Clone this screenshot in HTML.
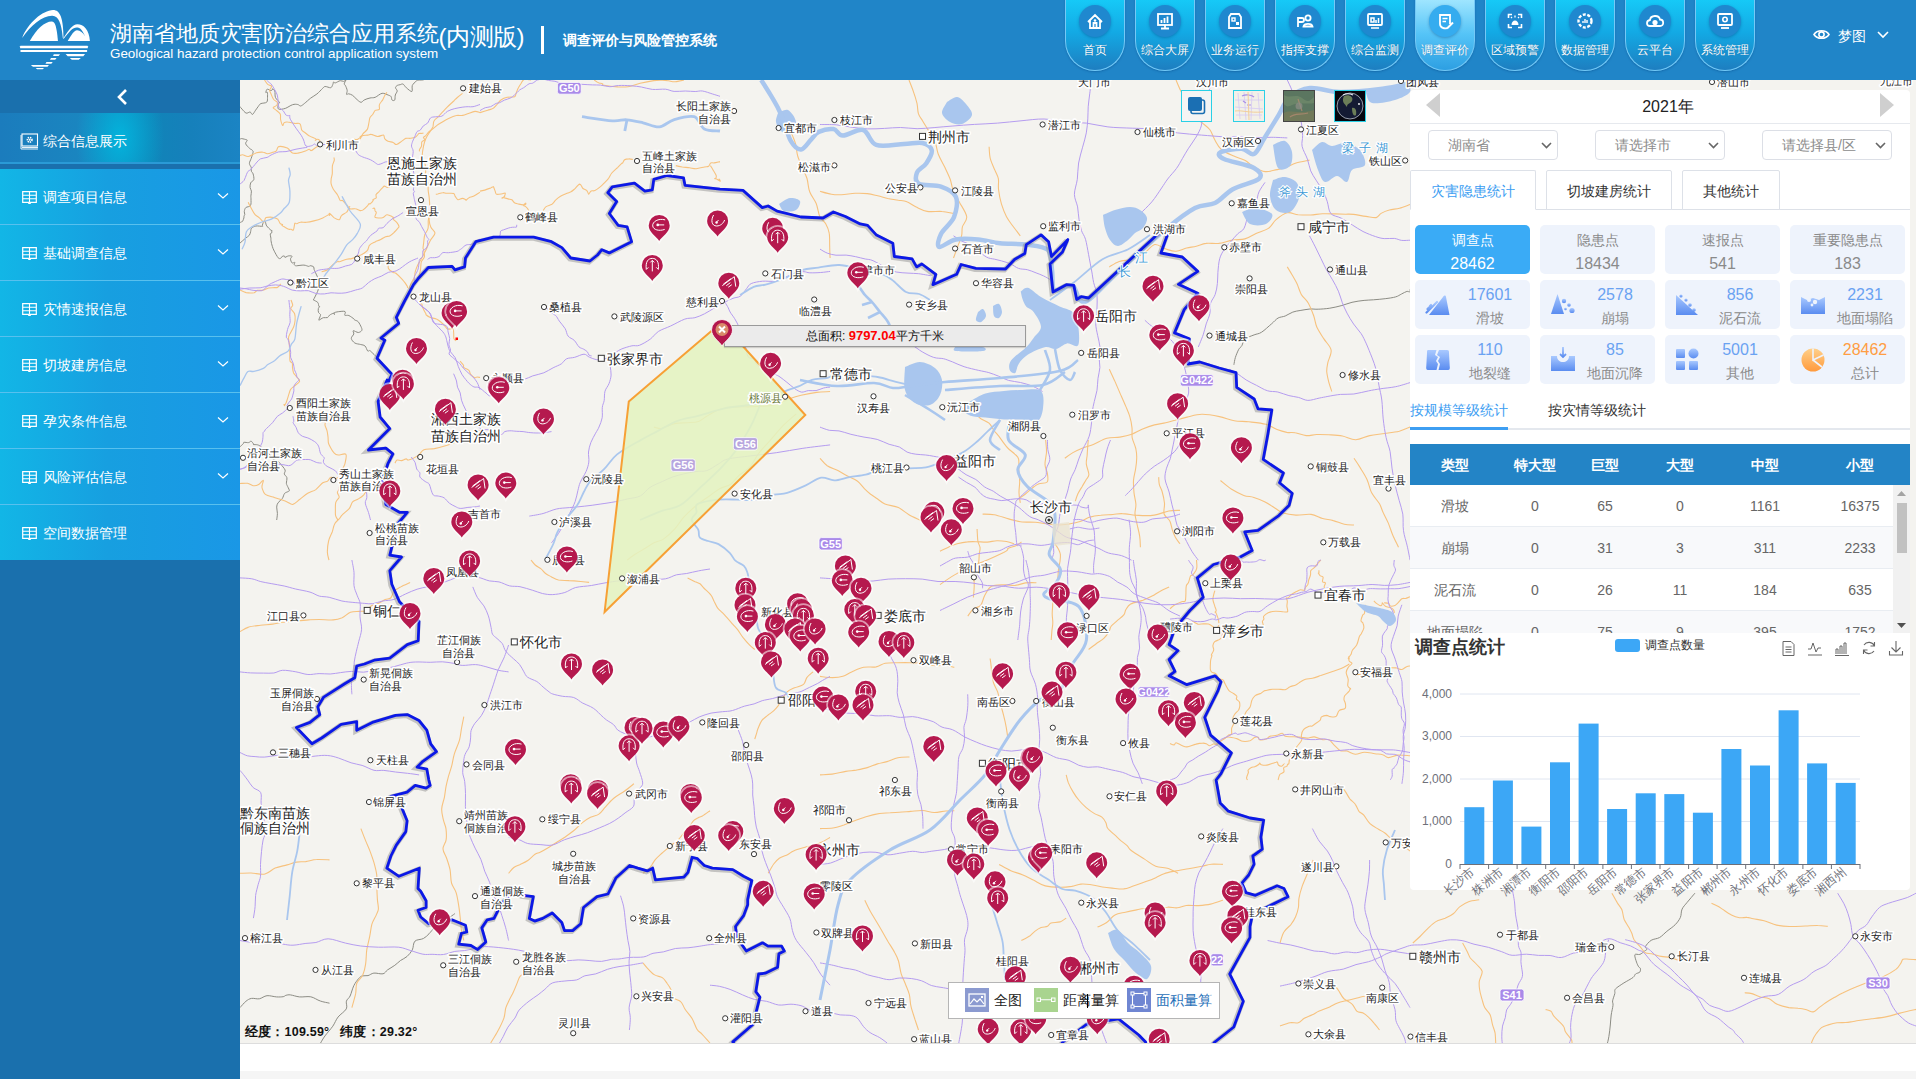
<!DOCTYPE html><html><head><meta charset="utf-8"><style>
*{margin:0;padding:0;box-sizing:border-box}
html,body{width:1916px;height:1079px;overflow:hidden;background:#f5f5f5;font-family:"Liberation Sans",sans-serif}
.a{position:absolute;white-space:nowrap}
#hdr{position:absolute;left:0;top:0;width:1916px;height:80px;background:#2085c8}
.nb{position:absolute;top:-2px;width:60px;height:73px;border-radius:0 0 30px 30px;border:1px solid #74c9f6;border-top:none;box-shadow:0 1px 2px rgba(0,60,120,.35)}
.nb .ic{position:absolute;left:13px;top:7px;width:32px;height:32px;border-radius:50%;background:#1f88cf;box-shadow:0 1px 3px rgba(0,50,110,.35)}
.nb.act .ic{background:#35acef}
.nb .ic svg{position:absolute;left:0;top:0}
.nb .nt{position:absolute;left:-6px;width:70px;top:44px;text-align:center;color:#fff;font-size:12px;line-height:16px;text-shadow:0 0 1px rgba(0,40,90,.4)}
#side{position:absolute;left:0;top:80px;width:240px;height:999px;background:#1a70ad}
.mi{position:absolute;left:0;width:240px;height:55px;background:linear-gradient(90deg,#12b6e6,#179fe0 45%,#1a97e6);color:#fff;font-size:14px}
.mi .t{position:absolute;left:43px;top:20px;line-height:16px}
.mi svg{position:absolute}
#map{position:absolute;left:240px;top:80px;width:1676px;height:963px;background:#f4f3ef;overflow:hidden}
#foot{position:absolute;left:240px;top:1043px;width:1676px;height:28px;background:#fff;border-top:1px solid #ddd}
#panel{position:absolute;left:1410px;top:90px;width:500px;height:800px;background:#fff;border-radius:4px}
</style></head><body>
<div id="map">
<svg width="1676" height="963" viewBox="240 80 1676 963" style="position:absolute;left:0;top:0" font-family="Liberation Sans, sans-serif">
<rect x="240" y="80" width="1676" height="963" fill="#f4f3ef"/>
<path d="M1233.9 364.8 C1234.1 363.6 1234.6 360.0 1235.4 357.4 C1236.2 354.8 1237.7 351.4 1238.7 349.4 C1239.8 347.5 1240.9 347.3 1241.9 345.6 C1242.9 343.9 1242.9 340.9 1244.9 339.1 C1246.9 337.3 1251.3 336.0 1254.1 334.9 C1256.9 333.7 1258.7 334.1 1261.6 332.2 C1264.5 330.4 1268.8 326.1 1271.6 323.8 C1274.4 321.4 1275.9 319.3 1278.1 318.0 C1280.4 316.8 1282.7 317.0 1285.2 316.0 C1287.6 315.0 1290.3 313.0 1292.8 312.1 C1295.3 311.2 1297.2 311.0 1300.1 310.5 C1303.0 310.0 1306.9 309.3 1309.9 309.0 C1312.9 308.8 1314.9 309.4 1318.2 309.2 C1321.5 309.1 1325.8 308.8 1329.8 308.2 C1333.7 307.6 1338.1 306.5 1341.9 305.5 C1345.6 304.5 1348.3 303.2 1352.0 302.3 C1355.7 301.4 1360.5 300.8 1364.1 300.4 C1367.6 300.0 1369.9 300.1 1373.4 299.8 C1376.9 299.5 1381.5 299.2 1385.2 298.7 C1388.9 298.2 1392.9 297.7 1395.6 296.9 C1398.3 296.2 1399.6 294.9 1401.5 294.0 C1403.4 293.1 1405.5 291.8 1406.9 291.4 C1408.2 291.1 1409.2 292.3 1409.7 291.9 C1410.3 291.5 1410.1 289.6 1410.1 289.2" fill="none" stroke="#8c8c84" stroke-width="1"/>
<path d="M454.9 913.6 C453.5 914.6 449.5 917.6 446.8 919.3 C444.1 921.1 440.7 922.9 438.7 924.2 C436.6 925.6 436.1 925.8 434.5 927.4 C432.9 929.0 430.8 932.0 429.0 933.8 C427.1 935.7 425.7 937.3 423.4 938.5 C421.0 939.8 416.7 939.3 414.9 941.2 C413.0 943.1 413.6 947.4 412.3 949.9 C410.9 952.5 408.9 954.7 407.0 956.5 C405.0 958.3 402.5 959.1 400.5 960.5 C398.5 962.0 397.0 963.7 394.8 965.3 C392.6 966.9 389.4 968.6 387.4 970.0 C385.5 971.5 385.2 973.3 383.0 973.8 C380.7 974.3 376.4 972.8 373.9 973.1 C371.4 973.4 370.0 975.1 368.0 975.6 C366.1 976.0 363.9 975.4 362.3 975.9 C360.7 976.4 360.1 977.0 358.6 978.6 C357.2 980.3 355.2 982.8 353.8 985.7 C352.4 988.6 351.3 993.4 350.1 996.0 C348.9 998.6 347.0 999.0 346.4 1001.2 C345.7 1003.3 347.7 1006.2 346.3 1008.9 C344.9 1011.5 340.3 1014.2 338.1 1017.0 C335.8 1019.9 335.0 1023.0 332.8 1026.2 C330.6 1029.3 327.0 1033.1 325.0 1035.9 C322.9 1038.7 321.3 1041.8 320.6 1043.0" fill="none" stroke="#8c8c84" stroke-width="1"/>
<path d="M240.0 1007.6 C241.0 1006.6 244.0 1002.8 245.9 1001.3 C247.8 999.8 249.2 998.8 251.5 998.4 C253.7 998.0 256.7 999.2 259.3 998.8 C261.9 998.3 264.1 996.0 267.0 995.7 C269.8 995.4 273.7 996.7 276.4 996.9 C279.1 997.1 281.6 996.9 283.2 996.7 C284.8 996.4 284.8 995.6 286.0 995.3 C287.2 995.0 288.3 994.6 290.5 994.9 C292.8 995.2 296.1 996.5 299.4 996.9 C302.8 997.2 307.3 996.2 310.8 996.8 C314.2 997.5 317.1 1000.0 320.3 1001.0 C323.4 1002.1 328.0 1002.8 329.5 1003.2" fill="none" stroke="#8c8c84" stroke-width="1"/>
<path d="M1694.9 893.2 C1693.6 894.7 1689.4 899.7 1687.2 902.3 C1685.1 905.0 1683.2 906.6 1682.1 909.1 C1680.9 911.6 1681.5 914.8 1680.4 917.4 C1679.2 920.0 1677.5 922.3 1675.2 924.7 C1673.0 927.0 1669.5 929.1 1666.9 931.3 C1664.3 933.4 1662.2 936.0 1659.6 937.5 C1657.0 939.0 1653.6 938.8 1651.2 940.3 C1648.9 941.7 1646.2 945.0 1645.5 946.5 C1644.8 948.0 1646.9 948.5 1646.8 949.3 C1646.7 950.1 1645.9 950.2 1644.7 951.0 C1643.5 951.9 1641.5 953.8 1639.9 954.4 C1638.2 955.0 1635.4 953.4 1634.9 954.7 C1634.3 956.0 1635.9 960.1 1636.5 962.1 C1637.2 964.1 1638.0 965.8 1638.7 966.8 C1639.3 967.9 1640.2 967.5 1640.4 968.4 C1640.6 969.3 1640.6 971.1 1639.8 972.1 C1639.0 973.0 1636.7 973.1 1635.6 974.0 C1634.4 974.9 1635.0 975.9 1633.1 977.4 C1631.2 978.9 1626.7 981.2 1623.9 982.9 C1621.2 984.7 1618.1 986.6 1616.6 987.9 C1615.1 989.1 1615.1 989.5 1614.8 990.4 C1614.5 991.4 1615.2 991.8 1614.8 993.6 C1614.4 995.3 1612.9 999.0 1612.6 1000.9 C1612.3 1002.9 1613.3 1002.9 1613.0 1005.3 C1612.8 1007.6 1611.6 1011.7 1611.2 1015.0 C1610.7 1018.3 1610.7 1021.5 1610.3 1025.0 C1609.9 1028.6 1609.5 1033.1 1608.9 1036.4 C1608.4 1039.7 1607.3 1043.5 1607.0 1044.9" fill="none" stroke="#8c8c84" stroke-width="1"/>
<path d="M240.0 106.5 C240.3 106.9 240.9 108.1 242.0 109.1 C243.0 110.2 244.8 112.6 246.1 113.1 C247.5 113.6 249.0 111.8 250.1 112.0 C251.2 112.3 251.6 114.8 252.5 114.4 C253.4 114.1 254.6 111.5 255.6 110.2 C256.6 108.8 257.5 107.4 258.4 106.3 C259.2 105.2 259.4 104.3 260.8 103.6 C262.2 103.0 265.6 103.2 266.7 102.2 C267.8 101.1 267.4 98.9 267.5 97.3 C267.6 95.7 267.6 93.1 267.3 92.3 C267.0 91.5 265.8 93.0 265.8 92.5 C265.8 91.9 266.5 89.4 267.3 89.1 C268.2 88.9 270.1 90.8 271.0 90.7 C271.9 90.7 272.4 89.2 272.6 89.0 C272.8 88.7 271.9 88.8 272.3 89.1 C272.7 89.4 274.3 89.5 274.8 90.9 C275.3 92.4 274.7 95.7 275.5 97.6 C276.3 99.5 279.0 101.2 279.5 102.3 C279.9 103.4 278.4 103.2 278.2 104.4 C278.1 105.5 277.4 108.4 278.6 109.1 C279.8 109.7 283.0 109.1 285.3 108.4 C287.6 107.6 290.5 105.3 292.6 104.7 C294.6 104.0 296.4 104.3 297.7 104.5 C299.1 104.7 299.5 106.1 300.6 106.0 C301.7 105.8 302.7 104.9 304.4 103.5 C306.1 102.2 308.6 99.7 310.7 98.1 C312.8 96.5 314.9 95.6 316.9 94.0 C318.9 92.4 321.2 89.7 322.6 88.4 C323.9 87.2 323.8 86.6 325.1 86.5 C326.5 86.3 329.4 88.0 330.7 87.7 C332.0 87.4 332.3 85.5 332.8 84.5 C333.3 83.6 333.2 82.2 333.6 81.9 C334.0 81.6 334.2 83.1 335.3 82.9 C336.4 82.7 338.8 80.9 340.2 80.7 C341.6 80.5 342.6 81.5 343.6 81.4 C344.6 81.3 345.6 80.2 346.0 80.0" fill="none" stroke="#8c8c84" stroke-width="1"/>
<path d="M346.0 80.0 C345.7 80.6 344.3 83.0 344.2 83.9 C344.1 84.8 344.8 84.3 345.3 85.3 C345.8 86.4 347.0 88.9 347.2 90.4 C347.4 91.9 346.2 93.7 346.5 94.3 C346.7 94.9 347.7 93.7 348.7 93.8 C349.7 94.0 351.3 94.5 352.5 95.3 C353.8 96.1 354.6 97.5 356.0 98.6 C357.4 99.8 359.5 102.1 360.9 102.3 C362.3 102.5 362.7 100.7 364.2 100.0 C365.7 99.2 368.1 98.4 370.0 98.0 C371.8 97.5 373.1 98.1 375.2 97.3 C377.2 96.5 379.9 93.7 382.1 93.3 C384.3 93.0 386.8 94.6 388.3 95.1 C389.8 95.7 390.5 95.8 391.1 96.6 C391.7 97.4 391.4 99.4 392.0 100.0 C392.6 100.6 394.2 100.9 394.7 100.1 C395.3 99.2 394.9 96.5 395.3 95.0 C395.7 93.5 397.2 92.2 397.2 91.0 C397.3 89.8 395.5 88.7 395.5 87.7 C395.5 86.8 396.5 85.9 397.3 85.4 C398.1 84.9 399.1 85.0 400.1 84.7 C401.1 84.5 402.0 83.6 403.1 84.1 C404.1 84.6 404.9 86.6 406.4 87.8 C407.9 89.1 411.0 91.9 411.9 91.5 C412.9 91.1 411.6 87.2 412.3 85.5 C413.0 83.8 415.1 82.1 416.1 81.2 C417.1 80.3 417.1 80.4 418.3 80.2 C419.6 80.0 422.7 80.0 423.5 80.0" fill="none" stroke="#8c8c84" stroke-width="1"/>
<path d="M240.0 139.1 C240.3 139.1 240.7 138.5 241.8 138.6 C242.9 138.8 245.8 139.5 246.7 139.8 C247.6 140.2 247.2 140.1 247.0 140.8 C246.9 141.4 245.3 142.5 245.7 143.8 C246.1 145.1 248.6 147.5 249.6 148.4 C250.6 149.4 251.3 149.3 251.8 149.7 C252.2 150.0 252.2 150.1 252.4 150.5 C252.7 150.9 253.4 150.8 253.1 152.2 C252.9 153.5 251.8 156.6 251.2 158.4 C250.6 160.3 249.4 161.8 249.4 163.4 C249.4 164.9 251.0 166.4 251.3 167.7 C251.6 169.0 251.0 170.1 251.3 171.1 C251.6 172.1 252.7 172.4 253.1 173.9 C253.5 175.3 254.2 178.2 253.8 179.7 C253.4 181.1 251.3 181.4 250.7 182.8 C250.1 184.1 250.0 186.2 250.1 187.6 C250.2 189.0 251.3 189.7 251.4 191.1 C251.5 192.4 251.0 194.6 250.9 195.9 C250.8 197.2 251.0 197.3 251.0 198.9 C250.9 200.6 251.4 204.1 250.5 205.5 C249.7 207.0 246.9 206.6 245.8 207.6 C244.8 208.6 244.5 210.3 244.3 211.4 C244.1 212.5 244.8 213.6 244.8 214.4 C244.7 215.2 244.1 215.5 244.0 216.1 C243.8 216.6 244.2 217.1 243.9 217.9 C243.7 218.8 243.0 220.6 242.6 221.3 C242.2 222.0 241.8 221.7 241.4 221.9 C240.9 222.1 240.2 222.6 240.0 222.7" fill="none" stroke="#8c8c84" stroke-width="1"/>
<path d="M240.0 243.1 C240.9 242.3 243.7 239.8 245.3 238.4 C246.8 237.1 248.5 236.4 249.4 235.2 C250.3 234.0 250.3 232.5 250.7 231.3 C251.0 230.2 250.7 229.1 251.6 228.2 C252.4 227.3 254.0 226.4 255.9 226.0 C257.7 225.7 261.4 226.5 262.5 226.3 C263.6 226.1 262.1 225.9 262.4 225.0 C262.7 224.0 263.8 221.1 264.3 220.7 C264.8 220.2 265.1 221.4 265.5 222.3 C265.9 223.2 265.8 224.7 266.7 225.9 C267.6 227.2 269.9 229.3 270.8 230.1 C271.7 230.9 271.9 230.6 272.0 230.6 C272.2 230.7 271.8 230.1 271.7 230.4 C271.7 230.8 272.0 232.3 271.8 232.8 C271.5 233.4 270.4 233.1 270.2 233.9 C270.1 234.8 270.7 236.8 270.9 238.0 C271.0 239.1 270.8 239.3 271.0 240.7 C271.2 242.1 271.7 244.6 272.3 246.3 C272.8 248.1 273.3 249.3 274.3 251.2 C275.3 253.1 277.1 256.6 278.2 257.8 C279.2 259.0 279.9 258.6 280.7 258.3 C281.4 258.0 282.0 256.3 282.7 256.0 C283.4 255.7 284.4 256.2 284.8 256.4 C285.1 256.7 284.8 257.4 285.0 257.5 C285.2 257.6 285.5 257.2 285.9 257.0 C286.3 256.8 286.8 256.5 287.3 256.3 C287.9 256.1 288.5 255.7 289.3 255.8 C290.1 255.8 291.9 255.9 292.1 256.4 C292.3 256.9 290.5 257.8 290.5 258.9 C290.5 259.9 291.3 262.3 292.0 262.9 C292.8 263.5 294.4 262.1 294.8 262.4 C295.2 262.6 294.1 264.0 294.2 264.5 C294.3 265.1 295.0 265.4 295.4 265.6 C295.8 265.8 295.1 265.9 296.5 265.8 C297.9 265.7 301.9 265.0 303.9 265.1 C305.9 265.2 307.6 266.3 308.7 266.4 C309.8 266.5 309.5 265.6 310.3 265.7 C311.1 265.8 313.0 266.2 313.6 266.8 C314.2 267.4 313.8 268.5 314.1 269.4 C314.4 270.3 314.6 270.5 315.4 272.4 C316.2 274.2 318.2 278.2 318.9 280.5 C319.5 282.8 319.3 284.4 319.0 286.2 C318.8 288.0 318.5 289.1 317.6 291.4 C316.6 293.7 314.1 298.6 313.4 300.0" fill="none" stroke="#8c8c84" stroke-width="1"/>
<path d="M313.4 300.0 C314.1 300.4 316.9 301.4 317.8 302.5 C318.7 303.5 318.5 305.7 318.8 306.3 C319.1 307.0 319.8 306.1 319.7 306.4 C319.7 306.8 318.6 307.4 318.4 308.4 C318.1 309.4 318.1 311.4 318.5 312.5 C318.8 313.5 320.4 313.6 320.6 314.6 C320.7 315.7 319.3 318.1 319.1 319.0 C318.9 319.9 318.5 320.3 319.1 320.1 C319.8 319.9 321.9 318.1 323.3 317.7 C324.7 317.3 326.4 318.0 327.5 317.6 C328.5 317.2 328.5 315.8 329.6 315.1 C330.6 314.4 332.8 313.3 333.7 313.2 C334.5 313.1 334.4 314.7 334.5 314.6 C334.5 314.6 333.5 313.3 334.1 312.8 C334.7 312.3 336.5 312.0 338.3 311.7 C340.1 311.5 343.9 310.9 345.0 311.5 C346.1 312.0 344.4 314.5 344.7 315.1 C344.9 315.8 345.7 315.3 346.4 315.4 C347.1 315.5 347.7 315.0 349.0 315.6 C350.3 316.2 353.2 318.3 354.1 319.1 C355.0 319.8 353.9 319.6 354.6 320.0 C355.2 320.4 357.1 320.5 358.2 321.7 C359.3 323.0 360.8 326.1 361.4 327.5 C362.0 329.0 362.2 329.8 361.7 330.6 C361.2 331.4 359.7 332.4 358.3 332.5 C356.9 332.5 354.0 330.5 353.3 330.7 C352.5 331.0 354.1 332.7 353.8 334.0 C353.5 335.2 351.1 336.9 351.3 338.4 C351.4 339.9 353.3 342.0 354.8 343.0 C356.4 344.0 359.0 344.0 360.7 344.5 C362.4 345.0 363.9 344.9 365.0 346.0 C366.2 347.1 366.9 350.1 367.6 350.9 C368.4 351.6 369.1 350.5 369.6 350.5 C370.0 350.5 369.6 350.3 370.3 350.9 C371.0 351.6 372.6 353.1 374.0 354.4 C375.4 355.8 377.9 358.4 378.7 359.1" fill="none" stroke="#8c8c84" stroke-width="1"/>
<path d="M240.0 446.8 C240.6 446.2 242.9 444.2 243.5 443.4 C244.2 442.6 243.1 442.4 243.9 442.3 C244.8 442.1 247.4 442.8 248.6 442.6 C249.8 442.4 250.3 441.0 251.1 441.2 C251.9 441.4 253.0 443.3 253.4 443.8 C253.8 444.4 252.6 444.4 253.3 444.5 C254.0 444.7 256.2 444.5 257.4 444.8 C258.6 445.1 260.1 445.8 260.7 446.3 C261.3 446.9 260.7 447.5 260.9 448.3 C261.2 449.2 261.4 450.7 262.5 451.3 C263.6 452.0 266.2 451.4 267.6 452.1 C268.9 452.9 269.7 454.8 270.6 456.0 C271.6 457.2 272.0 458.7 273.2 459.5 C274.5 460.4 276.8 460.5 278.0 461.3 C279.3 462.0 279.5 462.6 280.6 464.1 C281.8 465.5 284.5 468.4 285.1 470.0 C285.7 471.7 284.0 472.8 284.3 474.0 C284.6 475.3 286.5 476.1 286.9 477.7 C287.2 479.2 286.3 482.0 286.4 483.2 C286.4 484.5 286.6 484.2 287.1 485.4 C287.6 486.5 289.0 489.1 289.3 490.1 C289.5 491.1 289.4 490.8 288.6 491.3 C287.9 491.9 285.7 492.2 284.6 493.4 C283.6 494.6 283.4 497.0 282.3 498.5 C281.2 500.1 279.0 501.4 278.0 502.8 C277.1 504.2 276.8 505.3 276.7 507.1 C276.6 508.8 277.4 511.2 277.4 513.4 C277.4 515.5 276.8 518.9 276.7 520.0" fill="none" stroke="#8c8c84" stroke-width="1"/>
<path d="M462.5 93.4 C461.6 94.0 458.7 96.3 457.3 97.5 C455.8 98.8 455.5 99.3 453.8 101.0 C452.0 102.7 449.3 105.0 446.7 107.6 C444.2 110.1 440.7 114.0 438.6 116.3 C436.5 118.5 434.9 119.2 434.0 121.0 C433.0 122.8 433.5 125.2 432.9 127.0 C432.2 128.7 431.2 129.6 430.1 131.4 C428.9 133.3 427.1 135.7 426.0 138.2 C424.9 140.6 424.1 143.1 423.5 146.1 C422.9 149.1 422.1 153.2 422.3 156.2 C422.6 159.2 424.5 161.4 425.1 164.0 C425.6 166.5 425.6 169.4 425.7 171.4 C425.7 173.4 424.8 173.8 425.2 175.8 C425.6 177.7 427.4 180.5 427.9 183.0 C428.4 185.4 428.0 188.1 428.2 190.5 C428.4 193.0 429.0 194.9 429.2 197.7 C429.5 200.5 429.7 203.7 429.7 207.5 C429.7 211.2 429.0 216.8 429.2 220.2 C429.4 223.5 429.9 225.2 430.9 227.3 C431.9 229.5 435.1 230.9 435.0 233.1 C434.9 235.3 431.8 237.7 430.3 240.4 C428.9 243.0 427.8 246.0 426.3 249.2 C424.8 252.3 422.6 256.3 421.2 259.1 C419.7 261.8 418.4 263.6 417.4 265.7 C416.4 267.8 415.7 269.9 415.2 271.8 C414.7 273.8 415.0 275.6 414.3 277.5 C413.7 279.4 412.1 281.1 411.2 283.0 C410.3 285.0 409.5 288.1 409.1 289.2" fill="none" stroke="#f7c27e" stroke-width="1.1"/>
<path d="M653.9 427.1 C655.1 427.4 659.0 428.7 661.0 428.6 C663.0 428.6 663.4 427.6 665.8 426.8 C668.3 425.9 672.0 424.1 675.7 423.4 C679.3 422.7 683.9 423.0 687.7 422.7 C691.5 422.4 695.4 422.4 698.5 421.4 C701.5 420.4 702.9 418.5 706.0 416.7 C709.1 414.9 713.4 412.0 717.1 410.5 C720.8 409.0 724.3 408.2 728.3 407.5 C732.2 406.9 737.1 406.9 740.8 406.8 C744.4 406.7 746.3 406.9 750.2 406.8 C754.2 406.7 760.1 406.5 764.3 406.2 C768.5 405.8 771.3 405.9 775.5 404.6 C779.7 403.4 785.2 400.3 789.5 398.7 C793.7 397.2 796.6 396.3 801.1 395.3 C805.7 394.2 811.8 393.0 816.7 392.4 C821.5 391.8 827.9 391.7 830.1 391.5" fill="none" stroke="#f7c27e" stroke-width="1.1"/>
<path d="M627.2 560.2 C628.4 559.2 631.7 556.5 634.7 554.5 C637.8 552.5 642.4 550.0 645.7 548.0 C649.0 546.0 651.6 544.1 654.5 542.6 C657.5 541.1 660.1 541.3 663.4 539.1 C666.8 536.8 671.2 532.8 674.6 529.1 C678.0 525.4 680.2 521.1 683.8 517.1 C687.5 513.1 692.3 508.8 696.6 505.3 C700.9 501.7 705.8 498.5 709.7 495.7 C713.6 492.9 716.6 490.5 720.1 488.5 C723.6 486.6 727.6 486.4 730.7 484.2 C733.9 482.0 735.8 478.3 739.0 475.4 C742.1 472.6 746.6 470.8 749.8 467.2 C753.1 463.5 755.2 458.0 758.6 453.5 C762.0 449.1 766.1 445.0 770.3 440.3 C774.4 435.6 779.0 429.8 783.3 425.4 C787.7 421.0 794.1 415.7 796.3 413.8" fill="none" stroke="#f7c27e" stroke-width="1.1"/>
<path d="M787.4 124.5 C788.3 126.4 791.2 132.8 792.7 136.1 C794.1 139.5 795.0 141.4 795.8 144.6 C796.7 147.9 796.5 151.8 797.6 155.6 C798.6 159.4 800.8 163.8 802.4 167.6 C804.0 171.5 805.7 174.5 807.0 178.5 C808.2 182.5 808.1 187.7 809.7 191.8 C811.2 196.0 814.5 199.4 816.2 203.5 C817.9 207.7 818.3 213.5 819.9 216.8 C821.5 220.2 824.2 221.0 825.7 223.7 C827.3 226.5 828.6 229.3 829.2 233.2 C829.9 237.1 829.5 243.0 829.7 247.1 C829.8 251.3 830.0 256.2 830.1 258.0" fill="none" stroke="#f7c27e" stroke-width="1.1"/>
<path d="M329.0 560.2 C328.7 558.9 327.5 555.6 327.4 552.4 C327.3 549.2 327.8 544.4 328.6 541.0 C329.4 537.6 331.1 534.9 332.2 532.0 C333.2 529.1 333.5 526.0 334.8 523.7 C336.0 521.5 338.3 519.9 339.6 518.4 C340.8 516.9 340.6 516.4 342.2 514.8 C343.8 513.1 347.4 510.8 349.2 508.6 C350.9 506.5 351.2 503.4 352.6 501.9 C354.1 500.4 355.8 500.5 357.7 499.3 C359.6 498.2 362.0 497.0 363.8 494.9 C365.6 492.7 366.8 488.9 368.4 486.5 C370.1 484.1 372.7 481.5 373.5 480.5" fill="none" stroke="#f7c27e" stroke-width="1.1"/>
<path d="M909.0 80.0 C909.7 81.9 912.1 87.7 913.4 91.6 C914.8 95.4 916.1 99.6 917.0 103.3 C917.8 107.0 917.5 110.7 918.4 113.6 C919.3 116.5 921.0 118.2 922.5 120.8 C924.0 123.4 925.6 125.9 927.6 129.1 C929.6 132.3 932.8 135.8 934.6 140.0 C936.4 144.1 936.5 149.5 938.2 154.0 C939.9 158.5 942.7 162.8 944.7 167.0 C946.7 171.2 948.8 175.5 950.2 179.2 C951.5 182.9 951.4 185.5 952.9 189.4 C954.4 193.2 957.1 197.6 959.4 202.2 C961.8 206.7 966.2 212.6 966.7 216.7 C967.2 220.8 963.3 223.6 962.4 226.8 C961.6 229.9 962.4 232.5 961.6 235.7 C960.9 239.0 959.1 242.6 957.8 246.3 C956.4 250.1 954.2 256.1 953.5 258.0" fill="none" stroke="#f7c27e" stroke-width="1.1"/>
<path d="M989.1 146.8 C989.3 148.8 989.3 154.8 990.3 158.7 C991.3 162.7 993.6 167.0 995.0 170.4 C996.3 173.7 997.8 175.6 998.4 178.9 C998.9 182.1 998.0 185.8 998.6 190.0 C999.1 194.1 1000.1 199.3 1001.4 203.8 C1002.8 208.2 1004.5 212.9 1006.5 216.8 C1008.5 220.6 1011.1 223.6 1013.4 226.8 C1015.7 229.9 1019.1 234.3 1020.3 235.8" fill="none" stroke="#f7c27e" stroke-width="1.1"/>
<path d="M820.0 191.3 C821.9 191.8 827.8 193.7 831.4 194.2 C834.9 194.8 837.4 194.9 841.4 194.7 C845.3 194.6 850.8 193.5 855.1 193.3 C859.4 193.1 863.5 193.2 867.3 193.6 C871.0 194.0 874.3 195.0 877.7 195.8 C881.2 196.6 884.4 197.7 887.8 198.5 C891.3 199.2 895.2 199.6 898.4 200.2 C901.6 200.7 903.9 200.6 906.9 201.8 C909.9 202.9 912.8 205.5 916.2 207.1 C919.5 208.7 922.8 210.7 927.1 211.4 C931.4 212.2 937.6 211.1 942.0 211.5 C946.4 211.8 951.6 213.2 953.5 213.5" fill="none" stroke="#f7c27e" stroke-width="1.1"/>
<path d="M1109.3 266.9 C1110.9 266.0 1115.4 262.7 1119.2 261.4 C1123.0 260.1 1127.7 260.6 1131.9 259.2 C1136.2 257.8 1140.8 255.4 1144.6 253.0 C1148.4 250.5 1151.2 245.2 1154.8 244.5 C1158.3 243.9 1162.3 247.9 1165.9 249.1 C1169.4 250.2 1172.6 251.5 1176.0 251.3 C1179.5 251.1 1183.3 248.8 1186.6 248.0 C1190.0 247.2 1193.1 247.0 1196.3 246.2 C1199.5 245.5 1202.3 243.8 1206.0 243.4 C1209.8 242.9 1214.2 243.9 1218.7 243.4 C1223.1 242.8 1228.4 240.8 1232.7 240.1 C1237.1 239.3 1241.1 240.0 1244.9 238.9 C1248.8 237.8 1252.1 235.2 1256.0 233.4 C1259.9 231.7 1265.1 230.7 1268.4 228.4 C1271.7 226.2 1272.9 222.4 1276.1 219.7 C1279.2 217.1 1283.5 213.6 1287.2 212.8 C1290.9 212.0 1294.2 214.3 1298.1 214.7 C1302.0 215.0 1306.5 215.1 1310.6 215.0 C1314.6 214.8 1318.3 214.0 1322.4 213.8 C1326.5 213.6 1331.3 213.8 1335.2 213.9 C1339.1 214.0 1342.9 214.1 1345.9 214.2 C1348.9 214.2 1349.9 214.0 1353.3 214.4 C1356.6 214.8 1362.2 215.9 1366.0 216.4 C1369.8 216.9 1373.7 218.0 1376.2 217.6 C1378.7 217.1 1378.9 214.7 1381.1 213.4 C1383.2 212.2 1386.2 210.8 1389.3 210.0 C1392.4 209.1 1396.0 209.2 1399.5 208.3 C1402.9 207.4 1408.3 205.2 1410.1 204.6" fill="none" stroke="#f7c27e" stroke-width="1.1"/>
<path d="M1064.8 458.3 C1066.1 457.3 1070.0 454.3 1072.9 452.6 C1075.8 450.9 1078.8 449.6 1082.2 448.2 C1085.6 446.9 1089.2 446.1 1093.3 444.5 C1097.4 442.8 1102.4 439.5 1106.8 438.3 C1111.3 437.1 1115.8 437.8 1119.9 437.1 C1124.1 436.4 1128.2 435.5 1131.8 434.2 C1135.5 432.9 1138.2 430.9 1142.0 429.3 C1145.7 427.8 1150.5 426.0 1154.5 424.9 C1158.4 423.8 1162.3 423.6 1165.7 422.8 C1169.1 422.0 1171.4 421.1 1175.0 420.2 C1178.5 419.2 1182.6 418.1 1187.1 417.1 C1191.6 416.1 1196.5 414.4 1201.9 414.3 C1207.3 414.2 1214.0 415.5 1219.4 416.6 C1224.8 417.6 1229.3 419.9 1234.2 420.7 C1239.1 421.6 1243.6 421.2 1248.9 421.8 C1254.2 422.4 1261.2 423.0 1265.9 424.3 C1270.6 425.6 1273.6 428.2 1277.1 429.6 C1280.5 430.9 1283.7 431.8 1286.8 432.4 C1289.8 432.9 1292.0 432.2 1295.2 432.8 C1298.4 433.3 1302.6 435.3 1306.1 435.6 C1309.7 435.9 1312.8 434.7 1316.6 434.5 C1320.3 434.4 1324.5 434.5 1328.8 434.7 C1333.1 435.0 1337.9 435.2 1342.4 436.0 C1346.8 436.9 1351.2 439.9 1355.7 439.8 C1360.3 439.7 1364.9 436.6 1369.7 435.6 C1374.6 434.5 1380.1 434.3 1385.0 433.5 C1389.9 432.8 1395.1 432.2 1399.3 431.2 C1403.4 430.1 1408.3 427.8 1410.1 427.1" fill="none" stroke="#f7c27e" stroke-width="1.1"/>
<path d="M1109.3 369.3 C1110.1 371.1 1112.6 376.4 1114.5 380.4 C1116.3 384.5 1118.3 389.2 1120.2 393.6 C1122.1 397.9 1124.2 402.6 1125.8 406.4 C1127.4 410.3 1128.8 413.0 1129.8 416.6 C1130.9 420.1 1131.6 424.3 1132.0 427.9 C1132.4 431.4 1131.6 434.3 1132.2 437.8 C1132.9 441.2 1135.0 445.1 1135.8 448.5 C1136.5 451.9 1136.8 454.6 1136.7 458.0 C1136.7 461.4 1136.2 465.2 1135.6 468.9 C1135.1 472.6 1133.8 476.2 1133.5 480.2 C1133.3 484.1 1133.6 488.7 1134.0 492.7 C1134.4 496.7 1135.7 500.8 1135.9 504.3 C1136.1 507.8 1134.8 510.6 1135.0 513.9 C1135.2 517.2 1136.2 520.3 1137.0 524.0 C1137.8 527.8 1139.2 532.5 1139.7 536.4 C1140.3 540.3 1140.3 545.5 1140.4 547.3" fill="none" stroke="#f7c27e" stroke-width="1.1"/>
<path d="M975.8 413.8 C976.6 414.6 978.7 417.2 980.9 418.8 C983.2 420.3 986.8 421.3 989.0 423.2 C991.2 425.2 992.4 428.3 994.0 430.5 C995.7 432.7 997.1 434.1 998.8 436.2 C1000.4 438.3 1002.1 441.0 1003.8 443.1 C1005.4 445.3 1006.8 447.2 1008.7 449.0 C1010.5 450.8 1013.2 452.4 1014.8 454.1 C1016.5 455.8 1017.9 456.1 1018.6 459.0 C1019.3 462.0 1018.6 468.1 1018.8 471.8 C1019.0 475.6 1019.7 477.9 1019.7 481.4 C1019.7 484.9 1018.9 489.2 1019.0 492.8 C1019.0 496.3 1020.0 501.1 1020.3 502.8" fill="none" stroke="#f7c27e" stroke-width="1.1"/>
<path d="M1287.3 266.9 C1288.0 268.1 1290.1 271.4 1291.7 274.2 C1293.3 277.0 1295.3 280.2 1296.9 283.6 C1298.5 286.9 1299.4 291.1 1301.3 294.4 C1303.2 297.7 1306.3 299.7 1308.4 303.2 C1310.4 306.8 1312.3 311.7 1313.7 315.7 C1315.1 319.8 1315.2 323.4 1316.9 327.3 C1318.6 331.1 1321.5 335.1 1323.9 338.9 C1326.3 342.7 1330.4 346.1 1331.1 350.0 C1331.8 353.9 1328.7 358.8 1327.9 362.3 C1327.2 365.9 1326.6 368.1 1326.7 371.3 C1326.9 374.6 1327.9 378.6 1328.7 381.9 C1329.6 385.3 1331.3 389.9 1331.8 391.5" fill="none" stroke="#f7c27e" stroke-width="1.1"/>
<path d="M1354.0 458.3 C1355.1 459.9 1358.1 464.3 1360.3 467.9 C1362.5 471.4 1365.3 475.6 1367.1 479.7 C1369.0 483.8 1369.5 488.6 1371.5 492.6 C1373.6 496.6 1377.5 500.5 1379.5 503.8 C1381.4 507.2 1381.6 509.3 1383.1 512.4 C1384.5 515.6 1386.6 519.1 1388.2 522.9 C1389.8 526.6 1391.0 530.9 1392.7 535.0 C1394.4 539.1 1397.6 545.2 1398.5 547.3" fill="none" stroke="#f7c27e" stroke-width="1.1"/>
<path d="M1220.5 480.5 C1222.3 481.9 1227.3 486.5 1231.2 489.0 C1235.1 491.4 1240.1 494.0 1243.8 495.4 C1247.6 496.8 1250.4 496.3 1253.9 497.4 C1257.5 498.5 1261.5 500.0 1265.1 501.9 C1268.7 503.7 1272.6 506.6 1275.6 508.5 C1278.6 510.4 1279.7 511.9 1283.1 513.1 C1286.5 514.2 1291.2 514.9 1295.9 515.1 C1300.6 515.4 1306.6 513.8 1311.1 514.4 C1315.5 515.0 1318.9 517.5 1322.6 518.5 C1326.3 519.5 1329.7 519.6 1333.3 520.6 C1336.9 521.5 1340.8 523.5 1344.3 524.2 C1347.7 525.0 1352.4 524.9 1354.0 525.0" fill="none" stroke="#f7c27e" stroke-width="1.1"/>
<path d="M820.0 458.3 C821.2 459.5 824.2 463.6 827.2 465.7 C830.2 467.7 834.5 468.9 837.9 470.6 C841.3 472.3 844.2 474.3 847.5 476.0 C850.7 477.7 854.5 478.8 857.3 481.0 C860.2 483.1 862.3 486.6 864.6 488.9 C866.8 491.1 868.5 492.6 870.6 494.3 C872.8 495.9 875.0 497.2 877.3 498.8 C879.7 500.4 881.4 502.5 884.9 503.9 C888.4 505.4 894.5 505.9 898.4 507.6 C902.3 509.4 904.9 512.3 908.6 514.4 C912.2 516.5 916.6 518.4 920.4 520.2 C924.2 522.0 929.5 524.2 931.3 525.0" fill="none" stroke="#f7c27e" stroke-width="1.1"/>
<path d="M1176.0 80.0 C1176.8 81.8 1179.2 87.7 1180.7 90.7 C1182.2 93.7 1183.6 95.0 1185.3 97.9 C1187.0 100.9 1189.3 105.4 1191.0 108.6 C1192.7 111.9 1193.7 114.9 1195.5 117.2 C1197.4 119.6 1199.7 120.8 1202.1 122.8 C1204.5 124.9 1207.8 126.9 1209.9 129.8 C1212.0 132.6 1213.0 136.7 1214.9 140.0 C1216.8 143.3 1218.2 146.8 1221.4 149.5 C1224.5 152.2 1229.8 154.3 1233.8 156.1 C1237.8 158.0 1242.0 158.8 1245.3 160.6 C1248.6 162.4 1250.3 165.1 1253.6 166.9 C1256.9 168.7 1261.3 171.1 1265.2 171.6 C1269.1 172.0 1273.5 170.3 1276.9 169.6 C1280.3 168.9 1282.6 168.5 1285.8 167.4 C1289.0 166.2 1292.1 164.2 1296.1 163.0 C1300.0 161.8 1307.3 160.6 1309.5 160.1" fill="none" stroke="#f7c27e" stroke-width="1.1"/>
<path d="M240.0 631.6 C241.4 630.9 245.2 628.1 248.6 627.1 C252.0 626.0 256.4 625.8 260.5 625.3 C264.5 624.8 269.0 624.6 272.7 624.1 C276.5 623.6 278.7 622.8 282.8 622.3 C286.9 621.8 292.9 621.3 297.2 620.9 C301.5 620.5 305.0 620.2 308.7 619.9 C312.3 619.7 315.1 619.5 319.2 619.5 C323.3 619.5 329.4 620.2 333.2 619.9 C337.0 619.6 339.3 618.9 342.2 617.7 C345.1 616.4 347.5 613.4 350.5 612.3 C353.4 611.3 357.2 611.7 359.8 611.4 C362.3 611.1 363.6 611.7 365.6 610.7 C367.6 609.7 369.6 606.8 371.8 605.5 C373.9 604.3 376.3 604.2 378.6 603.2 C380.8 602.2 383.1 600.5 385.2 599.6 C387.2 598.7 389.2 599.5 390.7 598.0 C392.2 596.6 392.6 592.7 394.1 590.9 C395.7 589.1 398.6 588.2 400.1 587.3 C401.6 586.4 401.7 586.3 403.3 585.5 C405.0 584.7 409.0 582.9 410.1 582.4" fill="none" stroke="#f7c27e" stroke-width="1.1"/>
<path d="M463.8 716.7 C463.4 718.7 462.1 725.1 461.4 729.0 C460.7 732.9 460.6 736.0 459.5 740.1 C458.3 744.3 455.6 749.8 454.3 754.1 C453.0 758.4 452.7 762.2 451.7 765.9 C450.7 769.7 449.3 773.2 448.4 776.6 C447.5 780.0 446.8 782.8 446.1 786.2 C445.4 789.7 445.1 793.5 444.4 797.3 C443.6 801.1 441.8 805.2 441.7 809.0 C441.5 812.7 442.7 816.6 443.4 819.9 C444.1 823.3 445.5 825.5 446.0 828.9 C446.4 832.2 446.6 836.6 446.1 839.9 C445.6 843.2 442.9 845.8 443.0 848.9 C443.1 852.0 445.6 855.2 446.8 858.7 C448.0 862.2 449.3 865.9 450.1 869.9 C450.9 874.0 450.5 879.2 451.5 883.0 C452.5 886.7 454.9 888.6 456.1 892.6 C457.4 896.6 458.2 902.5 458.9 906.9 C459.6 911.3 459.9 915.0 460.3 918.9 C460.7 922.7 460.9 926.4 461.4 930.0 C462.0 933.7 463.4 938.7 463.8 940.5" fill="none" stroke="#f7c27e" stroke-width="1.1"/>
<path d="M508.6 873.3 C509.5 872.4 511.9 868.9 513.8 867.5 C515.8 866.0 517.9 865.7 520.2 864.6 C522.5 863.4 525.3 862.2 527.8 860.5 C530.2 858.8 532.9 855.7 535.0 854.3 C537.0 853.0 538.0 853.2 540.1 852.2 C542.1 851.2 544.5 849.9 547.3 848.2 C550.2 846.5 554.4 843.8 557.2 842.0 C560.0 840.3 561.3 839.6 564.0 837.7 C566.7 835.8 570.5 833.3 573.6 830.8 C576.7 828.3 579.6 824.8 582.4 822.6 C585.2 820.3 587.8 818.7 590.5 817.3 C593.3 815.9 596.5 815.8 598.9 814.1 C601.4 812.4 602.9 809.8 605.3 807.2 C607.7 804.6 610.2 801.2 613.5 798.5 C616.7 795.8 621.3 793.4 624.7 791.0 C628.1 788.6 632.4 785.0 633.9 783.8" fill="none" stroke="#f7c27e" stroke-width="1.1"/>
<path d="M642.9 873.3 C643.9 872.5 647.8 869.9 649.3 868.4 C650.9 866.9 651.1 865.8 652.2 864.3 C653.2 862.8 653.9 861.2 655.5 859.4 C657.1 857.6 659.1 855.8 661.6 853.5 C664.2 851.2 668.1 847.9 670.8 845.6 C673.5 843.4 675.7 842.3 677.8 840.2 C680.0 838.2 681.9 835.3 683.7 833.1 C685.6 830.9 687.3 829.1 688.9 827.0 C690.6 825.0 692.1 822.2 693.6 820.7 C695.2 819.1 696.8 818.5 698.2 817.7 C699.7 816.9 700.5 817.1 702.4 816.0 C704.4 814.8 708.7 811.6 710.0 810.7" fill="none" stroke="#f7c27e" stroke-width="1.1"/>
<path d="M360.9 828.6 C361.7 830.7 364.4 837.7 365.9 841.4 C367.4 845.1 368.5 847.4 369.9 850.9 C371.2 854.4 372.7 858.4 373.9 862.4 C375.0 866.3 376.2 870.7 376.7 874.6 C377.2 878.5 376.7 881.6 376.8 885.7 C376.9 889.9 377.1 895.5 377.4 899.4 C377.6 903.2 378.6 906.4 378.4 909.0 C378.2 911.6 377.2 912.6 376.2 915.1 C375.1 917.6 373.0 920.5 371.9 924.1 C370.9 927.6 370.6 932.1 369.7 936.4 C368.9 940.7 367.5 945.1 366.8 949.7 C366.1 954.3 366.3 959.8 365.6 964.1 C365.0 968.3 364.1 972.0 362.7 975.2 C361.2 978.4 358.0 980.2 356.8 983.3 C355.6 986.5 356.4 989.8 355.6 993.9 C354.7 997.9 352.5 1005.3 351.9 1007.6" fill="none" stroke="#f7c27e" stroke-width="1.1"/>
<path d="M240.0 873.3 C241.8 873.3 246.9 872.9 251.1 873.0 C255.3 873.1 261.0 874.8 265.0 874.0 C269.1 873.2 271.5 869.6 275.2 868.1 C278.9 866.6 283.6 865.9 287.1 864.9 C290.6 863.9 293.2 862.6 296.3 862.1 C299.4 861.5 302.3 862.0 305.7 861.6 C309.1 861.1 312.7 859.7 316.7 859.5 C320.6 859.2 327.4 859.8 329.5 859.9" fill="none" stroke="#f7c27e" stroke-width="1.1"/>
<path d="M754.8 739.1 C755.1 738.0 756.3 734.3 756.8 732.6 C757.3 730.9 757.1 730.8 757.9 728.8 C758.8 726.7 760.2 722.7 761.9 720.4 C763.5 718.2 765.9 716.9 767.8 715.3 C769.8 713.7 771.9 712.4 773.6 710.9 C775.3 709.4 776.6 707.9 777.9 706.2 C779.2 704.4 779.7 702.7 781.3 700.4 C782.8 698.0 785.0 694.0 787.2 691.9 C789.4 689.8 791.8 689.1 794.6 687.8 C797.3 686.6 801.5 686.2 803.5 684.4 C805.6 682.7 805.4 679.4 807.0 677.3 C808.6 675.3 812.0 672.8 813.0 671.9" fill="none" stroke="#f7c27e" stroke-width="1.1"/>
<path d="M642.9 962.9 C643.6 963.7 645.3 966.1 647.3 968.1 C649.2 970.2 652.1 973.4 654.6 974.9 C657.1 976.5 660.2 976.2 662.3 977.6 C664.4 979.0 665.7 981.4 667.2 983.5 C668.7 985.5 670.0 987.5 671.1 989.9 C672.1 992.2 671.6 995.7 673.3 997.7 C674.9 999.7 679.0 999.8 680.9 1001.8 C682.9 1003.7 683.3 1006.5 685.1 1009.3 C687.0 1012.2 690.2 1015.4 692.2 1018.7 C694.1 1022.0 695.3 1026.6 697.0 1029.2 C698.6 1031.8 700.0 1032.0 702.2 1034.3 C704.4 1036.6 708.7 1041.5 710.0 1043.0" fill="none" stroke="#f7c27e" stroke-width="1.1"/>
<path d="M526.5 971.8 C525.4 972.6 521.8 974.3 520.2 976.2 C518.6 978.2 518.0 981.1 516.9 983.6 C515.8 986.2 514.8 989.0 513.5 991.7 C512.3 994.4 510.7 997.1 509.4 999.8 C508.1 1002.5 506.7 1004.9 505.8 1007.9 C504.9 1011.0 505.2 1014.2 503.9 1018.1 C502.5 1022.0 499.9 1027.2 497.7 1031.3 C495.5 1035.5 491.8 1041.0 490.7 1043.0" fill="none" stroke="#f7c27e" stroke-width="1.1"/>
<path d="M768.2 873.3 C769.1 871.8 771.9 866.5 773.7 864.0 C775.6 861.5 777.0 859.8 779.3 858.2 C781.7 856.6 785.6 855.7 787.9 854.4 C790.3 853.2 790.7 852.1 793.6 850.9 C796.4 849.7 801.7 848.2 805.0 847.2 C808.4 846.3 811.2 846.0 813.8 845.3 C816.5 844.5 818.1 843.9 820.8 842.6 C823.5 841.3 828.4 838.4 830.0 837.5" fill="none" stroke="#f7c27e" stroke-width="1.1"/>
<path d="M531.0 560.0 C531.7 560.8 533.6 563.6 535.2 565.0 C536.9 566.5 539.1 567.2 540.8 568.6 C542.5 570.0 543.8 572.2 545.6 573.5 C547.3 574.9 549.0 575.6 551.2 576.7 C553.3 577.7 555.5 579.3 558.5 580.0 C561.5 580.6 565.3 580.3 569.0 580.6 C572.7 580.8 577.4 581.2 580.7 581.5 C584.1 581.8 587.7 582.2 589.1 582.4" fill="none" stroke="#f7c27e" stroke-width="1.1"/>
<path d="M687.6 577.9 C688.9 578.5 693.1 580.7 695.1 581.7 C697.2 582.6 698.5 582.8 700.0 583.8 C701.4 584.9 701.9 586.2 703.8 588.0 C705.6 589.9 709.1 592.6 710.8 594.9 C712.6 597.1 713.1 599.3 714.2 601.5 C715.4 603.7 716.0 605.9 717.7 608.1 C719.4 610.3 722.0 612.2 724.5 614.9 C727.0 617.6 730.7 621.9 732.9 624.4 C735.1 626.8 735.9 627.4 737.6 629.6 C739.2 631.7 741.0 634.8 742.9 637.4 C744.9 639.9 747.2 642.7 749.2 644.7 C751.2 646.8 753.8 648.7 754.8 649.5" fill="none" stroke="#f7c27e" stroke-width="1.1"/>
<path d="M820.0 676.4 C822.1 676.6 828.8 677.6 832.6 677.6 C836.4 677.6 839.7 677.3 842.9 676.3 C846.1 675.4 848.2 673.4 851.7 671.9 C855.1 670.4 859.6 668.1 863.6 667.3 C867.7 666.5 872.5 667.5 876.1 666.9 C879.7 666.2 881.7 664.0 885.2 663.3 C888.7 662.6 892.8 662.8 897.1 662.7 C901.4 662.6 906.3 662.5 910.8 662.7 C915.2 662.8 919.6 663.2 923.8 663.8 C927.9 664.3 932.2 665.6 935.8 665.8 C939.3 666.0 942.1 664.8 945.1 665.1 C948.2 665.3 952.8 667.0 954.3 667.4" fill="none" stroke="#f7c27e" stroke-width="1.1"/>
<path d="M1088.6 649.5 C1089.9 648.6 1093.7 645.6 1096.2 643.7 C1098.8 641.8 1101.6 640.4 1103.8 638.3 C1105.9 636.3 1107.8 633.6 1109.0 631.6 C1110.3 629.6 1109.8 628.1 1111.1 626.3 C1112.3 624.6 1114.6 623.0 1116.7 621.1 C1118.8 619.2 1122.3 616.8 1123.8 614.9 C1125.3 613.0 1124.7 611.6 1125.8 609.8 C1127.0 608.0 1127.8 605.7 1130.6 604.1 C1133.5 602.5 1139.4 601.5 1143.0 600.2 C1146.6 598.8 1149.3 597.6 1152.1 596.1 C1154.9 594.7 1156.9 592.9 1159.8 591.4 C1162.6 589.8 1167.6 587.6 1169.1 586.9" fill="none" stroke="#f7c27e" stroke-width="1.1"/>
<path d="M990.1 658.5 C990.3 659.7 990.9 663.6 991.1 665.9 C991.4 668.2 991.2 669.3 991.7 672.2 C992.1 675.1 992.6 679.7 993.6 683.0 C994.7 686.4 996.6 688.8 997.8 692.3 C998.9 695.9 999.6 700.2 1000.6 704.1 C1001.5 707.9 1002.7 711.6 1003.6 715.4 C1004.6 719.3 1005.5 723.2 1006.2 727.1 C1006.9 731.1 1007.7 737.1 1008.0 739.1" fill="none" stroke="#f7c27e" stroke-width="1.1"/>
<path d="M1066.2 774.9 C1066.6 776.2 1067.3 780.0 1068.4 782.9 C1069.6 785.8 1071.4 789.2 1073.2 792.1 C1074.9 795.0 1077.0 797.9 1079.2 800.5 C1081.3 803.0 1083.7 805.4 1086.2 807.6 C1088.8 809.8 1091.8 812.0 1094.5 813.6 C1097.1 815.2 1100.0 815.6 1101.9 817.1 C1103.8 818.6 1105.0 820.9 1105.9 822.7 C1106.9 824.6 1106.2 826.1 1107.7 828.2 C1109.3 830.4 1113.0 833.3 1115.3 835.4 C1117.5 837.5 1119.1 839.2 1121.1 840.9 C1123.1 842.5 1125.4 844.0 1127.1 845.6 C1128.8 847.2 1128.3 848.2 1131.2 850.5 C1134.1 852.7 1140.4 856.5 1144.5 859.1 C1148.6 861.7 1151.7 864.6 1155.7 866.2 C1159.7 867.7 1164.7 867.2 1168.4 868.4 C1172.1 869.6 1176.5 872.5 1178.1 873.3" fill="none" stroke="#f7c27e" stroke-width="1.1"/>
<path d="M820.0 828.6 C822.2 828.5 829.0 828.6 833.0 828.0 C836.9 827.4 840.1 826.2 843.9 825.0 C847.6 823.7 851.5 821.9 855.3 820.5 C859.2 819.1 863.1 817.6 866.8 816.5 C870.5 815.4 873.5 814.5 877.4 813.9 C881.3 813.2 886.7 812.9 890.3 812.7 C893.9 812.4 895.8 812.5 899.2 812.3 C902.6 812.1 906.8 811.7 910.7 811.4 C914.6 811.1 918.8 810.3 922.7 810.5 C926.5 810.7 930.2 812.4 934.0 812.5 C937.8 812.6 942.3 811.3 945.7 811.0 C949.0 810.7 952.8 810.7 954.3 810.7" fill="none" stroke="#f7c27e" stroke-width="1.1"/>
<path d="M999.1 864.4 C1001.0 865.4 1006.9 869.0 1010.8 870.7 C1014.7 872.4 1018.7 873.2 1022.3 874.7 C1026.0 876.2 1028.8 877.8 1032.7 879.7 C1036.5 881.5 1040.7 884.7 1045.3 885.9 C1049.9 887.2 1055.9 887.3 1060.3 887.3 C1064.7 887.4 1068.3 886.9 1071.8 886.4 C1075.2 885.8 1077.8 884.4 1080.9 884.1 C1083.9 883.8 1086.3 884.1 1089.9 884.5 C1093.5 885.0 1098.7 886.4 1102.4 887.0 C1106.0 887.6 1108.4 887.8 1112.0 888.1 C1115.5 888.4 1120.2 889.2 1123.7 888.9 C1127.3 888.5 1129.5 887.3 1133.2 886.1 C1136.9 884.9 1142.1 883.0 1145.9 881.6 C1149.7 880.3 1152.8 879.1 1155.8 877.7 C1158.9 876.4 1161.0 874.8 1164.1 873.7 C1167.3 872.5 1170.9 871.9 1175.0 871.1 C1179.0 870.2 1184.0 869.5 1188.5 868.7 C1193.0 867.9 1198.1 867.0 1201.9 866.3 C1205.7 865.5 1207.8 864.5 1211.3 864.2 C1214.8 863.9 1220.9 864.4 1222.9 864.4" fill="none" stroke="#f7c27e" stroke-width="1.1"/>
<path d="M1097.5 927.1 C1099.0 926.3 1103.4 924.8 1106.3 922.8 C1109.2 920.8 1111.7 916.7 1114.9 915.0 C1118.0 913.2 1122.0 913.0 1125.4 912.2 C1128.8 911.4 1132.2 910.7 1135.4 910.1 C1138.5 909.5 1140.8 908.6 1144.2 908.5 C1147.6 908.3 1151.9 909.6 1155.7 909.3 C1159.6 909.1 1163.8 907.4 1167.4 907.2 C1171.0 906.9 1174.1 908.1 1177.2 907.8 C1180.3 907.6 1182.7 905.9 1186.2 905.5 C1189.7 905.1 1194.0 905.8 1198.0 905.6 C1202.1 905.3 1206.4 905.0 1210.5 904.1 C1214.7 903.2 1220.8 900.8 1222.9 900.2" fill="none" stroke="#f7c27e" stroke-width="1.1"/>
<path d="M864.8 900.2 C865.7 902.1 868.4 907.8 870.4 911.4 C872.4 914.9 874.6 918.5 876.5 921.7 C878.3 924.8 879.5 926.7 881.4 930.1 C883.3 933.4 885.9 938.0 888.1 941.8 C890.4 945.5 893.1 949.5 894.8 952.7 C896.6 955.9 897.4 957.5 898.5 961.0 C899.5 964.6 900.1 970.0 901.2 973.8 C902.4 977.6 904.0 980.3 905.3 983.7 C906.6 987.2 908.3 990.6 909.3 994.4 C910.2 998.1 910.0 1002.2 911.0 1006.4 C912.0 1010.7 913.9 1015.9 915.1 1019.9 C916.4 1023.8 917.9 1028.3 918.5 1030.0" fill="none" stroke="#f7c27e" stroke-width="1.1"/>
<path d="M1334.8 985.2 C1335.4 986.2 1337.2 988.5 1338.7 990.7 C1340.2 992.9 1341.5 996.2 1343.7 998.5 C1345.9 1000.7 1349.9 1002.0 1352.1 1004.2 C1354.3 1006.3 1355.2 1009.9 1357.1 1011.4 C1358.9 1012.8 1361.2 1012.0 1363.1 1013.0 C1365.1 1014.0 1366.9 1015.6 1368.7 1017.3 C1370.6 1019.0 1372.4 1021.1 1374.2 1023.3 C1376.1 1025.4 1378.7 1028.9 1379.5 1030.0" fill="none" stroke="#f7c27e" stroke-width="1.1"/>
<path d="M1334.8 783.8 C1335.8 784.3 1339.4 785.2 1341.2 786.5 C1342.9 787.8 1343.9 789.6 1345.4 791.6 C1346.8 793.6 1348.2 796.6 1349.8 798.8 C1351.5 800.9 1353.8 802.2 1355.3 804.3 C1356.9 806.4 1357.6 809.5 1359.0 811.3 C1360.4 813.0 1361.8 812.9 1363.6 814.9 C1365.4 817.0 1367.5 821.3 1370.0 823.7 C1372.5 826.1 1375.9 827.6 1378.5 829.2 C1381.0 830.8 1383.0 831.5 1385.2 833.2 C1387.4 834.9 1389.2 837.4 1391.8 839.2 C1394.4 840.9 1397.7 841.8 1400.7 843.7 C1403.8 845.7 1408.4 849.8 1410.0 851.0" fill="none" stroke="#f7c27e" stroke-width="1.1"/>
<path d="M820.0 774.9 C822.0 774.7 827.8 774.7 832.1 774.1 C836.4 773.5 841.8 772.1 845.8 771.4 C849.8 770.7 852.6 770.7 856.2 770.1 C859.7 769.4 863.8 768.6 867.3 767.6 C870.9 766.6 874.1 764.9 877.4 763.9 C880.7 762.9 883.6 762.6 887.0 761.6 C890.4 760.6 894.1 758.6 897.9 757.8 C901.6 757.0 907.6 757.1 909.5 757.0" fill="none" stroke="#f7c27e" stroke-width="1.1"/>
<path d="M1021.4 940.5 C1021.9 940.2 1023.0 939.7 1024.4 938.9 C1025.9 938.1 1028.3 937.1 1030.1 935.8 C1031.8 934.5 1033.0 932.7 1034.8 931.4 C1036.7 930.0 1039.0 928.4 1041.1 927.6 C1043.3 926.8 1045.9 927.1 1047.5 926.3 C1049.2 925.5 1048.9 923.8 1051.0 923.0 C1053.1 922.3 1057.4 922.7 1060.0 921.9 C1062.5 921.0 1065.2 918.7 1066.2 918.1" fill="none" stroke="#f7c27e" stroke-width="1.1"/>
<path d="M1313.2 860.0 C1312.4 862.0 1310.0 867.5 1308.2 871.8 C1306.4 876.1 1303.9 881.5 1302.3 885.9 C1300.8 890.3 1299.6 894.6 1299.0 898.2 C1298.3 901.8 1299.0 904.5 1298.4 907.5 C1297.9 910.6 1296.8 913.9 1295.6 916.7 C1294.4 919.5 1293.0 921.7 1291.1 924.3 C1289.1 926.8 1285.7 928.9 1283.9 932.0 C1282.0 935.1 1280.6 941.2 1280.0 943.0" fill="none" stroke="#f7c27e" stroke-width="1.1"/>
<path d="M1412.8 943.0 C1414.0 941.9 1417.5 938.9 1420.0 936.5 C1422.5 934.1 1425.0 931.1 1427.7 928.6 C1430.3 926.1 1433.0 923.3 1435.9 921.6 C1438.8 919.9 1442.2 919.5 1445.2 918.2 C1448.1 916.8 1451.2 915.4 1453.6 913.5 C1456.0 911.6 1457.1 908.8 1459.6 906.9 C1462.1 904.9 1465.3 902.9 1468.6 901.7 C1471.9 900.5 1477.4 900.1 1479.2 899.8" fill="none" stroke="#f7c27e" stroke-width="1.1"/>
<path d="M1462.6 943.0 C1463.4 944.4 1466.0 949.2 1467.3 951.7 C1468.6 954.1 1468.7 955.8 1470.3 958.0 C1471.9 960.1 1474.7 962.3 1476.7 964.5 C1478.7 966.7 1481.7 968.5 1482.2 971.4 C1482.6 974.2 1479.7 978.3 1479.3 981.4 C1478.9 984.5 1479.2 987.1 1479.7 990.0 C1480.1 992.9 1481.1 995.9 1481.9 998.8 C1482.8 1001.8 1483.3 1004.9 1484.7 1007.6 C1486.1 1010.2 1488.8 1011.9 1490.1 1014.7 C1491.4 1017.6 1491.6 1021.5 1492.5 1024.6 C1493.3 1027.6 1494.5 1029.7 1495.1 1033.1 C1495.6 1036.5 1495.6 1042.9 1495.8 1044.9" fill="none" stroke="#f7c27e" stroke-width="1.1"/>
<path d="M1611.9 893.2 C1612.8 894.7 1615.4 899.7 1617.1 902.4 C1618.7 905.2 1620.7 907.0 1621.9 909.8 C1623.0 912.6 1623.0 916.2 1624.1 919.2 C1625.3 922.1 1627.5 924.9 1628.8 927.3 C1630.1 929.7 1630.9 931.3 1631.8 933.3 C1632.7 935.4 1632.7 937.3 1634.1 939.7 C1635.6 942.0 1638.8 945.2 1640.7 947.4 C1642.5 949.5 1643.4 951.6 1645.3 952.7 C1647.1 953.8 1649.2 953.2 1651.8 953.8 C1654.5 954.4 1658.1 955.8 1661.2 956.4 C1664.2 957.0 1666.9 956.8 1670.0 957.5 C1673.1 958.2 1677.5 960.4 1679.9 960.6 C1682.2 960.9 1682.1 959.3 1684.0 959.0 C1685.9 958.7 1689.1 958.8 1691.3 958.9 C1693.4 959.1 1694.7 959.9 1697.0 960.0 C1699.3 960.1 1703.6 959.7 1704.9 959.6" fill="none" stroke="#f7c27e" stroke-width="1.1"/>
<path d="M1711.5 903.2 C1712.7 903.7 1716.6 905.6 1718.4 906.6 C1720.2 907.6 1720.2 907.7 1722.3 909.1 C1724.5 910.5 1728.5 913.5 1731.4 914.9 C1734.2 916.4 1736.9 917.3 1739.5 917.7 C1742.1 918.1 1744.7 917.2 1747.0 917.4 C1749.3 917.5 1750.5 918.3 1753.3 918.8 C1756.2 919.4 1760.2 919.6 1764.1 920.7 C1767.9 921.7 1772.4 924.1 1776.6 925.1 C1780.8 926.1 1784.5 926.4 1789.3 926.5 C1794.1 926.7 1800.6 926.2 1805.4 926.0 C1810.1 925.8 1814.0 925.4 1817.8 925.5 C1821.5 925.5 1826.0 926.2 1827.7 926.4" fill="none" stroke="#f7c27e" stroke-width="1.1"/>
<path d="M1744.7 992.8 C1745.9 992.9 1749.4 993.0 1751.9 993.6 C1754.4 994.3 1756.7 995.9 1759.6 996.7 C1762.4 997.6 1766.2 997.5 1769.2 998.7 C1772.1 1000.0 1773.9 1002.8 1777.2 1004.3 C1780.4 1005.8 1785.3 1006.9 1788.8 1007.6 C1792.3 1008.2 1795.0 1007.9 1798.0 1008.3 C1801.0 1008.6 1804.1 1009.2 1806.6 1009.8 C1809.1 1010.4 1811.1 1012.2 1813.2 1011.9 C1815.2 1011.6 1816.6 1009.5 1818.7 1007.9 C1820.8 1006.4 1823.1 1004.5 1825.7 1002.8 C1828.3 1001.1 1831.4 999.2 1834.2 997.6 C1837.0 996.0 1839.1 994.7 1842.6 993.0 C1846.1 991.2 1850.8 989.0 1855.3 987.2 C1859.7 985.3 1864.4 983.6 1869.1 981.9 C1873.7 980.1 1878.6 978.9 1883.1 976.8 C1887.5 974.7 1892.9 971.6 1895.9 969.4 C1898.8 967.1 1899.7 964.8 1900.9 963.1 C1902.1 961.4 1901.7 959.9 1903.0 959.2 C1904.3 958.6 1906.6 959.1 1908.8 959.2 C1910.9 959.3 1914.8 959.5 1916.0 959.6" fill="none" stroke="#f7c27e" stroke-width="1.1"/>
<path d="M1545.6 1009.4 C1546.4 1009.7 1549.5 1010.1 1550.9 1011.2 C1552.2 1012.3 1552.5 1014.4 1553.9 1016.2 C1555.4 1018.0 1557.9 1020.1 1559.5 1021.9 C1561.2 1023.6 1562.9 1025.2 1563.8 1026.8 C1564.8 1028.3 1564.5 1029.8 1565.2 1031.2 C1565.8 1032.6 1566.8 1033.7 1567.9 1035.2 C1569.0 1036.6 1570.9 1038.3 1571.6 1040.0 C1572.3 1041.6 1572.0 1044.1 1572.1 1044.9" fill="none" stroke="#f7c27e" stroke-width="1.1"/>
<path d="M1811.1 1044.9 C1811.3 1044.1 1811.5 1042.3 1812.4 1040.4 C1813.3 1038.4 1815.0 1035.4 1816.5 1033.3 C1818.1 1031.1 1819.6 1029.0 1821.5 1027.6 C1823.5 1026.2 1825.7 1025.7 1828.3 1024.9 C1830.9 1024.1 1834.2 1023.2 1837.0 1022.8 C1839.9 1022.4 1843.1 1022.7 1845.6 1022.5 C1848.1 1022.3 1849.9 1022.0 1852.0 1021.7 C1854.2 1021.4 1855.3 1021.0 1858.6 1020.5 C1861.9 1020.0 1867.0 1019.5 1871.7 1018.8 C1876.5 1018.2 1882.2 1017.6 1886.9 1016.6 C1891.6 1015.7 1895.2 1014.3 1900.0 1013.1 C1904.9 1011.8 1913.3 1010.0 1916.0 1009.4" fill="none" stroke="#f7c27e" stroke-width="1.1"/>
<path d="M1280.0 1026.0 C1281.7 1025.4 1287.1 1023.3 1290.1 1022.7 C1293.2 1022.2 1295.9 1023.5 1298.3 1022.7 C1300.6 1022.0 1302.0 1019.6 1304.3 1018.2 C1306.7 1016.9 1309.8 1015.9 1312.3 1014.7 C1314.8 1013.5 1316.3 1012.4 1319.2 1011.1 C1322.1 1009.9 1326.6 1008.3 1329.7 1006.9 C1332.7 1005.6 1334.6 1004.0 1337.6 1002.9 C1340.5 1001.9 1344.2 1001.2 1347.5 1000.4 C1350.8 999.6 1354.2 998.7 1357.1 998.0 C1360.1 997.3 1362.5 996.1 1365.2 996.2 C1368.0 996.2 1371.4 997.7 1373.8 998.2 C1376.2 998.8 1378.6 999.2 1379.6 999.4" fill="none" stroke="#f7c27e" stroke-width="1.1"/>
<path d="M982.6 514.1 C984.6 514.2 989.9 514.0 994.2 514.8 C998.6 515.6 1004.2 517.7 1008.6 518.9 C1013.0 520.0 1016.1 521.1 1020.5 521.7 C1025.0 522.3 1031.0 522.0 1035.3 522.3 C1039.5 522.7 1042.2 523.4 1046.2 523.8 C1050.3 524.3 1055.7 524.9 1059.5 525.0 C1063.3 525.0 1065.6 524.5 1069.0 524.0 C1072.5 523.4 1076.6 522.7 1080.1 521.6 C1083.6 520.5 1086.6 518.2 1090.0 517.1 C1093.5 516.1 1097.0 515.7 1100.8 515.3 C1104.6 514.8 1109.3 514.8 1112.9 514.5 C1116.4 514.3 1117.9 513.4 1122.2 513.6 C1126.6 513.7 1133.6 515.2 1138.9 515.4 C1144.3 515.7 1149.3 515.8 1154.3 515.1 C1159.3 514.3 1164.5 511.8 1168.8 511.0 C1173.0 510.2 1178.1 510.5 1180.0 510.4" fill="none" stroke="#f7c27e" stroke-width="1.1"/>
<path d="M1045.6 440.0 C1045.8 442.0 1046.6 447.8 1046.5 451.9 C1046.4 456.0 1044.8 460.9 1045.0 464.6 C1045.1 468.2 1047.0 470.8 1047.4 473.7 C1047.8 476.6 1048.6 480.3 1047.2 482.0 C1045.8 483.7 1041.2 483.0 1039.0 483.8 C1036.8 484.6 1036.3 485.0 1033.9 486.8 C1031.5 488.6 1027.5 492.4 1024.8 494.5 C1022.2 496.6 1019.0 498.5 1017.8 499.3" fill="none" stroke="#f7c27e" stroke-width="1.1"/>
<path d="M1088.3 440.0 C1088.1 441.6 1087.7 447.0 1087.5 449.7 C1087.3 452.3 1087.3 453.4 1087.1 455.8 C1086.9 458.2 1086.0 460.8 1086.3 463.9 C1086.6 467.1 1088.9 472.0 1088.9 474.6 C1088.8 477.2 1087.3 477.7 1086.1 479.7 C1085.0 481.7 1083.5 484.1 1082.2 486.5 C1080.8 488.8 1079.1 491.4 1077.9 493.8 C1076.8 496.3 1075.7 499.9 1075.3 501.2" fill="none" stroke="#f7c27e" stroke-width="1.1"/>
<path d="M1054.9 543.8 C1055.5 544.7 1057.6 547.4 1058.5 549.2 C1059.4 551.1 1060.2 552.6 1060.4 554.6 C1060.6 556.7 1060.3 559.0 1060.0 561.5 C1059.6 563.9 1058.9 566.5 1058.5 569.4 C1058.2 572.2 1058.1 575.3 1057.8 578.4 C1057.4 581.6 1057.4 585.6 1056.6 588.2 C1055.9 590.8 1053.8 591.8 1053.2 594.0 C1052.6 596.1 1053.1 597.6 1052.9 600.9 C1052.8 604.2 1052.3 609.9 1052.2 613.6 C1052.2 617.2 1052.9 619.8 1052.8 622.7 C1052.8 625.6 1052.2 628.0 1051.9 630.9 C1051.7 633.7 1051.3 638.4 1051.2 640.0" fill="none" stroke="#f7c27e" stroke-width="1.1"/>
<path d="M940.0 584.6 C942.4 582.9 949.5 577.9 954.6 574.9 C959.7 571.9 965.0 569.1 970.6 566.5 C976.1 564.0 982.4 562.1 987.9 559.8 C993.4 557.4 1000.3 554.2 1003.6 552.6 C1006.8 550.9 1006.7 550.6 1007.5 549.9 C1008.3 549.1 1006.8 549.0 1008.3 548.3 C1009.8 547.5 1014.2 546.5 1016.4 545.4 C1018.6 544.3 1020.7 542.5 1021.5 541.9" fill="none" stroke="#f7c27e" stroke-width="1.1"/>
<path d="M967.8 616.1 C968.7 614.9 971.2 610.8 973.4 609.0 C975.5 607.3 978.7 607.8 980.7 605.4 C982.6 603.1 983.1 598.2 984.9 595.0 C986.7 591.8 988.3 588.0 991.5 586.3 C994.7 584.6 1000.2 585.0 1004.1 584.8 C1008.1 584.6 1011.7 585.7 1015.3 585.4 C1018.9 585.0 1022.0 583.4 1025.5 582.9 C1029.0 582.5 1034.6 582.7 1036.4 582.7" fill="none" stroke="#f7c27e" stroke-width="1.1"/>
<path d="M1158.7 477.1 C1158.8 478.3 1158.7 482.0 1159.3 484.4 C1159.8 486.8 1161.2 488.4 1162.1 491.5 C1163.0 494.6 1164.1 499.5 1164.5 503.2 C1164.8 507.0 1163.2 511.0 1164.1 514.0 C1165.0 516.9 1168.4 518.2 1169.7 520.8 C1171.1 523.4 1171.4 526.9 1172.3 529.7 C1173.3 532.5 1174.3 535.3 1175.5 537.6 C1176.8 540.0 1179.3 542.8 1180.0 543.8" fill="none" stroke="#f7c27e" stroke-width="1.1"/>
<path d="M977.1 529.0 C977.1 529.7 977.2 531.3 977.3 533.3 C977.5 535.3 977.4 538.7 977.9 541.1 C978.3 543.6 979.9 545.8 980.1 547.9 C980.3 550.1 979.5 551.8 979.2 554.3 C979.0 556.8 979.3 559.5 978.5 562.8 C977.7 566.2 975.0 570.5 974.3 574.5 C973.6 578.5 974.4 583.0 974.2 586.8 C974.1 590.7 973.5 595.7 973.4 597.5" fill="none" stroke="#f7c27e" stroke-width="1.1"/>
<path d="M940.0 551.2 C941.5 550.5 946.1 548.1 948.9 546.9 C951.8 545.7 954.0 544.7 957.1 543.8 C960.2 543.0 964.3 542.2 967.5 541.9 C970.7 541.5 972.9 541.6 976.2 541.7 C979.5 541.7 983.8 542.3 987.3 542.1 C990.7 541.9 993.7 540.8 996.9 540.7 C1000.1 540.6 1003.6 541.0 1006.5 541.5 C1009.4 542.1 1012.9 543.4 1014.1 543.8" fill="none" stroke="#f7c27e" stroke-width="1.1"/>
<path d="M264.5 80.0 C265.0 80.7 266.5 83.4 267.7 84.4 C268.9 85.5 271.2 85.3 271.6 86.2 C271.9 87.2 269.8 89.0 269.7 90.3 C269.6 91.6 270.3 92.4 271.0 93.9 C271.6 95.5 272.7 98.2 273.7 99.5 C274.7 100.9 276.6 101.1 277.1 102.1 C277.6 103.0 277.4 104.4 276.7 105.3 C276.1 106.2 273.3 106.8 273.2 107.6 C273.0 108.3 274.5 108.8 275.7 109.9 C276.9 110.9 279.4 112.4 280.2 114.0 C281.0 115.6 280.2 117.6 280.6 119.5 C281.0 121.4 282.1 124.9 282.7 125.5 C283.3 126.0 283.3 123.2 284.2 122.6 C285.0 122.1 285.8 121.8 287.6 122.0 C289.4 122.1 292.7 123.1 294.8 123.4 C296.8 123.7 298.9 122.7 300.0 123.8 C301.2 124.9 300.9 128.5 301.7 129.9 C302.5 131.4 303.6 131.5 304.9 132.5 C306.2 133.5 307.5 134.8 309.4 135.9 C311.2 137.0 314.9 138.1 315.9 138.9 C316.9 139.6 315.1 140.3 315.3 140.4 C315.5 140.4 316.5 139.2 317.2 139.2 C317.9 139.2 319.3 139.7 319.7 140.4 C320.1 141.0 319.6 142.7 319.5 143.2" fill="none" stroke="#f7c27e" stroke-width="1.1"/>
<path d="M240.0 155.4 C240.5 155.3 241.4 154.6 242.8 154.8 C244.2 154.9 246.1 156.8 248.4 156.5 C250.7 156.2 254.0 153.6 256.5 152.8 C258.9 152.1 261.4 152.0 263.2 152.2 C265.0 152.3 265.8 153.7 267.3 153.7 C268.9 153.8 271.1 152.8 272.6 152.3 C274.1 151.8 275.4 151.8 276.4 150.8 C277.5 149.9 276.9 147.1 278.7 146.6 C280.6 146.2 285.0 147.1 287.3 148.1 C289.6 149.2 290.6 152.2 292.4 153.0 C294.2 153.8 295.8 153.4 298.0 153.1 C300.1 152.8 303.6 151.8 305.4 151.1 C307.3 150.5 308.1 149.3 309.1 149.2 C310.1 149.1 310.2 151.0 311.4 150.6 C312.6 150.2 314.8 147.8 316.5 147.0 C318.2 146.1 320.7 145.5 321.6 145.3" fill="none" stroke="#f7c27e" stroke-width="1.1"/>
<path d="M360.3 139.1 C360.4 139.0 360.2 139.0 360.6 138.1 C361.0 137.2 361.8 135.2 362.9 133.8 C364.1 132.3 366.3 131.1 367.3 129.4 C368.2 127.6 368.4 125.3 368.8 123.3 C369.3 121.4 369.3 119.2 369.9 117.8 C370.6 116.3 371.8 115.7 372.7 114.5 C373.6 113.3 374.1 111.3 375.2 110.4 C376.3 109.6 378.6 110.4 379.3 109.4 C380.0 108.5 378.8 106.3 379.4 104.7 C379.9 103.1 381.8 101.3 382.7 99.9 C383.5 98.5 383.7 97.5 384.4 96.3 C385.1 95.0 386.4 92.9 386.8 92.2" fill="none" stroke="#f7c27e" stroke-width="1.1"/>
<path d="M354.2 139.1 C354.7 139.2 356.1 139.8 357.4 139.4 C358.7 138.9 361.4 136.6 361.9 136.2 C362.4 135.8 360.1 136.9 360.1 136.8 C360.1 136.7 360.6 136.0 361.9 135.7 C363.2 135.4 366.3 135.3 367.8 135.1 C369.4 134.9 369.6 134.1 371.2 134.4 C372.8 134.6 375.6 136.4 377.7 136.5 C379.7 136.6 382.2 134.7 383.4 135.0 C384.6 135.4 384.0 137.6 384.7 138.6 C385.5 139.6 386.6 140.6 388.0 141.2 C389.4 141.8 391.7 141.9 393.1 142.4 C394.5 143.0 395.0 144.8 396.5 144.5 C397.9 144.3 400.3 142.1 401.8 141.1 C403.4 140.1 404.2 138.9 405.6 138.4 C407.1 138.0 408.9 138.5 410.5 138.3 C412.1 138.1 414.0 137.9 415.2 137.3 C416.4 136.7 417.1 135.4 417.7 134.8 C418.3 134.1 418.3 133.7 419.0 133.5 C419.7 133.3 421.0 133.5 421.7 133.4 C422.5 133.3 423.2 133.1 423.5 133.0" fill="none" stroke="#f7c27e" stroke-width="1.1"/>
<path d="M333.8 157.5 C333.9 157.9 334.5 158.8 334.3 160.2 C334.1 161.6 332.7 163.7 332.4 165.9 C332.1 168.2 332.5 171.5 332.3 173.6 C332.1 175.7 331.4 177.0 331.2 178.6 C331.0 180.3 330.8 181.8 331.1 183.6 C331.4 185.3 332.1 187.1 333.2 189.1 C334.3 191.0 336.6 193.3 337.7 195.2 C338.9 197.1 339.4 199.6 340.2 200.5 C341.0 201.4 341.6 200.0 342.5 200.5 C343.4 201.1 344.9 203.0 345.7 203.9 C346.6 204.8 346.9 205.1 347.6 205.9 C348.3 206.7 348.6 208.4 349.9 208.8 C351.2 209.3 353.7 208.5 355.3 208.8 C356.8 209.0 358.2 209.9 359.1 210.2 C360.0 210.5 360.1 210.6 360.8 210.6 C361.5 210.5 362.1 210.6 363.1 209.9 C364.2 209.2 366.2 207.3 367.2 206.2 C368.1 205.2 368.6 204.0 369.0 203.6 C369.3 203.3 369.0 203.9 369.3 204.0 C369.5 204.0 369.8 204.3 370.4 203.7 C371.1 203.1 372.8 201.2 373.2 200.5 C373.6 199.8 372.4 200.0 372.9 199.6 C373.4 199.1 375.6 198.7 376.2 197.9 C376.7 197.0 375.6 195.6 376.1 194.6 C376.5 193.6 377.7 193.0 378.8 191.8 C379.8 190.7 381.4 188.8 382.4 187.9 C383.3 186.9 383.5 186.2 384.4 186.1 C385.3 186.0 386.2 187.6 387.7 187.4 C389.3 187.3 391.9 185.8 393.5 185.1 C395.1 184.5 395.4 183.9 397.4 183.7 C399.4 183.5 402.8 183.8 405.5 183.8 C408.1 183.9 412.0 184.0 413.3 184.0" fill="none" stroke="#f7c27e" stroke-width="1.1"/>
<path d="M248.2 202.3 C248.5 203.1 249.3 204.8 250.5 206.8 C251.6 208.8 253.4 212.5 254.9 214.4 C256.4 216.2 257.9 216.5 259.4 217.8 C260.8 219.1 262.7 221.8 263.6 222.2 C264.5 222.5 264.3 220.6 264.7 219.9 C265.1 219.1 265.2 218.1 266.1 217.6 C267.0 217.2 268.9 217.1 270.2 217.1 C271.4 217.1 272.3 217.1 273.6 217.5 C274.9 217.9 276.8 218.4 277.9 219.3 C279.0 220.3 279.3 222.5 280.1 223.3 C280.8 224.2 282.2 224.2 282.5 224.5 C282.8 224.9 281.7 225.0 281.9 225.3 C282.1 225.7 282.6 225.9 283.7 226.6 C284.9 227.2 287.6 228.7 288.8 229.2 C290.1 229.6 290.4 229.1 291.2 229.3 C291.9 229.5 292.7 230.7 293.3 230.1 C293.8 229.6 294.1 227.2 294.3 226.0 C294.6 224.8 294.5 223.5 294.9 223.2 C295.3 222.8 295.9 223.9 296.8 223.7 C297.7 223.6 298.7 222.4 300.3 222.2 C301.9 221.9 304.1 222.5 306.4 222.3 C308.7 222.1 311.2 221.6 313.9 220.9 C316.7 220.2 320.2 219.0 322.8 217.9 C325.3 216.8 328.3 214.7 329.4 214.2 C330.5 213.8 329.3 215.5 329.4 215.4 C329.4 215.2 328.8 213.0 329.7 213.4 C330.5 213.8 332.7 216.8 334.3 217.9 C335.9 218.9 338.1 220.0 339.3 219.7 C340.5 219.3 340.2 216.9 341.5 215.6 C342.7 214.3 345.6 213.3 346.8 212.0 C348.1 210.7 348.4 208.5 349.0 207.6 C349.5 206.7 349.9 206.6 350.1 206.4" fill="none" stroke="#f7c27e" stroke-width="1.1"/>
<path d="M372.5 208.5 C372.9 208.4 374.0 207.9 374.5 208.3 C374.9 208.7 374.8 210.1 375.1 210.9 C375.4 211.6 376.3 211.6 376.3 212.7 C376.3 213.8 374.1 216.5 375.1 217.3 C376.2 218.1 380.6 218.2 382.5 217.8 C384.5 217.4 385.3 214.9 386.9 214.7 C388.5 214.5 390.8 215.9 391.9 216.5 C393.1 217.1 393.7 217.9 393.8 218.1 C394.0 218.4 392.9 218.0 392.8 218.2 C392.7 218.4 392.6 218.5 393.3 219.3 C394.0 220.1 396.1 221.7 397.1 222.9 C398.0 224.1 398.8 225.7 399.0 226.6 C399.2 227.4 398.9 227.1 398.0 228.1 C397.2 229.1 395.3 231.2 394.0 232.5 C392.6 233.8 391.1 235.2 389.7 235.9 C388.3 236.6 387.1 236.1 385.6 236.7 C384.1 237.3 382.5 238.6 380.7 239.4 C379.0 240.3 377.0 241.0 375.1 241.9 C373.3 242.8 370.9 243.6 369.6 245.1 C368.2 246.5 368.9 249.0 367.0 250.8 C365.2 252.7 361.1 254.8 358.5 256.1 C356.0 257.4 353.6 258.1 351.6 258.6 C349.7 259.1 348.8 258.7 346.7 259.2 C344.6 259.7 340.8 261.3 339.3 261.7 C337.8 262.0 338.7 260.9 337.7 261.4 C336.7 261.8 334.8 263.0 333.1 264.4 C331.4 265.8 329.6 268.5 327.7 269.7 C325.8 270.9 322.6 271.4 321.6 271.7" fill="none" stroke="#f7c27e" stroke-width="1.1"/>
<path d="M435.8 194.2 C436.1 194.2 436.6 194.2 437.8 194.0 C439.0 193.7 441.2 192.8 442.7 192.7 C444.2 192.5 445.0 193.2 446.7 193.3 C448.5 193.4 452.0 192.9 453.4 193.4 C454.8 193.8 454.4 195.0 455.1 196.1 C455.9 197.2 456.7 199.3 457.9 199.7 C459.1 200.1 461.0 198.4 462.3 198.4 C463.6 198.4 465.0 199.2 465.6 199.5 C466.2 199.8 465.5 200.5 466.1 200.2 C466.7 199.9 467.7 198.3 469.0 197.7 C470.3 197.0 472.1 197.1 473.9 196.1 C475.7 195.2 479.0 192.8 480.0 192.2" fill="none" stroke="#f7c27e" stroke-width="1.1"/>
<path d="M419.4 151.4 C419.5 151.1 419.2 150.5 419.5 149.6 C419.8 148.7 421.1 147.3 421.5 146.1 C421.9 144.8 421.3 143.1 421.8 142.0 C422.4 141.0 424.4 140.5 424.7 139.7 C425.0 138.9 423.3 138.1 423.4 137.4 C423.5 136.8 424.6 136.8 425.5 135.9 C426.3 135.1 427.6 133.2 428.6 132.2 C429.6 131.2 430.2 131.1 431.6 129.9 C433.1 128.8 435.9 126.2 437.3 125.1 C438.8 124.0 438.4 124.4 440.2 123.3 C442.1 122.2 445.9 119.7 448.6 118.4 C451.3 117.1 454.0 115.9 456.3 115.5 C458.7 115.0 460.7 115.8 462.8 115.4 C464.8 115.1 466.4 114.1 468.5 113.4 C470.5 112.7 473.1 111.6 475.0 111.4 C476.9 111.3 479.2 112.4 480.0 112.6" fill="none" stroke="#f7c27e" stroke-width="1.1"/>
<path d="M429.6 214.6 C429.4 215.5 428.5 217.9 428.3 220.3 C428.0 222.6 428.6 226.1 428.0 228.5 C427.5 231.0 425.5 232.5 424.7 235.0 C424.0 237.4 423.9 241.2 423.6 243.4 C423.3 245.6 423.0 247.3 423.0 248.3 C423.1 249.4 423.5 248.4 423.7 249.8 C423.9 251.2 424.7 254.8 424.4 256.8 C424.0 258.7 422.0 260.0 421.4 261.6 C420.8 263.2 421.0 264.7 420.8 266.2 C420.6 267.8 420.8 268.8 420.3 270.9 C419.8 273.0 419.0 276.7 417.8 278.9 C416.7 281.0 414.1 283.1 413.3 283.9" fill="none" stroke="#f7c27e" stroke-width="1.1"/>
<path d="M386.8 259.4 C387.1 260.0 388.2 261.2 388.5 262.7 C388.7 264.2 387.6 266.9 388.4 268.5 C389.2 270.2 392.1 271.7 393.3 272.5 C394.6 273.3 394.5 272.2 395.9 273.3 C397.4 274.5 400.6 277.6 402.2 279.3 C403.8 281.1 404.7 282.4 405.6 283.6 C406.5 284.9 407.3 286.2 407.6 286.9 C407.9 287.6 407.3 287.8 407.2 288.0" fill="none" stroke="#f7c27e" stroke-width="1.1"/>
<path d="M240.0 290.0 C241.0 290.5 243.8 292.1 246.1 292.6 C248.5 293.0 252.2 293.0 254.1 292.7 C255.9 292.3 255.9 290.8 257.3 290.4 C258.8 290.0 260.7 290.7 262.5 290.3 C264.4 289.9 266.5 288.5 268.5 288.0 C270.5 287.6 273.2 287.8 274.8 287.6 C276.3 287.5 276.7 287.9 277.7 287.2 C278.8 286.6 280.3 284.5 280.8 283.9" fill="none" stroke="#f7c27e" stroke-width="1.1"/>
<path d="M480.0 112.6 C481.3 112.2 485.5 110.9 487.7 110.2 C489.8 109.5 491.4 109.5 493.1 108.4 C494.7 107.4 496.1 105.5 497.4 104.0 C498.7 102.6 499.3 101.1 500.9 100.0 C502.6 98.8 504.9 97.8 507.2 97.3 C509.5 96.8 513.2 97.4 514.7 96.7 C516.1 96.1 515.4 95.0 516.0 93.5 C516.6 92.0 517.5 89.5 518.4 87.8 C519.2 86.1 520.4 84.4 521.2 83.2 C522.0 81.9 522.5 80.7 523.3 80.0 C524.0 79.4 524.3 79.2 525.6 79.2 C526.9 79.2 530.1 79.9 531.0 80.0" fill="none" stroke="#f7c27e" stroke-width="1.1"/>
<path d="M480.0 191.1 C480.8 191.0 483.1 190.6 484.8 190.1 C486.6 189.6 489.4 188.4 490.7 187.9 C491.9 187.4 492.1 187.1 492.6 187.0 C493.1 186.8 493.1 186.2 493.5 186.9 C494.0 187.7 494.6 190.0 495.2 191.3 C495.7 192.5 495.4 193.9 496.6 194.3 C497.8 194.7 501.0 193.9 502.4 193.7 C503.9 193.5 504.9 192.6 505.3 193.1 C505.6 193.5 504.6 195.9 504.4 196.5 C504.3 197.1 505.0 196.2 504.6 196.5 C504.2 196.8 502.4 198.0 502.1 198.2 C501.8 198.4 501.8 197.4 502.8 197.5 C503.8 197.6 506.5 198.5 508.0 198.9 C509.5 199.3 510.7 199.2 511.8 199.8 C512.9 200.5 513.5 202.1 514.5 202.7 C515.5 203.4 516.2 203.4 517.6 203.8 C519.0 204.1 521.7 204.8 523.0 204.9 C524.4 204.9 525.3 204.6 525.7 204.3 C526.1 204.0 525.8 203.0 525.5 203.2 C525.1 203.4 523.5 205.0 523.5 205.5 C523.4 206.0 524.4 205.6 525.2 206.2 C526.0 206.9 527.6 208.4 528.2 209.6 C528.7 210.8 529.0 212.7 528.7 213.5 C528.3 214.3 526.3 214.4 525.9 214.6" fill="none" stroke="#f7c27e" stroke-width="1.1"/>
<path d="M543.2 210.5 C543.7 209.8 544.7 207.6 546.1 206.6 C547.6 205.5 550.2 205.4 551.9 204.3 C553.5 203.2 554.4 201.2 555.8 199.9 C557.2 198.5 558.6 197.3 560.5 196.2 C562.4 195.1 565.5 194.0 567.1 193.3 C568.8 192.6 569.3 192.6 570.5 192.0 C571.6 191.4 572.5 190.9 574.0 189.5 C575.6 188.2 578.2 184.3 579.7 184.1 C581.2 184.0 581.8 187.4 583.0 188.5 C584.1 189.5 585.7 189.6 586.6 190.4 C587.5 191.2 587.8 192.6 588.2 193.2 C588.6 193.8 588.3 194.4 588.8 194.1 C589.3 193.7 590.2 191.6 591.2 191.0 C592.2 190.4 593.3 191.3 594.9 190.5 C596.5 189.7 599.1 187.7 600.8 186.3 C602.5 184.9 603.6 183.6 604.9 182.3 C606.2 181.0 607.4 179.8 608.6 178.3 C609.7 176.7 610.3 174.8 611.8 173.0 C613.4 171.2 616.1 168.9 617.8 167.3 C619.4 165.7 621.0 164.0 621.8 163.3 C622.7 162.6 622.3 163.6 622.7 163.0 C623.2 162.4 623.6 160.4 624.6 159.7 C625.6 159.0 627.5 158.9 628.9 158.9 C630.3 158.8 632.3 159.4 632.9 159.5" fill="none" stroke="#f7c27e" stroke-width="1.1"/>
<path d="M594.2 80.0 C594.7 80.4 596.3 81.7 597.1 82.1 C597.9 82.6 598.2 82.6 599.1 82.9 C600.0 83.2 601.7 83.3 602.5 83.7 C603.4 84.1 601.5 84.8 604.0 85.3 C606.5 85.8 613.6 86.7 617.5 86.9 C621.5 87.1 624.1 87.3 627.9 86.7 C631.6 86.1 635.8 84.3 640.1 83.3 C644.4 82.3 649.9 81.2 653.6 80.6 C657.2 80.1 659.7 80.1 662.2 80.2 C664.7 80.2 666.4 80.5 668.5 80.8 C670.7 81.1 672.5 81.9 675.1 81.7 C677.7 81.6 682.4 80.3 683.9 80.0" fill="none" stroke="#f7c27e" stroke-width="1.1"/>
<path d="M675.8 165.6 C676.9 165.9 680.0 166.6 682.3 167.0 C684.6 167.3 687.3 167.5 689.6 167.8 C691.9 168.1 693.7 168.8 696.2 168.7 C698.7 168.5 702.4 167.4 704.5 167.0 C706.6 166.6 707.6 166.9 708.6 166.2 C709.6 165.6 709.7 163.5 710.7 163.0 C711.6 162.4 712.5 163.1 714.1 162.9 C715.6 162.7 719.0 161.8 720.0 161.6" fill="none" stroke="#f7c27e" stroke-width="1.1"/>
<path d="M710.4 165.6 C710.8 166.2 711.5 167.4 712.5 169.0 C713.4 170.7 715.6 174.0 716.2 175.5 C716.7 177.1 716.0 177.7 715.8 178.2 C715.6 178.8 714.6 178.5 714.7 178.6 C714.8 178.7 715.7 178.5 716.6 178.9 C717.6 179.3 719.8 181.2 720.2 181.2 C720.6 181.3 719.1 179.3 719.1 179.1 C719.1 178.9 719.9 179.8 720.0 179.9" fill="none" stroke="#f7c27e" stroke-width="1.1"/>
<path d="M291.0 300.0 C291.3 300.9 292.7 303.9 292.7 305.3 C292.6 306.7 290.4 307.1 290.8 308.5 C291.1 309.9 293.9 311.8 294.6 313.7 C295.3 315.7 295.3 318.0 295.1 320.2 C294.9 322.4 294.7 324.1 293.7 326.8 C292.6 329.6 289.5 333.9 288.7 336.6 C288.0 339.3 289.0 340.5 289.2 343.1 C289.4 345.7 289.7 349.9 289.8 352.3 C289.9 354.7 289.8 356.0 289.8 357.5 C289.8 359.0 289.7 360.4 290.1 361.3 C290.5 362.2 291.7 362.3 292.1 362.9 C292.5 363.4 292.4 363.9 292.5 364.7 C292.6 365.6 292.3 366.4 292.5 367.8 C292.7 369.1 293.0 371.6 293.6 373.0 C294.3 374.4 295.3 375.0 296.3 376.4 C297.3 377.8 300.0 379.7 299.6 381.3 C299.2 383.0 295.5 384.9 294.0 386.3 C292.4 387.7 291.5 388.0 290.5 389.6 C289.6 391.2 289.1 393.9 288.3 396.1 C287.6 398.4 286.6 401.6 286.0 403.1 C285.4 404.5 284.6 404.4 284.5 404.6 C284.4 404.9 285.3 404.8 285.2 404.7 C285.1 404.7 284.0 404.3 283.9 404.5 C283.9 404.8 284.7 405.8 284.9 406.0" fill="none" stroke="#f7c27e" stroke-width="1.1"/>
<path d="M325.6 422.3 C325.5 422.8 324.8 423.7 325.0 425.1 C325.2 426.5 326.5 428.7 327.0 430.7 C327.5 432.6 327.7 434.7 328.0 436.8 C328.2 438.8 328.1 441.1 328.4 442.8 C328.8 444.5 329.2 445.2 330.2 446.9 C331.1 448.6 332.7 451.5 334.0 452.8 C335.3 454.2 336.2 454.8 338.2 455.0 C340.2 455.2 344.8 452.8 345.9 454.3 C347.0 455.7 345.5 461.0 345.0 463.5 C344.4 466.1 343.0 467.2 342.6 469.6 C342.2 472.0 343.2 475.2 342.7 478.1 C342.1 481.0 339.9 485.2 339.3 487.0 C338.7 488.9 339.5 488.4 339.2 489.3 C338.8 490.2 337.4 491.3 337.4 492.5 C337.3 493.7 338.9 495.6 339.1 496.5 C339.3 497.5 339.2 497.1 338.7 498.1 C338.1 499.1 336.3 500.5 335.7 502.6 C335.2 504.6 335.4 508.3 335.4 510.5 C335.4 512.7 335.2 514.0 335.6 515.6 C336.0 517.2 337.5 519.3 337.9 520.0" fill="none" stroke="#f7c27e" stroke-width="1.1"/>
<path d="M419.4 304.1 C419.8 304.1 421.2 303.4 421.7 303.9 C422.2 304.4 422.1 306.2 422.4 307.0 C422.6 307.8 422.9 307.9 423.2 308.6 C423.5 309.2 423.8 310.1 424.3 310.9 C424.7 311.8 425.6 313.0 425.9 313.7 C426.2 314.4 425.5 314.3 426.3 315.0 C427.0 315.6 428.7 316.8 430.4 317.5 C432.1 318.2 434.5 318.1 436.4 319.0 C438.3 319.8 440.1 321.4 441.6 322.7 C443.1 323.9 444.4 325.5 445.4 326.6 C446.4 327.6 446.4 328.7 447.6 329.1 C448.7 329.4 451.4 328.5 452.3 328.6 C453.3 328.7 453.2 328.7 453.4 329.5 C453.6 330.4 453.6 332.0 453.7 333.6 C453.8 335.2 453.6 337.7 454.0 338.9 C454.4 340.1 455.8 340.5 456.2 340.8" fill="none" stroke="#f7c27e" stroke-width="1.1"/>
<path d="M395.0 463.1 C395.3 462.6 395.9 460.6 397.0 460.1 C398.0 459.7 400.0 460.8 401.5 460.6 C403.0 460.4 404.8 459.0 406.0 458.9 C407.2 458.7 406.7 460.5 408.7 460.0 C410.7 459.4 415.5 457.3 418.0 455.6 C420.5 453.9 421.1 450.9 423.9 449.7 C426.6 448.6 430.5 449.3 434.4 448.6 C438.3 447.8 443.6 446.3 447.2 445.2 C450.8 444.1 452.6 443.0 456.0 441.9 C459.3 440.8 464.5 439.6 467.2 438.6 C469.9 437.5 470.0 436.9 472.2 435.6 C474.3 434.2 478.7 431.3 480.0 430.5" fill="none" stroke="#f7c27e" stroke-width="1.1"/>
<path d="M240.0 483.5 C241.3 483.5 245.3 483.0 247.5 483.3 C249.7 483.7 251.3 485.4 253.1 485.7 C254.9 485.9 256.7 485.7 258.2 484.8 C259.8 484.0 261.7 481.2 262.6 480.6 C263.4 480.0 263.4 480.3 263.3 481.1 C263.3 481.9 262.3 483.9 262.2 485.2 C262.0 486.4 261.7 486.9 262.2 488.4 C262.7 489.9 263.3 492.9 265.3 494.4 C267.3 495.9 271.4 496.6 274.1 497.4 C276.8 498.3 279.3 499.0 281.4 499.7 C283.6 500.5 285.3 501.1 287.2 501.9 C289.1 502.7 290.7 504.8 292.8 504.4 C294.9 503.9 297.4 501.1 299.9 499.3 C302.4 497.4 305.0 495.0 307.7 493.3 C310.3 491.7 313.3 491.3 315.8 489.6 C318.3 487.8 320.9 484.2 322.8 482.8 C324.8 481.4 326.3 482.0 327.6 481.1 C328.9 480.2 329.4 477.7 330.7 477.3 C332.1 476.8 334.6 478.5 335.8 478.5 C337.0 478.6 337.5 477.6 337.9 477.4" fill="none" stroke="#f7c27e" stroke-width="1.1"/>
<path d="M480.0 377.5 C479.5 377.4 477.7 376.9 476.8 377.0 C476.0 377.0 475.8 378.2 474.8 377.7 C473.7 377.3 471.6 375.4 470.7 374.3 C469.8 373.3 469.9 372.1 469.5 371.3 C469.1 370.6 469.3 370.6 468.3 369.9 C467.3 369.3 464.5 368.2 463.7 367.4 C462.9 366.7 464.1 366.3 463.5 365.2 C462.9 364.2 460.8 361.9 460.2 361.2" fill="none" stroke="#f7c27e" stroke-width="1.1"/>
<path d="M1170.0 608.9 C1170.3 608.6 1171.2 607.7 1172.0 607.0 C1172.9 606.3 1173.4 605.6 1175.0 604.8 C1176.6 603.9 1180.1 602.3 1181.8 601.7 C1183.5 601.1 1184.6 602.4 1185.2 601.1 C1185.9 599.8 1185.7 596.5 1185.9 594.0 C1186.0 591.4 1185.8 587.7 1186.3 585.8 C1186.7 583.9 1187.8 584.2 1188.5 582.5 C1189.2 580.9 1189.8 577.4 1190.5 576.1 C1191.2 574.8 1191.9 575.7 1192.8 574.8 C1193.7 573.8 1195.2 571.8 1195.9 570.5 C1196.5 569.1 1196.8 568.7 1196.9 566.9 C1197.0 565.2 1196.6 561.2 1196.5 560.0" fill="none" stroke="#f7c27e" stroke-width="1.1"/>
<path d="M1304.6 590.6 C1303.9 590.5 1301.9 589.7 1300.6 589.8 C1299.2 590.0 1298.2 590.6 1296.7 591.4 C1295.2 592.2 1292.9 593.4 1291.4 594.5 C1290.0 595.5 1289.0 597.4 1288.1 597.9 C1287.3 598.5 1286.5 597.4 1286.3 598.0 C1286.2 598.5 1287.2 599.7 1287.3 601.1 C1287.4 602.5 1286.9 604.5 1286.9 606.3 C1287.0 608.0 1288.2 610.8 1287.6 611.7 C1286.9 612.6 1285.2 611.7 1283.2 611.7 C1281.2 611.6 1278.2 611.1 1275.7 611.2 C1273.2 611.4 1270.2 611.9 1268.2 612.7 C1266.2 613.6 1264.4 615.2 1263.7 616.2 C1263.0 617.3 1264.1 618.2 1263.9 619.1 C1263.7 620.0 1262.5 620.4 1262.4 621.5 C1262.3 622.6 1263.5 624.8 1263.3 625.6 C1263.2 626.4 1262.9 626.5 1261.6 626.4 C1260.3 626.3 1258.0 624.9 1255.5 624.8 C1253.1 624.8 1249.7 625.7 1246.9 626.1 C1244.2 626.5 1242.1 626.9 1238.8 627.2 C1235.6 627.6 1230.0 627.6 1227.5 628.2 C1225.0 628.8 1224.7 629.6 1223.8 630.9 C1222.9 632.3 1222.2 635.1 1222.0 636.1 C1221.7 637.0 1222.5 636.1 1222.1 636.7 C1221.7 637.3 1220.8 638.6 1219.6 639.4 C1218.3 640.3 1215.9 640.6 1214.7 641.7 C1213.6 642.7 1213.1 644.2 1212.9 645.6 C1212.7 647.0 1213.9 648.5 1213.7 650.1 C1213.4 651.6 1211.7 653.9 1211.4 654.8 C1211.1 655.8 1212.0 655.0 1211.9 655.9 C1211.7 656.8 1210.9 658.7 1210.7 660.0 C1210.4 661.4 1210.4 662.6 1210.4 664.2 C1210.3 665.8 1210.2 668.4 1210.4 669.7 C1210.6 671.0 1210.9 671.5 1211.7 672.1 C1212.5 672.7 1214.3 672.9 1215.1 673.3 C1215.9 673.7 1215.9 673.6 1216.6 674.5 C1217.3 675.3 1218.0 677.5 1219.1 678.4 C1220.2 679.4 1222.5 679.5 1223.3 680.1 C1224.1 680.6 1223.7 681.1 1224.1 681.8 C1224.4 682.6 1224.6 683.0 1225.4 684.5 C1226.2 685.9 1227.7 689.1 1229.0 690.6 C1230.4 692.1 1232.2 692.6 1233.5 693.5 C1234.8 694.5 1236.4 695.4 1236.8 696.3 C1237.3 697.2 1236.0 698.1 1236.4 699.0 C1236.8 700.0 1238.8 700.8 1239.4 702.0 C1239.9 703.2 1239.9 704.9 1239.8 706.2 C1239.6 707.6 1239.3 708.9 1238.5 710.2 C1237.6 711.5 1235.6 712.9 1234.7 714.2 C1233.7 715.6 1232.9 717.2 1232.8 718.3 C1232.7 719.4 1233.8 720.1 1234.0 720.8 C1234.3 721.4 1234.9 721.0 1234.5 722.2 C1234.1 723.3 1232.3 726.3 1231.8 727.8 C1231.3 729.3 1231.7 730.1 1231.6 731.2 C1231.6 732.2 1232.0 733.4 1231.4 734.1 C1230.8 734.8 1228.8 734.9 1228.1 735.4 C1227.3 735.8 1227.7 736.3 1226.8 736.9 C1226.0 737.6 1223.7 739.0 1223.0 739.4" fill="none" stroke="#f7c27e" stroke-width="1.1"/>
<path d="M1318.9 570.2 C1318.9 570.7 1319.0 572.8 1318.9 573.3 C1318.9 573.8 1318.2 572.8 1318.4 573.3 C1318.7 573.7 1319.6 575.2 1320.4 575.9 C1321.2 576.5 1322.7 576.2 1323.1 577.2 C1323.4 578.2 1322.1 580.7 1322.5 581.7 C1322.9 582.6 1325.2 582.1 1325.4 582.9 C1325.7 583.8 1324.3 585.4 1324.2 586.7 C1324.2 587.9 1324.9 589.9 1325.0 590.6" fill="none" stroke="#f7c27e" stroke-width="1.1"/>
<path d="M1304.6 590.6 C1304.7 590.0 1305.0 588.3 1305.6 587.3 C1306.1 586.3 1307.3 585.8 1307.8 584.6 C1308.3 583.5 1308.2 582.0 1308.6 580.3 C1309.1 578.7 1310.2 576.4 1310.5 574.8 C1310.9 573.2 1310.2 571.9 1310.8 570.6 C1311.5 569.4 1313.6 568.4 1314.6 567.4 C1315.5 566.5 1315.5 566.1 1316.5 564.9 C1317.6 563.7 1320.2 560.8 1320.9 560.0" fill="none" stroke="#f7c27e" stroke-width="1.1"/>
<path d="M1365.8 604.9 C1365.6 605.4 1365.1 606.5 1364.9 608.0 C1364.7 609.4 1364.8 612.2 1364.5 613.4 C1364.1 614.6 1363.2 614.1 1362.6 615.3 C1362.1 616.5 1360.9 619.4 1361.0 620.7 C1361.0 622.0 1362.6 621.9 1363.0 623.2 C1363.5 624.4 1364.1 626.3 1363.8 628.1 C1363.5 629.9 1361.8 632.6 1361.1 634.1 C1360.3 635.5 1360.0 635.0 1359.3 636.7 C1358.6 638.5 1358.0 642.5 1356.8 644.7 C1355.7 647.0 1353.4 648.6 1352.4 650.3 C1351.4 651.9 1351.6 653.3 1350.9 654.6 C1350.2 655.9 1348.6 657.2 1348.3 658.0 C1348.0 658.7 1349.1 659.3 1349.2 659.1 C1349.3 658.9 1348.7 656.4 1348.7 656.8 C1348.7 657.1 1348.7 660.0 1349.2 661.1 C1349.8 662.2 1352.1 662.5 1352.0 663.5 C1351.8 664.5 1349.3 665.6 1348.4 667.1 C1347.4 668.6 1346.3 670.4 1346.2 672.4 C1346.2 674.5 1347.9 677.3 1348.2 679.5 C1348.4 681.7 1347.4 684.3 1347.8 685.9 C1348.2 687.4 1350.0 688.2 1350.5 688.7 C1350.9 689.2 1350.6 688.8 1350.6 688.8 C1350.5 688.9 1350.4 688.6 1350.1 689.0 C1349.8 689.4 1349.9 690.3 1349.0 691.4 C1348.1 692.5 1345.6 694.3 1344.7 695.7 C1343.9 697.1 1343.9 698.5 1344.0 699.8 C1344.1 701.0 1345.2 701.8 1345.3 703.2 C1345.5 704.6 1346.2 707.1 1345.1 708.3 C1344.1 709.5 1340.6 709.2 1339.1 710.6 C1337.6 711.9 1337.6 715.4 1336.1 716.4 C1334.7 717.4 1331.8 716.8 1330.2 716.6 C1328.7 716.5 1328.1 715.4 1326.7 715.4 C1325.2 715.5 1322.7 716.1 1321.5 716.9 C1320.4 717.8 1321.1 719.2 1320.0 720.4 C1318.9 721.6 1316.4 723.1 1315.0 724.0 C1313.6 725.0 1312.7 725.8 1311.7 726.2 C1310.8 726.5 1310.7 725.6 1309.4 726.2 C1308.0 726.8 1304.8 728.1 1303.5 729.7 C1302.1 731.2 1301.6 734.1 1301.4 735.5 C1301.1 737.0 1302.1 737.4 1302.0 738.3 C1302.0 739.3 1301.9 739.9 1301.1 741.3 C1300.2 742.7 1298.0 745.1 1296.7 746.8 C1295.4 748.5 1294.4 749.9 1293.5 751.4 C1292.6 752.9 1292.1 754.4 1291.5 755.8 C1290.8 757.1 1289.9 758.1 1289.5 759.5 C1289.0 760.8 1289.1 763.0 1288.8 763.8 C1288.5 764.5 1288.0 763.7 1287.7 764.2 C1287.4 764.6 1287.4 765.8 1286.8 766.4 C1286.1 766.9 1284.2 766.7 1283.7 767.7 C1283.2 768.6 1284.5 770.8 1283.9 771.9 C1283.2 773.1 1280.7 773.2 1279.8 774.5 C1278.8 775.9 1278.4 779.1 1278.1 780.0" fill="none" stroke="#f7c27e" stroke-width="1.1"/>
<path d="M1349.4 664.0 C1348.1 664.7 1343.9 667.3 1341.1 668.5 C1338.3 669.7 1336.0 670.2 1332.6 671.4 C1329.2 672.6 1324.2 674.4 1320.8 675.6 C1317.4 676.7 1314.9 677.6 1312.4 678.2 C1309.8 678.8 1307.4 678.6 1305.5 679.2 C1303.5 679.8 1302.2 680.8 1300.6 681.8 C1299.0 682.7 1297.6 684.1 1295.8 684.9 C1294.0 685.8 1291.6 685.9 1290.0 686.7 C1288.3 687.5 1287.3 689.1 1285.8 689.5 C1284.3 690.0 1283.1 689.5 1280.8 689.4 C1278.6 689.4 1274.8 689.1 1272.3 689.3 C1269.8 689.5 1267.3 690.2 1265.9 690.5 C1264.5 690.8 1264.8 690.5 1264.0 691.0 C1263.2 691.4 1262.4 692.4 1261.0 693.2 C1259.5 694.0 1256.7 694.5 1255.2 695.6 C1253.8 696.7 1252.8 698.1 1252.0 699.9 C1251.1 701.8 1251.1 705.0 1250.1 706.9 C1249.2 708.8 1247.4 709.8 1246.3 711.5 C1245.2 713.2 1244.8 715.7 1243.6 716.9 C1242.4 718.2 1240.0 718.7 1239.3 719.1" fill="none" stroke="#f7c27e" stroke-width="1.1"/>
<path d="M1410.0 666.0 C1409.5 666.1 1408.3 665.8 1407.0 666.4 C1405.6 666.9 1403.5 669.2 1401.9 669.5 C1400.3 669.8 1398.4 668.6 1397.4 668.3 C1396.4 668.0 1397.5 668.0 1395.9 667.9 C1394.4 667.8 1390.8 667.6 1388.2 667.8 C1385.7 668.1 1382.4 669.0 1380.6 669.6 C1378.8 670.1 1378.6 670.4 1377.4 671.3 C1376.1 672.2 1374.5 674.6 1372.9 675.0 C1371.3 675.5 1369.3 674.2 1367.8 673.9 C1366.3 673.5 1365.4 672.8 1364.0 672.9 C1362.7 673.0 1361.3 674.3 1359.5 674.5 C1357.8 674.7 1354.5 674.2 1353.5 674.2" fill="none" stroke="#f7c27e" stroke-width="1.1"/>
<path d="M1373.9 600.8 C1374.3 601.2 1375.0 602.3 1376.1 603.1 C1377.3 604.0 1380.0 605.7 1381.0 605.8 C1382.0 605.8 1382.0 604.1 1382.2 603.6 C1382.5 603.1 1382.0 602.4 1382.5 602.9 C1383.1 603.3 1383.9 605.4 1385.4 606.3 C1386.8 607.1 1389.9 607.2 1391.3 607.9 C1392.7 608.5 1393.3 609.4 1393.8 610.2 C1394.3 611.1 1394.2 612.6 1394.3 613.0" fill="none" stroke="#f7c27e" stroke-width="1.1"/>
<path d="M1170.0 743.5 C1170.7 743.8 1173.1 745.0 1174.2 744.9 C1175.2 744.8 1174.7 742.7 1176.1 742.8 C1177.5 742.9 1180.6 745.1 1182.4 745.7 C1184.2 746.4 1184.8 747.1 1187.0 746.9 C1189.3 746.6 1193.4 744.7 1196.0 744.1 C1198.6 743.4 1200.9 743.1 1202.7 743.1 C1204.5 743.0 1205.6 743.5 1206.7 743.9 C1207.9 744.4 1208.4 745.7 1209.6 745.7 C1210.8 745.6 1212.9 744.0 1213.9 743.8 C1215.0 743.6 1214.5 745.2 1215.8 744.6 C1217.1 744.0 1220.0 741.5 1222.0 740.2 C1224.0 739.0 1225.5 737.3 1227.9 737.0 C1230.3 736.8 1234.1 737.9 1236.6 738.6 C1239.0 739.3 1240.7 741.0 1242.9 741.3 C1245.1 741.6 1248.0 741.3 1249.9 740.7 C1251.9 740.0 1253.1 738.1 1254.5 737.5 C1255.9 737.0 1257.5 737.0 1258.3 737.3 C1259.2 737.7 1258.1 739.5 1259.5 739.7 C1260.8 740.0 1264.5 739.5 1266.3 738.9 C1268.1 738.3 1268.2 736.9 1270.0 736.3 C1271.7 735.7 1274.7 735.8 1276.7 735.3 C1278.8 734.8 1280.8 733.1 1282.2 733.3 C1283.6 733.5 1283.7 735.8 1285.3 736.3 C1286.8 736.9 1289.7 736.6 1291.6 736.7 C1293.5 736.8 1295.1 736.8 1296.7 736.9 C1298.4 737.0 1299.7 737.1 1301.5 737.3 C1303.3 737.5 1305.2 738.2 1307.3 738.1 C1309.4 738.1 1311.7 736.7 1314.3 736.9 C1316.8 737.2 1320.2 739.2 1322.7 739.6 C1325.1 740.1 1327.2 738.9 1329.0 739.7 C1330.9 740.5 1331.8 742.8 1333.7 744.6 C1335.6 746.4 1338.2 749.6 1340.4 750.7 C1342.6 751.7 1344.4 750.4 1346.9 751.0 C1349.4 751.6 1352.3 754.0 1355.3 754.2 C1358.2 754.4 1361.2 752.3 1364.4 752.2 C1367.7 752.1 1371.8 753.3 1374.9 753.7 C1377.9 754.1 1380.5 754.0 1382.7 754.7 C1385.0 755.3 1386.0 757.6 1388.5 757.6 C1391.0 757.7 1394.1 755.5 1397.7 755.1 C1401.3 754.8 1408.0 755.7 1410.0 755.8" fill="none" stroke="#f7c27e" stroke-width="1.1"/>
<path d="M1247.5 780.0 C1247.3 779.6 1246.4 779.0 1246.6 777.7 C1246.7 776.5 1248.1 773.7 1248.4 772.5 C1248.6 771.2 1247.7 771.1 1248.1 770.3 C1248.6 769.4 1250.2 768.0 1251.3 767.4 C1252.4 766.8 1253.5 767.2 1254.7 766.7 C1256.0 766.3 1257.9 765.1 1258.7 764.5 C1259.5 763.9 1259.3 763.1 1259.7 763.1 C1260.1 763.2 1260.0 764.4 1261.2 764.7 C1262.5 765.0 1265.1 765.4 1267.0 765.1 C1269.0 764.9 1271.2 763.8 1272.7 763.3 C1274.2 762.8 1275.3 762.4 1276.1 762.2 C1276.8 762.0 1277.0 761.6 1277.4 762.1 C1277.8 762.5 1277.8 764.3 1278.4 765.0 C1279.1 765.7 1280.6 766.3 1281.5 766.2 C1282.5 766.0 1283.5 764.4 1284.0 764.0 C1284.4 763.7 1284.2 763.9 1284.2 763.9" fill="none" stroke="#f7c27e" stroke-width="1.1"/>
<path d="M1410.0 596.7 C1409.3 597.0 1407.3 598.0 1405.9 598.4 C1404.6 598.7 1403.2 598.0 1401.8 598.8 C1400.5 599.6 1398.6 602.4 1397.6 603.3 C1396.7 604.3 1396.4 604.2 1396.0 604.6 C1395.6 604.9 1396.0 605.3 1395.0 605.5 C1394.1 605.8 1391.6 606.4 1390.5 606.0 C1389.4 605.7 1389.4 603.8 1388.4 603.3 C1387.3 602.8 1384.8 602.9 1384.1 602.8" fill="none" stroke="#f7c27e" stroke-width="1.1"/>
<path d="M1192.4 621.2 C1193.3 621.7 1196.1 623.6 1197.9 624.1 C1199.7 624.5 1201.6 623.9 1203.3 623.9 C1205.1 623.9 1206.9 623.6 1208.5 624.1 C1210.2 624.7 1212.1 626.1 1213.3 627.0 C1214.4 627.9 1214.9 629.0 1215.5 629.4 C1216.0 629.8 1216.4 629.9 1216.7 629.6 C1217.1 629.3 1217.2 628.5 1217.5 627.8 C1217.9 627.1 1218.7 625.7 1218.9 625.3" fill="none" stroke="#f7c27e" stroke-width="1.1"/>
<path d="M1214.9 590.6 C1214.7 591.1 1214.3 592.4 1213.9 593.9 C1213.6 595.4 1212.7 597.5 1212.9 599.6 C1213.1 601.7 1214.4 604.7 1214.9 606.5 C1215.5 608.3 1216.2 609.6 1216.2 610.5 C1216.3 611.5 1215.1 611.7 1215.1 612.1 C1215.0 612.5 1215.5 611.9 1216.1 613.1 C1216.6 614.3 1217.8 617.4 1218.3 619.1 C1218.8 620.7 1218.8 622.5 1218.9 623.2" fill="none" stroke="#f7c27e" stroke-width="1.1"/>
<path d="M240.0 289.2 C241.6 289.0 246.4 288.3 249.8 288.0 C253.2 287.8 257.2 288.1 260.2 287.8 C263.2 287.4 265.1 286.4 267.7 285.9 C270.3 285.4 273.4 285.0 275.6 284.9 C277.9 284.9 279.6 285.4 281.3 285.7 C283.0 286.1 284.1 286.5 285.9 287.2 C287.7 287.9 289.7 289.5 292.2 290.1 C294.7 290.7 297.9 290.8 300.6 290.9 C303.3 291.0 305.9 290.3 308.5 290.7 C311.0 291.2 313.2 293.0 315.9 293.5 C318.6 294.1 322.0 294.0 324.5 293.9 C327.0 293.7 328.7 292.9 331.0 292.8 C333.2 292.7 335.5 293.2 338.0 293.2 C340.5 293.2 343.0 293.3 345.9 292.8 C348.8 292.3 352.6 290.9 355.4 290.1 C358.1 289.3 360.1 289.2 362.3 288.0 C364.5 286.7 366.3 284.3 368.4 282.7 C370.4 281.2 372.6 279.8 374.8 278.7 C377.0 277.6 379.5 277.1 381.7 276.0 C383.9 275.0 385.9 273.2 388.3 272.4 C390.7 271.5 393.7 271.9 396.1 270.9 C398.5 270.0 400.4 268.3 402.5 266.8 C404.7 265.3 406.6 263.5 409.2 262.0 C411.8 260.5 416.5 258.7 418.0 258.0" fill="none" stroke="#b59cf0" stroke-width="1"/>
<path d="M413.6 298.1 C414.8 299.3 418.4 303.4 420.9 305.7 C423.5 308.1 426.8 309.4 429.0 312.3 C431.3 315.1 432.1 319.7 434.4 322.9 C436.7 326.2 440.9 329.4 442.8 331.8 C444.7 334.1 445.1 335.2 445.8 336.9 C446.5 338.6 446.4 339.7 447.1 342.0 C447.7 344.3 448.3 348.1 449.6 350.7 C451.0 353.3 453.7 354.9 455.2 357.6 C456.6 360.2 457.2 363.7 458.3 366.5 C459.4 369.2 460.7 372.1 461.9 374.3 C463.2 376.5 464.6 378.1 465.8 379.6 C467.0 381.1 467.9 382.3 469.2 383.5 C470.6 384.7 472.3 386.3 473.9 386.9 C475.5 387.6 477.1 386.6 479.1 387.6 C481.1 388.6 484.1 391.7 486.0 393.0 C487.8 394.4 488.5 396.1 490.1 395.9 C491.7 395.7 493.7 392.9 495.3 391.7 C497.0 390.5 498.1 390.0 499.9 388.7 C501.7 387.4 504.0 385.4 506.3 384.2 C508.5 382.9 510.4 381.8 513.4 381.0 C516.4 380.2 521.0 380.2 524.3 379.3 C527.5 378.5 529.5 377.0 532.7 375.9 C536.0 374.8 540.4 374.1 543.8 372.8 C547.2 371.4 550.2 369.3 553.1 367.8 C556.0 366.3 559.1 365.3 561.3 363.9 C563.5 362.4 564.3 359.9 566.6 358.8 C568.8 357.7 571.8 358.1 574.7 357.3 C577.7 356.5 581.6 354.2 584.0 354.2 C586.5 354.2 587.4 356.4 589.4 357.2 C591.5 358.1 594.1 359.2 596.2 359.6 C598.3 360.0 599.8 359.9 602.0 359.4 C604.3 359.0 607.6 358.3 609.9 357.2 C612.2 356.0 613.8 353.7 615.8 352.4 C617.8 351.0 619.2 350.0 621.8 348.9 C624.5 347.8 629.0 346.5 631.9 345.8 C634.8 345.2 636.3 346.4 639.4 345.3 C642.5 344.1 647.1 341.4 650.3 339.1 C653.4 336.8 655.1 333.6 658.5 331.4 C661.9 329.2 666.2 328.1 670.6 326.0 C675.0 324.0 680.8 320.5 684.8 319.1 C688.9 317.7 691.6 318.5 694.9 317.7 C698.2 316.8 701.3 315.4 704.5 313.8 C707.7 312.2 710.9 310.0 714.0 308.2 C717.1 306.4 719.8 304.7 723.0 303.1 C726.2 301.4 730.1 299.5 733.0 298.3 C735.9 297.2 738.2 297.7 740.4 296.1 C742.7 294.5 744.8 290.7 746.6 288.6 C748.4 286.5 748.5 284.8 751.2 283.6 C753.8 282.3 758.6 281.6 762.6 281.2 C766.6 280.8 771.2 281.9 775.3 281.1 C779.4 280.3 783.6 277.9 787.2 276.4 C790.9 274.9 794.2 272.9 797.0 272.1 C799.8 271.3 801.9 271.6 804.1 271.7 C806.2 271.8 807.0 272.7 809.8 272.8 C812.6 272.9 817.3 272.8 820.7 272.5 C824.0 272.3 828.5 271.6 830.1 271.4" fill="none" stroke="#b59cf0" stroke-width="1"/>
<path d="M542.6 307.0 C543.5 307.3 546.2 307.8 547.6 308.8 C549.0 309.7 549.7 311.6 551.1 312.7 C552.4 313.9 554.4 314.2 555.7 315.6 C557.1 316.9 557.8 318.9 559.3 321.1 C560.9 323.3 563.7 326.2 565.2 328.7 C566.6 331.2 566.6 334.2 568.1 336.1 C569.6 338.1 572.5 338.6 574.3 340.4 C576.1 342.2 577.5 345.5 579.0 346.9 C580.6 348.4 582.3 348.3 583.7 349.2 C585.2 350.0 586.7 351.1 587.6 352.1 C588.4 353.1 588.2 354.3 588.8 355.0 C589.5 355.6 591.1 355.8 591.6 355.9" fill="none" stroke="#b59cf0" stroke-width="1"/>
<path d="M453.6 373.7 C454.1 374.9 455.8 378.7 456.5 381.0 C457.1 383.2 456.9 385.2 457.5 387.2 C458.1 389.1 459.6 390.7 460.2 392.9 C460.9 395.1 460.6 397.5 461.5 400.2 C462.3 402.9 464.0 406.5 465.3 409.1 C466.6 411.7 467.5 413.6 469.3 416.0 C471.0 418.4 474.1 421.3 475.8 423.3 C477.5 425.3 478.3 427.0 479.5 428.0 C480.7 429.1 481.6 429.2 483.1 429.5 C484.7 429.8 486.8 429.4 488.8 429.8 C490.8 430.2 493.2 431.1 495.3 431.9 C497.4 432.7 499.9 434.6 501.5 434.5 C503.1 434.5 503.3 432.2 504.7 431.6 C506.1 430.9 508.5 430.9 509.9 430.8 C511.3 430.7 512.1 430.9 513.3 431.0 C514.4 431.1 515.2 431.2 516.8 431.3 C518.5 431.4 520.8 431.4 523.1 431.6 C525.5 431.9 527.8 432.5 530.9 432.7 C533.9 433.0 537.9 433.1 541.4 432.9 C544.8 432.8 549.8 431.8 551.5 431.6" fill="none" stroke="#b59cf0" stroke-width="1"/>
<path d="M609.4 360.4 C609.5 361.4 610.0 364.1 610.2 366.6 C610.5 369.0 611.3 372.2 611.1 375.1 C610.9 377.9 610.0 381.0 609.0 383.6 C608.0 386.3 605.8 388.4 605.0 391.2 C604.2 394.0 604.6 397.9 604.2 400.5 C603.7 403.2 602.6 404.5 602.3 407.4 C602.0 410.2 602.7 414.4 602.2 417.7 C601.6 421.0 600.1 424.4 599.0 427.0 C598.0 429.6 597.0 430.6 595.6 433.2 C594.3 435.8 592.1 439.3 590.9 442.4 C589.7 445.6 588.9 448.8 588.5 452.0 C588.2 455.3 589.3 458.8 588.8 462.1 C588.4 465.4 587.4 468.3 586.0 471.6 C584.5 475.0 581.6 479.1 580.3 482.3 C578.9 485.4 578.8 487.3 577.9 490.5 C577.0 493.8 576.5 497.9 575.1 501.7 C573.8 505.5 571.4 509.8 569.7 513.3 C568.0 516.8 566.7 519.1 564.8 522.5 C562.9 525.8 560.6 530.2 558.4 533.6 C556.2 537.0 552.7 541.3 551.5 542.8" fill="none" stroke="#b59cf0" stroke-width="1"/>
<path d="M529.3 516.1 C531.6 515.7 538.6 514.7 543.1 513.5 C547.6 512.3 552.0 510.0 556.4 509.0 C560.7 508.0 564.7 508.1 569.3 507.6 C574.0 507.2 579.2 506.8 584.3 506.2 C589.4 505.7 594.9 504.9 600.1 504.1 C605.3 503.4 610.9 502.5 615.5 501.7 C620.1 500.8 623.5 499.9 627.7 498.9 C631.8 498.0 636.7 497.8 640.4 495.9 C644.1 494.0 646.3 489.8 650.0 487.4 C653.6 485.0 658.6 483.2 662.4 481.5 C666.2 479.7 669.3 478.2 672.8 476.9 C676.4 475.7 679.8 474.9 683.7 473.9 C687.6 473.0 692.2 472.1 696.1 471.5 C700.0 470.9 703.2 471.8 706.9 470.6 C710.6 469.4 714.8 466.0 718.3 464.1 C721.7 462.2 722.2 460.5 727.6 459.1 C733.1 457.7 742.6 456.9 750.7 455.9 C758.8 454.8 767.6 454.0 776.3 452.7 C785.0 451.5 793.9 449.6 802.9 448.3 C811.8 447.0 825.6 445.5 830.1 444.9" fill="none" stroke="#b59cf0" stroke-width="1"/>
<path d="M725.1 302.5 C725.6 303.4 727.5 306.3 728.3 307.9 C729.1 309.5 729.0 310.2 730.1 312.0 C731.1 313.8 733.1 316.1 734.7 318.7 C736.2 321.2 738.0 324.6 739.2 327.3 C740.4 330.0 741.0 332.2 741.7 334.7 C742.3 337.2 742.4 340.2 743.1 342.5 C743.8 344.8 745.2 346.0 746.0 348.3 C746.8 350.7 746.7 354.7 748.0 356.6 C749.3 358.5 752.4 358.0 754.0 359.4 C755.6 360.9 755.7 363.6 757.6 365.3 C759.5 366.9 762.5 367.9 765.4 369.4 C768.3 370.9 772.4 372.9 774.9 374.2 C777.3 375.4 778.0 375.7 780.0 377.0 C782.0 378.4 784.5 380.4 786.9 382.3 C789.4 384.3 792.4 387.0 794.8 388.7 C797.2 390.3 799.3 391.7 801.5 392.1 C803.8 392.4 805.9 390.9 808.3 390.6 C810.7 390.4 813.5 391.0 816.1 390.6 C818.6 390.1 821.3 388.6 823.6 388.0 C825.9 387.4 829.0 387.2 830.1 387.1" fill="none" stroke="#b59cf0" stroke-width="1"/>
<path d="M1091.5 80.0 C1091.2 82.2 1090.4 88.7 1089.8 93.2 C1089.3 97.6 1088.5 102.5 1088.2 106.8 C1087.9 111.1 1088.1 114.6 1087.8 118.9 C1087.5 123.2 1087.2 128.1 1086.3 132.9 C1085.5 137.6 1083.9 142.2 1082.6 147.2 C1081.3 152.3 1079.5 157.6 1078.6 163.0 C1077.7 168.3 1078.0 174.1 1077.3 179.3 C1076.6 184.5 1074.4 189.8 1074.4 194.4 C1074.5 199.0 1076.8 202.8 1077.6 206.9 C1078.3 211.1 1078.3 215.4 1079.0 219.3 C1079.7 223.3 1080.4 227.2 1081.5 230.6 C1082.6 233.9 1084.3 235.2 1085.5 239.3 C1086.7 243.3 1087.6 249.5 1088.6 254.7 C1089.6 260.0 1090.8 266.4 1091.7 271.0 C1092.5 275.6 1092.8 278.5 1093.6 282.4 C1094.5 286.3 1096.3 289.8 1096.9 294.3 C1097.4 298.9 1097.1 305.0 1096.9 309.9 C1096.7 314.8 1095.5 319.3 1095.7 323.6 C1095.8 327.9 1097.0 331.9 1097.7 335.7 C1098.4 339.5 1099.6 343.0 1099.9 346.5 C1100.1 350.0 1099.0 353.3 1099.0 356.8 C1099.0 360.3 1100.0 363.9 1099.9 367.4 C1099.7 371.0 1098.5 374.5 1098.0 378.3 C1097.5 382.1 1097.6 386.4 1097.0 390.3 C1096.3 394.1 1095.0 398.0 1094.3 401.5 C1093.5 405.0 1092.8 407.6 1092.4 411.2 C1091.9 414.8 1092.0 418.7 1091.5 422.8 C1091.0 427.0 1090.6 431.9 1089.2 436.2 C1087.8 440.5 1085.0 444.6 1083.2 448.4 C1081.5 452.2 1080.2 455.4 1078.8 458.9 C1077.5 462.4 1076.6 466.1 1075.2 469.5 C1073.9 472.8 1072.0 475.2 1070.7 479.0 C1069.4 482.8 1068.6 487.9 1067.4 492.1 C1066.2 496.3 1064.5 500.5 1063.3 504.1 C1062.0 507.6 1060.9 510.0 1060.1 513.6 C1059.3 517.2 1059.1 522.4 1058.3 525.8 C1057.5 529.1 1056.2 530.6 1055.4 533.7 C1054.6 536.8 1053.7 541.4 1053.4 544.5 C1053.1 547.6 1054.1 549.8 1053.8 552.4 C1053.5 555.0 1051.8 558.9 1051.4 560.2" fill="none" stroke="#b59cf0" stroke-width="1"/>
<path d="M820.0 342.6 C821.9 342.1 827.6 340.3 831.3 339.5 C835.0 338.7 838.6 338.8 842.1 337.8 C845.5 336.9 848.1 335.1 851.8 333.8 C855.5 332.6 860.6 330.6 864.4 330.5 C868.3 330.5 871.3 332.2 874.9 333.7 C878.5 335.3 882.2 338.2 886.1 339.8 C890.1 341.4 894.2 342.4 898.5 343.3 C902.7 344.2 907.6 343.7 911.6 345.2 C915.5 346.6 918.5 349.8 922.2 351.8 C925.8 353.9 930.2 356.3 933.7 357.4 C937.3 358.6 940.4 358.0 943.5 358.7 C946.6 359.5 949.0 360.6 952.5 361.9 C955.9 363.3 959.8 365.3 964.1 366.7 C968.5 368.1 974.5 369.4 978.7 370.4 C982.8 371.3 985.6 371.7 988.8 372.6 C992.1 373.6 995.1 374.8 998.4 376.1 C1001.6 377.4 1004.8 379.3 1008.5 380.4 C1012.2 381.5 1016.5 381.5 1020.5 382.5 C1024.6 383.5 1029.1 384.7 1032.7 386.2 C1036.4 387.7 1040.9 390.6 1042.5 391.5" fill="none" stroke="#b59cf0" stroke-width="1"/>
<path d="M944.6 458.3 C945.9 458.9 949.9 460.5 952.1 462.2 C954.3 463.9 955.4 466.3 957.7 468.4 C960.1 470.5 963.1 472.9 966.1 474.7 C969.1 476.6 972.8 477.5 975.8 479.5 C978.9 481.5 981.5 484.9 984.4 486.8 C987.3 488.8 990.6 489.7 993.3 491.2 C995.9 492.8 997.6 494.5 1000.3 496.1 C1003.1 497.8 1006.7 499.4 1009.8 501.3 C1012.9 503.2 1015.6 504.9 1018.9 507.4 C1022.2 510.0 1026.5 514.5 1029.8 516.6 C1033.0 518.6 1035.0 518.3 1038.3 519.8 C1041.5 521.2 1046.0 523.5 1049.2 525.4 C1052.4 527.3 1054.5 529.1 1057.4 531.1 C1060.2 533.0 1063.0 535.7 1066.3 537.1 C1069.6 538.6 1073.7 538.8 1077.4 539.9 C1081.0 541.0 1084.8 542.5 1088.4 543.9 C1092.0 545.4 1095.6 547.0 1099.0 548.5 C1102.3 550.0 1104.6 551.8 1108.4 553.0 C1112.1 554.2 1117.5 554.4 1121.4 555.6 C1125.3 556.8 1129.8 559.4 1131.5 560.2" fill="none" stroke="#b59cf0" stroke-width="1"/>
<path d="M1144.9 320.3 C1146.0 321.3 1149.2 324.4 1151.8 326.2 C1154.5 328.0 1157.9 329.2 1160.8 331.2 C1163.6 333.1 1166.4 335.4 1168.9 337.8 C1171.4 340.3 1173.8 342.8 1175.8 346.0 C1177.8 349.2 1179.4 352.9 1180.9 356.9 C1182.5 360.9 1184.1 366.1 1185.2 370.0 C1186.2 373.9 1186.6 376.7 1187.2 380.5 C1187.8 384.4 1189.2 389.0 1188.6 393.1 C1188.0 397.1 1185.4 400.6 1183.8 404.6 C1182.2 408.6 1180.1 413.5 1178.9 417.3 C1177.8 421.0 1177.6 423.4 1176.8 427.0 C1176.1 430.6 1175.2 435.2 1174.4 438.9 C1173.7 442.6 1173.0 445.8 1172.3 449.1 C1171.6 452.4 1171.2 455.5 1170.3 458.7 C1169.3 461.8 1167.4 464.8 1166.5 468.2 C1165.7 471.6 1164.6 474.9 1165.0 478.9 C1165.4 482.8 1167.9 487.7 1169.1 492.0 C1170.2 496.3 1171.1 500.8 1172.0 504.8 C1173.0 508.8 1174.1 512.5 1174.9 515.9 C1175.8 519.3 1175.9 522.6 1177.1 525.3 C1178.3 528.1 1180.5 529.9 1182.1 532.6 C1183.6 535.3 1184.9 538.2 1186.6 541.5 C1188.3 544.7 1190.3 548.7 1192.2 551.8 C1194.2 554.9 1197.3 558.8 1198.3 560.2" fill="none" stroke="#b59cf0" stroke-width="1"/>
<path d="M1265.0 182.4 C1264.0 183.9 1260.6 188.5 1259.0 191.8 C1257.5 195.2 1257.6 198.6 1255.9 202.3 C1254.2 206.0 1250.7 209.7 1248.7 214.0 C1246.7 218.3 1245.9 224.9 1244.1 228.2 C1242.3 231.5 1240.0 231.6 1237.7 233.8 C1235.5 236.1 1232.9 239.1 1230.6 241.8 C1228.3 244.4 1225.9 246.8 1224.1 249.6 C1222.3 252.5 1220.7 255.0 1219.7 258.7 C1218.6 262.5 1218.3 268.2 1217.9 272.3 C1217.5 276.4 1217.9 279.7 1217.4 283.4 C1217.0 287.1 1216.4 291.1 1215.2 294.4 C1214.1 297.7 1211.5 300.1 1210.6 303.2 C1209.7 306.4 1210.6 310.0 1209.9 313.4 C1209.2 316.9 1207.4 320.4 1206.2 323.9 C1205.1 327.5 1204.5 331.0 1203.2 334.8 C1201.8 338.7 1199.1 345.0 1198.3 347.0" fill="none" stroke="#b59cf0" stroke-width="1"/>
<path d="M1211.6 80.0 C1211.1 82.0 1209.9 88.0 1208.7 92.2 C1207.5 96.4 1205.7 101.3 1204.6 105.0 C1203.5 108.8 1202.6 111.2 1202.1 114.6 C1201.5 118.1 1202.3 122.2 1201.3 125.9 C1200.3 129.6 1198.3 133.1 1196.1 137.0 C1193.9 140.8 1190.4 145.2 1188.2 148.8 C1185.9 152.4 1184.3 155.3 1182.4 158.6 C1180.4 161.9 1179.0 165.0 1176.5 168.4 C1174.1 171.8 1170.1 175.7 1167.7 179.0 C1165.2 182.2 1164.3 184.2 1161.6 188.0 C1159.0 191.9 1155.3 197.7 1151.8 201.9 C1148.2 206.1 1142.3 211.6 1140.4 213.5" fill="none" stroke="#b59cf0" stroke-width="1"/>
<path d="M820.0 124.5 C822.7 124.6 830.8 124.4 836.1 124.8 C841.5 125.3 847.0 126.6 852.2 127.3 C857.4 127.9 862.2 128.7 867.5 128.9 C872.9 129.1 879.1 128.6 884.5 128.4 C890.0 128.2 895.1 127.4 900.5 127.5 C905.9 127.5 911.6 128.7 917.1 128.7 C922.7 128.7 928.1 128.0 934.1 127.6 C940.0 127.1 946.2 126.5 952.9 126.0 C959.6 125.4 966.9 124.9 974.4 124.4 C981.8 124.0 989.9 123.7 997.7 123.1 C1005.5 122.5 1013.3 121.5 1021.0 120.8 C1028.8 120.1 1036.8 118.8 1044.1 119.0 C1051.5 119.2 1058.3 121.4 1065.4 122.1 C1072.4 122.8 1079.4 122.3 1086.5 123.1 C1093.6 124.0 1100.3 126.1 1107.9 126.9 C1115.5 127.8 1124.5 127.8 1132.2 128.2 C1139.9 128.5 1146.4 128.4 1154.0 129.2 C1161.6 129.9 1169.7 131.9 1177.6 132.9 C1185.6 133.9 1193.9 134.4 1201.6 135.1 C1209.3 135.7 1217.8 136.5 1224.0 136.8 C1230.2 137.0 1233.8 136.3 1238.7 136.5 C1243.5 136.7 1247.7 137.8 1253.1 137.9 C1258.5 138.0 1265.4 137.3 1271.1 137.3 C1276.8 137.3 1284.6 137.8 1287.3 137.9" fill="none" stroke="#b59cf0" stroke-width="1"/>
<path d="M1309.5 235.8 C1310.5 237.6 1313.4 243.1 1315.3 246.9 C1317.1 250.7 1319.0 254.6 1320.9 258.4 C1322.8 262.2 1324.6 266.3 1326.5 269.9 C1328.5 273.5 1330.6 276.2 1332.5 279.8 C1334.5 283.3 1336.8 287.4 1338.4 291.2 C1340.1 295.0 1340.9 299.1 1342.3 302.7 C1343.8 306.4 1345.1 309.6 1347.0 313.1 C1348.9 316.7 1351.2 320.6 1353.6 324.0 C1355.9 327.5 1359.0 330.4 1361.2 333.7 C1363.3 337.0 1364.6 340.0 1366.4 343.9 C1368.1 347.8 1370.1 352.8 1371.8 357.1 C1373.4 361.5 1375.1 365.3 1376.2 370.0 C1377.4 374.7 1378.0 380.2 1378.9 385.2 C1379.8 390.2 1381.1 394.4 1381.8 400.0 C1382.5 405.6 1382.5 412.7 1383.2 418.9 C1383.9 425.2 1384.9 432.1 1386.1 437.5 C1387.2 443.0 1389.1 446.5 1390.1 451.6 C1391.1 456.7 1391.1 462.5 1392.0 468.1 C1392.8 473.8 1394.0 480.1 1395.2 485.4 C1396.4 490.8 1397.9 495.7 1399.2 500.5 C1400.4 505.3 1402.0 509.1 1402.8 514.1 C1403.5 519.2 1402.7 525.4 1403.5 530.7 C1404.2 536.0 1406.1 540.9 1407.2 545.9 C1408.3 550.8 1409.6 557.8 1410.1 560.2" fill="none" stroke="#b59cf0" stroke-width="1"/>
<path d="M1229.4 369.3 C1230.8 370.0 1234.6 371.9 1237.4 373.6 C1240.2 375.4 1243.0 378.0 1246.1 379.9 C1249.3 381.9 1252.9 383.5 1256.4 385.3 C1259.9 387.1 1263.7 389.6 1267.3 390.7 C1270.8 391.9 1274.2 391.2 1277.8 392.0 C1281.4 392.9 1285.4 394.7 1288.9 395.6 C1292.3 396.5 1295.3 396.6 1298.4 397.4 C1301.6 398.2 1304.4 400.2 1307.8 400.4 C1311.3 400.5 1315.9 398.7 1319.2 398.1 C1322.6 397.4 1324.3 397.1 1327.9 396.4 C1331.4 395.8 1336.3 394.8 1340.6 394.4 C1345.0 394.0 1349.2 394.6 1353.8 394.0 C1358.5 393.4 1364.1 391.7 1368.5 390.9 C1372.9 390.0 1375.8 389.5 1380.3 388.8 C1384.8 388.1 1390.7 387.7 1395.7 386.7 C1400.6 385.7 1407.7 383.3 1410.1 382.6" fill="none" stroke="#b59cf0" stroke-width="1"/>
<path d="M820.0 427.1 C821.6 427.7 826.2 429.6 829.3 430.3 C832.5 430.9 835.4 430.3 839.0 430.9 C842.6 431.6 846.8 433.2 850.9 434.3 C855.1 435.3 859.6 436.2 864.0 437.1 C868.4 437.9 873.0 438.2 877.2 439.4 C881.4 440.6 885.4 443.0 889.1 444.3 C892.8 445.6 896.4 445.7 899.4 447.0 C902.4 448.3 904.4 450.9 907.1 452.1 C909.9 453.3 912.7 453.7 915.8 454.2 C918.9 454.7 922.7 454.6 925.7 455.0 C928.7 455.3 930.6 455.7 933.7 456.3 C936.9 456.8 942.8 457.9 944.6 458.3" fill="none" stroke="#b59cf0" stroke-width="1"/>
<path d="M953.5 235.8 C954.9 236.7 959.3 239.8 962.0 241.2 C964.8 242.7 967.5 243.1 970.0 244.5 C972.5 245.9 974.3 247.4 977.0 249.5 C979.8 251.6 983.6 255.5 986.5 257.1 C989.4 258.7 992.1 258.6 994.6 259.2 C997.1 259.9 998.8 260.1 1001.5 260.9 C1004.2 261.7 1007.9 262.7 1010.7 264.0 C1013.6 265.2 1015.8 267.5 1018.6 268.4 C1021.3 269.4 1024.4 269.0 1027.3 269.7 C1030.2 270.4 1033.3 271.8 1036.1 272.9 C1038.8 273.9 1041.0 274.7 1043.5 275.9 C1046.1 277.1 1050.1 279.5 1051.4 280.3" fill="none" stroke="#b59cf0" stroke-width="1"/>
<path d="M820.0 249.1 C821.2 249.8 824.6 252.1 827.2 253.1 C829.9 254.1 832.8 254.9 836.0 255.2 C839.1 255.6 842.9 254.8 846.1 255.1 C849.4 255.4 852.5 256.1 855.7 256.7 C858.8 257.4 862.6 258.4 865.3 259.0 C868.0 259.5 869.5 259.3 872.0 260.3 C874.5 261.2 877.9 263.3 880.5 264.7 C883.0 266.1 884.4 267.6 887.1 268.8 C889.7 270.0 892.8 271.3 896.3 272.0 C899.8 272.8 904.3 272.8 908.0 273.1 C911.7 273.4 914.8 273.3 918.7 273.7 C922.5 274.2 929.2 275.5 931.3 275.8" fill="none" stroke="#b59cf0" stroke-width="1"/>
<path d="M1287.3 80.0 C1288.1 81.8 1290.9 87.3 1292.2 91.0 C1293.6 94.7 1294.5 98.6 1295.5 102.1 C1296.4 105.7 1296.9 108.7 1297.9 112.2 C1298.9 115.7 1300.6 119.1 1301.4 123.0 C1302.2 126.9 1302.5 131.8 1302.6 135.7 C1302.8 139.6 1301.3 142.4 1302.1 146.3 C1302.9 150.2 1306.0 155.0 1307.4 159.1 C1308.9 163.2 1309.3 167.4 1310.7 170.9 C1312.2 174.4 1314.0 176.8 1316.1 180.2 C1318.2 183.6 1321.5 188.0 1323.3 191.5 C1325.2 195.1 1326.0 198.0 1327.3 201.7 C1328.5 205.3 1328.5 210.8 1330.8 213.5 C1333.1 216.3 1337.5 216.2 1341.1 218.1 C1344.7 220.0 1348.8 222.8 1352.4 225.0 C1356.0 227.2 1359.1 229.5 1363.0 231.5 C1366.9 233.4 1372.1 235.5 1375.6 236.6 C1379.2 237.8 1381.0 238.3 1384.2 238.6 C1387.3 238.9 1391.4 238.1 1394.3 238.4 C1397.3 238.7 1399.1 240.1 1401.7 240.4 C1404.3 240.7 1408.7 240.2 1410.1 240.2" fill="none" stroke="#b59cf0" stroke-width="1"/>
<path d="M240.0 577.9 C242.0 578.0 248.4 578.2 251.8 578.8 C255.3 579.4 257.6 580.8 260.8 581.6 C264.1 582.4 267.3 582.9 271.2 583.6 C275.1 584.4 280.1 585.1 284.2 586.0 C288.2 586.9 291.3 588.0 295.6 589.0 C299.9 590.0 306.1 590.9 310.0 592.1 C314.0 593.3 316.1 595.2 319.3 596.1 C322.5 596.9 325.4 596.5 329.2 597.3 C333.0 598.1 337.6 600.1 341.9 601.0 C346.3 601.9 351.4 602.2 355.2 602.6 C359.0 602.9 361.9 603.2 364.8 603.4 C367.8 603.6 369.8 604.1 372.8 603.7 C375.7 603.3 379.1 601.7 382.6 601.0 C386.2 600.3 390.2 600.6 394.0 599.4 C397.8 598.3 401.7 595.7 405.5 594.0 C409.4 592.3 413.2 590.4 417.1 589.2 C420.9 587.9 424.7 587.4 428.4 586.6 C432.0 585.7 435.1 585.0 438.8 583.9 C442.5 582.8 446.4 581.4 450.4 579.9 C454.4 578.5 458.5 575.7 463.0 575.3 C467.6 574.8 473.3 576.3 477.7 577.2 C482.1 578.1 485.8 580.1 489.4 580.9 C492.9 581.7 495.7 581.1 499.0 581.9 C502.4 582.7 506.2 585.1 509.7 585.9 C513.2 586.7 516.1 586.0 520.0 586.7 C523.8 587.5 528.9 589.2 532.7 590.3 C536.4 591.4 539.1 592.7 542.4 593.5 C545.8 594.2 548.9 594.8 552.7 594.6 C556.4 594.4 560.9 593.7 564.8 592.5 C568.6 591.3 571.3 588.7 575.7 587.5 C580.2 586.4 586.5 586.3 591.4 585.5 C596.3 584.7 600.2 583.7 605.0 582.9 C609.9 582.2 615.4 581.0 620.5 580.8 C625.6 580.6 630.6 581.9 635.5 581.7 C640.5 581.4 645.2 580.0 650.2 579.5 C655.2 579.0 661.1 579.6 665.5 578.8 C669.9 578.0 672.9 575.7 676.5 574.8 C680.0 574.0 683.0 574.2 686.7 573.5 C690.4 572.8 694.6 571.6 698.5 570.9 C702.4 570.1 708.1 569.3 710.0 569.0" fill="none" stroke="#b59cf0" stroke-width="1"/>
<path d="M472.8 586.9 C473.6 588.7 475.6 594.5 477.5 597.7 C479.3 600.9 482.1 602.9 483.9 605.9 C485.7 609.0 487.2 612.3 488.4 615.9 C489.6 619.5 490.4 624.5 491.1 627.6 C491.8 630.6 491.5 632.3 492.5 634.2 C493.5 636.0 495.3 636.9 497.0 638.5 C498.6 640.1 500.9 641.6 502.4 643.7 C503.8 645.8 503.9 648.8 505.8 651.3 C507.6 653.8 511.1 656.5 513.4 658.7 C515.7 660.9 517.8 662.2 519.5 664.4 C521.3 666.6 522.6 669.7 523.9 671.8 C525.2 673.9 525.3 675.5 527.5 677.1 C529.6 678.8 534.1 679.9 536.8 681.5 C539.4 683.2 541.1 685.3 543.1 687.0 C545.2 688.7 547.3 690.6 549.0 691.8 C550.6 692.9 550.5 693.3 552.8 694.0 C555.1 694.8 559.2 695.7 562.7 696.3 C566.2 696.9 570.4 696.4 573.7 697.5 C577.1 698.7 579.9 701.6 582.7 703.1 C585.5 704.6 588.3 705.4 590.5 706.6 C592.7 707.7 594.1 708.7 595.8 710.1 C597.5 711.5 599.0 713.3 600.7 714.9 C602.5 716.6 604.3 718.3 606.4 719.9 C608.6 721.5 611.8 723.0 613.6 724.7 C615.5 726.3 616.0 728.6 617.7 730.0 C619.5 731.5 621.8 732.2 624.0 733.3 C626.2 734.3 629.1 735.1 631.1 736.5 C633.0 737.8 633.7 740.7 635.8 741.2 C637.8 741.7 641.0 740.3 643.3 739.6 C645.6 738.9 647.5 737.6 649.6 736.9 C651.6 736.3 653.2 736.2 655.6 735.5 C657.9 734.7 660.1 733.8 663.8 732.3 C667.5 730.9 673.3 728.3 677.6 726.6 C682.0 724.9 686.2 723.7 689.8 722.0 C693.4 720.4 695.7 718.4 699.3 716.9 C702.8 715.5 707.2 714.0 711.1 713.1 C715.0 712.3 719.1 712.2 722.6 711.7 C726.2 711.3 728.9 711.5 732.5 710.5 C736.1 709.6 740.7 707.3 744.3 706.2 C747.9 705.1 751.1 704.8 754.1 703.9 C757.1 703.0 759.1 701.6 762.2 700.7 C765.3 699.8 768.5 699.5 772.7 698.5 C776.8 697.4 782.6 695.4 786.9 694.3 C791.3 693.3 795.6 693.1 799.0 692.2 C802.3 691.3 803.8 690.1 806.8 688.7 C809.9 687.2 814.7 684.9 817.3 683.6 C819.9 682.2 820.3 681.7 822.4 680.5 C824.5 679.3 828.7 677.1 830.0 676.4" fill="none" stroke="#b59cf0" stroke-width="1"/>
<path d="M240.0 671.9 C241.8 672.1 246.7 672.7 250.6 672.9 C254.5 673.1 259.6 673.1 263.5 673.1 C267.4 673.1 270.6 673.4 273.8 673.0 C277.0 672.5 279.0 670.5 282.6 670.3 C286.3 670.1 291.5 671.1 295.8 671.8 C300.0 672.5 304.0 674.2 307.9 674.5 C311.8 674.8 315.4 673.7 319.1 673.6 C322.8 673.5 326.6 674.1 330.2 674.0 C333.8 673.8 337.1 673.0 340.6 672.6 C344.1 672.2 347.5 671.5 351.3 671.4 C355.1 671.3 359.8 672.3 363.4 672.2 C367.1 672.0 369.5 671.1 373.1 670.5 C376.7 669.9 381.4 669.1 385.0 668.5 C388.5 667.8 390.7 667.5 394.2 666.6 C397.8 665.7 402.8 664.0 406.4 663.2 C409.9 662.4 411.7 662.1 415.7 662.0 C419.7 661.8 425.8 662.3 430.2 662.3 C434.7 662.3 438.4 661.6 442.3 661.8 C446.1 662.0 450.0 662.7 453.3 663.3 C456.7 663.9 458.5 665.2 462.2 665.4 C465.9 665.6 471.5 664.4 475.5 664.6 C479.4 664.8 482.1 665.8 485.9 666.7 C489.6 667.6 494.5 669.4 498.3 670.3 C502.0 671.1 506.9 671.6 508.6 671.9" fill="none" stroke="#b59cf0" stroke-width="1"/>
<path d="M508.6 645.0 C507.8 647.2 505.6 653.9 503.9 658.0 C502.2 662.1 500.0 665.4 498.2 669.8 C496.5 674.3 494.8 680.2 493.3 684.8 C491.8 689.4 490.2 693.7 489.1 697.2 C487.9 700.8 487.4 702.8 486.2 705.9 C484.9 709.0 483.2 712.8 481.3 715.7 C479.5 718.6 476.6 720.8 474.9 723.3 C473.2 725.8 471.8 728.2 471.1 730.6 C470.4 733.0 470.9 735.2 470.6 737.9 C470.3 740.6 470.1 744.0 469.2 746.8 C468.2 749.6 465.9 752.0 465.0 754.6 C464.0 757.2 463.9 759.4 463.5 762.4 C463.1 765.4 462.5 769.5 462.7 772.7 C462.9 775.9 464.3 778.0 464.7 781.5 C465.2 785.0 465.3 789.2 465.5 793.4 C465.6 797.6 465.3 802.7 465.4 806.7 C465.6 810.6 466.0 813.4 466.4 817.2 C466.8 820.9 467.1 825.8 467.7 829.2 C468.4 832.7 469.2 834.6 470.5 837.7 C471.7 840.9 473.4 844.5 475.1 848.1 C476.8 851.7 479.3 855.7 480.9 859.5 C482.5 863.3 483.3 867.4 484.7 871.2 C486.2 875.0 488.2 878.5 489.6 882.3 C491.0 886.2 491.7 890.6 493.2 894.4 C494.6 898.3 497.0 901.8 498.4 905.3 C499.9 908.9 500.7 911.9 501.9 915.7 C503.1 919.4 504.6 923.6 505.7 927.8 C506.8 931.9 508.1 938.4 508.6 940.5" fill="none" stroke="#b59cf0" stroke-width="1"/>
<path d="M633.9 739.1 C634.2 741.2 635.0 747.8 635.4 751.8 C635.8 755.8 635.9 759.7 636.6 763.0 C637.3 766.4 638.6 768.3 639.6 771.7 C640.6 775.0 642.7 780.3 642.7 783.0 C642.8 785.8 641.1 786.3 639.8 788.3 C638.6 790.4 636.2 793.5 635.3 795.3 C634.3 797.2 634.5 797.6 634.2 799.5 C633.8 801.4 634.8 804.5 633.3 806.7 C631.7 808.9 627.6 811.0 625.1 812.9 C622.6 814.8 620.9 816.4 618.3 818.1 C615.8 819.9 612.8 821.8 609.7 823.4 C606.5 825.0 603.1 826.3 599.4 827.9 C595.7 829.4 591.4 831.3 587.5 832.7 C583.6 834.1 579.9 835.0 576.0 836.1 C572.2 837.3 568.6 838.2 564.6 839.7 C560.6 841.2 556.2 844.3 552.1 845.1 C548.1 845.9 544.1 844.8 540.1 844.6 C536.0 844.3 531.3 844.3 527.7 843.5 C524.2 842.6 522.0 840.6 518.8 839.6 C515.7 838.6 510.3 837.9 508.6 837.5" fill="none" stroke="#b59cf0" stroke-width="1"/>
<path d="M240.0 752.5 C241.2 753.0 244.8 755.1 247.3 755.8 C249.9 756.4 252.3 756.4 255.1 756.6 C257.9 756.9 260.7 757.3 264.2 757.1 C267.7 756.9 272.3 755.8 276.2 755.5 C280.1 755.2 283.6 754.9 287.5 755.3 C291.5 755.7 295.4 757.9 300.0 758.0 C304.6 758.2 310.4 756.5 315.1 756.1 C319.7 755.6 323.8 755.1 327.7 755.5 C331.6 755.8 334.6 756.8 338.5 758.0 C342.4 759.2 347.1 761.6 351.1 762.8 C355.0 764.1 358.3 764.2 362.1 765.4 C365.9 766.6 370.4 769.4 374.0 770.3 C377.6 771.1 380.2 770.1 383.8 770.4 C387.3 770.7 391.5 771.5 395.5 772.0 C399.4 772.5 403.6 772.8 407.5 773.3 C411.4 773.7 417.1 774.6 419.1 774.9" fill="none" stroke="#b59cf0" stroke-width="1"/>
<path d="M351.9 560.0 C352.2 562.1 353.6 568.1 354.0 572.4 C354.3 576.7 353.5 581.9 354.0 585.7 C354.5 589.5 356.1 592.2 357.1 595.2 C358.1 598.2 359.7 600.1 360.2 603.7 C360.7 607.3 359.7 612.6 360.0 616.8 C360.2 621.1 361.8 625.1 361.6 629.2 C361.3 633.4 359.6 638.0 358.7 641.7 C357.9 645.4 357.1 647.8 356.4 651.2 C355.6 654.7 354.6 658.7 354.2 662.1 C353.8 665.5 354.4 668.4 353.9 671.7 C353.5 675.1 351.9 678.6 351.5 682.3 C351.2 686.1 351.8 692.3 351.9 694.3" fill="none" stroke="#b59cf0" stroke-width="1"/>
<path d="M240.0 940.5 C241.9 940.8 247.4 942.1 251.3 942.2 C255.1 942.3 259.7 941.2 263.0 941.3 C266.4 941.3 268.1 942.0 271.4 942.5 C274.7 942.9 279.2 943.7 282.8 944.1 C286.4 944.6 289.1 945.4 293.0 945.2 C296.9 945.1 302.1 943.8 305.9 943.4 C309.7 942.9 312.2 943.2 315.9 942.5 C319.6 941.7 323.3 938.7 328.2 938.8 C333.2 938.9 340.1 941.9 345.5 943.1 C350.9 944.3 355.3 945.3 360.7 946.0 C366.2 946.6 372.0 947.0 378.3 947.2 C384.7 947.4 393.3 946.6 398.7 947.2 C404.1 947.8 406.7 949.5 410.8 950.6 C414.8 951.8 419.3 953.5 422.9 954.2 C426.4 954.8 428.7 954.3 432.1 954.3 C435.5 954.4 439.6 955.0 443.4 954.5 C447.2 954.0 451.3 952.1 454.8 951.4 C458.2 950.8 460.8 951.1 464.3 950.6 C467.8 950.0 472.2 949.0 475.6 948.3 C479.0 947.7 480.1 946.6 484.6 946.6 C489.2 946.5 496.7 947.3 503.2 948.0 C509.6 948.7 517.1 949.7 523.1 951.0 C529.0 952.2 533.6 954.1 538.9 955.5 C544.2 956.9 550.3 958.3 554.9 959.2 C559.6 960.0 562.9 960.6 566.8 960.7 C570.7 960.8 574.4 959.9 578.2 959.9 C582.1 959.8 586.0 960.4 589.9 960.6 C593.8 960.9 597.9 961.6 601.5 961.4 C605.2 961.1 608.8 959.7 611.7 959.3 C614.7 958.9 616.0 959.3 619.0 959.0 C622.1 958.6 625.8 957.8 630.0 957.4 C634.1 957.1 640.0 957.6 643.8 956.9 C647.7 956.2 649.8 954.1 653.0 953.3 C656.2 952.5 659.5 952.7 663.3 951.9 C667.0 951.1 671.3 949.2 675.4 948.5 C679.5 947.8 684.1 948.1 688.0 947.8 C692.0 947.4 695.8 946.8 699.1 946.3 C702.3 945.8 703.9 945.5 707.6 944.9 C711.3 944.4 717.0 944.1 721.1 943.3 C725.3 942.6 730.5 941.0 732.4 940.5" fill="none" stroke="#b59cf0" stroke-width="1"/>
<path d="M732.4 716.7 C733.3 718.7 736.1 724.6 737.8 728.8 C739.4 732.9 741.5 738.0 742.6 741.7 C743.6 745.3 743.4 747.3 744.2 750.9 C745.0 754.4 746.3 759.0 747.4 763.0 C748.6 767.0 750.3 771.3 751.2 774.8 C752.1 778.2 752.5 780.5 752.7 783.9 C753.0 787.3 752.5 791.2 752.7 795.0 C752.9 798.7 753.7 802.8 754.0 806.2 C754.3 809.6 754.3 811.9 754.6 815.3 C755.0 818.8 755.4 822.9 756.3 827.1 C757.3 831.2 759.4 836.2 760.4 840.3 C761.3 844.3 761.2 847.7 762.1 851.4 C762.9 855.1 764.1 858.6 765.6 862.5 C767.0 866.4 769.1 871.0 770.6 875.1 C772.2 879.1 773.5 883.2 774.6 886.8 C775.8 890.4 775.9 893.3 777.4 896.7 C778.9 900.1 781.5 903.7 783.6 907.3 C785.7 910.9 788.4 914.7 789.9 918.6 C791.4 922.4 791.3 926.7 792.4 930.4 C793.5 934.0 794.1 936.7 796.4 940.4 C798.7 944.1 803.3 948.9 806.1 952.6 C809.0 956.3 811.3 959.0 813.7 962.6 C816.1 966.2 818.0 970.5 820.7 974.2 C823.4 978.0 828.4 983.4 830.0 985.2" fill="none" stroke="#b59cf0" stroke-width="1"/>
<path d="M499.6 1043.0 C500.2 1041.9 501.9 1039.0 503.3 1036.4 C504.6 1033.8 506.0 1030.2 507.9 1027.2 C509.8 1024.1 513.0 1020.9 514.9 1018.1 C516.8 1015.2 516.9 1012.8 519.2 1010.0 C521.5 1007.2 525.8 1003.8 529.0 1001.2 C532.1 998.7 535.4 996.8 538.1 994.8 C540.7 992.8 542.5 991.2 544.9 989.3 C547.3 987.3 549.0 984.4 552.3 983.0 C555.7 981.6 560.9 981.5 564.9 981.0 C569.0 980.4 573.4 980.7 576.7 979.9 C580.0 979.0 581.6 976.8 584.8 975.8 C588.0 974.8 591.9 975.0 595.7 973.9 C599.5 972.8 603.7 970.5 607.5 969.3 C611.4 968.0 615.2 967.3 619.0 966.6 C622.8 965.9 626.4 965.7 630.4 965.1 C634.3 964.5 640.8 963.2 642.9 962.9" fill="none" stroke="#b59cf0" stroke-width="1"/>
<path d="M240.0 770.4 C240.6 771.1 242.2 772.9 243.5 774.6 C244.8 776.2 246.1 778.0 247.7 780.1 C249.3 782.3 251.0 785.4 253.1 787.5 C255.3 789.6 259.4 789.9 260.7 792.6 C262.0 795.2 260.8 799.9 261.1 803.2 C261.4 806.6 261.9 809.6 262.4 812.7 C262.9 815.7 263.6 818.6 264.3 821.5 C265.0 824.4 266.7 827.1 266.5 830.2 C266.3 833.3 263.9 836.4 263.1 839.9 C262.3 843.5 262.0 847.5 261.5 851.6 C261.1 855.7 260.7 860.3 260.5 864.4 C260.4 868.5 260.9 872.9 260.5 876.2 C260.1 879.5 259.0 881.1 258.2 884.4 C257.4 887.6 256.1 891.8 255.6 895.5 C255.1 899.2 255.5 902.9 255.1 906.6 C254.8 910.4 253.7 916.2 253.4 918.1" fill="none" stroke="#b59cf0" stroke-width="1"/>
<path d="M620.5 895.7 C621.0 897.6 623.0 903.2 623.7 906.9 C624.5 910.5 624.6 913.9 625.0 917.5 C625.4 921.1 625.8 924.4 626.2 928.2 C626.7 932.0 627.3 936.6 627.9 940.4 C628.5 944.3 629.7 948.0 629.9 951.4 C630.1 954.8 629.1 957.4 629.1 960.9 C629.0 964.3 629.3 967.8 629.6 972.0 C630.0 976.2 630.8 981.8 631.1 985.9 C631.4 989.9 631.9 992.4 631.6 996.1 C631.2 999.7 629.3 1004.1 629.1 1007.8 C628.9 1011.4 630.3 1014.0 630.3 1017.7 C630.4 1021.4 629.6 1028.0 629.4 1030.0" fill="none" stroke="#b59cf0" stroke-width="1"/>
<path d="M710.0 985.2 C711.6 985.4 716.0 985.6 719.3 986.3 C722.7 987.0 726.2 988.0 730.1 989.4 C734.0 990.8 738.6 993.2 742.6 994.9 C746.6 996.5 750.3 998.4 754.3 999.4 C758.3 1000.5 762.5 1000.3 766.5 1001.3 C770.6 1002.2 774.6 1004.5 778.7 1005.0 C782.7 1005.5 787.2 1004.1 791.0 1004.2 C794.7 1004.3 798.2 1004.9 801.0 1005.7 C803.8 1006.5 805.1 1007.6 807.7 1009.0 C810.2 1010.3 813.7 1012.8 816.2 1013.8 C818.8 1014.8 820.9 1014.7 823.2 1015.1 C825.4 1015.6 828.8 1016.3 830.0 1016.6" fill="none" stroke="#b59cf0" stroke-width="1"/>
<path d="M820.0 577.9 C823.1 578.1 832.5 578.7 838.4 579.3 C844.4 579.8 850.0 580.9 855.7 581.2 C861.5 581.5 867.6 581.3 873.1 581.0 C878.5 580.6 882.8 579.5 888.2 579.1 C893.6 578.8 899.7 578.7 905.4 578.7 C911.1 578.7 916.8 578.7 922.2 579.1 C927.7 579.6 932.5 581.1 938.0 581.5 C943.5 581.9 949.4 581.2 955.1 581.5 C960.8 581.7 966.7 582.3 972.1 583.0 C977.5 583.6 982.4 585.1 987.3 585.6 C992.2 586.1 996.5 585.6 1001.7 586.0 C1006.9 586.4 1012.9 588.0 1018.6 588.2 C1024.4 588.4 1030.8 587.1 1036.2 587.2 C1041.6 587.3 1045.3 588.0 1050.9 588.8 C1056.5 589.7 1063.8 591.2 1069.8 592.4 C1075.8 593.6 1081.1 594.9 1086.8 595.8 C1092.5 596.7 1098.2 597.1 1103.8 597.7 C1109.4 598.3 1115.0 598.7 1120.5 599.4 C1125.9 600.1 1131.2 601.2 1136.7 602.0 C1142.1 602.8 1147.8 603.8 1153.4 604.2 C1159.0 604.7 1164.1 605.0 1170.1 604.7 C1176.1 604.5 1183.4 603.6 1189.3 602.7 C1195.2 601.8 1199.6 600.0 1205.4 599.2 C1211.2 598.5 1218.1 598.1 1223.9 598.0 C1229.7 597.9 1235.1 598.6 1240.4 598.7 C1245.7 598.8 1250.4 598.4 1255.8 598.5 C1261.3 598.6 1267.8 599.1 1273.3 599.1 C1278.8 599.1 1283.1 599.6 1288.9 598.5 C1294.7 597.4 1302.1 593.9 1308.0 592.2 C1314.0 590.6 1319.2 589.6 1324.6 588.6 C1329.9 587.7 1334.3 586.8 1339.9 586.3 C1345.5 585.8 1352.8 586.0 1358.1 585.6 C1363.5 585.3 1367.7 584.5 1372.1 584.5 C1376.4 584.4 1380.1 585.3 1384.3 585.4 C1388.5 585.4 1393.0 585.2 1397.2 584.7 C1401.5 584.2 1407.9 582.8 1410.0 582.4" fill="none" stroke="#b59cf0" stroke-width="1"/>
<path d="M820.0 707.7 C821.3 708.0 824.7 708.8 827.8 709.6 C830.8 710.3 834.8 711.7 838.5 712.3 C842.2 712.9 846.1 713.1 850.1 713.3 C854.1 713.6 858.4 713.3 862.6 713.8 C866.7 714.2 870.5 715.5 875.0 715.8 C879.5 716.1 885.5 715.5 889.7 715.7 C894.0 716.0 896.8 717.3 900.6 717.4 C904.4 717.6 908.9 716.4 912.5 716.6 C916.1 716.8 918.9 717.7 922.4 718.6 C925.8 719.4 930.0 720.3 933.3 721.7 C936.5 723.2 938.8 725.8 942.0 727.1 C945.2 728.5 948.8 728.1 952.7 729.8 C956.5 731.4 960.9 734.9 964.8 737.0 C968.8 739.0 972.9 740.7 976.5 742.2 C980.1 743.7 982.8 744.8 986.6 746.0 C990.4 747.2 995.2 748.6 999.3 749.5 C1003.5 750.3 1007.7 751.0 1011.5 751.1 C1015.4 751.1 1018.5 750.0 1022.4 749.8 C1026.2 749.6 1031.1 749.3 1034.8 749.7 C1038.5 750.1 1040.9 750.7 1044.5 752.1 C1048.1 753.4 1052.3 756.3 1056.4 757.7 C1060.4 759.1 1065.3 759.1 1069.0 760.4 C1072.7 761.6 1075.5 764.0 1078.6 765.2 C1081.8 766.3 1085.0 767.0 1088.1 767.3 C1091.3 767.5 1094.2 766.5 1097.5 766.8 C1100.9 767.1 1104.3 768.3 1108.5 769.2 C1112.6 770.2 1118.3 771.1 1122.6 772.4 C1126.8 773.6 1130.4 775.9 1134.0 776.9 C1137.6 778.0 1140.8 778.0 1144.1 778.7 C1147.4 779.4 1150.3 780.3 1153.9 781.3 C1157.5 782.3 1161.9 783.9 1165.8 784.5 C1169.7 785.1 1173.4 785.5 1177.3 785.1 C1181.2 784.7 1185.7 783.4 1189.2 782.0 C1192.7 780.6 1194.8 778.0 1198.3 776.6 C1201.9 775.3 1206.2 775.1 1210.5 773.9 C1214.8 772.6 1220.2 770.7 1224.1 769.2 C1228.0 767.7 1230.2 766.2 1234.0 764.9 C1237.7 763.5 1242.5 762.4 1246.7 761.1 C1250.9 759.8 1255.5 758.3 1259.2 757.3 C1262.9 756.3 1264.6 755.5 1269.0 755.0 C1273.4 754.4 1280.1 754.5 1285.8 754.2 C1291.6 753.8 1298.1 753.1 1303.4 752.9 C1308.8 752.6 1312.9 752.9 1318.0 752.6 C1323.2 752.3 1328.1 751.6 1334.2 751.0 C1340.3 750.5 1348.0 749.4 1354.7 749.3 C1361.3 749.1 1367.7 749.8 1374.2 749.9 C1380.6 750.1 1387.4 749.5 1393.3 749.9 C1399.3 750.4 1407.2 752.1 1410.0 752.5" fill="none" stroke="#b59cf0" stroke-width="1"/>
<path d="M1025.9 560.0 C1026.4 562.1 1028.1 568.2 1028.7 572.4 C1029.4 576.5 1029.8 581.2 1030.0 584.9 C1030.2 588.5 1030.1 591.3 1030.1 594.3 C1030.2 597.2 1030.4 599.1 1030.4 602.5 C1030.4 606.0 1030.3 610.7 1030.1 614.9 C1030.0 619.1 1029.6 624.2 1029.2 627.8 C1028.8 631.4 1028.0 633.7 1027.8 636.8 C1027.6 639.8 1027.9 642.2 1028.2 646.0 C1028.5 649.8 1029.1 655.5 1029.4 659.7 C1029.8 663.8 1029.4 666.9 1030.4 671.0 C1031.4 675.1 1034.3 679.9 1035.5 684.3 C1036.7 688.7 1037.3 693.7 1037.6 697.2 C1037.9 700.7 1037.1 702.4 1037.2 705.3 C1037.2 708.3 1037.4 711.3 1037.7 715.1 C1038.1 718.9 1038.8 723.9 1039.1 727.9 C1039.4 732.0 1039.8 735.4 1039.7 739.3 C1039.7 743.3 1038.9 747.7 1038.8 751.6 C1038.8 755.5 1039.2 759.1 1039.4 762.7 C1039.7 766.4 1040.7 770.0 1040.6 773.8 C1040.4 777.5 1038.8 781.8 1038.7 785.4 C1038.6 789.1 1039.9 792.1 1039.9 795.6 C1039.9 799.1 1038.3 802.5 1038.5 806.2 C1038.7 809.9 1040.4 814.3 1041.2 817.8 C1041.9 821.3 1042.3 823.7 1043.0 827.2 C1043.7 830.6 1044.2 834.5 1045.3 838.5 C1046.4 842.4 1048.2 846.9 1049.5 850.7 C1050.8 854.5 1052.4 857.4 1053.1 861.5 C1053.8 865.5 1053.3 870.8 1053.7 874.8 C1054.2 878.8 1054.8 881.7 1055.6 885.2 C1056.4 888.7 1056.9 891.8 1058.7 895.7 C1060.4 899.6 1063.7 904.3 1065.9 908.3 C1068.1 912.4 1069.7 916.5 1071.7 920.2 C1073.6 923.9 1076.1 927.2 1077.6 930.4 C1079.1 933.6 1079.8 936.4 1080.9 939.6 C1082.1 942.8 1082.7 945.8 1084.4 949.5 C1086.0 953.3 1089.5 956.4 1090.8 962.0 C1092.1 967.6 1091.2 976.0 1092.0 983.1 C1092.9 990.2 1094.7 997.8 1096.0 1004.6 C1097.4 1011.4 1098.1 1017.5 1099.8 1023.9 C1101.6 1030.3 1105.4 1039.8 1106.5 1043.0" fill="none" stroke="#b59cf0" stroke-width="1"/>
<path d="M967.7 694.3 C967.7 696.2 968.1 701.4 967.8 705.6 C967.6 709.7 966.8 715.4 966.2 719.1 C965.5 722.7 964.2 724.2 963.9 727.4 C963.7 730.6 964.8 734.7 964.6 738.2 C964.4 741.7 963.7 745.3 962.8 748.4 C961.8 751.5 959.7 753.2 958.9 756.8 C958.1 760.3 958.3 765.0 958.0 769.5 C957.7 774.1 957.3 779.9 957.1 783.9 C956.8 787.9 956.9 790.0 956.3 793.6 C955.7 797.2 954.2 801.9 953.5 805.6 C952.7 809.3 952.3 812.0 951.9 815.9 C951.6 819.8 950.9 825.4 951.4 829.1 C951.9 832.8 954.1 834.9 954.7 838.0 C955.3 841.0 955.0 843.5 955.1 847.3 C955.3 851.2 955.7 856.8 955.6 861.1 C955.5 865.4 954.0 868.8 954.4 873.1 C954.8 877.4 956.8 882.7 957.9 886.7 C958.9 890.8 959.6 893.5 960.8 897.4 C962.0 901.3 963.9 906.4 965.1 910.2 C966.3 914.0 967.3 917.3 967.7 920.4 C968.1 923.6 968.1 925.7 967.5 928.9 C967.0 932.2 964.9 936.4 964.5 939.9 C964.1 943.5 965.1 946.6 965.0 950.3 C965.0 954.0 964.4 956.8 964.1 962.3 C963.7 967.8 963.1 976.3 962.8 983.5 C962.6 990.7 962.7 999.0 962.6 1005.6 C962.5 1012.2 962.8 1016.8 962.2 1023.0 C961.5 1029.2 959.3 1039.7 958.8 1043.0" fill="none" stroke="#b59cf0" stroke-width="1"/>
<path d="M820.0 864.4 C821.8 864.2 827.2 863.9 830.7 863.0 C834.1 862.1 837.1 860.3 840.5 859.0 C843.9 857.7 847.3 856.1 851.2 855.0 C855.1 853.9 859.8 852.9 863.9 852.4 C868.0 852.0 871.9 851.9 875.9 852.3 C879.9 852.7 883.9 854.7 887.9 854.8 C891.9 855.0 895.6 853.8 899.7 853.2 C903.8 852.6 909.0 851.4 912.7 851.3 C916.5 851.2 919.0 852.5 922.2 852.5 C925.4 852.4 928.1 851.7 931.8 851.2 C935.5 850.7 940.2 850.2 944.3 849.5 C948.4 848.8 952.4 847.1 956.3 846.9 C960.1 846.8 963.8 848.5 967.5 848.8 C971.2 849.1 974.7 849.1 978.2 848.9 C981.8 848.7 985.1 847.6 988.7 847.7 C992.4 847.8 996.2 849.0 1000.1 849.4 C1003.9 849.9 1008.4 850.4 1011.8 850.5 C1015.2 850.5 1017.4 850.3 1020.6 849.7 C1023.8 849.2 1027.2 847.5 1031.1 846.9 C1035.0 846.4 1041.7 846.6 1043.8 846.5" fill="none" stroke="#b59cf0" stroke-width="1"/>
<path d="M1133.3 560.0 C1133.5 561.5 1134.0 565.5 1134.5 568.8 C1135.0 572.2 1136.0 576.2 1136.4 580.3 C1136.7 584.4 1135.9 589.4 1136.4 593.5 C1136.9 597.6 1138.6 601.0 1139.4 604.8 C1140.2 608.5 1140.9 612.7 1141.1 616.1 C1141.3 619.4 1141.1 621.4 1140.7 624.9 C1140.3 628.5 1139.0 633.5 1138.8 637.3 C1138.7 641.2 1139.8 644.7 1139.6 648.1 C1139.3 651.5 1137.8 654.2 1137.4 657.5 C1137.0 660.8 1137.7 664.0 1137.2 667.9 C1136.7 671.8 1135.0 677.0 1134.3 681.0 C1133.7 685.1 1133.7 688.2 1133.3 692.0 C1132.9 695.8 1132.7 700.2 1131.9 703.9 C1131.2 707.5 1129.3 709.8 1128.6 713.7 C1128.0 717.7 1128.1 723.4 1128.0 727.7 C1127.9 731.9 1127.7 735.0 1128.0 739.0 C1128.3 742.9 1128.9 747.3 1129.8 751.3 C1130.6 755.3 1131.6 759.6 1133.0 763.2 C1134.4 766.8 1136.6 769.3 1138.1 772.7 C1139.7 776.1 1141.6 782.0 1142.3 783.8" fill="none" stroke="#b59cf0" stroke-width="1"/>
<path d="M1401.9 604.8 C1401.3 606.6 1399.0 612.6 1398.2 616.1 C1397.4 619.6 1397.9 622.3 1397.1 625.8 C1396.2 629.2 1394.3 633.1 1393.3 636.7 C1392.3 640.2 1390.8 643.3 1391.1 647.1 C1391.4 650.8 1393.9 655.0 1395.2 659.2 C1396.6 663.4 1398.0 668.6 1399.2 672.4 C1400.3 676.1 1401.5 678.5 1402.0 681.8 C1402.5 685.0 1401.9 688.3 1402.2 691.9 C1402.4 695.4 1403.1 699.4 1403.6 703.0 C1404.2 706.7 1405.2 710.0 1405.5 714.0 C1405.8 717.9 1405.8 723.0 1405.4 726.8 C1405.0 730.6 1403.3 733.2 1403.2 736.7 C1403.0 740.3 1404.1 744.4 1404.2 748.2 C1404.3 752.0 1403.7 755.6 1403.6 759.5 C1403.5 763.5 1403.7 768.0 1403.4 772.1 C1403.1 776.1 1402.2 781.9 1401.9 783.8" fill="none" stroke="#b59cf0" stroke-width="1"/>
<path d="M820.0 962.9 C822.2 963.3 829.3 964.4 833.2 965.3 C837.2 966.1 840.2 967.2 843.8 968.0 C847.5 968.8 851.4 968.9 855.3 970.0 C859.3 971.1 863.9 973.6 867.7 974.8 C871.5 976.1 874.7 976.5 878.3 977.4 C881.8 978.2 885.5 979.6 889.1 979.7 C892.7 979.8 896.0 978.1 899.8 978.0 C903.6 977.8 908.1 978.2 911.7 978.6 C915.4 979.1 918.3 979.7 921.6 980.8 C925.0 982.0 928.3 984.5 931.7 985.6 C935.1 986.7 938.2 986.8 942.0 987.5 C945.8 988.2 952.2 989.3 954.3 989.7" fill="none" stroke="#b59cf0" stroke-width="1"/>
<path d="M1222.9 828.6 C1221.6 830.8 1217.2 837.8 1215.1 841.8 C1213.0 845.7 1211.9 848.7 1210.1 852.2 C1208.4 855.7 1206.5 859.4 1204.6 862.8 C1202.7 866.3 1200.4 869.4 1198.8 872.9 C1197.3 876.5 1196.0 880.8 1195.3 884.4 C1194.5 888.0 1194.6 890.7 1194.3 894.4 C1194.0 898.0 1193.5 902.5 1193.3 906.3 C1193.1 910.1 1193.1 913.3 1193.1 917.4 C1193.0 921.4 1192.9 926.7 1193.1 930.7 C1193.4 934.8 1193.9 938.3 1194.5 941.6 C1195.0 944.9 1195.6 947.3 1196.4 950.5 C1197.2 953.7 1198.3 957.1 1199.1 960.7 C1199.8 964.3 1200.7 968.0 1201.0 972.1 C1201.2 976.1 1200.7 981.0 1200.5 985.0 C1200.3 989.1 1199.8 992.5 1199.8 996.3 C1199.8 1000.1 1200.4 1005.7 1200.5 1007.6" fill="none" stroke="#b59cf0" stroke-width="1"/>
<path d="M1312.4 828.6 C1313.5 830.7 1316.7 837.3 1319.2 841.1 C1321.7 844.8 1325.1 847.7 1327.4 851.0 C1329.6 854.3 1331.1 857.5 1332.6 860.7 C1334.1 863.9 1334.8 866.8 1336.4 870.4 C1338.1 874.0 1340.6 878.7 1342.5 882.4 C1344.4 886.0 1346.2 888.2 1347.9 892.2 C1349.6 896.3 1351.5 902.0 1352.7 906.8 C1353.8 911.5 1353.4 916.5 1354.7 920.7 C1356.0 924.9 1358.0 928.7 1360.4 932.2 C1362.7 935.6 1366.9 938.2 1368.7 941.4 C1370.6 944.5 1370.3 947.6 1371.5 951.1 C1372.8 954.6 1374.2 958.7 1376.4 962.4 C1378.6 966.0 1381.5 969.5 1384.7 973.1 C1387.8 976.6 1392.1 980.0 1395.2 983.7 C1398.2 987.5 1400.4 991.6 1402.8 995.6 C1405.3 999.5 1408.8 1005.6 1410.0 1007.6" fill="none" stroke="#b59cf0" stroke-width="1"/>
<path d="M820.0 1007.6 C821.6 1008.4 826.0 1010.8 829.4 1012.0 C832.8 1013.2 836.8 1014.3 840.2 1014.9 C843.7 1015.5 847.1 1014.8 849.9 1015.3 C852.7 1015.9 854.8 1016.1 857.1 1018.0 C859.4 1019.9 861.5 1024.3 863.6 1026.7 C865.8 1029.2 867.4 1030.8 870.1 1032.6 C872.8 1034.5 877.0 1035.9 879.8 1037.7 C882.6 1039.4 885.9 1042.1 887.1 1043.0" fill="none" stroke="#b59cf0" stroke-width="1"/>
<path d="M887.1 649.5 C887.9 651.0 890.1 655.3 891.6 658.5 C893.2 661.7 895.4 664.7 896.4 668.5 C897.5 672.3 897.7 677.2 897.8 681.3 C898.0 685.3 897.0 689.3 897.2 692.8 C897.5 696.4 898.2 699.0 899.2 702.7 C900.2 706.4 902.3 710.9 903.4 714.9 C904.5 718.9 904.6 722.6 905.9 726.8 C907.1 731.0 909.8 735.9 911.0 740.0 C912.3 744.1 912.8 748.0 913.5 751.3 C914.2 754.6 914.5 756.3 915.2 759.8 C915.8 763.3 917.2 768.6 917.5 772.4 C917.8 776.3 916.9 779.1 917.0 782.8 C917.0 786.5 917.1 790.9 917.8 794.5 C918.4 798.2 920.0 800.8 920.9 804.5 C921.7 808.2 922.3 812.4 922.7 816.5 C923.0 820.5 922.9 826.6 923.0 828.6" fill="none" stroke="#b59cf0" stroke-width="1"/>
<path d="M1267.6 940.5 C1269.6 940.9 1275.7 942.3 1279.5 943.1 C1283.4 943.9 1286.9 944.2 1290.8 945.0 C1294.8 945.9 1299.4 947.1 1303.3 948.1 C1307.2 949.1 1310.8 950.4 1314.2 951.0 C1317.5 951.6 1319.8 951.1 1323.2 951.6 C1326.6 952.1 1330.7 953.8 1334.5 953.9 C1338.3 953.9 1342.3 952.2 1345.9 952.0 C1349.6 951.8 1352.9 953.0 1356.4 952.7 C1360.0 952.4 1363.3 950.8 1367.3 950.2 C1371.3 949.7 1375.7 949.0 1380.5 949.3 C1385.3 949.5 1391.2 951.0 1396.1 951.7 C1401.0 952.5 1407.7 953.5 1410.0 953.9" fill="none" stroke="#b59cf0" stroke-width="1"/>
<path d="M1280.0 986.1 C1282.4 985.6 1289.9 984.0 1294.2 982.9 C1298.5 981.8 1302.3 980.5 1306.0 979.4 C1309.6 978.2 1312.3 977.4 1316.0 976.0 C1319.7 974.7 1323.5 972.6 1328.1 971.5 C1332.6 970.3 1338.7 970.2 1343.3 969.1 C1348.0 967.9 1351.8 965.8 1356.0 964.6 C1360.2 963.3 1364.5 963.0 1368.6 961.7 C1372.6 960.5 1377.3 958.4 1380.2 957.1 C1383.2 955.8 1383.7 954.9 1386.1 953.9 C1388.5 952.8 1391.5 951.9 1394.5 950.8 C1397.5 949.8 1401.1 948.5 1404.0 947.5 C1406.9 946.6 1408.4 945.7 1411.7 945.2 C1415.0 944.7 1419.4 945.2 1423.7 944.7 C1428.1 944.1 1433.4 942.8 1437.9 941.9 C1442.4 941.1 1446.6 940.0 1450.6 939.8 C1454.6 939.6 1458.2 939.9 1462.1 940.6 C1466.0 941.3 1469.6 943.0 1474.0 944.2 C1478.4 945.3 1483.9 946.2 1488.6 947.4 C1493.2 948.7 1497.8 950.4 1501.7 951.7 C1505.6 953.0 1508.0 954.9 1512.1 955.3 C1516.2 955.7 1522.0 954.1 1526.4 954.2 C1530.7 954.2 1534.4 955.2 1538.4 955.4 C1542.3 955.6 1546.3 955.2 1550.1 955.5 C1553.9 955.9 1557.4 958.0 1561.3 957.5 C1565.3 957.1 1569.3 954.2 1573.5 953.1 C1577.8 952.0 1582.7 952.4 1586.7 950.8 C1590.8 949.1 1594.1 945.4 1597.8 943.4 C1601.5 941.4 1605.3 938.8 1609.1 938.7 C1612.8 938.6 1616.7 941.5 1620.2 942.7 C1623.8 944.0 1627.5 944.7 1630.5 945.9 C1633.5 947.1 1636.1 948.9 1638.3 950.1 C1640.6 951.2 1641.1 950.2 1643.8 952.6 C1646.4 955.0 1650.3 961.0 1654.2 964.6 C1658.1 968.2 1662.9 971.0 1667.2 974.4 C1671.6 977.7 1675.9 981.8 1680.2 984.9 C1684.5 988.0 1689.8 990.2 1693.0 992.8 C1696.2 995.5 1697.3 997.7 1699.5 1000.8 C1701.7 1003.9 1703.0 1008.4 1706.1 1011.3 C1709.1 1014.2 1714.1 1015.5 1717.8 1018.0 C1721.4 1020.6 1725.6 1024.7 1728.2 1026.8 C1730.8 1028.8 1732.1 1029.2 1733.3 1030.4 C1734.5 1031.5 1734.1 1032.2 1735.5 1033.7 C1736.8 1035.2 1739.8 1037.4 1741.3 1039.3 C1742.8 1041.1 1744.1 1044.0 1744.7 1044.9" fill="none" stroke="#b59cf0" stroke-width="1"/>
<path d="M1369.6 860.0 C1369.6 861.9 1369.6 867.1 1369.4 871.3 C1369.1 875.4 1368.5 880.3 1367.9 884.8 C1367.3 889.2 1366.3 894.0 1365.8 898.1 C1365.3 902.2 1364.4 905.3 1364.9 909.4 C1365.3 913.5 1367.2 918.3 1368.3 922.7 C1369.3 927.2 1369.8 932.0 1371.3 936.0 C1372.7 940.1 1375.3 943.3 1377.0 947.0 C1378.7 950.7 1380.1 954.1 1381.5 958.0 C1382.8 961.9 1383.7 966.3 1385.0 970.4 C1386.3 974.4 1388.3 978.2 1389.2 982.4 C1390.2 986.6 1389.7 991.0 1390.7 995.5 C1391.7 1000.0 1394.1 1005.3 1395.0 1009.5 C1395.9 1013.6 1395.1 1017.2 1395.9 1020.4 C1396.6 1023.5 1398.2 1025.6 1399.5 1028.3 C1400.9 1031.1 1402.9 1034.3 1404.1 1037.1 C1405.2 1039.8 1405.8 1043.6 1406.1 1044.9" fill="none" stroke="#b59cf0" stroke-width="1"/>
<path d="M1512.4 889.9 C1512.7 891.9 1514.0 897.7 1514.5 901.9 C1515.0 906.1 1515.0 910.0 1515.6 914.9 C1516.3 919.8 1517.9 926.2 1518.3 931.3 C1518.8 936.4 1518.0 941.7 1518.4 945.3 C1518.9 948.9 1520.7 950.1 1521.1 952.8 C1521.5 955.5 1520.8 959.1 1520.9 961.6 C1521.0 964.1 1521.4 965.3 1521.7 967.8 C1521.9 970.3 1523.0 973.6 1522.4 976.4 C1521.8 979.3 1519.4 981.7 1518.1 985.0 C1516.8 988.2 1516.0 992.8 1514.7 996.1 C1513.5 999.3 1512.0 1002.0 1510.6 1004.3 C1509.3 1006.6 1507.5 1007.7 1506.6 1009.9 C1505.7 1012.1 1506.0 1014.9 1505.3 1017.6 C1504.6 1020.3 1503.1 1022.9 1502.5 1026.1 C1501.9 1029.3 1501.8 1033.7 1501.8 1036.8 C1501.8 1039.9 1502.3 1043.5 1502.4 1044.9" fill="none" stroke="#b59cf0" stroke-width="1"/>
<path d="M1608.6 939.7 C1608.2 941.4 1606.7 946.6 1606.0 950.1 C1605.3 953.6 1605.3 957.8 1604.2 960.7 C1603.2 963.6 1601.8 965.0 1599.8 967.7 C1597.9 970.3 1594.5 973.8 1592.6 976.4 C1590.7 979.0 1590.1 980.5 1588.6 983.2 C1587.1 985.9 1585.3 989.8 1583.8 992.6 C1582.2 995.4 1580.8 997.8 1579.2 1000.0 C1577.7 1002.2 1575.7 1003.0 1574.4 1005.9 C1573.1 1008.8 1572.1 1013.9 1571.5 1017.4 C1570.8 1021.0 1570.7 1024.1 1570.6 1027.4 C1570.5 1030.7 1571.4 1034.2 1571.1 1037.1 C1570.8 1040.0 1569.2 1043.6 1568.8 1044.9" fill="none" stroke="#b59cf0" stroke-width="1"/>
<path d="M1625.2 939.7 C1627.2 940.2 1633.6 941.7 1637.2 943.0 C1640.8 944.3 1643.8 945.6 1646.6 947.5 C1649.4 949.3 1651.6 951.7 1654.2 954.1 C1656.7 956.5 1659.4 959.4 1662.1 961.8 C1664.8 964.2 1667.6 966.0 1670.3 968.4 C1673.0 970.9 1675.5 973.6 1678.3 976.4 C1681.1 979.1 1684.3 982.1 1687.0 985.1 C1689.7 988.1 1692.1 992.0 1694.7 994.3 C1697.3 996.7 1700.3 997.4 1702.8 999.2 C1705.3 1001.1 1707.0 1003.8 1709.7 1005.4 C1712.4 1006.9 1715.8 1007.5 1718.9 1008.5 C1722.0 1009.5 1724.7 1011.7 1728.4 1011.4 C1732.1 1011.0 1737.0 1008.4 1741.0 1006.6 C1745.0 1004.9 1748.4 1002.7 1752.4 1001.0 C1756.4 999.3 1760.8 997.5 1765.1 996.4 C1769.5 995.3 1774.2 996.2 1778.3 994.4 C1782.5 992.6 1785.7 988.3 1789.9 985.9 C1794.2 983.4 1799.9 981.8 1803.9 979.4 C1807.9 977.0 1810.3 973.8 1813.9 971.5 C1817.6 969.2 1822.6 967.6 1825.8 965.5 C1829.0 963.3 1830.9 960.8 1833.3 958.7 C1835.6 956.6 1837.4 955.3 1839.7 952.8 C1842.1 950.4 1845.2 946.8 1847.3 944.1 C1849.4 941.5 1850.6 939.4 1852.5 937.0 C1854.3 934.7 1856.2 932.2 1858.5 930.2 C1860.8 928.2 1863.9 927.5 1866.1 925.3 C1868.3 923.1 1869.5 919.9 1871.8 916.9 C1874.0 913.9 1876.8 909.6 1879.6 907.4 C1882.3 905.1 1885.6 904.4 1888.4 903.3 C1891.3 902.2 1893.7 901.7 1896.9 900.7 C1900.0 899.7 1904.2 898.7 1907.4 897.5 C1910.5 896.2 1914.6 893.9 1916.0 893.2" fill="none" stroke="#b59cf0" stroke-width="1"/>
<path d="M1837.7 893.2 C1838.7 895.0 1842.2 900.4 1844.0 903.8 C1845.7 907.2 1846.9 910.2 1848.0 913.7 C1849.2 917.1 1850.1 920.8 1850.9 924.5 C1851.7 928.2 1851.5 932.5 1853.0 935.8 C1854.5 939.0 1857.6 940.9 1860.0 944.0 C1862.3 947.1 1865.1 950.8 1867.3 954.4 C1869.6 957.9 1871.6 961.3 1873.6 965.1 C1875.7 969.0 1878.2 973.5 1879.6 977.3 C1881.1 981.0 1881.2 984.4 1882.5 987.5 C1883.8 990.5 1886.3 992.9 1887.7 995.4 C1889.0 997.9 1889.7 1000.5 1890.6 1002.5 C1891.5 1004.5 1892.0 1005.5 1893.1 1007.3 C1894.1 1009.0 1895.5 1011.1 1897.0 1012.9 C1898.6 1014.7 1900.4 1016.4 1902.3 1018.1 C1904.2 1019.8 1906.2 1021.7 1908.5 1023.0 C1910.8 1024.3 1914.7 1025.5 1916.0 1026.0" fill="none" stroke="#b59cf0" stroke-width="1"/>
<path d="M1110.5 440.0 C1109.9 441.5 1108.1 445.8 1107.2 449.0 C1106.2 452.2 1105.5 455.8 1104.8 459.2 C1104.0 462.7 1103.0 466.7 1102.6 469.8 C1102.2 472.9 1103.4 475.6 1102.3 477.8 C1101.1 480.0 1098.2 481.2 1095.6 483.2 C1093.0 485.1 1089.0 487.0 1086.9 489.2 C1084.8 491.5 1084.5 494.2 1083.1 496.6 C1081.8 499.0 1080.2 499.9 1078.7 503.7 C1077.3 507.5 1075.5 513.7 1074.3 519.5 C1073.2 525.2 1072.4 532.6 1071.7 538.1 C1071.1 543.5 1071.1 547.2 1070.4 552.2 C1069.7 557.2 1068.1 562.7 1067.6 568.3 C1067.2 573.9 1067.8 579.3 1067.8 585.6 C1067.8 591.8 1067.8 599.7 1067.6 605.7 C1067.3 611.8 1066.2 616.1 1066.3 621.8 C1066.3 627.5 1067.6 636.9 1067.9 640.0" fill="none" stroke="#b59cf0" stroke-width="1"/>
<path d="M1047.5 440.0 C1047.5 441.6 1047.4 446.2 1047.8 449.5 C1048.2 452.8 1050.1 456.5 1049.8 459.6 C1049.6 462.7 1047.2 465.4 1046.5 468.2 C1045.8 470.9 1047.1 473.9 1045.6 476.3 C1044.2 478.6 1040.0 480.4 1037.7 482.2 C1035.3 483.9 1033.9 484.8 1031.4 486.9 C1028.9 489.0 1025.3 492.2 1022.7 494.6 C1020.1 497.0 1017.1 500.1 1016.0 501.2" fill="none" stroke="#b59cf0" stroke-width="1"/>
<path d="M958.5 477.1 C959.9 478.0 963.7 480.7 966.5 482.4 C969.2 484.1 972.5 485.3 974.9 487.2 C977.4 489.1 979.0 492.0 980.9 493.7 C982.9 495.4 984.4 496.6 986.6 497.5 C988.8 498.4 991.7 498.7 994.2 499.2 C996.8 499.7 999.1 500.5 1001.8 500.6 C1004.6 500.6 1007.6 499.7 1010.5 499.4 C1013.4 499.1 1016.7 498.6 1019.4 498.7 C1022.0 498.8 1024.3 499.1 1026.4 499.9 C1028.6 500.7 1030.3 502.7 1032.3 503.5 C1034.4 504.3 1036.6 504.8 1038.5 504.8 C1040.4 504.8 1041.2 503.4 1043.5 503.5 C1045.8 503.6 1049.7 504.9 1052.5 505.5 C1055.2 506.1 1057.2 507.3 1059.9 507.2 C1062.6 507.2 1065.6 505.4 1068.6 505.1 C1071.7 504.8 1076.3 505.1 1078.3 505.4 C1080.3 505.7 1079.4 506.3 1080.6 506.8 C1081.8 507.2 1084.1 507.8 1085.3 507.9 C1086.6 508.0 1087.5 508.0 1087.9 507.5 C1088.4 507.0 1088.2 505.3 1088.3 504.9" fill="none" stroke="#b59cf0" stroke-width="1"/>
<path d="M1016.0 501.2 C1015.7 503.2 1014.4 509.5 1014.2 513.2 C1013.9 516.8 1014.2 519.9 1014.5 523.1 C1014.7 526.3 1015.3 528.9 1015.7 532.5 C1016.1 536.1 1016.4 542.5 1016.9 544.6 C1017.3 546.7 1017.7 545.1 1018.4 545.3 C1019.1 545.5 1020.9 545.7 1021.3 545.9 C1021.6 546.2 1020.4 546.3 1020.5 546.8 C1020.5 547.2 1021.1 546.8 1021.6 548.8 C1022.2 550.8 1023.4 555.4 1023.7 558.7 C1024.0 562.1 1023.2 565.8 1023.4 569.0 C1023.7 572.2 1024.3 574.9 1025.1 577.7 C1026.0 580.5 1028.7 582.3 1028.4 585.8 C1028.1 589.4 1024.6 594.6 1023.3 599.0 C1022.0 603.4 1021.2 607.7 1020.6 612.0 C1020.0 616.3 1020.1 620.1 1019.7 624.8 C1019.2 629.4 1018.1 637.4 1017.8 640.0" fill="none" stroke="#b59cf0" stroke-width="1"/>
<path d="M1088.3 504.9 C1088.4 506.2 1088.7 510.4 1089.2 513.1 C1089.7 515.9 1090.6 518.6 1091.4 521.6 C1092.3 524.6 1093.6 527.9 1094.2 531.0 C1094.7 534.1 1094.5 537.0 1094.7 540.1 C1094.9 543.1 1095.4 546.4 1095.4 549.1 C1095.4 551.9 1095.0 553.9 1094.7 556.6 C1094.4 559.3 1093.7 562.5 1093.6 565.4 C1093.4 568.2 1093.8 572.1 1093.8 573.4" fill="none" stroke="#b59cf0" stroke-width="1"/>
<path d="M940.0 566.0 C941.5 565.2 946.2 562.4 948.8 561.1 C951.4 559.7 952.5 558.7 955.6 558.1 C958.8 557.4 964.1 557.8 967.7 557.1 C971.3 556.4 973.7 554.6 977.2 553.8 C980.7 553.0 984.9 552.8 988.7 552.3 C992.4 551.8 996.6 551.5 999.7 550.6 C1002.8 549.7 1004.4 548.0 1007.3 546.9 C1010.2 545.8 1013.4 544.7 1016.9 544.2 C1020.3 543.7 1024.1 543.7 1028.1 543.9 C1032.2 544.1 1036.7 545.4 1041.1 545.4 C1045.5 545.3 1050.3 543.9 1054.7 543.4 C1059.1 542.9 1064.4 542.4 1067.6 542.5 C1070.8 542.5 1072.1 543.4 1073.9 543.8 C1075.7 544.1 1076.4 545.0 1078.6 544.6 C1080.8 544.1 1084.7 541.8 1087.2 541.1 C1089.7 540.3 1092.7 540.2 1093.8 540.1" fill="none" stroke="#b59cf0" stroke-width="1"/>
<path d="M940.0 610.5 C942.3 609.4 949.3 606.0 953.9 603.8 C958.5 601.6 962.8 599.1 967.6 597.1 C972.5 595.1 978.0 593.3 983.0 591.7 C988.0 590.1 992.0 589.1 997.4 587.6 C1002.7 586.1 1009.7 584.4 1015.3 582.7 C1020.9 580.9 1025.9 578.3 1030.8 577.1 C1035.6 575.8 1039.3 576.1 1044.2 575.2 C1049.1 574.2 1055.6 572.0 1060.2 571.3 C1064.9 570.7 1068.5 571.1 1072.1 571.3 C1075.7 571.4 1078.5 571.9 1081.7 572.4 C1084.9 572.8 1088.3 573.9 1091.3 574.1 C1094.3 574.3 1096.6 573.3 1099.6 573.7 C1102.7 574.1 1106.7 575.2 1109.7 576.5 C1112.7 577.9 1114.6 580.2 1117.5 582.0 C1120.3 583.7 1124.1 585.1 1126.9 587.1 C1129.7 589.0 1130.9 591.7 1134.2 593.7 C1137.6 595.6 1143.1 597.3 1147.1 598.9 C1151.1 600.4 1154.5 601.0 1158.1 602.9 C1161.8 604.9 1165.3 608.5 1169.0 610.7 C1172.6 612.9 1178.2 615.2 1180.0 616.1" fill="none" stroke="#b59cf0" stroke-width="1"/>
<path d="M1129.0 519.7 C1129.3 521.9 1130.5 528.2 1130.6 532.9 C1130.6 537.6 1129.5 543.5 1129.3 547.8 C1129.1 552.2 1129.4 554.9 1129.4 559.0 C1129.5 563.2 1129.3 568.9 1129.7 572.8 C1130.2 576.7 1131.0 579.4 1131.9 582.2 C1132.9 585.0 1134.7 586.8 1135.6 589.7 C1136.6 592.6 1136.6 596.6 1137.7 599.6 C1138.9 602.6 1141.4 604.9 1142.7 607.7 C1143.9 610.4 1144.8 613.5 1145.4 615.9 C1146.0 618.3 1145.7 619.2 1146.3 622.0 C1146.9 624.7 1147.9 629.3 1149.0 632.3 C1150.1 635.3 1152.4 638.7 1153.1 640.0" fill="none" stroke="#b59cf0" stroke-width="1"/>
<path d="M1180.0 514.1 C1178.5 514.6 1174.2 516.0 1171.1 516.7 C1168.1 517.3 1164.9 517.7 1161.8 518.1 C1158.6 518.5 1155.3 518.3 1152.3 519.0 C1149.3 519.7 1146.9 521.8 1143.7 522.2 C1140.6 522.7 1136.7 522.1 1133.5 521.7 C1130.2 521.3 1127.1 520.4 1124.3 519.8 C1121.5 519.2 1119.4 518.3 1116.9 518.1 C1114.4 517.9 1112.1 518.3 1109.1 518.6 C1106.1 519.0 1102.1 519.8 1098.9 520.4 C1095.8 521.0 1093.4 522.4 1090.3 522.3 C1087.2 522.2 1083.2 520.1 1080.4 519.6 C1077.6 519.2 1074.6 519.7 1073.4 519.7" fill="none" stroke="#b59cf0" stroke-width="1"/>
<path d="M1125.3 495.6 C1126.5 494.4 1129.7 491.4 1132.2 488.7 C1134.7 485.9 1138.0 481.8 1140.5 479.1 C1142.9 476.3 1144.5 474.6 1146.8 472.5 C1149.2 470.3 1152.1 468.0 1154.3 466.3 C1156.6 464.7 1158.1 463.9 1160.3 462.5 C1162.5 461.1 1164.9 459.6 1167.3 457.7 C1169.8 455.9 1172.7 453.6 1174.8 451.3 C1176.9 449.0 1179.1 445.0 1180.0 443.7" fill="none" stroke="#b59cf0" stroke-width="1"/>
<path d="M967.8 551.2 C968.1 552.2 968.9 555.3 969.7 557.2 C970.6 559.1 972.3 560.9 973.0 562.6 C973.8 564.3 973.8 565.8 974.4 567.5 C974.9 569.2 975.7 571.3 976.3 572.7 C976.9 574.1 977.5 574.8 978.0 575.7 C978.5 576.6 978.8 577.0 979.5 578.2 C980.2 579.3 981.7 580.9 982.2 582.6 C982.7 584.2 982.6 587.3 982.6 588.3" fill="none" stroke="#b59cf0" stroke-width="1"/>
<path d="M1069.7 529.0 C1071.0 528.7 1075.2 527.5 1077.3 527.3 C1079.3 527.2 1080.1 527.6 1082.3 528.0 C1084.5 528.3 1087.5 529.2 1090.4 529.2 C1093.3 529.2 1097.9 528.2 1099.4 528.0" fill="none" stroke="#b59cf0" stroke-width="1"/>
<path d="M266.5 80.0 C266.9 80.4 268.1 81.6 268.9 82.3 C269.7 83.0 270.3 82.9 271.2 84.1 C272.2 85.3 273.5 87.6 274.5 89.4 C275.5 91.3 276.7 93.0 277.3 95.1 C277.9 97.1 277.9 99.7 278.1 101.7 C278.4 103.7 278.0 105.6 278.9 107.2 C279.8 108.7 282.3 109.8 283.5 111.1 C284.6 112.4 284.9 114.1 285.8 114.9 C286.7 115.7 288.0 115.7 288.7 115.7 C289.4 115.8 289.7 115.1 289.9 115.5 C290.1 115.9 289.4 116.9 289.8 118.0 C290.1 119.1 290.9 120.3 292.0 122.0 C293.0 123.7 294.5 126.0 296.0 128.2 C297.5 130.4 299.9 133.3 301.2 135.3 C302.4 137.3 302.8 138.3 303.6 140.0 C304.4 141.8 304.6 145.1 306.0 146.0 C307.3 147.0 310.3 146.1 311.7 145.7 C313.1 145.4 313.7 144.1 314.4 144.0 C315.1 143.9 315.4 145.0 316.1 145.2 C316.8 145.3 316.2 145.3 318.6 145.1 C320.9 144.9 326.7 144.2 330.1 144.2 C333.5 144.3 336.2 144.6 339.1 145.4 C341.9 146.2 344.6 148.2 347.1 148.9 C349.7 149.6 352.6 148.8 354.4 149.7 C356.3 150.6 356.9 153.3 358.2 154.5 C359.6 155.7 360.7 156.1 362.8 157.0 C364.9 157.9 368.4 158.7 370.7 159.9 C373.1 161.0 375.6 163.1 376.8 163.9 C378.1 164.6 377.5 164.6 378.4 164.5 C379.3 164.5 380.9 163.8 382.1 163.4 C383.2 162.9 384.1 162.3 385.2 162.0 C386.3 161.7 388.3 161.6 388.9 161.6" fill="none" stroke="#b59cf0" stroke-width="1"/>
<path d="M240.0 184.0 C240.7 183.4 242.9 182.0 244.0 180.5 C245.0 178.9 245.7 176.3 246.4 174.7 C247.1 173.2 247.3 172.2 248.1 171.3 C248.8 170.4 249.6 170.7 250.9 169.3 C252.3 167.9 254.7 164.8 256.2 163.0 C257.8 161.3 258.6 159.9 260.4 158.9 C262.2 158.0 265.3 158.1 267.1 157.4 C268.9 156.8 269.2 155.9 271.1 155.0 C273.0 154.1 276.2 152.5 278.7 151.9 C281.2 151.4 283.1 152.1 286.0 151.6 C288.9 151.2 292.4 149.9 296.0 149.2 C299.5 148.5 305.4 147.6 307.3 147.3" fill="none" stroke="#b59cf0" stroke-width="1"/>
<path d="M413.3 190.1 C413.5 190.3 414.5 190.8 414.5 191.3 C414.5 191.8 413.4 192.4 413.3 193.3 C413.2 194.2 413.7 195.8 413.9 196.8 C414.1 197.8 414.0 197.8 414.4 199.4 C414.7 201.0 415.8 204.3 415.9 206.5 C415.9 208.7 414.8 211.0 414.8 212.7 C414.8 214.5 415.5 215.9 415.8 217.0 C416.1 218.2 416.1 218.9 416.6 219.7 C417.2 220.5 418.3 220.6 419.1 221.7 C419.9 222.8 420.8 224.9 421.6 226.5 C422.5 228.1 423.5 229.7 424.4 231.4 C425.3 233.1 426.4 235.8 426.9 236.8 C427.4 237.9 427.1 237.3 427.4 237.7 C427.7 238.1 428.8 238.7 428.8 239.3 C428.9 239.8 427.7 240.4 427.5 241.2 C427.3 242.0 428.0 243.1 427.8 244.3 C427.6 245.5 426.9 247.5 426.1 248.5 C425.3 249.5 423.6 249.4 423.0 250.4 C422.4 251.5 422.7 253.6 422.7 254.6 C422.6 255.6 423.1 255.9 422.6 256.7 C422.1 257.4 420.3 258.4 419.7 259.2 C419.2 260.0 419.4 260.0 419.1 261.7 C418.9 263.3 418.7 266.8 418.1 269.0 C417.5 271.1 416.1 273.3 415.5 274.6 C414.9 275.8 414.7 275.4 414.5 276.4 C414.3 277.3 414.1 279.2 414.2 280.2 C414.3 281.2 415.3 281.8 415.1 282.4 C415.0 283.0 413.6 283.7 413.3 283.9" fill="none" stroke="#b59cf0" stroke-width="1"/>
<path d="M480.0 104.5 C478.8 104.8 475.0 106.4 473.0 106.7 C471.0 107.1 470.0 106.6 468.3 106.7 C466.6 106.7 465.1 106.8 462.9 107.1 C460.6 107.5 457.4 107.9 454.8 108.6 C452.3 109.3 449.7 110.0 447.5 111.3 C445.4 112.5 443.9 115.2 441.9 116.1 C439.9 117.0 437.3 116.5 435.4 116.8 C433.5 117.1 431.9 116.8 430.6 117.9 C429.2 119.0 428.8 121.9 427.5 123.2 C426.3 124.5 424.5 124.7 423.3 125.9 C422.1 127.0 421.4 129.1 420.3 130.1 C419.3 131.1 418.0 130.5 417.0 131.7 C416.1 132.8 415.4 135.3 414.7 136.9 C413.9 138.5 413.3 139.7 412.7 141.2 C412.2 142.8 411.4 144.4 411.5 146.1 C411.5 147.8 413.1 148.8 413.2 151.4 C413.3 153.9 412.0 157.6 412.1 161.3 C412.2 165.0 413.4 170.2 413.8 173.4 C414.2 176.6 414.6 177.8 414.5 180.6 C414.4 183.4 413.5 188.5 413.3 190.1" fill="none" stroke="#b59cf0" stroke-width="1"/>
<path d="M403.1 212.5 C402.2 213.2 399.2 215.2 397.4 216.2 C395.7 217.3 394.2 217.5 392.4 218.7 C390.7 219.9 388.5 222.0 386.9 223.5 C385.4 225.0 384.6 226.8 383.2 227.6 C381.8 228.4 379.6 227.7 378.6 228.3 C377.6 228.9 378.3 229.7 377.0 230.9 C375.6 232.1 372.5 233.8 370.7 235.4 C368.9 237.1 367.5 239.6 366.4 240.9 C365.2 242.2 364.8 242.0 363.6 243.3 C362.5 244.6 360.3 247.0 359.5 248.6 C358.6 250.3 359.1 251.2 358.4 253.1 C357.7 255.0 356.2 258.2 355.1 260.1 C354.0 262.0 353.3 263.4 351.7 264.4 C350.1 265.4 347.7 265.3 345.5 266.0 C343.4 266.6 341.1 267.8 338.8 268.2 C336.4 268.6 333.0 268.3 331.3 268.4 C329.6 268.5 330.1 268.6 328.8 268.7 C327.5 268.9 325.4 269.2 323.7 269.4 C321.9 269.7 320.6 269.5 318.6 270.2 C316.5 270.9 312.6 273.1 311.4 273.7" fill="none" stroke="#b59cf0" stroke-width="1"/>
<path d="M240.0 288.0 C241.1 288.1 244.6 288.6 246.6 288.9 C248.6 289.3 250.4 289.9 251.9 290.1 C253.5 290.4 254.4 290.5 256.0 290.6 C257.6 290.7 260.1 291.0 261.6 290.7 C263.0 290.3 263.6 289.6 264.8 288.6 C266.1 287.6 267.7 285.6 269.3 284.5 C270.8 283.5 272.0 283.1 274.0 282.2 C276.0 281.3 279.4 279.6 281.5 279.1 C283.6 278.7 284.6 279.3 286.3 279.5 C288.1 279.8 290.8 279.7 292.1 280.4 C293.5 281.1 293.6 283.1 294.3 283.8 C294.9 284.4 294.9 284.2 296.1 284.2 C297.3 284.2 300.2 283.9 301.5 283.9 C302.8 283.9 303.0 284.6 303.9 284.4 C304.9 284.2 306.4 283.6 307.0 282.5 C307.5 281.4 307.2 278.6 307.3 277.8" fill="none" stroke="#b59cf0" stroke-width="1"/>
<path d="M427.6 259.4 C428.1 259.2 429.1 258.0 430.3 257.7 C431.5 257.5 433.2 257.9 434.6 257.7 C436.1 257.5 437.8 257.3 439.1 256.5 C440.4 255.6 441.2 253.3 442.7 252.7 C444.3 252.1 446.0 252.9 448.4 252.7 C450.8 252.5 455.1 251.9 457.0 251.4 C458.8 250.9 458.8 250.4 459.6 249.9 C460.4 249.4 460.6 249.3 461.7 248.5 C462.8 247.6 464.6 245.6 466.1 245.0 C467.7 244.3 469.6 244.9 471.1 244.4 C472.5 243.9 473.6 242.7 475.1 241.8 C476.6 240.9 479.2 239.5 480.0 239.1" fill="none" stroke="#b59cf0" stroke-width="1"/>
<path d="M480.0 110.6 C480.9 110.1 483.6 108.3 485.3 107.7 C487.1 107.0 488.7 107.5 490.5 106.7 C492.3 106.0 494.7 104.0 496.2 103.4 C497.7 102.7 498.2 103.3 499.5 102.7 C500.9 102.2 502.5 101.0 504.4 100.1 C506.3 99.3 509.0 98.9 511.1 97.7 C513.2 96.4 515.5 94.0 516.9 92.7 C518.3 91.4 518.6 90.7 519.7 89.9 C520.8 89.0 522.1 88.7 523.7 87.7 C525.2 86.7 527.6 84.5 529.1 83.8 C530.6 83.0 531.3 83.8 532.6 83.2 C533.9 82.6 536.3 80.5 537.1 80.0" fill="none" stroke="#b59cf0" stroke-width="1"/>
<path d="M537.1 80.0 C538.0 79.9 540.8 79.1 542.7 79.1 C544.6 79.2 546.3 80.0 548.4 80.4 C550.4 80.8 553.0 81.0 554.9 81.3 C556.8 81.7 557.1 82.2 559.9 82.7 C562.7 83.1 568.2 83.7 571.8 84.0 C575.4 84.3 578.1 84.2 581.6 84.3 C585.0 84.5 589.3 84.8 592.4 84.9 C595.6 85.1 597.6 84.8 600.5 85.1 C603.4 85.4 606.8 86.6 609.8 86.7 C612.8 86.8 614.9 85.7 618.5 85.5 C622.0 85.3 627.0 85.5 630.9 85.8 C634.7 86.0 637.9 86.4 641.4 87.0 C645.0 87.6 648.3 89.0 652.3 89.4 C656.3 89.8 661.9 88.9 665.5 89.2 C669.1 89.6 670.8 91.1 674.1 91.4 C677.4 91.7 681.8 91.0 685.3 91.0 C688.8 91.1 692.3 91.5 695.2 91.5 C698.0 91.5 699.5 90.6 702.4 91.0 C705.3 91.4 709.6 93.1 712.6 94.0 C715.5 94.9 718.8 95.9 720.0 96.3" fill="none" stroke="#b59cf0" stroke-width="1"/>
<path d="M498.4 237.0 C498.7 236.7 499.8 236.0 500.2 235.1 C500.5 234.1 500.0 232.1 500.5 231.2 C501.1 230.4 502.5 230.2 503.6 229.8 C504.7 229.4 505.9 229.0 507.0 228.6 C508.2 228.2 509.3 227.7 510.6 227.5 C511.9 227.2 513.6 227.2 514.6 227.2 C515.5 227.1 516.1 227.5 516.5 227.1 C516.8 226.7 516.7 225.2 516.7 224.8" fill="none" stroke="#b59cf0" stroke-width="1"/>
<path d="M288.9 300.0 C289.0 300.9 289.3 303.9 289.5 305.6 C289.7 307.2 290.0 308.2 290.1 309.7 C290.1 311.2 289.8 312.6 289.8 314.7 C289.8 316.8 290.4 320.4 290.1 322.5 C289.8 324.6 288.7 325.8 288.2 327.4 C287.7 328.9 287.3 330.2 287.0 331.9 C286.7 333.5 286.1 335.9 286.3 337.2 C286.5 338.4 287.5 338.1 288.1 339.6 C288.6 341.0 289.2 343.7 289.6 345.9 C290.1 348.0 290.5 350.5 290.7 352.4 C290.8 354.3 290.2 355.4 290.6 357.3 C291.1 359.2 292.8 361.8 293.4 363.8 C294.0 365.9 293.9 367.8 294.4 369.6 C295.0 371.4 296.1 373.2 296.5 374.4 C296.9 375.7 296.4 376.1 296.8 377.0 C297.2 377.9 299.2 378.6 299.1 379.6 C298.9 380.7 296.6 382.1 295.8 383.2 C294.9 384.4 294.2 385.2 293.9 386.4 C293.5 387.7 294.1 389.4 293.9 390.8 C293.7 392.2 293.2 393.7 292.8 395.1 C292.4 396.4 292.3 397.8 291.6 399.0 C291.0 400.2 289.7 401.2 289.0 402.3 C288.2 403.4 287.3 404.7 287.1 405.6 C286.9 406.6 288.5 406.8 287.7 408.1 C287.0 409.3 284.2 411.6 282.5 413.0 C280.7 414.4 278.9 414.8 277.3 416.4 C275.6 418.0 274.6 420.4 272.6 422.6 C270.6 424.8 266.5 428.4 265.3 429.7 C264.0 431.0 265.6 429.9 265.2 430.4 C264.9 430.9 263.5 431.7 263.1 432.6 C262.8 433.6 263.2 434.5 263.0 436.2 C262.9 437.8 262.7 440.6 262.1 442.6 C261.4 444.6 260.3 446.3 258.9 448.2 C257.6 450.1 254.9 452.3 253.9 454.1 C252.8 455.9 252.9 457.3 252.4 458.9 C252.0 460.5 251.9 462.9 251.3 463.7 C250.7 464.6 249.4 463.5 248.6 463.8 C247.9 464.1 247.5 464.9 246.7 465.5 C245.9 466.2 245.0 467.2 243.9 467.8 C242.8 468.4 240.7 469.0 240.0 469.2" fill="none" stroke="#b59cf0" stroke-width="1"/>
<path d="M293.0 416.2 C293.1 417.0 293.8 419.9 293.8 421.0 C293.8 422.1 292.8 421.8 293.2 422.9 C293.6 423.9 295.2 425.8 296.1 427.4 C297.0 429.1 297.2 431.4 298.3 432.8 C299.4 434.3 300.9 435.5 302.5 436.3 C304.1 437.2 305.8 437.0 307.8 437.9 C309.8 438.8 312.8 440.2 314.6 441.6 C316.4 442.9 317.6 444.1 318.5 446.1 C319.5 448.0 319.6 451.4 320.5 453.4 C321.4 455.3 323.6 456.6 324.2 457.7 C324.7 458.8 323.7 459.1 323.6 459.9 C323.5 460.7 323.1 461.5 323.5 462.5 C324.0 463.5 325.1 464.9 326.2 465.8 C327.3 466.7 328.4 466.9 330.0 467.8 C331.5 468.6 334.1 469.8 335.5 470.9 C336.8 472.0 336.5 473.3 338.0 474.3 C339.6 475.3 342.9 476.0 344.8 477.0 C346.7 478.0 347.3 478.7 349.4 480.3 C351.5 481.9 354.5 484.7 357.2 486.4 C359.9 488.2 363.9 488.8 365.5 490.7 C367.1 492.6 366.8 495.6 366.8 497.7 C366.7 499.7 365.0 500.6 365.3 503.1 C365.6 505.6 367.6 509.7 368.5 512.5 C369.4 515.4 370.2 518.8 370.5 520.0" fill="none" stroke="#b59cf0" stroke-width="1"/>
<path d="M419.4 304.1 C420.3 304.8 422.6 306.7 424.4 308.2 C426.2 309.7 428.9 311.5 430.1 313.2 C431.3 314.9 431.1 316.7 431.7 318.3 C432.3 319.9 432.7 321.9 433.7 322.8 C434.7 323.8 435.8 323.7 437.5 324.0 C439.2 324.4 442.4 324.4 444.0 324.9 C445.7 325.4 446.7 326.0 447.3 327.2 C448.0 328.3 447.7 330.1 448.1 332.0 C448.5 333.9 449.5 336.5 449.7 338.6 C449.8 340.7 448.7 342.8 448.9 344.7 C449.0 346.6 450.5 348.5 450.5 350.0 C450.5 351.6 448.6 352.6 449.1 354.0 C449.7 355.4 452.4 357.2 453.8 358.4 C455.1 359.7 456.1 360.5 457.1 361.4 C458.1 362.2 458.9 362.4 459.9 363.6 C460.9 364.7 461.7 366.3 463.2 368.0 C464.8 369.7 467.6 372.2 469.2 373.7 C470.8 375.2 471.7 375.6 473.1 377.1 C474.4 378.5 476.0 380.4 477.2 382.5 C478.4 384.7 479.5 388.5 480.0 389.7" fill="none" stroke="#b59cf0" stroke-width="1"/>
<path d="M411.3 457.0 C411.9 458.0 414.3 460.7 415.2 462.7 C416.1 464.7 415.9 467.4 416.7 469.0 C417.5 470.7 419.3 471.4 419.8 472.7 C420.4 474.1 419.1 475.6 420.0 477.1 C420.9 478.6 423.7 480.4 425.2 481.5 C426.8 482.7 428.2 482.6 429.1 483.9 C430.1 485.2 430.2 487.4 430.9 489.3 C431.6 491.2 432.2 494.0 433.5 495.2 C434.7 496.3 436.6 495.6 438.4 496.1 C440.2 496.5 442.3 496.7 444.2 497.9 C446.0 499.1 447.5 501.8 449.4 503.2 C451.2 504.6 453.3 505.5 455.1 506.4 C456.9 507.3 458.0 508.2 460.2 508.4 C462.3 508.6 465.4 507.7 467.9 507.4 C470.3 507.2 472.8 507.1 474.8 506.9 C476.8 506.6 479.1 506.1 480.0 506.0" fill="none" stroke="#b59cf0" stroke-width="1"/>
<path d="M240.0 469.2 C240.8 469.0 243.1 468.6 244.6 468.0 C246.1 467.4 247.1 466.0 248.7 465.7 C250.4 465.4 252.7 466.4 254.6 466.2 C256.5 466.0 258.4 464.4 260.2 464.3 C261.9 464.2 262.9 465.8 265.0 465.8 C267.1 465.9 270.6 464.8 272.8 464.6 C275.0 464.3 276.5 464.3 278.2 464.3 C279.8 464.3 281.1 464.3 282.8 464.6 C284.6 464.8 287.0 465.7 288.5 465.7 C290.0 465.7 290.5 465.3 291.8 464.5 C293.1 463.6 294.9 461.4 296.3 460.6 C297.7 459.8 298.6 459.9 300.2 459.7 C301.8 459.5 304.0 459.5 305.7 459.5 C307.5 459.5 308.8 459.3 310.5 459.8 C312.3 460.3 314.4 461.9 316.3 462.4 C318.1 463.0 320.7 463.0 321.6 463.1" fill="none" stroke="#b59cf0" stroke-width="1"/>
<path d="M1170.0 619.1 C1170.7 619.0 1172.8 618.8 1174.4 618.6 C1176.1 618.4 1178.7 618.1 1180.1 618.2 C1181.5 618.2 1181.4 618.9 1182.7 618.9 C1184.0 619.0 1186.3 618.2 1188.0 618.5 C1189.6 618.9 1191.2 620.5 1192.8 621.0 C1194.3 621.5 1195.6 621.5 1197.5 621.6 C1199.4 621.7 1202.1 621.7 1204.1 621.4 C1206.1 621.1 1208.0 620.1 1209.4 619.7 C1210.8 619.3 1211.2 619.0 1212.4 619.0 C1213.7 619.0 1215.1 620.1 1216.9 619.8 C1218.6 619.6 1221.0 617.9 1222.9 617.6 C1224.9 617.3 1225.9 618.3 1228.4 618.0 C1230.9 617.8 1235.2 616.8 1237.9 615.9 C1240.6 614.9 1242.3 613.1 1244.7 612.4 C1247.2 611.6 1249.8 611.6 1252.3 611.5 C1254.9 611.3 1257.4 612.3 1260.0 611.4 C1262.5 610.4 1264.7 607.6 1267.7 605.7 C1270.7 603.8 1274.7 601.4 1277.9 599.7 C1281.2 598.1 1284.3 596.7 1287.0 595.8 C1289.8 594.8 1292.9 594.5 1294.5 594.1 C1296.1 593.8 1295.6 594.1 1296.8 593.8 C1298.0 593.5 1299.9 592.7 1301.5 592.3 C1303.0 591.9 1304.5 592.1 1306.1 591.6 C1307.6 591.1 1309.0 589.0 1310.8 589.1 C1312.7 589.3 1315.0 591.7 1317.2 592.2 C1319.4 592.8 1321.8 592.5 1324.1 592.5 C1326.3 592.4 1328.8 592.1 1330.7 592.2 C1332.5 592.3 1333.3 593.0 1335.0 593.0 C1336.7 593.0 1338.9 592.5 1340.7 592.1 C1342.6 591.8 1344.7 591.0 1346.2 590.7 C1347.8 590.4 1348.8 590.8 1350.1 590.3 C1351.4 589.8 1352.7 588.0 1354.2 587.9 C1355.8 587.9 1357.9 589.7 1359.4 590.1 C1360.9 590.5 1362.2 590.4 1363.3 590.3 C1364.4 590.2 1364.9 589.8 1366.1 589.5 C1367.3 589.2 1368.0 588.7 1370.4 588.6 C1372.8 588.5 1377.3 588.9 1380.7 588.9 C1384.1 589.0 1387.7 588.8 1390.7 588.7 C1393.7 588.7 1395.7 588.9 1398.9 588.6 C1402.1 588.2 1408.2 586.9 1410.0 586.5" fill="none" stroke="#b59cf0" stroke-width="1"/>
<path d="M1320.9 560.0 C1320.4 560.2 1318.7 560.5 1318.0 561.5 C1317.3 562.4 1318.0 565.0 1316.8 565.8 C1315.6 566.5 1312.5 565.5 1310.8 565.9 C1309.2 566.3 1307.7 566.6 1307.1 568.0 C1306.4 569.4 1307.1 572.2 1307.0 574.4 C1306.9 576.6 1306.9 579.5 1306.7 581.1 C1306.4 582.8 1305.9 582.8 1305.5 584.4 C1305.2 586.0 1304.7 589.6 1304.6 590.6" fill="none" stroke="#b59cf0" stroke-width="1"/>
<path d="M1394.3 560.0 C1394.2 560.9 1393.7 563.8 1393.9 565.4 C1394.1 567.1 1395.7 568.3 1395.5 570.1 C1395.3 571.8 1393.5 574.5 1392.8 576.1 C1392.1 577.6 1391.8 578.0 1391.2 579.4 C1390.6 580.9 1389.6 582.9 1389.1 584.6 C1388.6 586.4 1388.5 588.0 1388.3 589.9 C1388.2 591.9 1388.2 594.6 1388.2 596.3 C1388.1 598.0 1387.7 598.3 1388.0 600.0 C1388.2 601.7 1388.8 604.6 1389.5 606.4 C1390.3 608.1 1391.6 608.8 1392.3 610.4 C1393.0 611.9 1393.5 613.9 1393.7 615.5 C1394.0 617.2 1394.1 618.9 1393.9 620.3 C1393.6 621.7 1393.2 623.1 1392.2 624.0 C1391.2 624.8 1388.7 624.5 1387.9 625.3 C1387.0 626.1 1387.6 627.6 1387.2 628.7 C1386.7 629.8 1385.7 630.6 1384.9 631.8 C1384.2 633.0 1382.8 634.4 1382.4 636.1 C1382.0 637.8 1382.5 640.5 1382.5 642.1 C1382.6 643.7 1382.6 644.1 1382.5 645.7 C1382.3 647.4 1381.2 650.1 1381.5 651.7 C1381.8 653.4 1383.5 654.1 1384.2 655.5 C1385.0 657.0 1385.8 658.5 1386.1 660.3 C1386.4 662.0 1386.0 664.6 1386.1 666.2 C1386.3 667.9 1386.5 668.6 1386.8 670.3 C1387.2 672.0 1387.9 674.5 1388.0 676.3 C1388.0 678.0 1387.1 679.7 1387.1 680.8 C1387.0 681.9 1387.5 682.1 1387.8 682.7 C1388.1 683.4 1388.0 683.2 1388.8 684.5 C1389.6 685.7 1391.7 688.8 1392.5 690.3 C1393.2 691.8 1392.6 692.3 1393.2 693.5 C1393.9 694.8 1395.4 695.9 1396.3 697.8 C1397.2 699.6 1397.8 703.0 1398.7 704.6 C1399.5 706.1 1400.7 705.7 1401.2 707.0 C1401.6 708.2 1401.2 710.2 1401.3 712.1 C1401.3 714.0 1401.1 716.4 1401.7 718.3 C1402.2 720.2 1404.1 721.6 1404.4 723.5 C1404.6 725.5 1403.2 728.2 1403.1 730.1 C1402.9 732.0 1403.4 733.8 1403.6 735.1 C1403.8 736.4 1404.1 736.6 1404.0 737.9 C1404.0 739.2 1403.6 740.4 1403.3 742.7 C1403.0 745.0 1403.0 749.0 1402.3 751.4 C1401.6 753.8 1399.8 755.1 1398.9 757.2 C1398.0 759.2 1397.8 762.0 1397.1 763.7 C1396.3 765.4 1394.8 766.5 1394.3 767.3 C1393.8 768.1 1394.5 767.9 1394.1 768.3 C1393.8 768.7 1392.5 768.2 1392.2 769.5 C1391.8 770.8 1392.5 774.3 1392.2 776.1 C1391.8 777.8 1390.6 779.4 1390.2 780.0" fill="none" stroke="#b59cf0" stroke-width="1"/>
<path d="M1221.0 739.4 C1222.0 739.0 1224.5 737.8 1226.9 736.8 C1229.2 735.7 1233.2 733.5 1235.0 733.1 C1236.8 732.7 1236.3 734.3 1237.5 734.4 C1238.7 734.4 1240.9 733.6 1242.3 733.3 C1243.7 733.1 1244.2 732.6 1245.9 732.9 C1247.5 733.2 1250.2 734.4 1252.2 735.1 C1254.1 735.8 1256.3 736.3 1257.6 737.0 C1258.8 737.7 1258.3 739.2 1259.9 739.5 C1261.6 739.7 1265.0 739.0 1267.5 738.6 C1270.0 738.2 1272.3 737.6 1274.8 737.1 C1277.2 736.5 1279.2 735.7 1282.0 735.3 C1284.8 734.8 1288.8 734.0 1291.5 734.4 C1294.3 734.8 1296.0 736.7 1298.5 737.6 C1300.9 738.4 1303.3 738.9 1306.2 739.3 C1309.1 739.6 1312.8 739.7 1315.7 739.6 C1318.6 739.5 1321.3 738.7 1323.5 738.8 C1325.7 738.8 1326.7 739.5 1328.8 739.9 C1330.8 740.3 1333.1 740.8 1335.9 741.3 C1338.7 741.7 1342.8 741.7 1345.6 742.5 C1348.5 743.2 1350.1 744.7 1352.8 745.7 C1355.6 746.6 1358.7 747.3 1361.9 748.0 C1365.0 748.6 1368.6 749.2 1371.8 749.5 C1374.9 749.9 1378.1 749.5 1380.5 750.2 C1382.9 750.9 1384.4 753.1 1386.3 753.8 C1388.2 754.4 1390.3 754.0 1392.0 754.2 C1393.7 754.4 1394.7 754.0 1396.5 754.9 C1398.4 755.7 1401.1 758.2 1403.4 759.4 C1405.6 760.6 1408.9 761.5 1410.0 761.9" fill="none" stroke="#b59cf0" stroke-width="1"/>
<path d="M1170.0 780.0 C1171.2 779.6 1175.1 778.5 1176.9 777.2 C1178.7 775.9 1179.6 773.8 1181.0 772.1 C1182.4 770.4 1184.0 768.7 1185.1 767.1 C1186.2 765.6 1186.3 764.2 1187.6 762.9 C1188.9 761.7 1191.0 761.0 1192.8 759.9 C1194.6 758.7 1196.2 757.5 1198.3 756.2 C1200.4 754.9 1203.5 753.4 1205.6 752.0 C1207.7 750.7 1209.4 749.4 1211.1 748.3 C1212.7 747.3 1214.5 746.3 1215.6 745.7 C1216.8 745.1 1217.2 745.5 1217.8 744.7 C1218.4 744.0 1218.9 741.9 1219.4 741.0 C1220.0 740.1 1220.7 739.7 1221.0 739.4" fill="none" stroke="#b59cf0" stroke-width="1"/>
<path d="M1241.4 560.0 C1241.6 560.3 1242.0 561.7 1242.8 562.1 C1243.6 562.4 1245.2 562.0 1246.3 562.0 C1247.4 562.0 1248.0 562.2 1249.3 562.2 C1250.7 562.1 1253.3 562.0 1254.5 561.8 C1255.8 561.6 1256.0 561.6 1256.9 561.2 C1257.8 560.8 1258.8 559.6 1260.0 559.6 C1261.2 559.5 1263.1 560.7 1264.0 560.8 C1265.0 560.8 1265.5 560.1 1265.8 560.0" fill="none" stroke="#b59cf0" stroke-width="1"/>
<path d="M1188.4 560.0 C1188.7 560.5 1189.6 561.9 1190.3 563.0 C1191.1 564.0 1192.5 565.4 1192.9 566.4 C1193.3 567.4 1193.1 568.0 1192.8 569.1 C1192.6 570.2 1191.2 571.8 1191.5 573.1 C1191.8 574.4 1193.4 575.6 1194.6 576.9 C1195.8 578.2 1198.1 579.6 1198.7 580.7 C1199.2 581.8 1198.0 582.4 1198.0 583.4 C1198.1 584.4 1198.6 585.7 1199.0 586.6 C1199.3 587.6 1199.9 588.2 1200.0 589.0 C1200.1 589.8 1199.7 590.3 1199.6 591.4 C1199.5 592.4 1199.0 593.8 1199.3 595.2 C1199.7 596.6 1201.1 598.9 1201.7 600.0 C1202.3 601.0 1202.7 600.7 1203.0 601.4 C1203.4 602.2 1203.4 603.1 1204.0 604.5 C1204.5 605.8 1205.4 607.9 1206.3 609.6 C1207.2 611.2 1208.4 613.6 1209.3 614.3 C1210.1 615.0 1210.5 613.6 1211.3 613.7 C1212.2 613.9 1213.5 614.8 1214.2 615.1 C1214.9 615.5 1215.6 615.2 1215.7 615.8 C1215.8 616.5 1215.0 618.6 1214.9 619.1" fill="none" stroke="#b59cf0" stroke-width="1"/>
<path d="M1020.7 291.5 C1021.9 290.9 1024.6 286.9 1028.0 287.8 C1031.4 288.7 1035.7 293.9 1041.0 297.0 C1046.3 300.1 1054.3 303.9 1059.6 306.4 C1064.9 308.9 1069.5 308.9 1072.6 312.0 C1075.7 315.1 1077.2 319.4 1078.1 325.0 C1079.0 330.6 1079.9 342.2 1078.1 345.3 C1076.2 348.4 1070.7 342.8 1067.0 343.4 C1063.3 344.0 1059.6 348.4 1055.9 349.0 C1052.2 349.6 1049.5 346.3 1044.8 347.2 C1040.1 348.1 1032.3 351.8 1028.0 354.6 C1023.7 357.4 1020.9 360.7 1018.8 363.8 C1016.6 366.9 1016.6 372.2 1015.1 373.1 C1013.6 374.0 1010.1 371.6 1009.5 369.4 C1008.9 367.2 1008.6 363.8 1011.4 360.1 C1014.2 356.4 1022.5 350.9 1026.2 347.2 C1029.9 343.5 1031.1 341.3 1033.6 337.9 C1036.1 334.5 1041.0 331.1 1041.0 326.8 C1041.0 322.5 1036.1 315.3 1033.6 311.9 C1031.1 308.5 1028.0 308.5 1026.2 306.4 C1024.4 304.2 1023.4 301.5 1022.5 299.0 C1021.6 296.5 1021.0 292.8 1020.7 291.5Z" fill="#a9c6ee"/>
<path d="M978.0 312.0 C978.8 311.5 981.7 308.3 983.0 309.0 C984.3 309.7 986.3 313.8 986.0 316.0 C985.7 318.2 982.7 321.3 981.0 322.0 C979.3 322.7 976.5 321.7 976.0 320.0 C975.5 318.3 977.7 313.3 978.0 312.0Z" fill="#a9c6ee"/>
<path d="M993.0 306.0 C994.0 305.7 997.5 303.0 999.0 304.0 C1000.5 305.0 1002.0 309.7 1002.0 312.0 C1002.0 314.3 1000.3 317.3 999.0 318.0 C997.7 318.7 995.0 318.0 994.0 316.0 C993.0 314.0 993.2 307.7 993.0 306.0Z" fill="#a9c6ee"/>
<path d="M970.6 401.0 C973.1 399.8 979.8 395.2 985.4 393.5 C991.0 391.8 997.8 391.6 1004.0 391.0 C1010.2 390.4 1016.3 390.0 1022.5 390.0 C1028.7 390.0 1037.6 387.9 1041.0 391.0 C1044.4 394.1 1043.6 403.2 1043.0 408.3 C1042.4 413.4 1040.8 419.4 1037.4 421.3 C1034.0 423.2 1028.1 419.8 1022.5 419.5 C1016.9 419.2 1010.2 419.8 1004.0 419.5 C997.8 419.2 991.0 418.2 985.4 417.6 C979.8 417.0 974.5 417.4 970.6 415.8 C966.7 414.2 962.0 410.5 962.0 408.0 C962.0 405.5 969.2 402.2 970.6 401.0Z" fill="#a9c6ee"/>
<path d="M905.0 367.0 C907.5 366.2 915.0 361.8 920.0 362.0 C925.0 362.2 931.3 365.0 935.0 368.0 C938.7 371.0 941.2 375.5 942.0 380.0 C942.8 384.5 942.0 390.8 940.0 395.0 C938.0 399.2 934.2 403.7 930.0 405.0 C925.8 406.3 919.2 405.5 915.0 403.0 C910.8 400.5 906.7 396.0 905.0 390.0 C903.3 384.0 905.0 370.8 905.0 367.0Z" fill="#a9c6ee"/>
<path d="M955.0 347.0 C959.5 347.0 977.3 346.3 982.0 347.0 C986.7 347.7 987.3 350.3 983.0 351.0 C978.7 351.7 960.7 351.7 956.0 351.0 C951.3 350.3 955.2 347.7 955.0 347.0Z" fill="#a9c6ee"/>
<path d="M947.0 102.0 C948.7 101.2 953.8 96.7 957.0 97.0 C960.2 97.3 963.5 101.0 966.0 104.0 C968.5 107.0 972.7 111.7 972.0 115.0 C971.3 118.3 965.7 122.8 962.0 124.0 C958.3 125.2 953.3 123.8 950.0 122.0 C946.7 120.2 942.5 116.3 942.0 113.0 C941.5 109.7 946.2 103.8 947.0 102.0Z" fill="#a9c6ee"/>
<path d="M778.0 113.0 C779.7 112.5 785.0 108.5 788.0 110.0 C791.0 111.5 795.7 118.0 796.0 122.0 C796.3 126.0 792.5 132.5 790.0 134.0 C787.5 135.5 783.3 133.0 781.0 131.0 C778.7 129.0 776.5 125.0 776.0 122.0 C775.5 119.0 777.7 114.5 778.0 113.0Z" fill="#a9c6ee"/>
<path d="M779.0 204.0 C780.8 203.0 786.5 198.5 790.0 198.0 C793.5 197.5 799.0 199.0 800.0 201.0 C801.0 203.0 798.7 208.3 796.0 210.0 C793.3 211.7 786.8 212.0 784.0 211.0 C781.2 210.0 779.8 205.2 779.0 204.0Z" fill="#a9c6ee"/>
<path d="M1103.0 215.0 C1105.0 214.2 1110.5 211.3 1115.0 210.0 C1119.5 208.7 1125.8 207.0 1130.0 207.0 C1134.2 207.0 1137.2 208.2 1140.0 210.0 C1142.8 211.8 1146.5 215.0 1147.0 218.0 C1147.5 221.0 1145.0 225.5 1143.0 228.0 C1141.0 230.5 1137.5 231.0 1135.0 233.0 C1132.5 235.0 1130.8 237.8 1128.0 240.0 C1125.2 242.2 1121.0 246.0 1118.0 246.0 C1115.0 246.0 1112.2 243.0 1110.0 240.0 C1107.8 237.0 1106.2 232.2 1105.0 228.0 C1103.8 223.8 1103.3 217.2 1103.0 215.0Z" fill="#a9c6ee"/>
<path d="M1312.0 150.0 C1313.7 148.7 1318.7 142.7 1322.0 142.0 C1325.3 141.3 1328.2 145.8 1332.0 146.0 C1335.8 146.2 1340.3 142.3 1345.0 143.0 C1349.7 143.7 1356.7 146.3 1360.0 150.0 C1363.3 153.7 1366.3 161.7 1365.0 165.0 C1363.7 168.3 1355.0 167.2 1352.0 170.0 C1349.0 172.8 1349.5 181.0 1347.0 182.0 C1344.5 183.0 1340.7 176.0 1337.0 176.0 C1333.3 176.0 1328.2 183.0 1325.0 182.0 C1321.8 181.0 1320.2 175.3 1318.0 170.0 C1315.8 164.7 1313.0 153.3 1312.0 150.0Z" fill="#a9c6ee"/>
<path d="M1273.0 180.0 C1275.0 179.5 1281.0 176.5 1285.0 177.0 C1289.0 177.5 1294.7 179.5 1297.0 183.0 C1299.3 186.5 1300.2 193.2 1299.0 198.0 C1297.8 202.8 1293.8 210.0 1290.0 212.0 C1286.2 214.0 1279.3 212.7 1276.0 210.0 C1272.7 207.3 1270.5 201.0 1270.0 196.0 C1269.5 191.0 1272.5 182.7 1273.0 180.0Z" fill="#a9c6ee"/>
<path d="M1242.0 212.0 C1244.2 211.3 1250.0 207.7 1255.0 208.0 C1260.0 208.3 1270.2 211.3 1272.0 214.0 C1273.8 216.7 1269.7 222.3 1266.0 224.0 C1262.3 225.7 1254.0 226.0 1250.0 224.0 C1246.0 222.0 1243.3 214.0 1242.0 212.0Z" fill="#a9c6ee"/>
<path d="M1273.0 145.0 C1275.0 144.3 1281.8 139.8 1285.0 141.0 C1288.2 142.2 1291.2 147.8 1292.0 152.0 C1292.8 156.2 1292.3 163.3 1290.0 166.0 C1287.7 168.7 1280.8 171.5 1278.0 168.0 C1275.2 164.5 1273.8 148.8 1273.0 145.0Z" fill="#a9c6ee"/>
<path d="M1366.0 93.0 C1369.2 92.2 1378.5 89.5 1385.0 88.0 C1391.5 86.5 1400.8 83.3 1405.0 84.0 C1409.2 84.7 1411.7 89.3 1410.0 92.0 C1408.3 94.7 1401.3 98.2 1395.0 100.0 C1388.7 101.8 1376.8 104.2 1372.0 103.0 C1367.2 101.8 1367.0 94.7 1366.0 93.0Z" fill="#a9c6ee"/>
<path d="M1356.0 603.0 C1358.3 603.5 1366.0 605.2 1370.0 606.0 C1374.0 606.8 1376.3 607.0 1380.0 608.0 C1383.7 609.0 1389.3 610.0 1392.0 612.0 C1394.7 614.0 1396.3 617.7 1396.0 620.0 C1395.7 622.3 1392.2 625.8 1390.0 626.0 C1387.8 626.2 1385.0 622.7 1383.0 621.0 C1381.0 619.3 1380.8 617.5 1378.0 616.0 C1375.2 614.5 1369.7 614.2 1366.0 612.0 C1362.3 609.8 1357.7 604.5 1356.0 603.0Z" fill="#a9c6ee"/>
<path d="M1108.0 933.0 C1109.7 932.5 1114.7 928.3 1118.0 930.0 C1121.3 931.7 1124.3 939.2 1128.0 943.0 C1131.7 946.8 1136.2 949.2 1140.0 953.0 C1143.8 956.8 1149.8 961.7 1151.0 966.0 C1152.2 970.3 1149.5 977.8 1147.0 979.0 C1144.5 980.2 1139.7 976.0 1136.0 973.0 C1132.3 970.0 1128.7 965.0 1125.0 961.0 C1121.3 957.0 1116.8 953.7 1114.0 949.0 C1111.2 944.3 1109.0 935.7 1108.0 933.0Z" fill="#a9c6ee"/>
<path d="M800.0 380.0 C806.2 381.0 824.7 385.5 837.0 386.0 C849.3 386.5 864.7 382.7 874.0 383.0 C883.3 383.3 886.8 387.5 893.0 388.0 C899.2 388.5 902.3 387.0 911.0 386.0 C919.7 385.0 930.2 383.3 945.0 382.0 C959.8 380.7 980.8 379.8 1000.0 378.0 C1019.2 376.2 1047.0 374.0 1060.0 371.0 C1073.0 368.0 1075.0 361.8 1078.0 360.0" fill="none" stroke="#a9c6ee" stroke-width="2.6"/>
<path d="M945.0 390.0 C954.2 389.3 983.7 386.8 1000.0 386.0 C1016.3 385.2 1032.2 387.3 1043.0 385.0 C1053.8 382.7 1061.3 374.2 1065.0 372.0" fill="none" stroke="#a9c6ee" stroke-width="2.6"/>
<path d="M1055.0 349.0 C1055.8 352.5 1057.5 364.8 1060.0 370.0 C1062.5 375.2 1067.5 379.7 1070.0 380.0 C1072.5 380.3 1074.2 373.3 1075.0 372.0" fill="none" stroke="#a9c6ee" stroke-width="2.6"/>
<path d="M1045.0 350.0 C1045.8 353.3 1050.8 363.3 1050.0 370.0 C1049.2 376.7 1041.7 386.7 1040.0 390.0" fill="none" stroke="#a9c6ee" stroke-width="2.6"/>
<path d="M905.0 395.0 C909.2 397.5 923.3 405.8 930.0 410.0 C936.7 414.2 942.5 418.3 945.0 420.0" fill="none" stroke="#a9c6ee" stroke-width="2.6"/>
<path d="M858.0 285.0 C859.2 286.7 862.7 292.2 865.0 295.0 C867.3 297.8 869.5 299.2 872.0 302.0 C874.5 304.8 877.3 308.7 880.0 312.0 C882.7 315.3 885.8 318.3 888.0 322.0 C890.2 325.7 892.2 332.0 893.0 334.0" fill="none" stroke="#a9c6ee" stroke-width="2.6"/>
<path d="M862.0 305.0 L872.0 302.0" fill="none" stroke="#a9c6ee" stroke-width="2.6"/>
<path d="M868.0 318.0 L880.0 312.0" fill="none" stroke="#a9c6ee" stroke-width="2.6"/>
<path d="M1000.0 420.0 C998.3 423.3 990.0 435.0 990.0 440.0 C990.0 445.0 998.3 448.3 1000.0 450.0" fill="none" stroke="#a9c6ee" stroke-width="2.6"/>
<path d="M288.9 167.7 C289.2 168.8 290.3 172.3 290.2 174.4 C290.2 176.5 288.6 177.6 288.5 180.3 C288.5 183.1 289.8 187.3 289.9 191.0 C290.0 194.7 290.1 199.6 289.2 202.5 C288.2 205.5 285.5 206.8 284.1 208.5 C282.6 210.3 282.5 211.3 280.4 213.0 C278.3 214.8 274.5 217.7 271.4 219.2 C268.4 220.7 265.0 220.8 261.9 222.0 C258.8 223.2 255.4 224.6 252.8 226.2 C250.2 227.9 247.7 229.1 246.4 231.7 C245.1 234.4 245.7 239.2 245.0 242.1 C244.3 245.0 242.5 248.1 242.0 249.2" fill="none" stroke="#a9c6ee" stroke-width="1.3"/>
<path d="M342.0 196.2 C343.3 198.7 347.1 206.3 350.1 211.0 C353.2 215.6 359.0 220.1 360.2 223.9 C361.4 227.6 358.5 230.8 357.3 233.4 C356.0 236.0 354.4 237.7 352.6 239.6 C350.9 241.6 348.5 242.7 346.6 245.1 C344.7 247.5 343.2 251.2 341.3 254.1 C339.4 257.0 337.7 259.2 335.3 262.3 C332.9 265.4 328.9 269.8 326.9 272.5 C324.8 275.1 324.6 276.2 323.1 278.1 C321.5 280.1 318.4 283.0 317.5 283.9" fill="none" stroke="#a9c6ee" stroke-width="1.3"/>
<path d="M582.0 116.7 C587.1 117.4 605.1 120.3 612.5 120.8 C620.0 121.3 621.7 119.4 626.8 119.8 C631.9 120.1 637.7 121.6 643.1 122.8 C648.6 124.0 654.3 127.4 659.4 126.9 C664.5 126.4 667.9 121.5 673.7 119.8 C679.5 118.1 689.0 115.2 694.1 116.7 C699.2 118.2 700.0 126.6 704.3 128.9 C708.6 131.3 717.4 130.6 720.0 131.0" fill="none" stroke="#a9c6ee" stroke-width="2.8"/>
<path d="M626.8 120.8 L624.8 131.0" fill="none" stroke="#a9c6ee" stroke-width="2.8"/>
<path d="M240.0 385.6 C240.6 384.5 242.2 381.1 243.6 378.7 C244.9 376.4 246.2 372.8 247.9 371.5 C249.6 370.3 251.3 371.9 253.9 371.4 C256.4 370.9 261.1 369.4 263.4 368.3 C265.7 367.2 265.7 366.1 267.5 364.8 C269.4 363.5 272.4 362.2 274.5 360.7 C276.6 359.1 278.1 357.0 280.4 355.4 C282.7 353.8 286.3 353.0 288.1 351.1 C290.0 349.2 290.3 346.2 291.4 344.1 C292.5 342.1 294.1 342.3 294.9 338.8 C295.8 335.3 295.7 328.6 296.7 323.1 C297.8 317.7 300.4 309.0 301.2 306.1" fill="none" stroke="#a9c6ee" stroke-width="1.3"/>
<path d="M761.2 80.0 C762.8 82.5 767.7 90.2 770.5 94.8 C773.3 99.4 775.8 103.6 777.9 107.8 C780.0 112.0 781.2 114.3 783.4 119.9 C785.6 125.5 788.0 136.3 790.9 141.2 C793.8 146.1 797.6 149.8 801.0 149.5 C804.4 149.2 808.3 142.2 811.3 139.3 C814.2 136.4 815.0 133.6 818.7 131.9 C822.4 130.2 829.5 128.5 833.5 129.1 C837.5 129.7 837.8 135.4 842.8 135.6 C847.8 135.8 857.6 128.4 863.2 130.0 C868.8 131.6 869.4 142.6 876.2 144.9 C883.0 147.2 896.3 144.3 904.0 144.0 C911.7 143.7 917.9 141.9 922.5 143.0 C927.1 144.1 931.2 147.1 931.8 150.5 C932.4 153.9 928.7 159.7 926.2 163.4 C923.7 167.1 918.1 169.3 916.9 172.7 C915.7 176.1 914.8 181.5 918.8 183.8 C922.8 186.1 934.8 184.4 941.0 186.6 C947.2 188.8 953.7 191.7 955.9 196.8 C958.1 201.9 956.5 211.0 954.0 217.2 C951.5 223.4 943.5 228.9 941.0 233.9 C938.5 238.9 936.7 246.0 939.2 246.9 C941.7 247.8 949.4 240.7 955.9 239.5 C962.4 238.3 970.8 238.9 978.1 239.5 C985.5 240.1 992.0 242.3 1000.0 243.2 C1008.0 244.0 1018.3 243.5 1026.3 244.6 C1034.3 245.7 1043.7 245.8 1048.0 250.0 C1052.3 254.2 1051.0 263.3 1052.0 270.0 C1053.0 276.7 1051.7 287.3 1054.0 290.0 C1056.3 292.7 1062.7 286.5 1066.0 286.0 C1069.3 285.5 1071.7 284.7 1074.0 287.0 C1076.3 289.3 1077.3 298.0 1080.0 300.0 C1082.7 302.0 1083.3 304.0 1090.0 299.0 C1096.7 294.0 1107.3 281.7 1120.0 270.0 C1132.7 258.3 1153.5 239.3 1166.0 229.0 C1178.5 218.7 1186.8 212.3 1195.0 208.0 C1203.2 203.7 1208.7 206.1 1215.0 203.0 C1221.3 199.9 1225.4 193.3 1232.8 189.2 C1240.2 185.1 1255.7 182.1 1259.2 178.6 C1262.7 175.1 1259.9 171.3 1254.0 168.0 C1248.1 164.7 1229.6 161.6 1224.0 159.0 C1218.4 156.4 1217.6 153.9 1220.5 152.2 C1223.4 150.5 1236.0 148.4 1241.6 148.7 C1247.2 149.0 1250.2 155.8 1254.0 154.0 C1257.8 152.2 1260.4 144.5 1264.5 138.0 C1268.6 131.5 1274.5 121.9 1278.6 115.2 C1282.7 108.5 1284.0 102.1 1289.2 97.6 C1294.4 93.1 1301.5 88.9 1310.0 88.0 C1318.5 87.1 1327.9 91.9 1340.0 92.0 C1352.1 92.1 1371.0 90.2 1382.5 88.8 C1394.0 87.4 1404.6 84.4 1409.0 83.5" fill="none" stroke="#a9c6ee" stroke-width="4.5" stroke-linejoin="round"/>
<path d="M820.0 1000.0 C821.7 991.7 827.0 965.8 830.0 950.0 C833.0 934.2 834.7 916.7 838.0 905.0 C841.3 893.3 841.3 889.2 850.0 880.0 C858.7 870.8 876.7 858.3 890.0 850.0 C903.3 841.7 918.3 838.3 930.0 830.0 C941.7 821.7 950.8 809.2 960.0 800.0 C969.2 790.8 978.3 783.3 985.0 775.0 C991.7 766.7 994.2 759.2 1000.0 750.0 C1005.8 740.8 1013.3 728.3 1020.0 720.0 C1026.7 711.7 1033.3 705.0 1040.0 700.0 C1046.7 695.0 1054.7 695.8 1060.0 690.0 C1065.3 684.2 1067.6 673.3 1072.0 665.0 C1076.4 656.7 1085.2 649.7 1086.4 640.0 C1087.6 630.3 1084.9 613.6 1079.0 606.8 C1073.1 600.0 1057.1 601.6 1051.2 599.4 C1045.3 597.2 1043.2 596.3 1043.8 593.8 C1044.4 591.3 1052.1 588.6 1054.9 584.6 C1057.7 580.6 1061.4 574.7 1060.5 569.7 C1059.6 564.8 1050.5 559.5 1049.3 554.9 C1048.0 550.3 1052.1 548.8 1053.0 542.0 C1053.9 535.2 1055.8 520.9 1054.9 514.1 C1054.0 507.3 1052.1 505.8 1047.5 501.2 C1042.9 496.6 1032.0 491.6 1027.1 486.3 C1022.1 481.1 1018.1 474.9 1017.8 469.7 C1017.5 464.4 1026.7 459.8 1025.2 454.8 C1023.7 449.9 1011.1 445.8 1008.6 440.0 C1006.1 434.2 1009.8 423.3 1010.0 420.0" fill="none" stroke="#a9c6ee" stroke-width="3"/>
<path d="M790.0 700.0 C789.3 698.8 788.2 694.8 785.9 692.8 C783.5 690.7 777.9 691.0 775.8 687.5 C773.6 684.0 773.9 676.7 773.1 671.8 C772.3 666.8 771.9 662.5 770.8 657.6 C769.8 652.7 768.9 647.2 766.8 642.4 C764.7 637.5 760.2 633.7 758.3 628.7 C756.5 623.7 757.0 617.2 755.8 612.4 C754.7 607.6 752.2 604.5 751.2 599.9 C750.1 595.4 750.2 589.4 749.6 584.9 C748.9 580.3 748.4 575.8 747.4 572.6 C746.5 569.4 745.9 567.9 743.9 565.9 C741.9 563.9 737.8 562.9 735.4 560.7 C733.1 558.6 732.5 555.6 729.7 552.8 C726.9 550.1 722.1 546.1 718.5 544.1 C715.0 542.2 711.3 542.2 708.2 541.0 C705.0 539.9 701.3 539.2 699.7 537.3 C698.0 535.4 699.6 532.7 698.3 529.8 C696.9 526.9 692.0 522.8 691.7 519.9 C691.4 517.0 695.5 515.0 696.5 512.4 C697.4 509.8 693.8 506.3 697.4 504.1 C701.0 502.0 711.3 500.5 717.9 499.7 C724.4 499.0 731.5 499.5 736.9 499.6 C742.3 499.7 746.4 500.2 750.1 500.1 C753.9 499.9 755.3 499.7 759.3 498.8 C763.4 497.9 769.5 495.7 774.2 494.7 C778.8 493.7 782.0 494.4 787.2 492.9 C792.5 491.3 800.1 488.0 805.8 485.4 C811.4 482.9 816.4 478.5 821.1 477.7 C825.9 476.8 829.5 480.4 834.2 480.4 C839.0 480.3 844.3 478.1 849.5 477.1 C854.7 476.2 860.8 475.9 865.7 474.7 C870.5 473.6 873.5 470.9 878.6 470.2 C883.6 469.5 890.8 470.7 895.9 470.4 C900.9 470.1 904.0 468.8 909.1 468.3 C914.1 467.8 920.1 468.6 926.0 467.4 C931.9 466.2 938.1 463.6 944.3 461.1 C950.6 458.5 957.8 455.5 963.4 452.1 C968.9 448.8 973.4 444.7 977.5 441.2 C981.7 437.6 984.6 434.1 988.4 430.6 C992.1 427.1 998.1 421.8 1000.0 420.0" fill="none" stroke="#a9c6ee" stroke-width="1.8"/>
<path d="M545.0 560.0 C546.4 557.2 551.5 548.1 553.5 543.5 C555.6 538.8 555.2 536.4 557.3 532.3 C559.4 528.2 562.8 523.3 566.1 518.8 C569.3 514.3 574.0 510.0 577.0 505.6 C579.9 501.1 581.7 496.0 583.8 492.0 C586.0 488.1 586.4 485.7 589.8 481.8 C593.2 478.0 599.8 473.5 604.3 468.9 C608.9 464.4 611.1 459.2 617.1 454.4 C623.2 449.6 633.8 444.0 640.7 440.1 C647.6 436.1 652.4 433.9 658.5 430.6 C664.6 427.4 670.8 423.3 677.6 420.8 C684.4 418.3 691.3 417.7 699.1 415.6 C706.9 413.6 715.6 410.2 724.5 408.3 C733.4 406.5 745.3 406.0 752.4 404.5 C759.5 402.9 761.3 401.5 767.2 399.1 C773.1 396.7 782.5 392.2 787.7 390.1 C792.9 388.0 794.4 388.1 798.5 386.4 C802.6 384.7 807.1 381.3 812.0 379.8 C816.9 378.4 823.1 379.0 827.7 377.8 C832.3 376.5 835.0 372.6 839.6 372.2 C844.3 371.7 849.5 374.3 855.8 375.1 C862.1 375.9 870.9 375.9 877.6 377.0 C884.3 378.1 890.5 380.5 895.9 381.8 C901.3 383.1 907.7 384.5 910.0 385.0" fill="none" stroke="#a9c6ee" stroke-width="1.8"/>
<path d="M740.0 295.0 C742.3 293.6 749.5 288.6 753.7 286.8 C758.0 285.1 760.7 285.9 765.6 284.6 C770.5 283.2 777.2 281.4 783.2 279.0 C789.3 276.6 796.1 272.1 801.9 270.2 C807.8 268.3 812.1 268.5 818.3 267.6 C824.5 266.7 832.1 264.7 839.1 265.0 C846.2 265.2 853.8 267.9 860.6 269.3 C867.4 270.6 874.6 271.4 879.8 273.1 C885.1 274.9 887.5 276.5 891.9 279.7 C896.3 282.8 901.5 289.6 906.0 292.0 C910.6 294.4 915.2 292.7 919.2 294.0 C923.2 295.3 928.2 299.0 930.0 300.0" fill="none" stroke="#a9c6ee" stroke-width="1.8"/>
<path d="M640.0 520.0 C643.8 518.4 655.8 513.2 662.5 510.7 C669.3 508.2 674.0 509.3 680.6 505.1 C687.2 501.0 695.5 491.9 702.3 485.7 C709.1 479.4 715.8 473.5 721.3 467.7 C726.9 461.9 731.4 456.8 735.8 450.8 C740.2 444.7 744.9 436.5 747.8 431.5 C750.8 426.5 751.3 425.3 753.4 420.9 C755.4 416.5 758.9 407.7 760.0 405.0" fill="none" stroke="#a9c6ee" stroke-width="1.8"/>
<path d="M1000.0 780.0 C1000.5 784.1 1001.7 796.2 1003.3 804.5 C1004.9 812.8 1007.1 822.2 1009.6 829.8 C1012.2 837.4 1015.1 843.8 1018.7 850.2 C1022.3 856.6 1026.4 863.0 1031.3 867.9 C1036.2 872.8 1043.1 876.1 1048.3 879.6 C1053.4 883.1 1057.9 887.1 1062.4 889.0 C1066.9 890.9 1070.2 889.2 1075.2 890.7 C1080.1 892.2 1087.3 894.4 1092.3 897.9 C1097.4 901.4 1101.3 906.2 1105.5 911.7 C1109.8 917.1 1112.8 924.9 1117.7 930.5 C1122.7 936.2 1129.8 940.6 1135.2 945.6 C1140.5 950.5 1147.5 957.6 1150.0 960.0" fill="none" stroke="#a9c6ee" stroke-width="1.8"/>
<path d="M990.0 900.0 C991.2 903.8 995.1 915.9 997.2 922.9 C999.3 929.9 1001.5 935.8 1002.6 941.9 C1003.7 948.0 1003.4 953.4 1003.8 959.7 C1004.2 966.0 1004.8 976.6 1005.0 980.0" fill="none" stroke="#a9c6ee" stroke-width="1.8"/>
<path d="M300.0 830.0 C299.5 833.6 298.5 844.5 297.2 851.4 C295.9 858.3 293.6 863.9 292.4 871.2 C291.1 878.5 290.6 887.2 289.8 895.3 C288.9 903.5 287.5 915.9 287.0 920.0" fill="none" stroke="#a9c6ee" stroke-width="1.8"/>
<path d="M1050.0 300.0 C1054.0 297.1 1065.3 289.1 1074.1 282.3 C1082.8 275.5 1093.6 264.7 1102.5 259.3 C1111.5 253.8 1119.9 253.5 1127.8 249.5 C1135.7 245.5 1146.3 237.4 1150.0 235.0" fill="none" stroke="#a9c6ee" stroke-width="1.8"/>
<path d="M1395.0 830.0 C1393.6 833.3 1388.9 843.2 1386.9 849.8 C1384.9 856.4 1383.4 863.9 1382.9 869.6 C1382.4 875.3 1383.5 879.1 1383.9 884.1 C1384.2 889.2 1384.8 897.4 1385.0 900.0" fill="none" stroke="#a9c6ee" stroke-width="1.8"/>
<rect x="455.5" y="337.5" width="2.5" height="2.5" fill="#f00"/>
<path d="M1052 524 L1069 522 L1071 544 L1054 546Z" fill="#e9e3cf" fill-opacity="0.75"/>
<path d="M385.4 388.5 L391.9 374.3 L377.0 358.3 L384.8 340.2 L380.9 338.0 L398.7 323.3 L396.3 317.3 L404.6 301.0 L413.5 284.7 L418.0 278.8 L428.4 267.5 L452.1 266.3 L455.0 269.9 L464.6 266.9 L465.5 258.0 L475.8 241.7 L493.6 237.2 L533.7 237.2 L551.5 241.7 L561.9 247.6 L570.8 258.0 L590.0 261.0 L597.5 255.0 L601.9 249.7 L609.3 252.9 L631.6 241.7 L627.1 226.8 L618.2 225.4 L609.3 213.5 L616.7 201.6 L607.8 192.7 L612.3 186.8 L634.5 183.2 L644.9 191.2 L652.3 189.8 L653.8 179.4 L667.2 175.5 L683.5 177.9 L685.0 185.3 L720.0 189.2 L743.0 190.4 L762.3 207.6 L768.2 206.0 L777.1 211.1 L800.9 217.0 L823.1 218.0 L833.5 212.0 L845.4 216.5 L860.2 223.9 L867.6 225.4 L876.5 235.1 L892.8 243.2 L894.3 256.5 L912.1 258.9 L916.6 266.9 L921.9 264.0 L935.8 274.3 L932.9 284.7 L956.6 274.3 L961.1 264.5 L975.9 268.4 L1005.5 269.0 L1014.5 259.5 L1024.8 253.5 L1026.3 244.6 L1041.1 234.9 L1048.6 241.7 L1051.5 256.5 L1067.8 239.6 L1062.5 252.0 L1050.0 264.0 L1053.0 292.0 L1066.4 284.7 L1073.8 285.3 L1076.7 299.5 L1081.2 296.6 L1088.6 298.0 L1165.7 226.8 L1168.7 231.3 L1160.9 253.0 L1182.3 257.0 L1197.8 271.4 L1178.4 284.3 L1197.8 293.2 L1184.2 309.6 L1174.5 332.9 L1189.3 338.8 L1188.0 364.0 L1199.8 362.0 L1219.2 368.0 L1236.0 372.6 L1236.7 387.4 L1254.2 399.0 L1258.0 408.8 L1271.8 410.0 L1267.9 434.0 L1263.2 459.4 L1283.4 473.0 L1279.5 482.7 L1292.2 493.3 L1289.2 505.2 L1278.8 515.6 L1258.1 530.4 L1244.7 531.9 L1252.2 550.6 L1240.3 557.1 L1213.6 564.5 L1197.3 577.9 L1203.2 597.2 L1189.9 610.5 L1175.0 628.3 L1169.1 644.6 L1178.0 650.6 L1169.1 659.5 L1175.0 671.3 L1169.1 675.8 L1186.9 684.7 L1215.1 675.8 L1221.0 681.7 L1218.0 690.6 L1204.7 717.3 L1210.6 735.1 L1231.4 752.9 L1221.0 773.7 L1216.1 780.0 L1220.2 803.0 L1228.4 811.2 L1250.0 818.0 L1263.6 820.2 L1260.9 837.0 L1262.3 849.2 L1252.8 856.0 L1254.1 864.1 L1248.7 875.0 L1241.9 883.1 L1246.0 892.6 L1255.5 895.3 L1277.2 885.8 L1284.0 888.5 L1288.0 896.7 L1266.3 907.5 L1252.8 913.0 L1250.0 926.5 L1250.0 937.4 L1229.7 974.0 L1243.3 1001.2 L1233.8 1027.0 L1214.8 1042.0 L1200.0 1060.0 L1150.0 1060.0 L1145.6 1042.0 L1138.8 1035.0 L1118.5 1018.8 L1087.0 1024.0 L1062.8 1042.0 L1050.0 1060.0 L745.0 1060.0 L732.8 1041.9 L753.1 1024.2 L759.9 997.0 L755.8 991.7 L758.6 974.0 L765.3 973.2 L777.6 967.2 L778.9 953.7 L784.3 951.0 L781.6 946.1 L768.0 946.1 L762.6 942.8 L746.3 951.0 L736.8 937.4 L735.5 926.5 L743.6 915.7 L747.7 904.8 L747.7 899.4 L751.8 880.4 L743.6 876.3 L732.8 869.6 L712.4 868.2 L704.3 865.5 L697.5 858.7 L692.1 857.3 L688.0 872.3 L683.9 877.1 L655.4 879.9 L652.7 868.2 L647.3 870.9 L637.8 868.2 L629.7 865.5 L616.1 877.7 L608.0 894.0 L597.1 896.7 L583.5 907.5 L580.8 923.8 L572.7 930.6 L564.5 930.6 L561.8 922.5 L552.3 913.0 L542.8 918.4 L534.7 921.1 L529.3 918.4 L533.3 896.7 L522.5 895.3 L513.0 891.3 L500.8 904.8 L494.0 918.4 L487.2 919.8 L481.8 927.9 L485.8 942.0 L477.7 949.6 L470.9 945.5 L458.7 944.2 L461.4 933.3 L466.8 932.0 L465.5 925.2 L451.9 919.8 L428.8 923.8 L420.7 917.0 L418.0 910.3 L426.1 907.5 L426.1 900.8 L420.7 891.3 L418.0 888.5 L419.3 868.2 L399.0 876.3 L386.8 868.2 L390.9 856.0 L396.3 845.1 L405.8 831.6 L407.1 820.7 L400.4 804.4 L385.4 800.4 L390.9 796.3 L407.1 792.2 L415.3 785.4 L426.1 788.1 L430.2 785.4 L428.8 780.0 L426.8 769.1 L417.0 767.2 L422.9 761.3 L436.5 751.6 L430.7 743.8 L426.8 730.2 L419.0 720.5 L407.3 714.6 L395.6 715.4 L372.3 722.4 L356.7 730.2 L356.7 721.6 L341.2 724.4 L321.7 738.0 L312.0 743.8 L296.4 727.5 L310.0 722.4 L319.8 714.6 L317.8 706.8 L323.7 697.1 L345.1 683.5 L354.8 677.7 L356.7 666.0 L364.5 664.0 L374.2 660.2 L389.8 658.2 L407.3 644.6 L418.2 640.7 L419.0 621.2 L399.5 601.8 L391.8 584.3 L389.8 570.7 L401.5 557.0 L389.8 555.1 L397.6 524.0 L407.3 512.3 L399.5 512.3 L385.9 504.5 L382.0 481.2 L387.9 463.7 L392.9 453.9 L385.9 448.1 L368.4 450.0 L389.8 428.6 L380.1 417.0 L378.1 401.4 L387.1 380.0Z" fill="none" stroke="#8a8a8a" stroke-opacity="0.45" stroke-width="5" transform="translate(-1,1)"/>
<path d="M385.4 388.5 L391.9 374.3 L377.0 358.3 L384.8 340.2 L380.9 338.0 L398.7 323.3 L396.3 317.3 L404.6 301.0 L413.5 284.7 L418.0 278.8 L428.4 267.5 L452.1 266.3 L455.0 269.9 L464.6 266.9 L465.5 258.0 L475.8 241.7 L493.6 237.2 L533.7 237.2 L551.5 241.7 L561.9 247.6 L570.8 258.0 L590.0 261.0 L597.5 255.0 L601.9 249.7 L609.3 252.9 L631.6 241.7 L627.1 226.8 L618.2 225.4 L609.3 213.5 L616.7 201.6 L607.8 192.7 L612.3 186.8 L634.5 183.2 L644.9 191.2 L652.3 189.8 L653.8 179.4 L667.2 175.5 L683.5 177.9 L685.0 185.3 L720.0 189.2 L743.0 190.4 L762.3 207.6 L768.2 206.0 L777.1 211.1 L800.9 217.0 L823.1 218.0 L833.5 212.0 L845.4 216.5 L860.2 223.9 L867.6 225.4 L876.5 235.1 L892.8 243.2 L894.3 256.5 L912.1 258.9 L916.6 266.9 L921.9 264.0 L935.8 274.3 L932.9 284.7 L956.6 274.3 L961.1 264.5 L975.9 268.4 L1005.5 269.0 L1014.5 259.5 L1024.8 253.5 L1026.3 244.6 L1041.1 234.9 L1048.6 241.7 L1051.5 256.5 L1067.8 239.6 L1062.5 252.0 L1050.0 264.0 L1053.0 292.0 L1066.4 284.7 L1073.8 285.3 L1076.7 299.5 L1081.2 296.6 L1088.6 298.0 L1165.7 226.8 L1168.7 231.3 L1160.9 253.0 L1182.3 257.0 L1197.8 271.4 L1178.4 284.3 L1197.8 293.2 L1184.2 309.6 L1174.5 332.9 L1189.3 338.8 L1188.0 364.0 L1199.8 362.0 L1219.2 368.0 L1236.0 372.6 L1236.7 387.4 L1254.2 399.0 L1258.0 408.8 L1271.8 410.0 L1267.9 434.0 L1263.2 459.4 L1283.4 473.0 L1279.5 482.7 L1292.2 493.3 L1289.2 505.2 L1278.8 515.6 L1258.1 530.4 L1244.7 531.9 L1252.2 550.6 L1240.3 557.1 L1213.6 564.5 L1197.3 577.9 L1203.2 597.2 L1189.9 610.5 L1175.0 628.3 L1169.1 644.6 L1178.0 650.6 L1169.1 659.5 L1175.0 671.3 L1169.1 675.8 L1186.9 684.7 L1215.1 675.8 L1221.0 681.7 L1218.0 690.6 L1204.7 717.3 L1210.6 735.1 L1231.4 752.9 L1221.0 773.7 L1216.1 780.0 L1220.2 803.0 L1228.4 811.2 L1250.0 818.0 L1263.6 820.2 L1260.9 837.0 L1262.3 849.2 L1252.8 856.0 L1254.1 864.1 L1248.7 875.0 L1241.9 883.1 L1246.0 892.6 L1255.5 895.3 L1277.2 885.8 L1284.0 888.5 L1288.0 896.7 L1266.3 907.5 L1252.8 913.0 L1250.0 926.5 L1250.0 937.4 L1229.7 974.0 L1243.3 1001.2 L1233.8 1027.0 L1214.8 1042.0 L1200.0 1060.0 L1150.0 1060.0 L1145.6 1042.0 L1138.8 1035.0 L1118.5 1018.8 L1087.0 1024.0 L1062.8 1042.0 L1050.0 1060.0 L745.0 1060.0 L732.8 1041.9 L753.1 1024.2 L759.9 997.0 L755.8 991.7 L758.6 974.0 L765.3 973.2 L777.6 967.2 L778.9 953.7 L784.3 951.0 L781.6 946.1 L768.0 946.1 L762.6 942.8 L746.3 951.0 L736.8 937.4 L735.5 926.5 L743.6 915.7 L747.7 904.8 L747.7 899.4 L751.8 880.4 L743.6 876.3 L732.8 869.6 L712.4 868.2 L704.3 865.5 L697.5 858.7 L692.1 857.3 L688.0 872.3 L683.9 877.1 L655.4 879.9 L652.7 868.2 L647.3 870.9 L637.8 868.2 L629.7 865.5 L616.1 877.7 L608.0 894.0 L597.1 896.7 L583.5 907.5 L580.8 923.8 L572.7 930.6 L564.5 930.6 L561.8 922.5 L552.3 913.0 L542.8 918.4 L534.7 921.1 L529.3 918.4 L533.3 896.7 L522.5 895.3 L513.0 891.3 L500.8 904.8 L494.0 918.4 L487.2 919.8 L481.8 927.9 L485.8 942.0 L477.7 949.6 L470.9 945.5 L458.7 944.2 L461.4 933.3 L466.8 932.0 L465.5 925.2 L451.9 919.8 L428.8 923.8 L420.7 917.0 L418.0 910.3 L426.1 907.5 L426.1 900.8 L420.7 891.3 L418.0 888.5 L419.3 868.2 L399.0 876.3 L386.8 868.2 L390.9 856.0 L396.3 845.1 L405.8 831.6 L407.1 820.7 L400.4 804.4 L385.4 800.4 L390.9 796.3 L407.1 792.2 L415.3 785.4 L426.1 788.1 L430.2 785.4 L428.8 780.0 L426.8 769.1 L417.0 767.2 L422.9 761.3 L436.5 751.6 L430.7 743.8 L426.8 730.2 L419.0 720.5 L407.3 714.6 L395.6 715.4 L372.3 722.4 L356.7 730.2 L356.7 721.6 L341.2 724.4 L321.7 738.0 L312.0 743.8 L296.4 727.5 L310.0 722.4 L319.8 714.6 L317.8 706.8 L323.7 697.1 L345.1 683.5 L354.8 677.7 L356.7 666.0 L364.5 664.0 L374.2 660.2 L389.8 658.2 L407.3 644.6 L418.2 640.7 L419.0 621.2 L399.5 601.8 L391.8 584.3 L389.8 570.7 L401.5 557.0 L389.8 555.1 L397.6 524.0 L407.3 512.3 L399.5 512.3 L385.9 504.5 L382.0 481.2 L387.9 463.7 L392.9 453.9 L385.9 448.1 L368.4 450.0 L389.8 428.6 L380.1 417.0 L378.1 401.4 L387.1 380.0Z" fill="none" stroke="#0b18e6" stroke-width="2.8" stroke-linejoin="round"/>
<path d="M721.4 322.5 L628.8 401.5 L604.6 612 L805.3 415Z" fill="#e4f3c0" fill-opacity="0.88" stroke="#f7a035" stroke-width="2"/>
<rect x="557.4" y="82.4" width="23.800000000000068" height="11.799999999999997" rx="2.5" fill="#a98ae9" stroke="#fff" stroke-width="0.8"/>
<text x="569.3" y="92.30000000000001" text-anchor="middle" font-size="11" font-weight="bold" fill="#fff">G50</text>
<rect x="1180.3" y="374.6" width="33.100000000000136" height="11.599999999999966" rx="2.5" fill="#a98ae9" stroke="#fff" stroke-width="0.8"/>
<text x="1196.85" y="384.4" text-anchor="middle" font-size="11" font-weight="bold" fill="#fff">G0422</text>
<rect x="1138" y="686.8" width="31.700000000000045" height="10.400000000000091" rx="2.5" fill="#a98ae9" stroke="#fff" stroke-width="0.8"/>
<text x="1153.85" y="696.0" text-anchor="middle" font-size="11" font-weight="bold" fill="#fff">G0422</text>
<rect x="819" y="537.6" width="23.299999999999955" height="12.399999999999977" rx="2.5" fill="#a98ae9" stroke="#fff" stroke-width="0.8"/>
<text x="830.65" y="547.8" text-anchor="middle" font-size="11" font-weight="bold" fill="#fff">G55</text>
<rect x="733.4" y="437.6" width="24.1" height="12.4" rx="2.5" fill="#b7a6de" stroke="#fff" stroke-width="0.8"/><text x="745.5" y="448" text-anchor="middle" font-size="11" font-weight="bold" fill="#fff">G56</text>
<rect x="671" y="459" width="24.3" height="12.4" rx="2.5" fill="#b7a6de" stroke="#fff" stroke-width="0.8"/><text x="683.2" y="469.4" text-anchor="middle" font-size="11" font-weight="bold" fill="#fff">G56</text>
<rect x="1210.7" y="953.7" width="12.799999999999955" height="12.199999999999932" rx="2.5" fill="#a98ae9" stroke="#fff" stroke-width="0.8"/>
<text x="1217.1" y="963.8" text-anchor="middle" font-size="11" font-weight="bold" fill="#fff">22</text>
<rect x="1500" y="989" width="24" height="12" rx="2.5" fill="#a98ae9" stroke="#fff" stroke-width="0.8"/>
<text x="1512.0" y="999.0" text-anchor="middle" font-size="11" font-weight="bold" fill="#fff">S41</text>
<rect x="1866" y="977" width="24" height="12" rx="2.5" fill="#a98ae9" stroke="#fff" stroke-width="0.8"/>
<text x="1878.0" y="987.0" text-anchor="middle" font-size="11" font-weight="bold" fill="#fff">S30</text>
<text x="1118.3" y="276.3" font-size="13" fill="#3d9ad6" stroke="#fff" stroke-width="2" paint-order="stroke">长</text>
<text x="1134.6" y="261.5" font-size="13" fill="#3d9ad6" stroke="#fff" stroke-width="2" paint-order="stroke">江</text>
<text x="1342" y="152" font-size="12" letter-spacing="5" fill="#3d9ad6" stroke="#fff" stroke-width="2" paint-order="stroke">梁子湖</text>
<text x="1279" y="196" font-size="12" letter-spacing="5" fill="#3d9ad6" stroke="#fff" stroke-width="2" paint-order="stroke">斧头湖</text>
<circle cx="463.1" cy="88.3" r="2.6" fill="#fff" stroke="#333" stroke-width="1"/>
<circle cx="734.1" cy="111" r="2.6" fill="#fff" stroke="#333" stroke-width="1"/>
<circle cx="320.1" cy="144.4" r="2.6" fill="#fff" stroke="#333" stroke-width="1"/>
<circle cx="421" cy="200.1" r="2.6" fill="#fff" stroke="#333" stroke-width="1"/>
<circle cx="520.3" cy="217.3" r="2.6" fill="#fff" stroke="#333" stroke-width="1"/>
<circle cx="357.2" cy="258.6" r="2.6" fill="#fff" stroke="#333" stroke-width="1"/>
<circle cx="290.4" cy="282.6" r="2.6" fill="#fff" stroke="#333" stroke-width="1"/>
<circle cx="413.5" cy="296.6" r="2.6" fill="#fff" stroke="#333" stroke-width="1"/>
<circle cx="544" cy="307" r="2.6" fill="#fff" stroke="#333" stroke-width="1"/>
<circle cx="614.4" cy="316.4" r="2.6" fill="#fff" stroke="#333" stroke-width="1"/>
<circle cx="722" cy="301" r="2.6" fill="#fff" stroke="#333" stroke-width="1"/>
<circle cx="637" cy="161" r="2.6" fill="#fff" stroke="#333" stroke-width="1"/>
<rect x="598.3" y="355.3" width="6" height="6" fill="#fff" stroke="#333" stroke-width="1"/>
<circle cx="486.2" cy="378.1" r="2.6" fill="#fff" stroke="#333" stroke-width="1"/>
<circle cx="778.6" cy="128" r="2.6" fill="#fff" stroke="#333" stroke-width="1"/>
<circle cx="834.4" cy="120" r="2.6" fill="#fff" stroke="#333" stroke-width="1"/>
<rect x="919.5" y="133.4" width="6" height="6" fill="#fff" stroke="#333" stroke-width="1"/>
<circle cx="1042.6" cy="124.5" r="2.6" fill="#fff" stroke="#333" stroke-width="1"/>
<circle cx="1137.5" cy="132" r="2.6" fill="#fff" stroke="#333" stroke-width="1"/>
<circle cx="834.4" cy="165.4" r="2.6" fill="#fff" stroke="#333" stroke-width="1"/>
<circle cx="920.4" cy="187.4" r="2.6" fill="#fff" stroke="#333" stroke-width="1"/>
<circle cx="955.1" cy="190.4" r="2.6" fill="#fff" stroke="#333" stroke-width="1"/>
<circle cx="1043.2" cy="226.2" r="2.6" fill="#fff" stroke="#333" stroke-width="1"/>
<circle cx="955.1" cy="248.5" r="2.6" fill="#fff" stroke="#333" stroke-width="1"/>
<circle cx="765.3" cy="273.4" r="2.6" fill="#fff" stroke="#333" stroke-width="1"/>
<circle cx="976" cy="283.2" r="2.6" fill="#fff" stroke="#333" stroke-width="1"/>
<circle cx="909.1" cy="304.6" r="2.6" fill="#fff" stroke="#333" stroke-width="1"/>
<circle cx="814.2" cy="299.5" r="2.6" fill="#fff" stroke="#333" stroke-width="1"/>
<rect x="820.1" y="370.7" width="6" height="6" fill="#fff" stroke="#333" stroke-width="1"/>
<circle cx="1081.2" cy="352.9" r="2.6" fill="#fff" stroke="#333" stroke-width="1"/>
<circle cx="1147" cy="229.2" r="2.6" fill="#fff" stroke="#333" stroke-width="1"/>
<circle cx="1258" cy="141" r="2.6" fill="#fff" stroke="#333" stroke-width="1"/>
<circle cx="1301" cy="129.4" r="2.6" fill="#fff" stroke="#333" stroke-width="1"/>
<circle cx="1405.2" cy="160.5" r="2.6" fill="#fff" stroke="#333" stroke-width="1"/>
<circle cx="1231.7" cy="203.3" r="2.6" fill="#fff" stroke="#333" stroke-width="1"/>
<rect x="1298" y="223.7" width="6" height="6" fill="#fff" stroke="#333" stroke-width="1"/>
<circle cx="1224.3" cy="247.3" r="2.6" fill="#fff" stroke="#333" stroke-width="1"/>
<circle cx="1330" cy="269.5" r="2.6" fill="#fff" stroke="#333" stroke-width="1"/>
<circle cx="1249.6" cy="278.4" r="2.6" fill="#fff" stroke="#333" stroke-width="1"/>
<circle cx="1209.5" cy="335.6" r="2.6" fill="#fff" stroke="#333" stroke-width="1"/>
<circle cx="1342.6" cy="375" r="2.6" fill="#fff" stroke="#333" stroke-width="1"/>
<circle cx="1166.7" cy="433.3" r="2.6" fill="#fff" stroke="#333" stroke-width="1"/>
<circle cx="1310.7" cy="466.4" r="2.6" fill="#fff" stroke="#333" stroke-width="1"/>
<circle cx="1388.5" cy="488.6" r="2.6" fill="#fff" stroke="#333" stroke-width="1"/>
<circle cx="289.8" cy="408" r="2.6" fill="#fff" stroke="#333" stroke-width="1"/>
<circle cx="243" cy="457.8" r="2.6" fill="#fff" stroke="#333" stroke-width="1"/>
<circle cx="420.2" cy="457" r="2.6" fill="#fff" stroke="#333" stroke-width="1"/>
<circle cx="333.4" cy="480" r="2.6" fill="#fff" stroke="#333" stroke-width="1"/>
<circle cx="586.3" cy="479.2" r="2.6" fill="#fff" stroke="#333" stroke-width="1"/>
<circle cx="554.4" cy="522" r="2.6" fill="#fff" stroke="#333" stroke-width="1"/>
<circle cx="369.6" cy="533" r="2.6" fill="#fff" stroke="#333" stroke-width="1"/>
<circle cx="547.4" cy="559.8" r="2.6" fill="#fff" stroke="#333" stroke-width="1"/>
<circle cx="622.1" cy="578.4" r="2.6" fill="#fff" stroke="#333" stroke-width="1"/>
<circle cx="303.4" cy="615.4" r="2.6" fill="#fff" stroke="#333" stroke-width="1"/>
<rect x="364.2" y="607.4" width="6" height="6" fill="#fff" stroke="#333" stroke-width="1"/>
<circle cx="457.1" cy="662.1" r="2.6" fill="#fff" stroke="#333" stroke-width="1"/>
<rect x="511.29999999999995" y="638.9" width="6" height="6" fill="#fff" stroke="#333" stroke-width="1"/>
<circle cx="363.7" cy="679.6" r="2.6" fill="#fff" stroke="#333" stroke-width="1"/>
<circle cx="317" cy="699" r="2.6" fill="#fff" stroke="#333" stroke-width="1"/>
<circle cx="484.4" cy="705" r="2.6" fill="#fff" stroke="#333" stroke-width="1"/>
<circle cx="273" cy="752.4" r="2.6" fill="#fff" stroke="#333" stroke-width="1"/>
<circle cx="370.4" cy="760.2" r="2.6" fill="#fff" stroke="#333" stroke-width="1"/>
<circle cx="466.5" cy="764.4" r="2.6" fill="#fff" stroke="#333" stroke-width="1"/>
<circle cx="785.1" cy="396.7" r="2.6" fill="#fff" stroke="#333" stroke-width="1"/>
<circle cx="873.5" cy="396.3" r="2.6" fill="#fff" stroke="#333" stroke-width="1"/>
<circle cx="942.3" cy="407.2" r="2.6" fill="#fff" stroke="#333" stroke-width="1"/>
<circle cx="906.5" cy="467.5" r="2.6" fill="#fff" stroke="#333" stroke-width="1"/>
<circle cx="734.6" cy="493.6" r="2.6" fill="#fff" stroke="#333" stroke-width="1"/>
<circle cx="973.9" cy="577.3" r="2.6" fill="#fff" stroke="#333" stroke-width="1"/>
<rect x="875.1" y="612.4" width="6" height="6" fill="#fff" stroke="#333" stroke-width="1"/>
<circle cx="975.4" cy="610.4" r="2.6" fill="#fff" stroke="#333" stroke-width="1"/>
<circle cx="913.5" cy="660.2" r="2.6" fill="#fff" stroke="#333" stroke-width="1"/>
<rect x="778.2" y="697.2" width="6" height="6" fill="#fff" stroke="#333" stroke-width="1"/>
<circle cx="702.3" cy="722.4" r="2.6" fill="#fff" stroke="#333" stroke-width="1"/>
<circle cx="746.2" cy="745" r="2.6" fill="#fff" stroke="#333" stroke-width="1"/>
<circle cx="1012.4" cy="701" r="2.6" fill="#fff" stroke="#333" stroke-width="1"/>
<circle cx="1036.2" cy="701" r="2.6" fill="#fff" stroke="#333" stroke-width="1"/>
<rect x="979.4" y="760.3" width="6" height="6" fill="#fff" stroke="#333" stroke-width="1"/>
<circle cx="894.9" cy="780" r="2.6" fill="#fff" stroke="#333" stroke-width="1"/>
<circle cx="1049" cy="520" r="3.5" fill="#fff" stroke="#333" stroke-width="1"/><circle cx="1049" cy="520" r="1.6" fill="#333"/>
<circle cx="1177.1" cy="531.3" r="2.6" fill="#fff" stroke="#333" stroke-width="1"/>
<circle cx="1323.3" cy="542.3" r="2.6" fill="#fff" stroke="#333" stroke-width="1"/>
<circle cx="1205.3" cy="583.2" r="2.6" fill="#fff" stroke="#333" stroke-width="1"/>
<rect x="1315" y="592.1" width="6" height="6" fill="#fff" stroke="#333" stroke-width="1"/>
<rect x="1213.6" y="627.4" width="6" height="6" fill="#fff" stroke="#333" stroke-width="1"/>
<circle cx="1086.6" cy="615.9" r="2.6" fill="#fff" stroke="#333" stroke-width="1"/>
<circle cx="1355.4" cy="672.2" r="2.6" fill="#fff" stroke="#333" stroke-width="1"/>
<circle cx="1235.2" cy="720.9" r="2.6" fill="#fff" stroke="#333" stroke-width="1"/>
<circle cx="1052.8" cy="727.7" r="2.6" fill="#fff" stroke="#333" stroke-width="1"/>
<circle cx="1123.1" cy="743.1" r="2.6" fill="#fff" stroke="#333" stroke-width="1"/>
<circle cx="1286.3" cy="753.5" r="2.6" fill="#fff" stroke="#333" stroke-width="1"/>
<circle cx="1295.2" cy="789.4" r="2.6" fill="#fff" stroke="#333" stroke-width="1"/>
<circle cx="1001.2" cy="791.4" r="2.6" fill="#fff" stroke="#333" stroke-width="1"/>
<circle cx="1109.5" cy="796.3" r="2.6" fill="#fff" stroke="#333" stroke-width="1"/>
<circle cx="1201.2" cy="836.4" r="2.6" fill="#fff" stroke="#333" stroke-width="1"/>
<circle cx="1385.7" cy="842.4" r="2.6" fill="#fff" stroke="#333" stroke-width="1"/>
<circle cx="951" cy="849.2" r="2.6" fill="#fff" stroke="#333" stroke-width="1"/>
<circle cx="1336.4" cy="866.3" r="2.6" fill="#fff" stroke="#333" stroke-width="1"/>
<circle cx="1081.3" cy="902.7" r="2.6" fill="#fff" stroke="#333" stroke-width="1"/>
<circle cx="914.9" cy="943.4" r="2.6" fill="#fff" stroke="#333" stroke-width="1"/>
<circle cx="1298.4" cy="983.5" r="2.6" fill="#fff" stroke="#333" stroke-width="1"/>
<circle cx="1382.2" cy="987.6" r="2.6" fill="#fff" stroke="#333" stroke-width="1"/>
<circle cx="1308.4" cy="1034.3" r="2.6" fill="#fff" stroke="#333" stroke-width="1"/>
<circle cx="1051.2" cy="1035" r="2.6" fill="#fff" stroke="#333" stroke-width="1"/>
<circle cx="914.1" cy="1039.2" r="2.6" fill="#fff" stroke="#333" stroke-width="1"/>
<circle cx="459.2" cy="821.2" r="2.6" fill="#fff" stroke="#333" stroke-width="1"/>
<circle cx="542.3" cy="819.3" r="2.6" fill="#fff" stroke="#333" stroke-width="1"/>
<circle cx="629.1" cy="793.6" r="2.6" fill="#fff" stroke="#333" stroke-width="1"/>
<circle cx="573.2" cy="853.8" r="2.6" fill="#fff" stroke="#333" stroke-width="1"/>
<circle cx="475" cy="896.1" r="2.6" fill="#fff" stroke="#333" stroke-width="1"/>
<circle cx="633.2" cy="918.4" r="2.6" fill="#fff" stroke="#333" stroke-width="1"/>
<circle cx="709.2" cy="938.2" r="2.6" fill="#fff" stroke="#333" stroke-width="1"/>
<circle cx="443.2" cy="965.3" r="2.6" fill="#fff" stroke="#333" stroke-width="1"/>
<circle cx="516.2" cy="961.8" r="2.6" fill="#fff" stroke="#333" stroke-width="1"/>
<circle cx="636.4" cy="996.3" r="2.6" fill="#fff" stroke="#333" stroke-width="1"/>
<circle cx="573.2" cy="1033.2" r="2.6" fill="#fff" stroke="#333" stroke-width="1"/>
<circle cx="725.2" cy="1018.3" r="2.6" fill="#fff" stroke="#333" stroke-width="1"/>
<circle cx="805.5" cy="1011.2" r="2.6" fill="#fff" stroke="#333" stroke-width="1"/>
<circle cx="868.5" cy="1003" r="2.6" fill="#fff" stroke="#333" stroke-width="1"/>
<circle cx="816.4" cy="932.5" r="2.6" fill="#fff" stroke="#333" stroke-width="1"/>
<circle cx="849" cy="820.2" r="2.6" fill="#fff" stroke="#333" stroke-width="1"/>
<circle cx="1401" cy="81" r="2.6" fill="#fff" stroke="#333" stroke-width="1"/>
<circle cx="1712" cy="82" r="2.6" fill="#fff" stroke="#333" stroke-width="1"/>
<circle cx="1072.3" cy="414.7" r="2.6" fill="#fff" stroke="#333" stroke-width="1"/>
<circle cx="1043.4" cy="436" r="2.6" fill="#fff" stroke="#333" stroke-width="1"/>
<circle cx="1500" cy="934.7" r="2.6" fill="#fff" stroke="#333" stroke-width="1"/>
<circle cx="1611.3" cy="947" r="2.6" fill="#fff" stroke="#333" stroke-width="1"/>
<rect x="1409.8" y="953.3" width="6" height="6" fill="#fff" stroke="#333" stroke-width="1"/>
<circle cx="1671.7" cy="956.3" r="2.6" fill="#fff" stroke="#333" stroke-width="1"/>
<circle cx="1855.3" cy="936.3" r="2.6" fill="#fff" stroke="#333" stroke-width="1"/>
<circle cx="1744" cy="977.8" r="2.6" fill="#fff" stroke="#333" stroke-width="1"/>
<circle cx="1567.1" cy="997.8" r="2.6" fill="#fff" stroke="#333" stroke-width="1"/>
<circle cx="1410.5" cy="1036.6" r="2.6" fill="#fff" stroke="#333" stroke-width="1"/>
<circle cx="754" cy="854.1" r="2.6" fill="#fff" stroke="#333" stroke-width="1"/>
<circle cx="669.8" cy="846" r="2.6" fill="#fff" stroke="#333" stroke-width="1"/>
<circle cx="245" cy="938.1" r="2.6" fill="#fff" stroke="#333" stroke-width="1"/>
<circle cx="315.5" cy="969.9" r="2.6" fill="#fff" stroke="#333" stroke-width="1"/>
<circle cx="356.7" cy="883.3" r="2.6" fill="#fff" stroke="#333" stroke-width="1"/>
<circle cx="369" cy="802" r="2.6" fill="#fff" stroke="#333" stroke-width="1"/>
<text x="469" y="92.4" font-size="10.8" fill="#222" stroke="#fff" stroke-width="3.2" stroke-linejoin="round" paint-order="stroke">建始县</text>
<text x="676" y="110.1" font-size="10.8" fill="#222" stroke="#fff" stroke-width="3.2" stroke-linejoin="round" paint-order="stroke">长阳土家族</text>
<text x="698" y="122.7" font-size="10.8" fill="#222" stroke="#fff" stroke-width="3.2" stroke-linejoin="round" paint-order="stroke">自治县</text>
<text x="326" y="148.5" font-size="10.8" fill="#222" stroke="#fff" stroke-width="3.2" stroke-linejoin="round" paint-order="stroke">利川市</text>
<text x="387.4" y="167.7" font-size="13.6" fill="#222" stroke="#fff" stroke-width="3.2" stroke-linejoin="round" paint-order="stroke">恩施土家族</text>
<text x="387.4" y="184.0" font-size="13.6" fill="#222" stroke="#fff" stroke-width="3.2" stroke-linejoin="round" paint-order="stroke">苗族自治州</text>
<text x="406" y="215.1" font-size="10.8" fill="#222" stroke="#fff" stroke-width="3.2" stroke-linejoin="round" paint-order="stroke">宣恩县</text>
<text x="525.4" y="221.4" font-size="10.8" fill="#222" stroke="#fff" stroke-width="3.2" stroke-linejoin="round" paint-order="stroke">鹤峰县</text>
<text x="362.5" y="262.7" font-size="10.8" fill="#222" stroke="#fff" stroke-width="3.2" stroke-linejoin="round" paint-order="stroke">咸丰县</text>
<text x="295.5" y="286.7" font-size="10.8" fill="#222" stroke="#fff" stroke-width="3.2" stroke-linejoin="round" paint-order="stroke">黔江区</text>
<text x="418.5" y="300.7" font-size="10.8" fill="#222" stroke="#fff" stroke-width="3.2" stroke-linejoin="round" paint-order="stroke">龙山县</text>
<text x="549" y="311.1" font-size="10.8" fill="#222" stroke="#fff" stroke-width="3.2" stroke-linejoin="round" paint-order="stroke">桑植县</text>
<text x="619.5" y="320.5" font-size="10.8" fill="#222" stroke="#fff" stroke-width="3.2" stroke-linejoin="round" paint-order="stroke">武陵源区</text>
<text x="685.6" y="306.0" font-size="10.8" fill="#222" stroke="#fff" stroke-width="3.2" stroke-linejoin="round" paint-order="stroke">慈利县</text>
<text x="642" y="159.7" font-size="10.8" fill="#222" stroke="#fff" stroke-width="3.2" stroke-linejoin="round" paint-order="stroke">五峰土家族</text>
<text x="642" y="172.1" font-size="10.8" fill="#222" stroke="#fff" stroke-width="3.2" stroke-linejoin="round" paint-order="stroke">自治县</text>
<text x="607" y="363.5" font-size="13.6" fill="#222" stroke="#fff" stroke-width="3.2" stroke-linejoin="round" paint-order="stroke">张家界市</text>
<text x="491" y="382.2" font-size="10.8" fill="#222" stroke="#fff" stroke-width="3.2" stroke-linejoin="round" paint-order="stroke">永顺县</text>
<text x="783.7" y="132.1" font-size="10.8" fill="#222" stroke="#fff" stroke-width="3.2" stroke-linejoin="round" paint-order="stroke">宜都市</text>
<text x="839.5" y="124.1" font-size="10.8" fill="#222" stroke="#fff" stroke-width="3.2" stroke-linejoin="round" paint-order="stroke">枝江市</text>
<text x="927.8" y="141.6" font-size="13.6" fill="#222" stroke="#fff" stroke-width="3.2" stroke-linejoin="round" paint-order="stroke">荆州市</text>
<text x="1047.7" y="128.6" font-size="10.8" fill="#222" stroke="#fff" stroke-width="3.2" stroke-linejoin="round" paint-order="stroke">潜江市</text>
<text x="1142.6" y="136.1" font-size="10.8" fill="#222" stroke="#fff" stroke-width="3.2" stroke-linejoin="round" paint-order="stroke">仙桃市</text>
<text x="797.9" y="170.7" font-size="10.8" fill="#222" stroke="#fff" stroke-width="3.2" stroke-linejoin="round" paint-order="stroke">松滋市</text>
<text x="884.5" y="191.5" font-size="10.8" fill="#222" stroke="#fff" stroke-width="3.2" stroke-linejoin="round" paint-order="stroke">公安县</text>
<text x="960.5" y="194.5" font-size="10.8" fill="#222" stroke="#fff" stroke-width="3.2" stroke-linejoin="round" paint-order="stroke">江陵县</text>
<text x="1048.2" y="230.3" font-size="10.8" fill="#222" stroke="#fff" stroke-width="3.2" stroke-linejoin="round" paint-order="stroke">监利市</text>
<text x="960.5" y="252.6" font-size="10.8" fill="#222" stroke="#fff" stroke-width="3.2" stroke-linejoin="round" paint-order="stroke">石首市</text>
<text x="770.5" y="277.5" font-size="10.8" fill="#222" stroke="#fff" stroke-width="3.2" stroke-linejoin="round" paint-order="stroke">石门县</text>
<text x="862" y="274.1" font-size="10.8" fill="#222" stroke="#fff" stroke-width="3.2" stroke-linejoin="round" paint-order="stroke">津市市</text>
<text x="981" y="287.3" font-size="10.8" fill="#222" stroke="#fff" stroke-width="3.2" stroke-linejoin="round" paint-order="stroke">华容县</text>
<text x="914.5" y="308.7" font-size="10.8" fill="#222" stroke="#fff" stroke-width="3.2" stroke-linejoin="round" paint-order="stroke">安乡县</text>
<text x="799.4" y="314.6" font-size="10.8" fill="#222" stroke="#fff" stroke-width="3.2" stroke-linejoin="round" paint-order="stroke">临澧县</text>
<text x="829.6" y="378.9" font-size="13.6" fill="#222" stroke="#fff" stroke-width="3.2" stroke-linejoin="round" paint-order="stroke">常德市</text>
<text x="1094.5" y="321.0" font-size="13.6" fill="#222" stroke="#fff" stroke-width="3.2" stroke-linejoin="round" paint-order="stroke">岳阳市</text>
<text x="1086.5" y="357.0" font-size="10.8" fill="#222" stroke="#fff" stroke-width="3.2" stroke-linejoin="round" paint-order="stroke">岳阳县</text>
<text x="1152.5" y="233.3" font-size="10.8" fill="#222" stroke="#fff" stroke-width="3.2" stroke-linejoin="round" paint-order="stroke">洪湖市</text>
<text x="1222" y="146.4" font-size="10.8" fill="#222" stroke="#fff" stroke-width="3.2" stroke-linejoin="round" paint-order="stroke">汉南区</text>
<text x="1306" y="133.5" font-size="10.8" fill="#222" stroke="#fff" stroke-width="3.2" stroke-linejoin="round" paint-order="stroke">江夏区</text>
<text x="1236.7" y="207.4" font-size="10.8" fill="#222" stroke="#fff" stroke-width="3.2" stroke-linejoin="round" paint-order="stroke">嘉鱼县</text>
<text x="1307.5" y="231.9" font-size="13.6" fill="#222" stroke="#fff" stroke-width="3.2" stroke-linejoin="round" paint-order="stroke">咸宁市</text>
<text x="1229.3" y="251.4" font-size="10.8" fill="#222" stroke="#fff" stroke-width="3.2" stroke-linejoin="round" paint-order="stroke">赤壁市</text>
<text x="1335" y="273.6" font-size="10.8" fill="#222" stroke="#fff" stroke-width="3.2" stroke-linejoin="round" paint-order="stroke">通山县</text>
<text x="1234.8" y="293.4" font-size="10.8" fill="#222" stroke="#fff" stroke-width="3.2" stroke-linejoin="round" paint-order="stroke">崇阳县</text>
<text x="1214.5" y="339.7" font-size="10.8" fill="#222" stroke="#fff" stroke-width="3.2" stroke-linejoin="round" paint-order="stroke">通城县</text>
<text x="1347.6" y="379.1" font-size="10.8" fill="#222" stroke="#fff" stroke-width="3.2" stroke-linejoin="round" paint-order="stroke">修水县</text>
<text x="1171.7" y="437.4" font-size="10.8" fill="#222" stroke="#fff" stroke-width="3.2" stroke-linejoin="round" paint-order="stroke">平江县</text>
<text x="1315.7" y="470.5" font-size="10.8" fill="#222" stroke="#fff" stroke-width="3.2" stroke-linejoin="round" paint-order="stroke">铜鼓县</text>
<text x="1373" y="483.7" font-size="10.8" fill="#222" stroke="#fff" stroke-width="3.2" stroke-linejoin="round" paint-order="stroke">宜丰县</text>
<text x="1369" y="165.1" font-size="10.8" fill="#222" stroke="#fff" stroke-width="3.2" stroke-linejoin="round" paint-order="stroke">铁山区</text>
<text x="295.6" y="406.7" font-size="10.8" fill="#222" stroke="#fff" stroke-width="3.2" stroke-linejoin="round" paint-order="stroke">酉阳土家族</text>
<text x="295.6" y="419.9" font-size="10.8" fill="#222" stroke="#fff" stroke-width="3.2" stroke-linejoin="round" paint-order="stroke">苗族自治县</text>
<text x="430.7" y="424.1" font-size="13.6" fill="#222" stroke="#fff" stroke-width="3.2" stroke-linejoin="round" paint-order="stroke">湘西土家族</text>
<text x="430.7" y="440.5" font-size="13.6" fill="#222" stroke="#fff" stroke-width="3.2" stroke-linejoin="round" paint-order="stroke">苗族自治州</text>
<text x="247" y="456.9" font-size="10.8" fill="#222" stroke="#fff" stroke-width="3.2" stroke-linejoin="round" paint-order="stroke">沿河土家族</text>
<text x="247" y="469.7" font-size="10.8" fill="#222" stroke="#fff" stroke-width="3.2" stroke-linejoin="round" paint-order="stroke">自治县</text>
<text x="425.6" y="472.8" font-size="10.8" fill="#222" stroke="#fff" stroke-width="3.2" stroke-linejoin="round" paint-order="stroke">花垣县</text>
<text x="339.2" y="478.3" font-size="10.8" fill="#222" stroke="#fff" stroke-width="3.2" stroke-linejoin="round" paint-order="stroke">秀山土家族</text>
<text x="339.2" y="490.3" font-size="10.8" fill="#222" stroke="#fff" stroke-width="3.2" stroke-linejoin="round" paint-order="stroke">苗族自治</text>
<text x="591.4" y="483.3" font-size="10.8" fill="#222" stroke="#fff" stroke-width="3.2" stroke-linejoin="round" paint-order="stroke">沅陵县</text>
<text x="467.6" y="518.3" font-size="10.8" fill="#222" stroke="#fff" stroke-width="3.2" stroke-linejoin="round" paint-order="stroke">吉首市</text>
<text x="559.4" y="526.1" font-size="10.8" fill="#222" stroke="#fff" stroke-width="3.2" stroke-linejoin="round" paint-order="stroke">泸溪县</text>
<text x="375" y="532.0" font-size="10.8" fill="#222" stroke="#fff" stroke-width="3.2" stroke-linejoin="round" paint-order="stroke">松桃苗族</text>
<text x="375" y="544.4" font-size="10.8" fill="#222" stroke="#fff" stroke-width="3.2" stroke-linejoin="round" paint-order="stroke">自治县</text>
<text x="446.2" y="575.5" font-size="10.8" fill="#222" stroke="#fff" stroke-width="3.2" stroke-linejoin="round" paint-order="stroke">凤凰县</text>
<text x="552.4" y="563.9" font-size="10.8" fill="#222" stroke="#fff" stroke-width="3.2" stroke-linejoin="round" paint-order="stroke">辰溪县</text>
<text x="627.2" y="582.5" font-size="10.8" fill="#222" stroke="#fff" stroke-width="3.2" stroke-linejoin="round" paint-order="stroke">溆浦县</text>
<text x="267.2" y="620.3" font-size="10.8" fill="#222" stroke="#fff" stroke-width="3.2" stroke-linejoin="round" paint-order="stroke">江口县</text>
<text x="373" y="615.6" font-size="13.6" fill="#222" stroke="#fff" stroke-width="3.2" stroke-linejoin="round" paint-order="stroke">铜仁</text>
<text x="436.5" y="644.1" font-size="10.8" fill="#222" stroke="#fff" stroke-width="3.2" stroke-linejoin="round" paint-order="stroke">芷江侗族</text>
<text x="442.3" y="656.5" font-size="10.8" fill="#222" stroke="#fff" stroke-width="3.2" stroke-linejoin="round" paint-order="stroke">自治县</text>
<text x="520.2" y="647.1" font-size="13.6" fill="#222" stroke="#fff" stroke-width="3.2" stroke-linejoin="round" paint-order="stroke">怀化市</text>
<text x="369.2" y="677.1" font-size="10.8" fill="#222" stroke="#fff" stroke-width="3.2" stroke-linejoin="round" paint-order="stroke">新晃侗族</text>
<text x="369.2" y="690.3" font-size="10.8" fill="#222" stroke="#fff" stroke-width="3.2" stroke-linejoin="round" paint-order="stroke">自治县</text>
<text x="270.4" y="697.3" font-size="10.8" fill="#222" stroke="#fff" stroke-width="3.2" stroke-linejoin="round" paint-order="stroke">玉屏侗族</text>
<text x="280.9" y="710.1" font-size="10.8" fill="#222" stroke="#fff" stroke-width="3.2" stroke-linejoin="round" paint-order="stroke">自治县</text>
<text x="489.5" y="709.1" font-size="10.8" fill="#222" stroke="#fff" stroke-width="3.2" stroke-linejoin="round" paint-order="stroke">洪江市</text>
<text x="278" y="756.5" font-size="10.8" fill="#222" stroke="#fff" stroke-width="3.2" stroke-linejoin="round" paint-order="stroke">三穗县</text>
<text x="375.5" y="764.3" font-size="10.8" fill="#222" stroke="#fff" stroke-width="3.2" stroke-linejoin="round" paint-order="stroke">天柱县</text>
<text x="471.5" y="768.5" font-size="10.8" fill="#222" stroke="#fff" stroke-width="3.2" stroke-linejoin="round" paint-order="stroke">会同县</text>
<text x="749" y="401.6" font-size="10.8" fill="#6b7a3a" stroke="#fff" stroke-width="3.2" stroke-linejoin="round" paint-order="stroke">桃源县</text>
<text x="857.1" y="412.1" font-size="10.8" fill="#222" stroke="#fff" stroke-width="3.2" stroke-linejoin="round" paint-order="stroke">汉寿县</text>
<text x="947.4" y="411.3" font-size="10.8" fill="#222" stroke="#fff" stroke-width="3.2" stroke-linejoin="round" paint-order="stroke">沅江市</text>
<text x="1007.7" y="430.1" font-size="10.8" fill="#222" stroke="#fff" stroke-width="3.2" stroke-linejoin="round" paint-order="stroke">湘阴县</text>
<text x="954" y="466.2" font-size="13.6" fill="#222" stroke="#fff" stroke-width="3.2" stroke-linejoin="round" paint-order="stroke">益阳市</text>
<text x="870.7" y="471.6" font-size="10.8" fill="#222" stroke="#fff" stroke-width="3.2" stroke-linejoin="round" paint-order="stroke">桃江县</text>
<text x="739.7" y="497.7" font-size="10.8" fill="#222" stroke="#fff" stroke-width="3.2" stroke-linejoin="round" paint-order="stroke">安化县</text>
<text x="959" y="571.6" font-size="10.8" fill="#222" stroke="#fff" stroke-width="3.2" stroke-linejoin="round" paint-order="stroke">韶山市</text>
<text x="760.6" y="615.6" font-size="10.8" fill="#222" stroke="#fff" stroke-width="3.2" stroke-linejoin="round" paint-order="stroke">新化县</text>
<text x="884" y="620.6" font-size="13.6" fill="#222" stroke="#fff" stroke-width="3.2" stroke-linejoin="round" paint-order="stroke">娄底市</text>
<text x="980.5" y="614.5" font-size="10.8" fill="#222" stroke="#fff" stroke-width="3.2" stroke-linejoin="round" paint-order="stroke">湘乡市</text>
<text x="918.6" y="664.3" font-size="10.8" fill="#222" stroke="#fff" stroke-width="3.2" stroke-linejoin="round" paint-order="stroke">双峰县</text>
<text x="787.9" y="705.4" font-size="13.6" fill="#222" stroke="#fff" stroke-width="3.2" stroke-linejoin="round" paint-order="stroke">邵阳市</text>
<text x="707.4" y="726.5" font-size="10.8" fill="#222" stroke="#fff" stroke-width="3.2" stroke-linejoin="round" paint-order="stroke">隆回县</text>
<text x="730.7" y="760.4" font-size="10.8" fill="#222" stroke="#fff" stroke-width="3.2" stroke-linejoin="round" paint-order="stroke">邵阳县</text>
<text x="976.6" y="705.9" font-size="10.8" fill="#222" stroke="#fff" stroke-width="3.2" stroke-linejoin="round" paint-order="stroke">南岳区</text>
<text x="1041.5" y="706.0" font-size="10.8" fill="#222" stroke="#fff" stroke-width="3.2" stroke-linejoin="round" paint-order="stroke">衡山县</text>
<text x="879.3" y="795.4" font-size="10.8" fill="#222" stroke="#fff" stroke-width="3.2" stroke-linejoin="round" paint-order="stroke">祁东县</text>
<text x="987.5" y="768.5" font-size="13.6" fill="#222" stroke="#fff" stroke-width="3.2" stroke-linejoin="round" paint-order="stroke">衡阳市</text>
<text x="1029.7" y="511.9" font-size="13.6" fill="#222" stroke="#fff" stroke-width="3.2" stroke-linejoin="round" paint-order="stroke">长沙市</text>
<text x="1182.4" y="535.4" font-size="10.8" fill="#222" stroke="#fff" stroke-width="3.2" stroke-linejoin="round" paint-order="stroke">浏阳市</text>
<text x="1328.3" y="546.4" font-size="10.8" fill="#222" stroke="#fff" stroke-width="3.2" stroke-linejoin="round" paint-order="stroke">万载县</text>
<text x="1210.3" y="587.3" font-size="10.8" fill="#222" stroke="#fff" stroke-width="3.2" stroke-linejoin="round" paint-order="stroke">上栗县</text>
<text x="1324" y="600.3" font-size="13.6" fill="#222" stroke="#fff" stroke-width="3.2" stroke-linejoin="round" paint-order="stroke">宜春市</text>
<text x="1221.9" y="635.6" font-size="13.6" fill="#222" stroke="#fff" stroke-width="3.2" stroke-linejoin="round" paint-order="stroke">萍乡市</text>
<text x="1160" y="630.9" font-size="10.8" fill="#222" stroke="#fff" stroke-width="3.2" stroke-linejoin="round" paint-order="stroke">醴陵市</text>
<text x="1075.6" y="631.5" font-size="10.8" fill="#222" stroke="#fff" stroke-width="3.2" stroke-linejoin="round" paint-order="stroke">渌口区</text>
<text x="1360.4" y="676.3" font-size="10.8" fill="#222" stroke="#fff" stroke-width="3.2" stroke-linejoin="round" paint-order="stroke">安福县</text>
<text x="1240.2" y="725.0" font-size="10.8" fill="#222" stroke="#fff" stroke-width="3.2" stroke-linejoin="round" paint-order="stroke">莲花县</text>
<text x="1056.4" y="744.3" font-size="10.8" fill="#222" stroke="#fff" stroke-width="3.2" stroke-linejoin="round" paint-order="stroke">衡东县</text>
<text x="1128.1" y="747.2" font-size="10.8" fill="#222" stroke="#fff" stroke-width="3.2" stroke-linejoin="round" paint-order="stroke">攸县</text>
<text x="1291.3" y="757.6" font-size="10.8" fill="#222" stroke="#fff" stroke-width="3.2" stroke-linejoin="round" paint-order="stroke">永新县</text>
<text x="1300.2" y="793.5" font-size="10.8" fill="#222" stroke="#fff" stroke-width="3.2" stroke-linejoin="round" paint-order="stroke">井冈山市</text>
<text x="986.3" y="806.6" font-size="10.8" fill="#222" stroke="#fff" stroke-width="3.2" stroke-linejoin="round" paint-order="stroke">衡南县</text>
<text x="1114.4" y="800.4" font-size="10.8" fill="#222" stroke="#fff" stroke-width="3.2" stroke-linejoin="round" paint-order="stroke">安仁县</text>
<text x="1206.2" y="840.5" font-size="10.8" fill="#222" stroke="#fff" stroke-width="3.2" stroke-linejoin="round" paint-order="stroke">炎陵县</text>
<text x="1390.7" y="846.5" font-size="10.8" fill="#222" stroke="#fff" stroke-width="3.2" stroke-linejoin="round" paint-order="stroke">万安县</text>
<text x="956" y="853.3" font-size="10.8" fill="#222" stroke="#fff" stroke-width="3.2" stroke-linejoin="round" paint-order="stroke">常宁市</text>
<text x="1050" y="853.3" font-size="10.8" fill="#222" stroke="#fff" stroke-width="3.2" stroke-linejoin="round" paint-order="stroke">耒阳市</text>
<text x="1301" y="870.9" font-size="10.8" fill="#222" stroke="#fff" stroke-width="3.2" stroke-linejoin="round" paint-order="stroke">遂川县</text>
<text x="1086.3" y="906.8" font-size="10.8" fill="#222" stroke="#fff" stroke-width="3.2" stroke-linejoin="round" paint-order="stroke">永兴县</text>
<text x="1244" y="916.1" font-size="10.8" fill="#222" stroke="#fff" stroke-width="3.2" stroke-linejoin="round" paint-order="stroke">桂东县</text>
<text x="919.9" y="947.5" font-size="10.8" fill="#222" stroke="#fff" stroke-width="3.2" stroke-linejoin="round" paint-order="stroke">新田县</text>
<text x="996.3" y="964.6" font-size="10.8" fill="#222" stroke="#fff" stroke-width="3.2" stroke-linejoin="round" paint-order="stroke">桂阳县</text>
<text x="1078" y="973.2" font-size="13.6" fill="#222" stroke="#fff" stroke-width="3.2" stroke-linejoin="round" paint-order="stroke">郴州市</text>
<text x="1303.4" y="987.6" font-size="10.8" fill="#222" stroke="#fff" stroke-width="3.2" stroke-linejoin="round" paint-order="stroke">崇义县</text>
<text x="1366.2" y="1002.0" font-size="10.8" fill="#222" stroke="#fff" stroke-width="3.2" stroke-linejoin="round" paint-order="stroke">南康区</text>
<text x="1313.4" y="1038.4" font-size="10.8" fill="#222" stroke="#fff" stroke-width="3.2" stroke-linejoin="round" paint-order="stroke">大余县</text>
<text x="1056.2" y="1039.1" font-size="10.8" fill="#222" stroke="#fff" stroke-width="3.2" stroke-linejoin="round" paint-order="stroke">宜章县</text>
<text x="919.1" y="1043.3" font-size="10.8" fill="#222" stroke="#fff" stroke-width="3.2" stroke-linejoin="round" paint-order="stroke">蓝山县</text>
<text x="1418.8" y="961.5" font-size="13.6" fill="#222" stroke="#fff" stroke-width="3.2" stroke-linejoin="round" paint-order="stroke">赣州市</text>
<text x="1575.4" y="951.4" font-size="10.8" fill="#222" stroke="#fff" stroke-width="3.2" stroke-linejoin="round" paint-order="stroke">瑞金市</text>
<text x="1677.3" y="960.4" font-size="10.8" fill="#222" stroke="#fff" stroke-width="3.2" stroke-linejoin="round" paint-order="stroke">长汀县</text>
<text x="1505.7" y="938.8" font-size="10.8" fill="#222" stroke="#fff" stroke-width="3.2" stroke-linejoin="round" paint-order="stroke">于都县</text>
<text x="1860.2" y="940.4" font-size="10.8" fill="#222" stroke="#fff" stroke-width="3.2" stroke-linejoin="round" paint-order="stroke">永安市</text>
<text x="1748.7" y="981.9" font-size="10.8" fill="#222" stroke="#fff" stroke-width="3.2" stroke-linejoin="round" paint-order="stroke">连城县</text>
<text x="1572.1" y="1001.9" font-size="10.8" fill="#222" stroke="#fff" stroke-width="3.2" stroke-linejoin="round" paint-order="stroke">会昌县</text>
<text x="1415.4" y="1040.7" font-size="10.8" fill="#222" stroke="#fff" stroke-width="3.2" stroke-linejoin="round" paint-order="stroke">信丰县</text>
<text x="373" y="806.1" font-size="10.8" fill="#222" stroke="#fff" stroke-width="3.2" stroke-linejoin="round" paint-order="stroke">锦屏县</text>
<text x="464" y="818.8" font-size="10.8" fill="#222" stroke="#fff" stroke-width="3.2" stroke-linejoin="round" paint-order="stroke">靖州苗族</text>
<text x="464" y="832.4" font-size="10.8" fill="#222" stroke="#fff" stroke-width="3.2" stroke-linejoin="round" paint-order="stroke">侗族自治县</text>
<text x="547.7" y="823.4" font-size="10.8" fill="#222" stroke="#fff" stroke-width="3.2" stroke-linejoin="round" paint-order="stroke">绥宁县</text>
<text x="634.5" y="797.7" font-size="10.8" fill="#222" stroke="#fff" stroke-width="3.2" stroke-linejoin="round" paint-order="stroke">武冈市</text>
<text x="552.3" y="870.4" font-size="10.8" fill="#222" stroke="#fff" stroke-width="3.2" stroke-linejoin="round" paint-order="stroke">城步苗族</text>
<text x="557.7" y="883.1" font-size="10.8" fill="#222" stroke="#fff" stroke-width="3.2" stroke-linejoin="round" paint-order="stroke">自治县</text>
<text x="480.4" y="895.4" font-size="10.8" fill="#222" stroke="#fff" stroke-width="3.2" stroke-linejoin="round" paint-order="stroke">通道侗族</text>
<text x="480.4" y="908.1" font-size="10.8" fill="#222" stroke="#fff" stroke-width="3.2" stroke-linejoin="round" paint-order="stroke">自治县</text>
<text x="637.8" y="922.5" font-size="10.8" fill="#222" stroke="#fff" stroke-width="3.2" stroke-linejoin="round" paint-order="stroke">资源县</text>
<text x="714.2" y="942.3" font-size="10.8" fill="#222" stroke="#fff" stroke-width="3.2" stroke-linejoin="round" paint-order="stroke">全州县</text>
<text x="447.8" y="963.2" font-size="10.8" fill="#222" stroke="#fff" stroke-width="3.2" stroke-linejoin="round" paint-order="stroke">三江侗族</text>
<text x="447.8" y="976.2" font-size="10.8" fill="#222" stroke="#fff" stroke-width="3.2" stroke-linejoin="round" paint-order="stroke">自治县</text>
<text x="521.7" y="960.5" font-size="10.8" fill="#222" stroke="#fff" stroke-width="3.2" stroke-linejoin="round" paint-order="stroke">龙胜各族</text>
<text x="521.7" y="973.5" font-size="10.8" fill="#222" stroke="#fff" stroke-width="3.2" stroke-linejoin="round" paint-order="stroke">自治县</text>
<text x="641.4" y="1000.4" font-size="10.8" fill="#222" stroke="#fff" stroke-width="3.2" stroke-linejoin="round" paint-order="stroke">兴安县</text>
<text x="558.3" y="1027.0" font-size="10.8" fill="#222" stroke="#fff" stroke-width="3.2" stroke-linejoin="round" paint-order="stroke">灵川县</text>
<text x="730.2" y="1022.4" font-size="10.8" fill="#222" stroke="#fff" stroke-width="3.2" stroke-linejoin="round" paint-order="stroke">灌阳县</text>
<text x="810.5" y="1015.3" font-size="10.8" fill="#222" stroke="#fff" stroke-width="3.2" stroke-linejoin="round" paint-order="stroke">道县</text>
<text x="873.5" y="1007.1" font-size="10.8" fill="#222" stroke="#fff" stroke-width="3.2" stroke-linejoin="round" paint-order="stroke">宁远县</text>
<text x="821.4" y="936.6" font-size="10.8" fill="#222" stroke="#fff" stroke-width="3.2" stroke-linejoin="round" paint-order="stroke">双牌县</text>
<text x="813.4" y="814.0" font-size="10.8" fill="#222" stroke="#fff" stroke-width="3.2" stroke-linejoin="round" paint-order="stroke">祁阳市</text>
<text x="818" y="855.2" font-size="13.6" fill="#222" stroke="#fff" stroke-width="3.2" stroke-linejoin="round" paint-order="stroke">永州市</text>
<text x="819.6" y="889.9" font-size="10.8" fill="#222" stroke="#fff" stroke-width="3.2" stroke-linejoin="round" paint-order="stroke">零陵区</text>
<text x="738.8" y="848.4" font-size="10.8" fill="#222" stroke="#fff" stroke-width="3.2" stroke-linejoin="round" paint-order="stroke">东安县</text>
<text x="675.2" y="850.1" font-size="10.8" fill="#222" stroke="#fff" stroke-width="3.2" stroke-linejoin="round" paint-order="stroke">新宁县</text>
<text x="240" y="817.6" font-size="13.6" fill="#222" stroke="#fff" stroke-width="3.2" stroke-linejoin="round" paint-order="stroke">黔东南苗族</text>
<text x="240" y="833.2" font-size="13.6" fill="#222" stroke="#fff" stroke-width="3.2" stroke-linejoin="round" paint-order="stroke">侗族自治州</text>
<text x="250.3" y="942.2" font-size="10.8" fill="#222" stroke="#fff" stroke-width="3.2" stroke-linejoin="round" paint-order="stroke">榕江县</text>
<text x="320.5" y="974.0" font-size="10.8" fill="#222" stroke="#fff" stroke-width="3.2" stroke-linejoin="round" paint-order="stroke">从江县</text>
<text x="361.7" y="887.4" font-size="10.8" fill="#222" stroke="#fff" stroke-width="3.2" stroke-linejoin="round" paint-order="stroke">黎平县</text>
<text x="1078" y="86.1" font-size="10.8" fill="#222" stroke="#fff" stroke-width="3.2" stroke-linejoin="round" paint-order="stroke">天门市</text>
<text x="1196" y="86.1" font-size="10.8" fill="#222" stroke="#fff" stroke-width="3.2" stroke-linejoin="round" paint-order="stroke">汉川市</text>
<text x="1406" y="86.1" font-size="10.8" fill="#222" stroke="#fff" stroke-width="3.2" stroke-linejoin="round" paint-order="stroke">团风县</text>
<text x="1717" y="86.1" font-size="10.8" fill="#222" stroke="#fff" stroke-width="3.2" stroke-linejoin="round" paint-order="stroke">潜山市</text>
<text x="1880" y="85.1" font-size="10.8" fill="#222" stroke="#fff" stroke-width="3.2" stroke-linejoin="round" paint-order="stroke">九江市</text>
<text x="1078" y="418.8" font-size="10.8" fill="#222" stroke="#fff" stroke-width="3.2" stroke-linejoin="round" paint-order="stroke">汨罗市</text>
<defs><g id="mk"><path d="M0 15.5 C-2.5 11 -10.5 7 -10.5 0 A10.5 10.5 0 1 1 10.5 0 C10.5 7 2.5 11 0 15.5Z" fill="none" stroke="#fff" stroke-opacity="0.55" stroke-width="3.5"/><path d="M0 15.5 C-2.5 11 -10.5 7 -10.5 0 A10.5 10.5 0 1 1 10.5 0 C10.5 7 2.5 11 0 15.5Z" fill="#b5194e"/></g></defs>
<g transform="translate(659.2,225.4)"><use href="#mk"/><path d="M6 -5.5 C-1 -7.5 -7 -3.5 -6.5 0.5 C-6 4.5 0 6 5.5 4 M-1.5 -0.5 H5" fill="none" stroke="#fff" stroke-width="1"/><circle cx="-1.5" cy="-0.5" r="1.3" fill="#fff"/></g>
<g transform="translate(717.6,221.0)"><use href="#mk"/><path d="M-4 -6 C-7 -1 -6 5 -1 5 C3 5 6 2 7 -1 M-1.5 1.5 L1 -1" fill="none" stroke="#fff" stroke-width="1"/><circle cx="-1" cy="1.5" r="1.2" fill="#fff"/></g>
<g transform="translate(652.3,265.4)"><use href="#mk"/><path d="M-6 4 C-7 -4 -4 -7 0 -7 C4 -7 7 -4 6 4 M0 6 V-5 M-2 -3 L0 -5 L2 -3 M-6 4 L-4 2 M6 4 L4 2" fill="none" stroke="#fff" stroke-width="1"/></g>
<g transform="translate(452.1,312.9)"><use href="#mk"/><path d="M-6.5 2.5 L5.5 -6.5 L7 3.5 M-5.5 1 L2 -4.5 M-2.5 2.5 L1.5 -0.5 M-0.5 4 L3 1.5" fill="none" stroke="#fff" stroke-width="1"/></g>
<g transform="translate(456.6,311.4)"><use href="#mk"/><path d="M6 -5.5 C-1 -7.5 -7 -3.5 -6.5 0.5 C-6 4.5 0 6 5.5 4 M-1.5 -0.5 H5" fill="none" stroke="#fff" stroke-width="1"/><circle cx="-1.5" cy="-0.5" r="1.3" fill="#fff"/></g>
<g transform="translate(416.5,348.5)"><use href="#mk"/><path d="M-4 -6 C-7 -1 -6 5 -1 5 C3 5 6 2 7 -1 M-1.5 1.5 L1 -1" fill="none" stroke="#fff" stroke-width="1"/><circle cx="-1" cy="1.5" r="1.2" fill="#fff"/></g>
<g transform="translate(402.6,380.2)"><use href="#mk"/><path d="M-6 4 C-7 -4 -4 -7 0 -7 C4 -7 7 -4 6 4 M0 6 V-5 M-2 -3 L0 -5 L2 -3 M-6 4 L-4 2 M6 4 L4 2" fill="none" stroke="#fff" stroke-width="1"/></g>
<g transform="translate(389.8,394.4)"><use href="#mk"/><path d="M-6.5 2.5 L5.5 -6.5 L7 3.5 M-5.5 1 L2 -4.5 M-2.5 2.5 L1.5 -0.5 M-0.5 4 L3 1.5" fill="none" stroke="#fff" stroke-width="1"/></g>
<g transform="translate(498.1,387.0)"><use href="#mk"/><path d="M6 -5.5 C-1 -7.5 -7 -3.5 -6.5 0.5 C-6 4.5 0 6 5.5 4 M-1.5 -0.5 H5" fill="none" stroke="#fff" stroke-width="1"/><circle cx="-1.5" cy="-0.5" r="1.3" fill="#fff"/></g>
<g transform="translate(772.7,228.3)"><use href="#mk"/><path d="M-4 -6 C-7 -1 -6 5 -1 5 C3 5 6 2 7 -1 M-1.5 1.5 L1 -1" fill="none" stroke="#fff" stroke-width="1"/><circle cx="-1" cy="1.5" r="1.2" fill="#fff"/></g>
<g transform="translate(777.7,237.2)"><use href="#mk"/><path d="M-6 4 C-7 -4 -4 -7 0 -7 C4 -7 7 -4 6 4 M0 6 V-5 M-2 -3 L0 -5 L2 -3 M-6 4 L-4 2 M6 4 L4 2" fill="none" stroke="#fff" stroke-width="1"/></g>
<g transform="translate(728.8,283.2)"><use href="#mk"/><path d="M-6.5 2.5 L5.5 -6.5 L7 3.5 M-5.5 1 L2 -4.5 M-2.5 2.5 L1.5 -0.5 M-0.5 4 L3 1.5" fill="none" stroke="#fff" stroke-width="1"/></g>
<g transform="translate(857.8,272.8)"><use href="#mk"/><path d="M6 -5.5 C-1 -7.5 -7 -3.5 -6.5 0.5 C-6 4.5 0 6 5.5 4 M-1.5 -0.5 H5" fill="none" stroke="#fff" stroke-width="1"/><circle cx="-1.5" cy="-0.5" r="1.3" fill="#fff"/></g>
<g transform="translate(770.6,363.3)"><use href="#mk"/><path d="M-4 -6 C-7 -1 -6 5 -1 5 C3 5 6 2 7 -1 M-1.5 1.5 L1 -1" fill="none" stroke="#fff" stroke-width="1"/><circle cx="-1" cy="1.5" r="1.2" fill="#fff"/></g>
<g transform="translate(1083.6,315.8)"><use href="#mk"/><path d="M-6 4 C-7 -4 -4 -7 0 -7 C4 -7 7 -4 6 4 M0 6 V-5 M-2 -3 L0 -5 L2 -3 M-6 4 L-4 2 M6 4 L4 2" fill="none" stroke="#fff" stroke-width="1"/></g>
<g transform="translate(1153.0,286.2)"><use href="#mk"/><path d="M-6.5 2.5 L5.5 -6.5 L7 3.5 M-5.5 1 L2 -4.5 M-2.5 2.5 L1.5 -0.5 M-0.5 4 L3 1.5" fill="none" stroke="#fff" stroke-width="1"/></g>
<g transform="translate(1159.8,335.1)"><use href="#mk"/><path d="M6 -5.5 C-1 -7.5 -7 -3.5 -6.5 0.5 C-6 4.5 0 6 5.5 4 M-1.5 -0.5 H5" fill="none" stroke="#fff" stroke-width="1"/><circle cx="-1.5" cy="-0.5" r="1.3" fill="#fff"/></g>
<g transform="translate(1199.0,305.7)"><use href="#mk"/><path d="M-4 -6 C-7 -1 -6 5 -1 5 C3 5 6 2 7 -1 M-1.5 1.5 L1 -1" fill="none" stroke="#fff" stroke-width="1"/><circle cx="-1" cy="1.5" r="1.2" fill="#fff"/></g>
<g transform="translate(1183.4,350.4)"><use href="#mk"/><path d="M-6 4 C-7 -4 -4 -7 0 -7 C4 -7 7 -4 6 4 M0 6 V-5 M-2 -3 L0 -5 L2 -3 M-6 4 L-4 2 M6 4 L4 2" fill="none" stroke="#fff" stroke-width="1"/></g>
<g transform="translate(1177.6,403.7)"><use href="#mk"/><path d="M-6.5 2.5 L5.5 -6.5 L7 3.5 M-5.5 1 L2 -4.5 M-2.5 2.5 L1.5 -0.5 M-0.5 4 L3 1.5" fill="none" stroke="#fff" stroke-width="1"/></g>
<g transform="translate(1190.0,443.8)"><use href="#mk"/><path d="M6 -5.5 C-1 -7.5 -7 -3.5 -6.5 0.5 C-6 4.5 0 6 5.5 4 M-1.5 -0.5 H5" fill="none" stroke="#fff" stroke-width="1"/><circle cx="-1.5" cy="-0.5" r="1.3" fill="#fff"/></g>
<g transform="translate(1241.4,447.7)"><use href="#mk"/><path d="M-4 -6 C-7 -1 -6 5 -1 5 C3 5 6 2 7 -1 M-1.5 1.5 L1 -1" fill="none" stroke="#fff" stroke-width="1"/><circle cx="-1" cy="1.5" r="1.2" fill="#fff"/></g>
<g transform="translate(403.4,383.9)"><use href="#mk"/><path d="M-6 4 C-7 -4 -4 -7 0 -7 C4 -7 7 -4 6 4 M0 6 V-5 M-2 -3 L0 -5 L2 -3 M-6 4 L-4 2 M6 4 L4 2" fill="none" stroke="#fff" stroke-width="1"/></g>
<g transform="translate(445.4,409.2)"><use href="#mk"/><path d="M-6.5 2.5 L5.5 -6.5 L7 3.5 M-5.5 1 L2 -4.5 M-2.5 2.5 L1.5 -0.5 M-0.5 4 L3 1.5" fill="none" stroke="#fff" stroke-width="1"/></g>
<g transform="translate(498.8,387.8)"><use href="#mk"/><path d="M6 -5.5 C-1 -7.5 -7 -3.5 -6.5 0.5 C-6 4.5 0 6 5.5 4 M-1.5 -0.5 H5" fill="none" stroke="#fff" stroke-width="1"/><circle cx="-1.5" cy="-0.5" r="1.3" fill="#fff"/></g>
<g transform="translate(543.5,418.9)"><use href="#mk"/><path d="M-4 -6 C-7 -1 -6 5 -1 5 C3 5 6 2 7 -1 M-1.5 1.5 L1 -1" fill="none" stroke="#fff" stroke-width="1"/><circle cx="-1" cy="1.5" r="1.2" fill="#fff"/></g>
<g transform="translate(389.8,490.9)"><use href="#mk"/><path d="M-6 4 C-7 -4 -4 -7 0 -7 C4 -7 7 -4 6 4 M0 6 V-5 M-2 -3 L0 -5 L2 -3 M-6 4 L-4 2 M6 4 L4 2" fill="none" stroke="#fff" stroke-width="1"/></g>
<g transform="translate(478.1,485.0)"><use href="#mk"/><path d="M-6.5 2.5 L5.5 -6.5 L7 3.5 M-5.5 1 L2 -4.5 M-2.5 2.5 L1.5 -0.5 M-0.5 4 L3 1.5" fill="none" stroke="#fff" stroke-width="1"/></g>
<g transform="translate(505.8,483.1)"><use href="#mk"/><path d="M6 -5.5 C-1 -7.5 -7 -3.5 -6.5 0.5 C-6 4.5 0 6 5.5 4 M-1.5 -0.5 H5" fill="none" stroke="#fff" stroke-width="1"/><circle cx="-1.5" cy="-0.5" r="1.3" fill="#fff"/></g>
<g transform="translate(461.8,522.0)"><use href="#mk"/><path d="M-4 -6 C-7 -1 -6 5 -1 5 C3 5 6 2 7 -1 M-1.5 1.5 L1 -1" fill="none" stroke="#fff" stroke-width="1"/><circle cx="-1" cy="1.5" r="1.2" fill="#fff"/></g>
<g transform="translate(469.6,560.9)"><use href="#mk"/><path d="M-6 4 C-7 -4 -4 -7 0 -7 C4 -7 7 -4 6 4 M0 6 V-5 M-2 -3 L0 -5 L2 -3 M-6 4 L-4 2 M6 4 L4 2" fill="none" stroke="#fff" stroke-width="1"/></g>
<g transform="translate(433.8,578.4)"><use href="#mk"/><path d="M-6.5 2.5 L5.5 -6.5 L7 3.5 M-5.5 1 L2 -4.5 M-2.5 2.5 L1.5 -0.5 M-0.5 4 L3 1.5" fill="none" stroke="#fff" stroke-width="1"/></g>
<g transform="translate(566.9,557.0)"><use href="#mk"/><path d="M6 -5.5 C-1 -7.5 -7 -3.5 -6.5 0.5 C-6 4.5 0 6 5.5 4 M-1.5 -0.5 H5" fill="none" stroke="#fff" stroke-width="1"/><circle cx="-1.5" cy="-0.5" r="1.3" fill="#fff"/></g>
<g transform="translate(410.0,613.5)"><use href="#mk"/><path d="M-4 -6 C-7 -1 -6 5 -1 5 C3 5 6 2 7 -1 M-1.5 1.5 L1 -1" fill="none" stroke="#fff" stroke-width="1"/><circle cx="-1" cy="1.5" r="1.2" fill="#fff"/></g>
<g transform="translate(571.5,664.0)"><use href="#mk"/><path d="M-6 4 C-7 -4 -4 -7 0 -7 C4 -7 7 -4 6 4 M0 6 V-5 M-2 -3 L0 -5 L2 -3 M-6 4 L-4 2 M6 4 L4 2" fill="none" stroke="#fff" stroke-width="1"/></g>
<g transform="translate(602.6,669.9)"><use href="#mk"/><path d="M-6.5 2.5 L5.5 -6.5 L7 3.5 M-5.5 1 L2 -4.5 M-2.5 2.5 L1.5 -0.5 M-0.5 4 L3 1.5" fill="none" stroke="#fff" stroke-width="1"/></g>
<g transform="translate(515.5,749.6)"><use href="#mk"/><path d="M6 -5.5 C-1 -7.5 -7 -3.5 -6.5 0.5 C-6 4.5 0 6 5.5 4 M-1.5 -0.5 H5" fill="none" stroke="#fff" stroke-width="1"/><circle cx="-1.5" cy="-0.5" r="1.3" fill="#fff"/></g>
<g transform="translate(635.0,727.5)"><use href="#mk"/><path d="M-4 -6 C-7 -1 -6 5 -1 5 C3 5 6 2 7 -1 M-1.5 1.5 L1 -1" fill="none" stroke="#fff" stroke-width="1"/><circle cx="-1" cy="1.5" r="1.2" fill="#fff"/></g>
<g transform="translate(629.1,745.8)"><use href="#mk"/><path d="M-6 4 C-7 -4 -4 -7 0 -7 C4 -7 7 -4 6 4 M0 6 V-5 M-2 -3 L0 -5 L2 -3 M-6 4 L-4 2 M6 4 L4 2" fill="none" stroke="#fff" stroke-width="1"/></g>
<g transform="translate(570.7,784.7)"><use href="#mk"/><path d="M-6.5 2.5 L5.5 -6.5 L7 3.5 M-5.5 1 L2 -4.5 M-2.5 2.5 L1.5 -0.5 M-0.5 4 L3 1.5" fill="none" stroke="#fff" stroke-width="1"/></g>
<g transform="translate(598.0,790.5)"><use href="#mk"/><path d="M6 -5.5 C-1 -7.5 -7 -3.5 -6.5 0.5 C-6 4.5 0 6 5.5 4 M-1.5 -0.5 H5" fill="none" stroke="#fff" stroke-width="1"/><circle cx="-1.5" cy="-0.5" r="1.3" fill="#fff"/></g>
<g transform="translate(946.6,465.6)"><use href="#mk"/><path d="M-4 -6 C-7 -1 -6 5 -1 5 C3 5 6 2 7 -1 M-1.5 1.5 L1 -1" fill="none" stroke="#fff" stroke-width="1"/><circle cx="-1" cy="1.5" r="1.2" fill="#fff"/></g>
<g transform="translate(933.8,512.3)"><use href="#mk"/><path d="M-6 4 C-7 -4 -4 -7 0 -7 C4 -7 7 -4 6 4 M0 6 V-5 M-2 -3 L0 -5 L2 -3 M-6 4 L-4 2 M6 4 L4 2" fill="none" stroke="#fff" stroke-width="1"/></g>
<g transform="translate(931.0,517.0)"><use href="#mk"/><path d="M-6.5 2.5 L5.5 -6.5 L7 3.5 M-5.5 1 L2 -4.5 M-2.5 2.5 L1.5 -0.5 M-0.5 4 L3 1.5" fill="none" stroke="#fff" stroke-width="1"/></g>
<g transform="translate(963.0,508.4)"><use href="#mk"/><path d="M6 -5.5 C-1 -7.5 -7 -3.5 -6.5 0.5 C-6 4.5 0 6 5.5 4 M-1.5 -0.5 H5" fill="none" stroke="#fff" stroke-width="1"/><circle cx="-1.5" cy="-0.5" r="1.3" fill="#fff"/></g>
<g transform="translate(951.3,529.8)"><use href="#mk"/><path d="M-4 -6 C-7 -1 -6 5 -1 5 C3 5 6 2 7 -1 M-1.5 1.5 L1 -1" fill="none" stroke="#fff" stroke-width="1"/><circle cx="-1" cy="1.5" r="1.2" fill="#fff"/></g>
<g transform="translate(745.8,588.2)"><use href="#mk"/><path d="M-6 4 C-7 -4 -4 -7 0 -7 C4 -7 7 -4 6 4 M0 6 V-5 M-2 -3 L0 -5 L2 -3 M-6 4 L-4 2 M6 4 L4 2" fill="none" stroke="#fff" stroke-width="1"/></g>
<g transform="translate(745.0,605.0)"><use href="#mk"/><path d="M-6.5 2.5 L5.5 -6.5 L7 3.5 M-5.5 1 L2 -4.5 M-2.5 2.5 L1.5 -0.5 M-0.5 4 L3 1.5" fill="none" stroke="#fff" stroke-width="1"/></g>
<g transform="translate(747.4,616.6)"><use href="#mk"/><path d="M6 -5.5 C-1 -7.5 -7 -3.5 -6.5 0.5 C-6 4.5 0 6 5.5 4 M-1.5 -0.5 H5" fill="none" stroke="#fff" stroke-width="1"/><circle cx="-1.5" cy="-0.5" r="1.3" fill="#fff"/></g>
<g transform="translate(775.4,624.4)"><use href="#mk"/><path d="M-4 -6 C-7 -1 -6 5 -1 5 C3 5 6 2 7 -1 M-1.5 1.5 L1 -1" fill="none" stroke="#fff" stroke-width="1"/><circle cx="-1" cy="1.5" r="1.2" fill="#fff"/></g>
<g transform="translate(765.3,642.6)"><use href="#mk"/><path d="M-6 4 C-7 -4 -4 -7 0 -7 C4 -7 7 -4 6 4 M0 6 V-5 M-2 -3 L0 -5 L2 -3 M-6 4 L-4 2 M6 4 L4 2" fill="none" stroke="#fff" stroke-width="1"/></g>
<g transform="translate(771.5,662.0)"><use href="#mk"/><path d="M-6.5 2.5 L5.5 -6.5 L7 3.5 M-5.5 1 L2 -4.5 M-2.5 2.5 L1.5 -0.5 M-0.5 4 L3 1.5" fill="none" stroke="#fff" stroke-width="1"/></g>
<g transform="translate(797.6,603.7)"><use href="#mk"/><path d="M6 -5.5 C-1 -7.5 -7 -3.5 -6.5 0.5 C-6 4.5 0 6 5.5 4 M-1.5 -0.5 H5" fill="none" stroke="#fff" stroke-width="1"/><circle cx="-1.5" cy="-0.5" r="1.3" fill="#fff"/></g>
<g transform="translate(801.5,609.6)"><use href="#mk"/><path d="M-4 -6 C-7 -1 -6 5 -1 5 C3 5 6 2 7 -1 M-1.5 1.5 L1 -1" fill="none" stroke="#fff" stroke-width="1"/><circle cx="-1" cy="1.5" r="1.2" fill="#fff"/></g>
<g transform="translate(803.4,615.4)"><use href="#mk"/><path d="M-6 4 C-7 -4 -4 -7 0 -7 C4 -7 7 -4 6 4 M0 6 V-5 M-2 -3 L0 -5 L2 -3 M-6 4 L-4 2 M6 4 L4 2" fill="none" stroke="#fff" stroke-width="1"/></g>
<g transform="translate(794.9,629.0)"><use href="#mk"/><path d="M-6.5 2.5 L5.5 -6.5 L7 3.5 M-5.5 1 L2 -4.5 M-2.5 2.5 L1.5 -0.5 M-0.5 4 L3 1.5" fill="none" stroke="#fff" stroke-width="1"/></g>
<g transform="translate(800.3,636.0)"><use href="#mk"/><path d="M6 -5.5 C-1 -7.5 -7 -3.5 -6.5 0.5 C-6 4.5 0 6 5.5 4 M-1.5 -0.5 H5" fill="none" stroke="#fff" stroke-width="1"/><circle cx="-1.5" cy="-0.5" r="1.3" fill="#fff"/></g>
<g transform="translate(815.1,629.0)"><use href="#mk"/><path d="M-4 -6 C-7 -1 -6 5 -1 5 C3 5 6 2 7 -1 M-1.5 1.5 L1 -1" fill="none" stroke="#fff" stroke-width="1"/><circle cx="-1" cy="1.5" r="1.2" fill="#fff"/></g>
<g transform="translate(818.2,658.2)"><use href="#mk"/><path d="M-6 4 C-7 -4 -4 -7 0 -7 C4 -7 7 -4 6 4 M0 6 V-5 M-2 -3 L0 -5 L2 -3 M-6 4 L-4 2 M6 4 L4 2" fill="none" stroke="#fff" stroke-width="1"/></g>
<g transform="translate(845.4,566.0)"><use href="#mk"/><path d="M-6.5 2.5 L5.5 -6.5 L7 3.5 M-5.5 1 L2 -4.5 M-2.5 2.5 L1.5 -0.5 M-0.5 4 L3 1.5" fill="none" stroke="#fff" stroke-width="1"/></g>
<g transform="translate(842.3,580.4)"><use href="#mk"/><path d="M6 -5.5 C-1 -7.5 -7 -3.5 -6.5 0.5 C-6 4.5 0 6 5.5 4 M-1.5 -0.5 H5" fill="none" stroke="#fff" stroke-width="1"/><circle cx="-1.5" cy="-0.5" r="1.3" fill="#fff"/></g>
<g transform="translate(861.0,588.2)"><use href="#mk"/><path d="M-4 -6 C-7 -1 -6 5 -1 5 C3 5 6 2 7 -1 M-1.5 1.5 L1 -1" fill="none" stroke="#fff" stroke-width="1"/><circle cx="-1" cy="1.5" r="1.2" fill="#fff"/></g>
<g transform="translate(854.8,609.6)"><use href="#mk"/><path d="M-6 4 C-7 -4 -4 -7 0 -7 C4 -7 7 -4 6 4 M0 6 V-5 M-2 -3 L0 -5 L2 -3 M-6 4 L-4 2 M6 4 L4 2" fill="none" stroke="#fff" stroke-width="1"/></g>
<g transform="translate(865.7,615.4)"><use href="#mk"/><path d="M-6.5 2.5 L5.5 -6.5 L7 3.5 M-5.5 1 L2 -4.5 M-2.5 2.5 L1.5 -0.5 M-0.5 4 L3 1.5" fill="none" stroke="#fff" stroke-width="1"/></g>
<g transform="translate(858.7,632.1)"><use href="#mk"/><path d="M6 -5.5 C-1 -7.5 -7 -3.5 -6.5 0.5 C-6 4.5 0 6 5.5 4 M-1.5 -0.5 H5" fill="none" stroke="#fff" stroke-width="1"/><circle cx="-1.5" cy="-0.5" r="1.3" fill="#fff"/></g>
<g transform="translate(889.0,641.5)"><use href="#mk"/><path d="M-4 -6 C-7 -1 -6 5 -1 5 C3 5 6 2 7 -1 M-1.5 1.5 L1 -1" fill="none" stroke="#fff" stroke-width="1"/><circle cx="-1" cy="1.5" r="1.2" fill="#fff"/></g>
<g transform="translate(903.8,642.6)"><use href="#mk"/><path d="M-6 4 C-7 -4 -4 -7 0 -7 C4 -7 7 -4 6 4 M0 6 V-5 M-2 -3 L0 -5 L2 -3 M-6 4 L-4 2 M6 4 L4 2" fill="none" stroke="#fff" stroke-width="1"/></g>
<g transform="translate(1002.6,673.8)"><use href="#mk"/><path d="M-6.5 2.5 L5.5 -6.5 L7 3.5 M-5.5 1 L2 -4.5 M-2.5 2.5 L1.5 -0.5 M-0.5 4 L3 1.5" fill="none" stroke="#fff" stroke-width="1"/></g>
<g transform="translate(822.9,697.1)"><use href="#mk"/><path d="M6 -5.5 C-1 -7.5 -7 -3.5 -6.5 0.5 C-6 4.5 0 6 5.5 4 M-1.5 -0.5 H5" fill="none" stroke="#fff" stroke-width="1"/><circle cx="-1.5" cy="-0.5" r="1.3" fill="#fff"/></g>
<g transform="translate(838.4,704.9)"><use href="#mk"/><path d="M-4 -6 C-7 -1 -6 5 -1 5 C3 5 6 2 7 -1 M-1.5 1.5 L1 -1" fill="none" stroke="#fff" stroke-width="1"/><circle cx="-1" cy="1.5" r="1.2" fill="#fff"/></g>
<g transform="translate(865.7,691.3)"><use href="#mk"/><path d="M-6 4 C-7 -4 -4 -7 0 -7 C4 -7 7 -4 6 4 M0 6 V-5 M-2 -3 L0 -5 L2 -3 M-6 4 L-4 2 M6 4 L4 2" fill="none" stroke="#fff" stroke-width="1"/></g>
<g transform="translate(863.0,704.9)"><use href="#mk"/><path d="M-6.5 2.5 L5.5 -6.5 L7 3.5 M-5.5 1 L2 -4.5 M-2.5 2.5 L1.5 -0.5 M-0.5 4 L3 1.5" fill="none" stroke="#fff" stroke-width="1"/></g>
<g transform="translate(663.3,732.1)"><use href="#mk"/><path d="M6 -5.5 C-1 -7.5 -7 -3.5 -6.5 0.5 C-6 4.5 0 6 5.5 4 M-1.5 -0.5 H5" fill="none" stroke="#fff" stroke-width="1"/><circle cx="-1.5" cy="-0.5" r="1.3" fill="#fff"/></g>
<g transform="translate(678.9,726.3)"><use href="#mk"/><path d="M-4 -6 C-7 -1 -6 5 -1 5 C3 5 6 2 7 -1 M-1.5 1.5 L1 -1" fill="none" stroke="#fff" stroke-width="1"/><circle cx="-1" cy="1.5" r="1.2" fill="#fff"/></g>
<g transform="translate(642.0,728.2)"><use href="#mk"/><path d="M-6 4 C-7 -4 -4 -7 0 -7 C4 -7 7 -4 6 4 M0 6 V-5 M-2 -3 L0 -5 L2 -3 M-6 4 L-4 2 M6 4 L4 2" fill="none" stroke="#fff" stroke-width="1"/></g>
<g transform="translate(933.8,746.5)"><use href="#mk"/><path d="M-6.5 2.5 L5.5 -6.5 L7 3.5 M-5.5 1 L2 -4.5 M-2.5 2.5 L1.5 -0.5 M-0.5 4 L3 1.5" fill="none" stroke="#fff" stroke-width="1"/></g>
<g transform="translate(996.0,771.0)"><use href="#mk"/><path d="M6 -5.5 C-1 -7.5 -7 -3.5 -6.5 0.5 C-6 4.5 0 6 5.5 4 M-1.5 -0.5 H5" fill="none" stroke="#fff" stroke-width="1"/><circle cx="-1.5" cy="-0.5" r="1.3" fill="#fff"/></g>
<g transform="translate(1019.4,776.1)"><use href="#mk"/><path d="M-4 -6 C-7 -1 -6 5 -1 5 C3 5 6 2 7 -1 M-1.5 1.5 L1 -1" fill="none" stroke="#fff" stroke-width="1"/><circle cx="-1" cy="1.5" r="1.2" fill="#fff"/></g>
<g transform="translate(1031.0,757.4)"><use href="#mk"/><path d="M-6 4 C-7 -4 -4 -7 0 -7 C4 -7 7 -4 6 4 M0 6 V-5 M-2 -3 L0 -5 L2 -3 M-6 4 L-4 2 M6 4 L4 2" fill="none" stroke="#fff" stroke-width="1"/></g>
<g transform="translate(690.6,794.4)"><use href="#mk"/><path d="M-6.5 2.5 L5.5 -6.5 L7 3.5 M-5.5 1 L2 -4.5 M-2.5 2.5 L1.5 -0.5 M-0.5 4 L3 1.5" fill="none" stroke="#fff" stroke-width="1"/></g>
<g transform="translate(1232.9,518.0)"><use href="#mk"/><path d="M6 -5.5 C-1 -7.5 -7 -3.5 -6.5 0.5 C-6 4.5 0 6 5.5 4 M-1.5 -0.5 H5" fill="none" stroke="#fff" stroke-width="1"/><circle cx="-1.5" cy="-0.5" r="1.3" fill="#fff"/></g>
<g transform="translate(1230.8,565.1)"><use href="#mk"/><path d="M-4 -6 C-7 -1 -6 5 -1 5 C3 5 6 2 7 -1 M-1.5 1.5 L1 -1" fill="none" stroke="#fff" stroke-width="1"/><circle cx="-1" cy="1.5" r="1.2" fill="#fff"/></g>
<g transform="translate(1059.3,592.7)"><use href="#mk"/><path d="M-6 4 C-7 -4 -4 -7 0 -7 C4 -7 7 -4 6 4 M0 6 V-5 M-2 -3 L0 -5 L2 -3 M-6 4 L-4 2 M6 4 L4 2" fill="none" stroke="#fff" stroke-width="1"/></g>
<g transform="translate(1089.0,595.1)"><use href="#mk"/><path d="M-6.5 2.5 L5.5 -6.5 L7 3.5 M-5.5 1 L2 -4.5 M-2.5 2.5 L1.5 -0.5 M-0.5 4 L3 1.5" fill="none" stroke="#fff" stroke-width="1"/></g>
<g transform="translate(1067.6,632.8)"><use href="#mk"/><path d="M6 -5.5 C-1 -7.5 -7 -3.5 -6.5 0.5 C-6 4.5 0 6 5.5 4 M-1.5 -0.5 H5" fill="none" stroke="#fff" stroke-width="1"/><circle cx="-1.5" cy="-0.5" r="1.3" fill="#fff"/></g>
<g transform="translate(1157.8,635.1)"><use href="#mk"/><path d="M-4 -6 C-7 -1 -6 5 -1 5 C3 5 6 2 7 -1 M-1.5 1.5 L1 -1" fill="none" stroke="#fff" stroke-width="1"/><circle cx="-1" cy="1.5" r="1.2" fill="#fff"/></g>
<g transform="translate(1065.9,672.2)"><use href="#mk"/><path d="M-6 4 C-7 -4 -4 -7 0 -7 C4 -7 7 -4 6 4 M0 6 V-5 M-2 -3 L0 -5 L2 -3 M-6 4 L-4 2 M6 4 L4 2" fill="none" stroke="#fff" stroke-width="1"/></g>
<g transform="translate(1052.0,692.1)"><use href="#mk"/><path d="M-6.5 2.5 L5.5 -6.5 L7 3.5 M-5.5 1 L2 -4.5 M-2.5 2.5 L1.5 -0.5 M-0.5 4 L3 1.5" fill="none" stroke="#fff" stroke-width="1"/></g>
<g transform="translate(1130.0,674.3)"><use href="#mk"/><path d="M6 -5.5 C-1 -7.5 -7 -3.5 -6.5 0.5 C-6 4.5 0 6 5.5 4 M-1.5 -0.5 H5" fill="none" stroke="#fff" stroke-width="1"/><circle cx="-1.5" cy="-0.5" r="1.3" fill="#fff"/></g>
<g transform="translate(1126.0,699.0)"><use href="#mk"/><path d="M-4 -6 C-7 -1 -6 5 -1 5 C3 5 6 2 7 -1 M-1.5 1.5 L1 -1" fill="none" stroke="#fff" stroke-width="1"/><circle cx="-1" cy="1.5" r="1.2" fill="#fff"/></g>
<g transform="translate(1168.5,710.8)"><use href="#mk"/><path d="M-6 4 C-7 -4 -4 -7 0 -7 C4 -7 7 -4 6 4 M0 6 V-5 M-2 -3 L0 -5 L2 -3 M-6 4 L-4 2 M6 4 L4 2" fill="none" stroke="#fff" stroke-width="1"/></g>
<g transform="translate(1194.3,702.5)"><use href="#mk"/><path d="M-6.5 2.5 L5.5 -6.5 L7 3.5 M-5.5 1 L2 -4.5 M-2.5 2.5 L1.5 -0.5 M-0.5 4 L3 1.5" fill="none" stroke="#fff" stroke-width="1"/></g>
<g transform="translate(1185.4,722.4)"><use href="#mk"/><path d="M6 -5.5 C-1 -7.5 -7 -3.5 -6.5 0.5 C-6 4.5 0 6 5.5 4 M-1.5 -0.5 H5" fill="none" stroke="#fff" stroke-width="1"/><circle cx="-1.5" cy="-0.5" r="1.3" fill="#fff"/></g>
<g transform="translate(1032.6,757.4)"><use href="#mk"/><path d="M-4 -6 C-7 -1 -6 5 -1 5 C3 5 6 2 7 -1 M-1.5 1.5 L1 -1" fill="none" stroke="#fff" stroke-width="1"/><circle cx="-1" cy="1.5" r="1.2" fill="#fff"/></g>
<g transform="translate(1166.7,790.9)"><use href="#mk"/><path d="M-6 4 C-7 -4 -4 -7 0 -7 C4 -7 7 -4 6 4 M0 6 V-5 M-2 -3 L0 -5 L2 -3 M-6 4 L-4 2 M6 4 L4 2" fill="none" stroke="#fff" stroke-width="1"/></g>
<g transform="translate(977.3,818.0)"><use href="#mk"/><path d="M-6.5 2.5 L5.5 -6.5 L7 3.5 M-5.5 1 L2 -4.5 M-2.5 2.5 L1.5 -0.5 M-0.5 4 L3 1.5" fill="none" stroke="#fff" stroke-width="1"/></g>
<g transform="translate(988.2,830.2)"><use href="#mk"/><path d="M6 -5.5 C-1 -7.5 -7 -3.5 -6.5 0.5 C-6 4.5 0 6 5.5 4 M-1.5 -0.5 H5" fill="none" stroke="#fff" stroke-width="1"/><circle cx="-1.5" cy="-0.5" r="1.3" fill="#fff"/></g>
<g transform="translate(957.5,860.0)"><use href="#mk"/><path d="M-4 -6 C-7 -1 -6 5 -1 5 C3 5 6 2 7 -1 M-1.5 1.5 L1 -1" fill="none" stroke="#fff" stroke-width="1"/><circle cx="-1" cy="1.5" r="1.2" fill="#fff"/></g>
<g transform="translate(973.8,864.1)"><use href="#mk"/><path d="M-6 4 C-7 -4 -4 -7 0 -7 C4 -7 7 -4 6 4 M0 6 V-5 M-2 -3 L0 -5 L2 -3 M-6 4 L-4 2 M6 4 L4 2" fill="none" stroke="#fff" stroke-width="1"/></g>
<g transform="translate(1038.4,857.3)"><use href="#mk"/><path d="M-6.5 2.5 L5.5 -6.5 L7 3.5 M-5.5 1 L2 -4.5 M-2.5 2.5 L1.5 -0.5 M-0.5 4 L3 1.5" fill="none" stroke="#fff" stroke-width="1"/></g>
<g transform="translate(1041.7,853.3)"><use href="#mk"/><path d="M6 -5.5 C-1 -7.5 -7 -3.5 -6.5 0.5 C-6 4.5 0 6 5.5 4 M-1.5 -0.5 H5" fill="none" stroke="#fff" stroke-width="1"/><circle cx="-1.5" cy="-0.5" r="1.3" fill="#fff"/></g>
<g transform="translate(995.0,881.8)"><use href="#mk"/><path d="M-4 -6 C-7 -1 -6 5 -1 5 C3 5 6 2 7 -1 M-1.5 1.5 L1 -1" fill="none" stroke="#fff" stroke-width="1"/><circle cx="-1" cy="1.5" r="1.2" fill="#fff"/></g>
<g transform="translate(997.7,898.0)"><use href="#mk"/><path d="M-6 4 C-7 -4 -4 -7 0 -7 C4 -7 7 -4 6 4 M0 6 V-5 M-2 -3 L0 -5 L2 -3 M-6 4 L-4 2 M6 4 L4 2" fill="none" stroke="#fff" stroke-width="1"/></g>
<g transform="translate(1096.7,862.8)"><use href="#mk"/><path d="M-6.5 2.5 L5.5 -6.5 L7 3.5 M-5.5 1 L2 -4.5 M-2.5 2.5 L1.5 -0.5 M-0.5 4 L3 1.5" fill="none" stroke="#fff" stroke-width="1"/></g>
<g transform="translate(1232.4,891.3)"><use href="#mk"/><path d="M6 -5.5 C-1 -7.5 -7 -3.5 -6.5 0.5 C-6 4.5 0 6 5.5 4 M-1.5 -0.5 H5" fill="none" stroke="#fff" stroke-width="1"/><circle cx="-1.5" cy="-0.5" r="1.3" fill="#fff"/></g>
<g transform="translate(1155.1,913.0)"><use href="#mk"/><path d="M-4 -6 C-7 -1 -6 5 -1 5 C3 5 6 2 7 -1 M-1.5 1.5 L1 -1" fill="none" stroke="#fff" stroke-width="1"/><circle cx="-1" cy="1.5" r="1.2" fill="#fff"/></g>
<g transform="translate(1155.1,922.5)"><use href="#mk"/><path d="M-6 4 C-7 -4 -4 -7 0 -7 C4 -7 7 -4 6 4 M0 6 V-5 M-2 -3 L0 -5 L2 -3 M-6 4 L-4 2 M6 4 L4 2" fill="none" stroke="#fff" stroke-width="1"/></g>
<g transform="translate(1237.9,915.7)"><use href="#mk"/><path d="M-6.5 2.5 L5.5 -6.5 L7 3.5 M-5.5 1 L2 -4.5 M-2.5 2.5 L1.5 -0.5 M-0.5 4 L3 1.5" fill="none" stroke="#fff" stroke-width="1"/></g>
<g transform="translate(1231.6,927.9)"><use href="#mk"/><path d="M6 -5.5 C-1 -7.5 -7 -3.5 -6.5 0.5 C-6 4.5 0 6 5.5 4 M-1.5 -0.5 H5" fill="none" stroke="#fff" stroke-width="1"/><circle cx="-1.5" cy="-0.5" r="1.3" fill="#fff"/></g>
<g transform="translate(1070.4,967.2)"><use href="#mk"/><path d="M-4 -6 C-7 -1 -6 5 -1 5 C3 5 6 2 7 -1 M-1.5 1.5 L1 -1" fill="none" stroke="#fff" stroke-width="1"/><circle cx="-1" cy="1.5" r="1.2" fill="#fff"/></g>
<g transform="translate(1199.9,960.5)"><use href="#mk"/><path d="M-6 4 C-7 -4 -4 -7 0 -7 C4 -7 7 -4 6 4 M0 6 V-5 M-2 -3 L0 -5 L2 -3 M-6 4 L-4 2 M6 4 L4 2" fill="none" stroke="#fff" stroke-width="1"/></g>
<g transform="translate(1015.3,976.7)"><use href="#mk"/><path d="M-6.5 2.5 L5.5 -6.5 L7 3.5 M-5.5 1 L2 -4.5 M-2.5 2.5 L1.5 -0.5 M-0.5 4 L3 1.5" fill="none" stroke="#fff" stroke-width="1"/></g>
<g transform="translate(1134.0,986.2)"><use href="#mk"/><path d="M6 -5.5 C-1 -7.5 -7 -3.5 -6.5 0.5 C-6 4.5 0 6 5.5 4 M-1.5 -0.5 H5" fill="none" stroke="#fff" stroke-width="1"/><circle cx="-1.5" cy="-0.5" r="1.3" fill="#fff"/></g>
<g transform="translate(988.2,1029.1)"><use href="#mk"/><path d="M-4 -6 C-7 -1 -6 5 -1 5 C3 5 6 2 7 -1 M-1.5 1.5 L1 -1" fill="none" stroke="#fff" stroke-width="1"/><circle cx="-1" cy="1.5" r="1.2" fill="#fff"/></g>
<g transform="translate(1020.8,1029.7)"><use href="#mk"/><path d="M-6 4 C-7 -4 -4 -7 0 -7 C4 -7 7 -4 6 4 M0 6 V-5 M-2 -3 L0 -5 L2 -3 M-6 4 L-4 2 M6 4 L4 2" fill="none" stroke="#fff" stroke-width="1"/></g>
<g transform="translate(1159.2,1039.2)"><use href="#mk"/><path d="M-6.5 2.5 L5.5 -6.5 L7 3.5 M-5.5 1 L2 -4.5 M-2.5 2.5 L1.5 -0.5 M-0.5 4 L3 1.5" fill="none" stroke="#fff" stroke-width="1"/></g>
<g transform="translate(1035.7,1018.8)"><use href="#mk"/><path d="M6 -5.5 C-1 -7.5 -7 -3.5 -6.5 0.5 C-6 4.5 0 6 5.5 4 M-1.5 -0.5 H5" fill="none" stroke="#fff" stroke-width="1"/><circle cx="-1.5" cy="-0.5" r="1.3" fill="#fff"/></g>
<g transform="translate(1097.3,1018.8)"><use href="#mk"/><path d="M-4 -6 C-7 -1 -6 5 -1 5 C3 5 6 2 7 -1 M-1.5 1.5 L1 -1" fill="none" stroke="#fff" stroke-width="1"/><circle cx="-1" cy="1.5" r="1.2" fill="#fff"/></g>
<g transform="translate(571.3,788.1)"><use href="#mk"/><path d="M-6 4 C-7 -4 -4 -7 0 -7 C4 -7 7 -4 6 4 M0 6 V-5 M-2 -3 L0 -5 L2 -3 M-6 4 L-4 2 M6 4 L4 2" fill="none" stroke="#fff" stroke-width="1"/></g>
<g transform="translate(597.6,793.6)"><use href="#mk"/><path d="M-6.5 2.5 L5.5 -6.5 L7 3.5 M-5.5 1 L2 -4.5 M-2.5 2.5 L1.5 -0.5 M-0.5 4 L3 1.5" fill="none" stroke="#fff" stroke-width="1"/></g>
<g transform="translate(691.3,797.6)"><use href="#mk"/><path d="M6 -5.5 C-1 -7.5 -7 -3.5 -6.5 0.5 C-6 4.5 0 6 5.5 4 M-1.5 -0.5 H5" fill="none" stroke="#fff" stroke-width="1"/><circle cx="-1.5" cy="-0.5" r="1.3" fill="#fff"/></g>
<g transform="translate(784.3,808.5)"><use href="#mk"/><path d="M-4 -6 C-7 -1 -6 5 -1 5 C3 5 6 2 7 -1 M-1.5 1.5 L1 -1" fill="none" stroke="#fff" stroke-width="1"/><circle cx="-1" cy="1.5" r="1.2" fill="#fff"/></g>
<g transform="translate(514.9,826.7)"><use href="#mk"/><path d="M-6 4 C-7 -4 -4 -7 0 -7 C4 -7 7 -4 6 4 M0 6 V-5 M-2 -3 L0 -5 L2 -3 M-6 4 L-4 2 M6 4 L4 2" fill="none" stroke="#fff" stroke-width="1"/></g>
<g transform="translate(694.3,835.6)"><use href="#mk"/><path d="M-6.5 2.5 L5.5 -6.5 L7 3.5 M-5.5 1 L2 -4.5 M-2.5 2.5 L1.5 -0.5 M-0.5 4 L3 1.5" fill="none" stroke="#fff" stroke-width="1"/></g>
<g transform="translate(732.8,831.6)"><use href="#mk"/><path d="M6 -5.5 C-1 -7.5 -7 -3.5 -6.5 0.5 C-6 4.5 0 6 5.5 4 M-1.5 -0.5 H5" fill="none" stroke="#fff" stroke-width="1"/><circle cx="-1.5" cy="-0.5" r="1.3" fill="#fff"/></g>
<g transform="translate(728.7,835.6)"><use href="#mk"/><path d="M-4 -6 C-7 -1 -6 5 -1 5 C3 5 6 2 7 -1 M-1.5 1.5 L1 -1" fill="none" stroke="#fff" stroke-width="1"/><circle cx="-1" cy="1.5" r="1.2" fill="#fff"/></g>
<g transform="translate(816.1,854.6)"><use href="#mk"/><path d="M-6 4 C-7 -4 -4 -7 0 -7 C4 -7 7 -4 6 4 M0 6 V-5 M-2 -3 L0 -5 L2 -3 M-6 4 L-4 2 M6 4 L4 2" fill="none" stroke="#fff" stroke-width="1"/></g>
<g transform="translate(763.2,891.3)"><use href="#mk"/><path d="M-6.5 2.5 L5.5 -6.5 L7 3.5 M-5.5 1 L2 -4.5 M-2.5 2.5 L1.5 -0.5 M-0.5 4 L3 1.5" fill="none" stroke="#fff" stroke-width="1"/></g>
<g transform="translate(814.2,894.0)"><use href="#mk"/><path d="M6 -5.5 C-1 -7.5 -7 -3.5 -6.5 0.5 C-6 4.5 0 6 5.5 4 M-1.5 -0.5 H5" fill="none" stroke="#fff" stroke-width="1"/><circle cx="-1.5" cy="-0.5" r="1.3" fill="#fff"/></g>
<g transform="translate(439.7,919.8)"><use href="#mk"/><path d="M-4 -6 C-7 -1 -6 5 -1 5 C3 5 6 2 7 -1 M-1.5 1.5 L1 -1" fill="none" stroke="#fff" stroke-width="1"/><circle cx="-1" cy="1.5" r="1.2" fill="#fff"/></g>
<g transform="translate(862.5,936.0)"><use href="#mk"/><path d="M-6 4 C-7 -4 -4 -7 0 -7 C4 -7 7 -4 6 4 M0 6 V-5 M-2 -3 L0 -5 L2 -3 M-6 4 L-4 2 M6 4 L4 2" fill="none" stroke="#fff" stroke-width="1"/></g>
</svg>
</div>
<div id="foot"></div>
<div class="a" style="left:724px;top:325px;width:302px;height:22px;background:#ebebeb;border:1px solid #9a9a9a;box-shadow:0 1px 1px rgba(0,0,0,.15)"></div>
<div class="a" style="left:806px;top:327px;font-size:12px;line-height:17px;color:#111">总面积: <b style="color:#f00;font-size:13px">9797.04</b>平方千米</div>
<svg class="a" style="left:709px;top:318px" width="26" height="30" viewBox="-13 -12 26 30"><path d="M0 16 C-2.5 11.5 -10.5 7 -10.5 0 A10.5 10.5 0 1 1 10.5 0 C10.5 7 2.5 11.5 0 16Z" fill="#b3174d" stroke="#fff" stroke-opacity=".8" stroke-width="1"/><circle cx="0" cy="-0.5" r="6.5" fill="#d98a6a"/><path d="M-3 -3.5 L3 2.5 M3 -3.5 L-3 2.5" stroke="#fff" stroke-width="2"/></svg>
<div class="a" style="left:948px;top:982px;width:272px;height:37px;background:#fff;border:1px solid #b5b5b5"></div>
<div class="a" style="left:965px;top:988px;width:24px;height:24px;background:#8b9ad0"></div>
<svg class="a" style="left:965px;top:988px" width="24" height="24" viewBox="0 0 24 24"><rect x="4" y="6" width="16" height="12" fill="none" stroke="#fff" stroke-width="1.3"/><path d="M5 16 L9 11 L12 14 L15 11 L19 16" fill="none" stroke="#fff" stroke-width="1.2"/><rect x="16" y="8" width="2" height="2" fill="#fff"/></svg>
<div class="a" style="left:994px;top:991px;font-size:14px;line-height:18px;color:#222">全图</div>
<div class="a" style="left:1034px;top:988px;width:24px;height:24px;background:#a9d48f"></div>
<svg class="a" style="left:1034px;top:988px" width="24" height="24" viewBox="0 0 24 24"><rect x="3" y="10" width="3.5" height="3.5" fill="none" stroke="#fff" stroke-width="1"/><rect x="17.5" y="10" width="3.5" height="3.5" fill="none" stroke="#fff" stroke-width="1"/><path d="M6.5 11.75H17.5" stroke="#fff" stroke-width="1"/></svg>
<div class="a" style="left:1063px;top:991px;font-size:14px;line-height:18px;color:#222">距离量算</div>
<div class="a" style="left:1087px;top:994px;width:1px;height:14px;background:#000"></div>
<div class="a" style="left:1127px;top:988px;width:24px;height:24px;background:#6f86d2"></div>
<svg class="a" style="left:1127px;top:988px" width="24" height="24" viewBox="0 0 24 24"><rect x="5.5" y="5.5" width="13" height="13" fill="none" stroke="#fff" stroke-width="1.1"/><rect x="4" y="4" width="3" height="3" fill="#6f86d2" stroke="#fff" stroke-width="1"/><rect x="17" y="4" width="3" height="3" fill="#6f86d2" stroke="#fff" stroke-width="1"/><rect x="4" y="17" width="3" height="3" fill="#6f86d2" stroke="#fff" stroke-width="1"/><rect x="17" y="17" width="3" height="3" fill="#6f86d2" stroke="#fff" stroke-width="1"/></svg>
<div class="a" style="left:1156px;top:991px;font-size:14px;line-height:18px;color:#1f6fb8">面积量算</div>
<div class="a" style="left:245px;top:1024px;font-size:12.5px;line-height:16px;color:#111;font-weight:bold;letter-spacing:0.2px">经度：109.59°&nbsp;&nbsp;&nbsp;纬度：29.32°</div>
<div class="a" style="left:1181px;top:90px;width:31px;height:32px;background:#f4f4f4;border:1px solid #2ad0e6"></div>
<svg class="a" style="left:1186px;top:95px" width="22" height="22" viewBox="0 0 22 22"><rect x="5" y="5" width="13.5" height="13.5" rx="2" fill="none" stroke="#1b6fb3" stroke-width="1.6"/><rect x="2" y="2" width="14" height="14" rx="2" fill="#1b6fb3"/></svg>
<div class="a" style="left:1233px;top:90px;width:32px;height:32px;background:#f2f0e8;border:1px solid #2ad0e6"></div>
<svg class="a" style="left:1234px;top:91px" width="30" height="30" viewBox="0 0 30 30"><path d="M4 2 L6 28 M10 1 L12 29 M18 1 L17 29 M24 2 L26 28 M1 9 H29 M1 16 L29 18 M2 24 H28" stroke="#d8cdf2" stroke-width="0.9" fill="none"/><path d="M8 5 C12 3 18 4 20 6 M9 10 L12 12 M13 14 L17 14" stroke="#a88fe8" stroke-width="1.2" fill="none"/><path d="M1 20 C8 19 14 22 29 21 M14 1 L15 29" stroke="#f3cf9a" stroke-width="1" fill="none"/></svg>
<div class="a" style="left:1283px;top:90px;width:32px;height:32px;background:#5b7660;border:1px solid #454545"></div>
<svg class="a" style="left:1284px;top:91px" width="30" height="30" viewBox="0 0 30 30"><path d="M0 4 C6 8 12 2 18 7 S26 10 30 6 V12 C22 14 16 10 8 14 S2 12 0 14Z" fill="#6f8a6a" opacity=".8"/><path d="M0 22 C6 18 14 24 30 19 V30 H0Z" fill="#7a7a58" opacity=".7"/><path d="M6 26 C10 22 16 24 24 22 M14 8 L18 20" stroke="#b08a70" stroke-width="1.2" fill="none" opacity=".8"/><circle cx="15" cy="15" r="3.5" fill="#8f8f88" opacity=".7"/></svg>
<div class="a" style="left:1334px;top:90px;width:32px;height:32px;background:#06060e;border:1px solid #2ad0e6"></div>
<svg class="a" style="left:1335px;top:91px" width="30" height="30" viewBox="0 0 30 30"><circle cx="15" cy="15" r="13" fill="#141a33" stroke="#cfd6e0" stroke-width="0.7"/><path d="M9 5 C14 3 19 6 17 10 C15 13 12 12 12 16 C10 13 6 11 9 5Z M17 17 C20 16 22 19 21 24 C19 26 17 23 17 17Z" fill="#6b7d58"/><path d="M8 4 C12 2 16 3 18 4" stroke="#e8eef4" stroke-width="1.2" fill="none"/><circle cx="24" cy="13" r="0.9" fill="#fff"/></svg>
<div id="hdr">
<svg style="position:absolute;left:10px;top:0" width="90" height="75" viewBox="0 0 1295 1079">
  <path fill="#fff" d="M175 545 C260 330 470 150 620 145 C720 145 770 260 770 560 L760 545 C740 330 700 230 610 225 C470 220 300 360 175 545Z"/>
  <path fill="#fff" d="M285 590 C380 420 500 310 600 310 C650 310 670 380 690 590Z"/>
  <path fill="#fff" d="M770 545 C850 430 900 350 970 350 C1060 350 1140 430 1150 590 L830 590 C880 510 920 435 965 435 C1010 435 1050 470 1080 520 C1040 430 1010 395 960 395 C900 395 860 450 770 560Z"/>
  <rect fill="#fff" x="145" y="660" width="975" height="35" rx="6"/>
  <rect fill="#fff" x="150" y="718" width="960" height="30" rx="6"/>
  <path fill="#fff" d="M630 780 L720 780 L700 805 L620 805Z M590 835 L670 835 L650 860 L575 860Z M525 893 L615 893 L595 918 L510 918Z M300 935 L560 935 L540 962 L330 962Z M370 978 L490 978 L470 995 L390 995Z M800 778 L1080 778 L1055 808 L830 808Z M860 835 L1020 835 L990 860 L890 860Z"/>
</svg>
<div class="a" style="left:110px;top:20px;color:#fff;font-size:22px;line-height:26px;letter-spacing:-0.1px">湖南省地质灾害防治综合应用系统<span style="font-size:24px;position:relative;top:4px;letter-spacing:-0.5px">(内测版)</span></div>
<div class="a" style="left:110px;top:46px;color:#fff;font-size:13.4px;line-height:16px">Geological hazard protection control application system</div>
<div class="a" style="left:541px;top:26px;width:3px;height:28px;background:#fff"></div>
<div class="a" style="left:563px;top:31px;color:#fff;font-size:14px;line-height:18px;font-weight:bold">调查评价与风险管控系统</div>
<div class="nb" style="left:1065px;background:linear-gradient(#16cbf8,#13a9e4 48%,#1e7ec0)"><div class="ic"><svg width="32" height="32" viewBox="0 0 32 32"><path d="M9 17 L16 10 L23 17 M11 15 V23 H21 V15 M14.5 23 V18 H17.5 V23" fill="none" stroke="#fff" stroke-width="1.8"/><circle cx="16" cy="15.5" r="1.3" fill="#fff"/></svg></div><div class="nt">首页</div></div>
<div class="nb" style="left:1135px;background:linear-gradient(#16cbf8,#13a9e4 48%,#1e7ec0)"><div class="ic"><svg width="32" height="32" viewBox="0 0 32 32"><rect x="9" y="9" width="14" height="11" fill="none" stroke="#fff" stroke-width="1.8"/><path d="M12.5 18V15 M15.5 18V13 M18.5 18V11.5 M16 20V23 M12 23.5H20" stroke="#fff" stroke-width="1.8"/></svg></div><div class="nt">综合大屏</div></div>
<div class="nb" style="left:1205px;background:linear-gradient(#16cbf8,#13a9e4 48%,#1e7ec0)"><div class="ic"><svg width="32" height="32" viewBox="0 0 32 32"><path d="M10 12 L12 9 H20 L22 12 V23 H10Z" fill="none" stroke="#fff" stroke-width="1.8"/><rect x="13" y="13" width="3" height="3" fill="none" stroke="#fff" stroke-width="1.4"/><rect x="17" y="17" width="3" height="3" fill="#fff"/></svg></div><div class="nt">业务运行</div></div>
<div class="nb" style="left:1275px;background:linear-gradient(#16cbf8,#13a9e4 48%,#1e7ec0)"><div class="ic"><svg width="32" height="32" viewBox="0 0 32 32"><path d="M9 22 V13 H13 A2 2 0 0 1 13 17 H9" fill="none" stroke="#fff" stroke-width="1.8"/><circle cx="19" cy="13" r="2.6" fill="none" stroke="#fff" stroke-width="1.8"/><path d="M14.5 21.5 C15 18 23 18 23.5 21.5Z" fill="none" stroke="#fff" stroke-width="1.8"/></svg></div><div class="nt">指挥支撑</div></div>
<div class="nb" style="left:1345px;background:linear-gradient(#16cbf8,#13a9e4 48%,#1e7ec0)"><div class="ic"><svg width="32" height="32" viewBox="0 0 32 32"><rect x="9" y="9" width="14" height="11" rx="1" fill="none" stroke="#fff" stroke-width="1.8"/><path d="M12 13h3v4h-3z M17 15v3 M19.5 13v5 M12 23H20" stroke="#fff" stroke-width="1.5" fill="none"/></svg></div><div class="nt">综合监测</div></div>
<div class="nb act" style="left:1415px;background:linear-gradient(#a3e7ff,#55c4f7 50%,#2d9fe2)"><div class="ic"><svg width="32" height="32" viewBox="0 0 32 32"><path d="M21 19 V10 H11 V19 C11 23 16 24 18 23" fill="none" stroke="#fff" stroke-width="1.8"/><path d="M13.5 13.5H18.5 M13.5 16.5H17" stroke="#fff" stroke-width="1.6"/><path d="M18 23.5 L24 17.5" stroke="#fff" stroke-width="2"/></svg></div><div class="nt">调查评价</div></div>
<div class="nb" style="left:1485px;background:linear-gradient(#16cbf8,#13a9e4 48%,#1e7ec0)"><div class="ic"><svg width="32" height="32" viewBox="0 0 32 32"><path d="M9.5 13V9.5H13 M19 9.5H22.5V13 M22.5 19V22.5H19 M13 22.5H9.5V19" fill="none" stroke="#fff" stroke-width="1.6"/><path d="M12.5 20 C12.5 14 19.5 14 19.5 20Z" fill="#fff"/><path d="M16 10.5V12.5 M12 12L13 13 M20 12L19 13" stroke="#fff" stroke-width="1.3"/></svg></div><div class="nt">区域预警</div></div>
<div class="nb" style="left:1555px;background:linear-gradient(#16cbf8,#13a9e4 48%,#1e7ec0)"><div class="ic"><svg width="32" height="32" viewBox="0 0 32 32"><circle cx="16" cy="16" r="6.5" fill="none" stroke="#fff" stroke-width="2.4" stroke-dasharray="3 1.6"/><path d="M14 18V16 M16 18V14 M18 18V15" stroke="#fff" stroke-width="1.4"/></svg></div><div class="nt">数据管理</div></div>
<div class="nb" style="left:1625px;background:linear-gradient(#16cbf8,#13a9e4 48%,#1e7ec0)"><div class="ic"><svg width="32" height="32" viewBox="0 0 32 32"><path d="M11 21 C7 21 7 15.5 11 15 C11.5 10 20 9.5 21 14.5 C25 14.5 25.5 21 21 21Z" fill="none" stroke="#fff" stroke-width="1.8"/><circle cx="16" cy="17.5" r="2.6" fill="#fff"/></svg></div><div class="nt">云平台</div></div>
<div class="nb" style="left:1695px;background:linear-gradient(#16cbf8,#13a9e4 48%,#1e7ec0)"><div class="ic"><svg width="32" height="32" viewBox="0 0 32 32"><rect x="9" y="9" width="14" height="11" rx="1" fill="none" stroke="#fff" stroke-width="1.8"/><circle cx="16" cy="14.5" r="2.2" fill="none" stroke="#fff" stroke-width="1.6"/><path d="M12 23H20" stroke="#fff" stroke-width="1.8"/></svg></div><div class="nt">系统管理</div></div>
<svg style="position:absolute;left:1813px;top:28px" width="17" height="13" viewBox="0 0 17 13"><path d="M1 6.5 C4 1.5 13 1.5 16 6.5 C13 11.5 4 11.5 1 6.5Z" fill="none" stroke="#fff" stroke-width="1.6"/><circle cx="8.5" cy="6.5" r="2.6" fill="none" stroke="#fff" stroke-width="1.6"/></svg>
<div class="a" style="left:1838px;top:27px;color:#fff;font-size:14px;line-height:18px">梦图</div>
<svg style="position:absolute;left:1877px;top:31px" width="12" height="8" viewBox="0 0 12 8"><path d="M1 1 L6 6 L11 1" fill="none" stroke="#fff" stroke-width="1.6"/></svg>
</div>
<div id="side">
<svg style="position:absolute;left:115px;top:8px" width="14" height="18" viewBox="0 0 14 18"><path d="M11 2 L4 9 L11 16" fill="none" stroke="#fff" stroke-width="2.6"/></svg>
<div class="a" style="left:0;top:33px;width:240px;height:50px;background:radial-gradient(ellipse 55px 90px at 50% 50%,rgba(2,182,222,.95),rgba(2,182,222,0) 80%),linear-gradient(90deg,#1b7cbd 0%,#1a86c0 35%,#1084b8 62%,#1680bb 80%,#1b84c4 100%)"></div>
<div class="a" style="left:0;top:82px;width:240px;height:2px;background:#2a9ad6"></div>
<svg style="position:absolute;left:20px;top:53px" width="19" height="18" viewBox="0 0 19 18"><rect x="2" y="1" width="15.5" height="12" fill="none" stroke="#fff" stroke-width="1.1"/><path d="M1 2 V16 H18 M2 14.5 H18" fill="none" stroke="#fff" stroke-width="0.9"/><circle cx="9.7" cy="6.8" r="2.3" fill="none" stroke="#fff" stroke-width="1.6" stroke-dasharray="1.2 0.8"/><circle cx="9.7" cy="6.8" r="1" fill="#fff"/></svg>
<div class="a" style="left:43px;top:53px;color:#fff;font-size:14px;line-height:16px">综合信息展示</div>
<div class="mi" style="top:89px">
<svg style="left:22px;top:22px" width="15" height="13" viewBox="0 0 15 13"><path d="M0.7 0.7 H14.3 V11.3 H8.2 V12.5 H6.8 V11.3 H0.7Z" fill="none" stroke="#fff" stroke-width="1.2"/><path d="M7.5 1V11.5 M1 4.3H7 M8 4.3H14 M1 7.8H7 M8 7.8H14" stroke="#fff" stroke-width="1.1"/></svg>
<div class="t">调查项目信息</div>
<svg style="left:217px;top:23px" width="12" height="8" viewBox="0 0 12 8"><path d="M1 1.5 L6 6 L11 1.5" fill="none" stroke="#fff" stroke-width="1.2"/></svg>
</div>
<div class="a" style="left:0;top:144px;width:240px;height:1px;background:#58c0ee"></div>
<div class="mi" style="top:145px">
<svg style="left:22px;top:22px" width="15" height="13" viewBox="0 0 15 13"><path d="M0.7 0.7 H14.3 V11.3 H8.2 V12.5 H6.8 V11.3 H0.7Z" fill="none" stroke="#fff" stroke-width="1.2"/><path d="M7.5 1V11.5 M1 4.3H7 M8 4.3H14 M1 7.8H7 M8 7.8H14" stroke="#fff" stroke-width="1.1"/></svg>
<div class="t">基础调查信息</div>
<svg style="left:217px;top:23px" width="12" height="8" viewBox="0 0 12 8"><path d="M1 1.5 L6 6 L11 1.5" fill="none" stroke="#fff" stroke-width="1.2"/></svg>
</div>
<div class="a" style="left:0;top:200px;width:240px;height:1px;background:#58c0ee"></div>
<div class="mi" style="top:201px">
<svg style="left:22px;top:22px" width="15" height="13" viewBox="0 0 15 13"><path d="M0.7 0.7 H14.3 V11.3 H8.2 V12.5 H6.8 V11.3 H0.7Z" fill="none" stroke="#fff" stroke-width="1.2"/><path d="M7.5 1V11.5 M1 4.3H7 M8 4.3H14 M1 7.8H7 M8 7.8H14" stroke="#fff" stroke-width="1.1"/></svg>
<div class="t">灾情速报信息</div>
<svg style="left:217px;top:23px" width="12" height="8" viewBox="0 0 12 8"><path d="M1 1.5 L6 6 L11 1.5" fill="none" stroke="#fff" stroke-width="1.2"/></svg>
</div>
<div class="a" style="left:0;top:256px;width:240px;height:1px;background:#58c0ee"></div>
<div class="mi" style="top:257px">
<svg style="left:22px;top:22px" width="15" height="13" viewBox="0 0 15 13"><path d="M0.7 0.7 H14.3 V11.3 H8.2 V12.5 H6.8 V11.3 H0.7Z" fill="none" stroke="#fff" stroke-width="1.2"/><path d="M7.5 1V11.5 M1 4.3H7 M8 4.3H14 M1 7.8H7 M8 7.8H14" stroke="#fff" stroke-width="1.1"/></svg>
<div class="t">切坡建房信息</div>
<svg style="left:217px;top:23px" width="12" height="8" viewBox="0 0 12 8"><path d="M1 1.5 L6 6 L11 1.5" fill="none" stroke="#fff" stroke-width="1.2"/></svg>
</div>
<div class="a" style="left:0;top:312px;width:240px;height:1px;background:#58c0ee"></div>
<div class="mi" style="top:313px">
<svg style="left:22px;top:22px" width="15" height="13" viewBox="0 0 15 13"><path d="M0.7 0.7 H14.3 V11.3 H8.2 V12.5 H6.8 V11.3 H0.7Z" fill="none" stroke="#fff" stroke-width="1.2"/><path d="M7.5 1V11.5 M1 4.3H7 M8 4.3H14 M1 7.8H7 M8 7.8H14" stroke="#fff" stroke-width="1.1"/></svg>
<div class="t">孕灾条件信息</div>
<svg style="left:217px;top:23px" width="12" height="8" viewBox="0 0 12 8"><path d="M1 1.5 L6 6 L11 1.5" fill="none" stroke="#fff" stroke-width="1.2"/></svg>
</div>
<div class="a" style="left:0;top:368px;width:240px;height:1px;background:#58c0ee"></div>
<div class="mi" style="top:369px">
<svg style="left:22px;top:22px" width="15" height="13" viewBox="0 0 15 13"><path d="M0.7 0.7 H14.3 V11.3 H8.2 V12.5 H6.8 V11.3 H0.7Z" fill="none" stroke="#fff" stroke-width="1.2"/><path d="M7.5 1V11.5 M1 4.3H7 M8 4.3H14 M1 7.8H7 M8 7.8H14" stroke="#fff" stroke-width="1.1"/></svg>
<div class="t">风险评估信息</div>
<svg style="left:217px;top:23px" width="12" height="8" viewBox="0 0 12 8"><path d="M1 1.5 L6 6 L11 1.5" fill="none" stroke="#fff" stroke-width="1.2"/></svg>
</div>
<div class="a" style="left:0;top:424px;width:240px;height:1px;background:#58c0ee"></div>
<div class="mi" style="top:425px">
<svg style="left:22px;top:22px" width="15" height="13" viewBox="0 0 15 13"><path d="M0.7 0.7 H14.3 V11.3 H8.2 V12.5 H6.8 V11.3 H0.7Z" fill="none" stroke="#fff" stroke-width="1.2"/><path d="M7.5 1V11.5 M1 4.3H7 M8 4.3H14 M1 7.8H7 M8 7.8H14" stroke="#fff" stroke-width="1.1"/></svg>
<div class="t">空间数据管理</div>
</div>
</div>
<div id="panel">
<svg class="a" style="left:16px;top:3px" width="14" height="24" viewBox="0 0 14 24"><path d="M14 0 L0 12 L14 24Z" fill="#cfcfcf"/></svg>
<svg class="a" style="left:470px;top:3px" width="14" height="24" viewBox="0 0 14 24"><path d="M0 0 L14 12 L0 24Z" fill="#cfcfcf"/></svg>
<div class="a" style="left:0;top:7px;width:516px;text-align:center;font-size:16px;line-height:20px;color:#222">2021年</div>
<div class="a" style="left:0;top:33px;width:500px;height:1px;background:#e6e9ee"></div>
<div class="a" style="left:18px;top:40px;width:130px;height:30px;border:1px solid #dcdfe6;border-radius:4px"></div>
<div class="a" style="left:38px;top:46px;width:100px;text-align:left;font-size:14px;line-height:18px;color:#8c8c8c">湖南省</div>
<svg class="a" style="left:131px;top:52px" width="11" height="7" viewBox="0 0 11 7"><path d="M1 1 L5.5 5.5 L10 1" fill="none" stroke="#666" stroke-width="1.6"/></svg>
<div class="a" style="left:185px;top:40px;width:130px;height:30px;border:1px solid #dcdfe6;border-radius:4px"></div>
<div class="a" style="left:205px;top:46px;width:100px;text-align:left;font-size:14px;line-height:18px;color:#8c8c8c">请选择市</div>
<svg class="a" style="left:298px;top:52px" width="11" height="7" viewBox="0 0 11 7"><path d="M1 1 L5.5 5.5 L10 1" fill="none" stroke="#666" stroke-width="1.6"/></svg>
<div class="a" style="left:352px;top:40px;width:130px;height:30px;border:1px solid #dcdfe6;border-radius:4px"></div>
<div class="a" style="left:372px;top:46px;width:100px;text-align:left;font-size:14px;line-height:18px;color:#8c8c8c">请选择县/区</div>
<svg class="a" style="left:465px;top:52px" width="11" height="7" viewBox="0 0 11 7"><path d="M1 1 L5.5 5.5 L10 1" fill="none" stroke="#666" stroke-width="1.6"/></svg>
<div class="a" style="left:0;top:119px;width:500px;height:1px;background:#dde1e8"></div>
<div class="a" style="left:0px;top:80px;width:126px;height:40px;border:1px solid #dde1e8;border-bottom-color:#fff;background:#fff;border-radius:2px 2px 0 0"></div>
<div class="a" style="left:0px;top:92px;width:126px;text-align:center;font-size:14px;line-height:18px;color:#3d9ef2">灾害隐患统计</div>
<div class="a" style="left:136px;top:80px;width:126px;height:40px;border:1px solid #dde1e8;border-bottom-color:#dde1e8;background:#fff;border-radius:2px 2px 0 0"></div>
<div class="a" style="left:136px;top:92px;width:126px;text-align:center;font-size:14px;line-height:18px;color:#333">切坡建房统计</div>
<div class="a" style="left:272px;top:80px;width:98px;height:40px;border:1px solid #dde1e8;border-bottom-color:#dde1e8;background:#fff;border-radius:2px 2px 0 0"></div>
<div class="a" style="left:272px;top:92px;width:98px;text-align:center;font-size:14px;line-height:18px;color:#333">其他统计</div>
<div class="a" style="left:5px;top:135px;width:115px;height:49px;border-radius:5px;background:#3aabf6"></div>
<div class="a" style="left:5px;top:141px;width:115px;text-align:center;font-size:14px;line-height:18px;color:#fff">调查点</div>
<div class="a" style="left:5px;top:164px;width:115px;text-align:center;font-size:16px;line-height:20px;color:#fff">28462</div>
<div class="a" style="left:130px;top:135px;width:115px;height:49px;border-radius:5px;background:#eef3fc"></div>
<div class="a" style="left:130px;top:141px;width:115px;text-align:center;font-size:14px;line-height:18px;color:#8a8a8a">隐患点</div>
<div class="a" style="left:130px;top:164px;width:115px;text-align:center;font-size:16px;line-height:20px;color:#8a8a8a">18434</div>
<div class="a" style="left:255px;top:135px;width:115px;height:49px;border-radius:5px;background:#eef3fc"></div>
<div class="a" style="left:255px;top:141px;width:115px;text-align:center;font-size:14px;line-height:18px;color:#8a8a8a">速报点</div>
<div class="a" style="left:255px;top:164px;width:115px;text-align:center;font-size:16px;line-height:20px;color:#8a8a8a">541</div>
<div class="a" style="left:380px;top:135px;width:115px;height:49px;border-radius:5px;background:#eef3fc"></div>
<div class="a" style="left:380px;top:141px;width:115px;text-align:center;font-size:14px;line-height:18px;color:#8a8a8a">重要隐患点</div>
<div class="a" style="left:380px;top:164px;width:115px;text-align:center;font-size:16px;line-height:20px;color:#8a8a8a">183</div>
<div class="a" style="left:5px;top:190px;width:115px;height:49px;border-radius:5px;background:#eef3fc"></div>
<svg class="a" style="left:15px;top:201px" width="26" height="26" viewBox="0 0 26 26"><defs><linearGradient id="ig" x1="0" y1="0" x2="0" y2="1"><stop offset="0" stop-color="#a9c9ff"/><stop offset="1" stop-color="#5a8cf0"/></linearGradient><linearGradient id="og" x1="0" y1="0" x2="0" y2="1"><stop offset="0" stop-color="#ffd08a"/><stop offset="1" stop-color="#ff9a3c"/></linearGradient></defs><path d="M4 24 L18 6 C19 4 21 4 21 6 L24.5 24Z" fill="url(#ig)"/><path d="M1.5 21.5 L12 11 M2.5 18 L4 16.5 M5 15 L6 14" stroke="url(#ig)" stroke-width="2.2" stroke-linecap="round"/></svg>
<div class="a" style="left:40px;top:195px;width:80px;text-align:center;font-size:16px;line-height:20px;color:#6aa2f2">17601</div>
<div class="a" style="left:40px;top:219px;width:80px;text-align:center;font-size:14px;line-height:18px;color:#8a8a8a">滑坡</div>
<div class="a" style="left:130px;top:190px;width:115px;height:49px;border-radius:5px;background:#eef3fc"></div>
<svg class="a" style="left:140px;top:201px" width="26" height="26" viewBox="0 0 26 26"><path d="M1 23 L7.5 3 L14 23Z" fill="url(#ig)"/><circle cx="14" cy="10" r="2.2" fill="url(#ig)"/><circle cx="19" cy="14" r="1.8" fill="url(#ig)"/><circle cx="22" cy="19.5" r="2.6" fill="url(#ig)"/><circle cx="15.5" cy="18" r="1.3" fill="url(#ig)"/></svg>
<div class="a" style="left:165px;top:195px;width:80px;text-align:center;font-size:16px;line-height:20px;color:#6aa2f2">2578</div>
<div class="a" style="left:165px;top:219px;width:80px;text-align:center;font-size:14px;line-height:18px;color:#8a8a8a">崩塌</div>
<div class="a" style="left:255px;top:190px;width:115px;height:49px;border-radius:5px;background:#eef3fc"></div>
<svg class="a" style="left:265px;top:201px" width="26" height="26" viewBox="0 0 26 26"><path d="M1 4 L1 24 L23 24 Z" fill="url(#ig)"/><circle cx="6" cy="5" r="1.6" fill="url(#ig)"/><circle cx="11" cy="9" r="1.6" fill="url(#ig)"/><circle cx="15" cy="14" r="1.8" fill="url(#ig)"/><circle cx="19" cy="19" r="1.8" fill="url(#ig)"/></svg>
<div class="a" style="left:290px;top:195px;width:80px;text-align:center;font-size:16px;line-height:20px;color:#6aa2f2">856</div>
<div class="a" style="left:290px;top:219px;width:80px;text-align:center;font-size:14px;line-height:18px;color:#8a8a8a">泥石流</div>
<div class="a" style="left:380px;top:190px;width:115px;height:49px;border-radius:5px;background:#eef3fc"></div>
<svg class="a" style="left:390px;top:201px" width="26" height="26" viewBox="0 0 26 26"><path d="M1 6 L7 9 L13 7 L19 9 L25 6 V23 H1Z" fill="url(#ig)"/><circle cx="9" cy="9" r="2" fill="#eef3fc"/><circle cx="15" cy="11" r="2.2" fill="#eef3fc"/><circle cx="12" cy="14" r="1.4" fill="#eef3fc"/></svg>
<div class="a" style="left:415px;top:195px;width:80px;text-align:center;font-size:16px;line-height:20px;color:#6aa2f2">2231</div>
<div class="a" style="left:415px;top:219px;width:80px;text-align:center;font-size:14px;line-height:18px;color:#8a8a8a">地面塌陷</div>
<div class="a" style="left:5px;top:245px;width:115px;height:49px;border-radius:5px;background:#eef3fc"></div>
<svg class="a" style="left:15px;top:256px" width="26" height="26" viewBox="0 0 26 26"><path d="M3 4 H11.5 L10 9 L13 11 L11 15 L13 18 L11.5 24 H3 C1 24 1 22 1.3 20 L2 7 C2 5 2 4 3 4Z M14 4 H22 C24 4 24 5 24 7 L24.7 20 C25 22 25 24 23 24 H13.5 L15 18 L13 15 L15 11 L12 9Z" fill="url(#ig)"/></svg>
<div class="a" style="left:40px;top:250px;width:80px;text-align:center;font-size:16px;line-height:20px;color:#6aa2f2">110</div>
<div class="a" style="left:40px;top:274px;width:80px;text-align:center;font-size:14px;line-height:18px;color:#8a8a8a">地裂缝</div>
<div class="a" style="left:130px;top:245px;width:115px;height:49px;border-radius:5px;background:#eef3fc"></div>
<svg class="a" style="left:140px;top:256px" width="26" height="26" viewBox="0 0 26 26"><path d="M1 9 H7 C7 17 19 17 19 9 H25 V24 H1Z" fill="url(#ig)" transform="translate(0,1)"/><path d="M13 1 V11 M10 8 L13 11 L16 8" stroke="url(#ig)" stroke-width="1.8" fill="none"/></svg>
<div class="a" style="left:165px;top:250px;width:80px;text-align:center;font-size:16px;line-height:20px;color:#6aa2f2">85</div>
<div class="a" style="left:165px;top:274px;width:80px;text-align:center;font-size:14px;line-height:18px;color:#8a8a8a">地面沉降</div>
<div class="a" style="left:255px;top:245px;width:115px;height:49px;border-radius:5px;background:#eef3fc"></div>
<svg class="a" style="left:265px;top:256px" width="26" height="26" viewBox="0 0 26 26"><rect x="1" y="3" width="9" height="9" rx="1" fill="url(#ig)"/><circle cx="18.5" cy="7.5" r="5" fill="url(#ig)"/><rect x="1" y="15" width="9" height="9" rx="1" fill="url(#ig)"/><rect x="14" y="15" width="9" height="9" rx="1" fill="url(#ig)"/></svg>
<div class="a" style="left:290px;top:250px;width:80px;text-align:center;font-size:16px;line-height:20px;color:#6aa2f2">5001</div>
<div class="a" style="left:290px;top:274px;width:80px;text-align:center;font-size:14px;line-height:18px;color:#8a8a8a">其他</div>
<div class="a" style="left:380px;top:245px;width:115px;height:49px;border-radius:5px;background:#eef3fc"></div>
<svg class="a" style="left:390px;top:256px" width="26" height="26" viewBox="0 0 26 26"><circle cx="13" cy="14" r="11.5" fill="url(#og)"/><path d="M13 2.5 V14 L23.5 9 M13 14 L22 21" stroke="#eef3fc" stroke-width="1.6" fill="none"/></svg>
<div class="a" style="left:415px;top:250px;width:80px;text-align:center;font-size:16px;line-height:20px;color:#ff9d43">28462</div>
<div class="a" style="left:415px;top:274px;width:80px;text-align:center;font-size:14px;line-height:18px;color:#8a8a8a">总计</div>
<div class="a" style="left:0;top:311px;font-size:14px;line-height:18px;color:#3d9ef2">按规模等级统计</div>
<div class="a" style="left:138px;top:311px;font-size:14px;line-height:18px;color:#333">按灾情等级统计</div>
<div class="a" style="left:0;top:338px;width:500px;height:2px;background:#e4e8ee"></div>
<div class="a" style="left:0;top:337px;width:98px;height:3px;background:#3d9ef2"></div>
<div class="a" style="left:0;top:354px;width:500px;height:41px;background:#2384c6"></div>
<div class="a" style="left:-5px;top:366px;width:100px;text-align:center;font-size:14px;line-height:18px;color:#fff;font-weight:bold">类型</div>
<div class="a" style="left:75px;top:366px;width:100px;text-align:center;font-size:14px;line-height:18px;color:#fff;font-weight:bold">特大型</div>
<div class="a" style="left:145px;top:366px;width:100px;text-align:center;font-size:14px;line-height:18px;color:#fff;font-weight:bold">巨型</div>
<div class="a" style="left:220px;top:366px;width:100px;text-align:center;font-size:14px;line-height:18px;color:#fff;font-weight:bold">大型</div>
<div class="a" style="left:305px;top:366px;width:100px;text-align:center;font-size:14px;line-height:18px;color:#fff;font-weight:bold">中型</div>
<div class="a" style="left:400px;top:366px;width:100px;text-align:center;font-size:14px;line-height:18px;color:#fff;font-weight:bold">小型</div>
<div class="a" style="left:0;top:395px;width:483px;height:148px;overflow:hidden">
<div class="a" style="left:0;top:0px;width:483px;height:42px;background:#fff;border-bottom:1px solid #e9edf2"></div>
<div class="a" style="left:-5px;top:12px;width:100px;text-align:center;font-size:14px;line-height:18px;color:#666">滑坡</div>
<div class="a" style="left:75px;top:12px;width:100px;text-align:center;font-size:14px;line-height:18px;color:#666">0</div>
<div class="a" style="left:145px;top:12px;width:100px;text-align:center;font-size:14px;line-height:18px;color:#666">65</div>
<div class="a" style="left:220px;top:12px;width:100px;text-align:center;font-size:14px;line-height:18px;color:#666">0</div>
<div class="a" style="left:305px;top:12px;width:100px;text-align:center;font-size:14px;line-height:18px;color:#666">1161</div>
<div class="a" style="left:400px;top:12px;width:100px;text-align:center;font-size:14px;line-height:18px;color:#666">16375</div>
<div class="a" style="left:0;top:42px;width:483px;height:42px;background:#f8f9fb;border-bottom:1px solid #e9edf2"></div>
<div class="a" style="left:-5px;top:54px;width:100px;text-align:center;font-size:14px;line-height:18px;color:#666">崩塌</div>
<div class="a" style="left:75px;top:54px;width:100px;text-align:center;font-size:14px;line-height:18px;color:#666">0</div>
<div class="a" style="left:145px;top:54px;width:100px;text-align:center;font-size:14px;line-height:18px;color:#666">31</div>
<div class="a" style="left:220px;top:54px;width:100px;text-align:center;font-size:14px;line-height:18px;color:#666">3</div>
<div class="a" style="left:305px;top:54px;width:100px;text-align:center;font-size:14px;line-height:18px;color:#666">311</div>
<div class="a" style="left:400px;top:54px;width:100px;text-align:center;font-size:14px;line-height:18px;color:#666">2233</div>
<div class="a" style="left:0;top:84px;width:483px;height:42px;background:#fff;border-bottom:1px solid #e9edf2"></div>
<div class="a" style="left:-5px;top:96px;width:100px;text-align:center;font-size:14px;line-height:18px;color:#666">泥石流</div>
<div class="a" style="left:75px;top:96px;width:100px;text-align:center;font-size:14px;line-height:18px;color:#666">0</div>
<div class="a" style="left:145px;top:96px;width:100px;text-align:center;font-size:14px;line-height:18px;color:#666">26</div>
<div class="a" style="left:220px;top:96px;width:100px;text-align:center;font-size:14px;line-height:18px;color:#666">11</div>
<div class="a" style="left:305px;top:96px;width:100px;text-align:center;font-size:14px;line-height:18px;color:#666">184</div>
<div class="a" style="left:400px;top:96px;width:100px;text-align:center;font-size:14px;line-height:18px;color:#666">635</div>
<div class="a" style="left:0;top:126px;width:483px;height:42px;background:#f8f9fb;border-bottom:1px solid #e9edf2"></div>
<div class="a" style="left:-5px;top:138px;width:100px;text-align:center;font-size:14px;line-height:18px;color:#666">地面塌陷</div>
<div class="a" style="left:75px;top:138px;width:100px;text-align:center;font-size:14px;line-height:18px;color:#666">0</div>
<div class="a" style="left:145px;top:138px;width:100px;text-align:center;font-size:14px;line-height:18px;color:#666">75</div>
<div class="a" style="left:220px;top:138px;width:100px;text-align:center;font-size:14px;line-height:18px;color:#666">9</div>
<div class="a" style="left:305px;top:138px;width:100px;text-align:center;font-size:14px;line-height:18px;color:#666">395</div>
<div class="a" style="left:400px;top:138px;width:100px;text-align:center;font-size:14px;line-height:18px;color:#666">1752</div>
</div>
<div class="a" style="left:483px;top:395px;width:17px;height:148px;background:#f1f1f1"></div>
<div class="a" style="left:487px;top:413px;width:10px;height:50px;background:#c1c1c1"></div>
<svg class="a" style="left:487px;top:401px" width="9" height="6" viewBox="0 0 9 6"><path d="M0 5 L4.5 0 L9 5Z" fill="#a3a3a3"/></svg>
<svg class="a" style="left:487px;top:533px" width="9" height="6" viewBox="0 0 9 6"><path d="M0 0 L4.5 5 L9 0Z" fill="#505050"/></svg>
<div class="a" style="left:5px;top:545px;font-size:18px;line-height:24px;color:#333;font-weight:bold">调查点统计</div>
<div class="a" style="left:205px;top:549px;width:25px;height:13px;border-radius:3px;background:#3ca7f6"></div>
<div class="a" style="left:235px;top:547px;font-size:12px;line-height:16px;color:#333">调查点数量</div>
<svg class="a" style="left:370px;top:550px" width="16" height="17" viewBox="0 0 16 17"><path d="M3 1.5 H11 L14 4.5 V15.5 H3Z M5.5 7H11.5 M5.5 9.5H11.5 M5.5 12H11.5" fill="none" stroke="#666" stroke-width="1"/></svg>
<svg class="a" style="left:397px;top:550px" width="16" height="17" viewBox="0 0 16 17"><path d="M1 9 H4 L6 3 L9 12 L11 8 H14 M1 15H15" fill="none" stroke="#666" stroke-width="1"/></svg>
<svg class="a" style="left:424px;top:550px" width="16" height="17" viewBox="0 0 16 17"><path d="M2 14V9H4V14 M6 14V6H8V14 M10 14V3H12V14 M1 15.5H15" fill="none" stroke="#666" stroke-width="1"/></svg>
<svg class="a" style="left:451px;top:550px" width="16" height="17" viewBox="0 0 16 17"><path d="M13.5 6 A6 6 0 0 0 3 5 M2.5 10 A6 6 0 0 0 13 11 M13.5 2V6H9.5 M2.5 14V10H6.5" fill="none" stroke="#666" stroke-width="1.1"/></svg>
<svg class="a" style="left:478px;top:550px" width="16" height="17" viewBox="0 0 16 17"><path d="M8 1V12 M3.5 7.5 L8 12 L12.5 7.5 M1.5 11V15H14.5V11" fill="none" stroke="#666" stroke-width="1.1"/></svg>
<svg class="a" style="left:0;top:580px" width="500" height="240" viewBox="1410 670 500 240">
<text x="1452" y="867.5" text-anchor="end" font-size="12" fill="#6e7079" font-family="Liberation Sans, sans-serif">0</text>
<line x1="1460" y1="821.5" x2="1860" y2="821.5" stroke="#e0e6f1" stroke-width="1"/>
<text x="1452" y="825.0" text-anchor="end" font-size="12" fill="#6e7079" font-family="Liberation Sans, sans-serif">1,000</text>
<line x1="1460" y1="779.0" x2="1860" y2="779.0" stroke="#e0e6f1" stroke-width="1"/>
<text x="1452" y="782.5" text-anchor="end" font-size="12" fill="#6e7079" font-family="Liberation Sans, sans-serif">2,000</text>
<line x1="1460" y1="736.5" x2="1860" y2="736.5" stroke="#e0e6f1" stroke-width="1"/>
<text x="1452" y="740.0" text-anchor="end" font-size="12" fill="#6e7079" font-family="Liberation Sans, sans-serif">3,000</text>
<line x1="1460" y1="694.0" x2="1860" y2="694.0" stroke="#e0e6f1" stroke-width="1"/>
<text x="1452" y="697.5" text-anchor="end" font-size="12" fill="#6e7079" font-family="Liberation Sans, sans-serif">4,000</text>
<rect x="1464.3" y="807.2" width="20" height="56.8" fill="#3ca7f6"/>
<rect x="1492.9" y="780.5" width="20" height="83.5" fill="#3ca7f6"/>
<rect x="1521.4" y="826.6" width="20" height="37.4" fill="#3ca7f6"/>
<rect x="1550.0" y="762.3" width="20" height="101.7" fill="#3ca7f6"/>
<rect x="1578.6" y="723.6" width="20" height="140.4" fill="#3ca7f6"/>
<rect x="1607.1" y="809.0" width="20" height="55.0" fill="#3ca7f6"/>
<rect x="1635.7" y="793.3" width="20" height="70.7" fill="#3ca7f6"/>
<rect x="1664.3" y="794.1" width="20" height="69.9" fill="#3ca7f6"/>
<rect x="1692.9" y="812.7" width="20" height="51.3" fill="#3ca7f6"/>
<rect x="1721.4" y="749.0" width="20" height="115.0" fill="#3ca7f6"/>
<rect x="1750.0" y="765.5" width="20" height="98.5" fill="#3ca7f6"/>
<rect x="1778.6" y="710.3" width="20" height="153.7" fill="#3ca7f6"/>
<rect x="1807.1" y="763.4" width="20" height="100.6" fill="#3ca7f6"/>
<rect x="1835.7" y="782.9" width="20" height="81.1" fill="#3ca7f6"/>
<line x1="1460" y1="864.5" x2="1860" y2="864.5" stroke="#6e7079" stroke-width="1"/>
<line x1="1460.0" y1="864" x2="1460.0" y2="869" stroke="#6e7079" stroke-width="1"/>
<line x1="1488.6" y1="864" x2="1488.6" y2="869" stroke="#6e7079" stroke-width="1"/>
<line x1="1517.1" y1="864" x2="1517.1" y2="869" stroke="#6e7079" stroke-width="1"/>
<line x1="1545.7" y1="864" x2="1545.7" y2="869" stroke="#6e7079" stroke-width="1"/>
<line x1="1574.3" y1="864" x2="1574.3" y2="869" stroke="#6e7079" stroke-width="1"/>
<line x1="1602.9" y1="864" x2="1602.9" y2="869" stroke="#6e7079" stroke-width="1"/>
<line x1="1631.4" y1="864" x2="1631.4" y2="869" stroke="#6e7079" stroke-width="1"/>
<line x1="1660.0" y1="864" x2="1660.0" y2="869" stroke="#6e7079" stroke-width="1"/>
<line x1="1688.6" y1="864" x2="1688.6" y2="869" stroke="#6e7079" stroke-width="1"/>
<line x1="1717.1" y1="864" x2="1717.1" y2="869" stroke="#6e7079" stroke-width="1"/>
<line x1="1745.7" y1="864" x2="1745.7" y2="869" stroke="#6e7079" stroke-width="1"/>
<line x1="1774.3" y1="864" x2="1774.3" y2="869" stroke="#6e7079" stroke-width="1"/>
<line x1="1802.9" y1="864" x2="1802.9" y2="869" stroke="#6e7079" stroke-width="1"/>
<line x1="1831.4" y1="864" x2="1831.4" y2="869" stroke="#6e7079" stroke-width="1"/>
<line x1="1860.0" y1="864" x2="1860.0" y2="869" stroke="#6e7079" stroke-width="1"/>
<text transform="translate(1475.3,873) rotate(-40)" text-anchor="end" font-size="12" fill="#6e7079" font-family="Liberation Sans, sans-serif">长沙市</text>
<text transform="translate(1503.9,873) rotate(-40)" text-anchor="end" font-size="12" fill="#6e7079" font-family="Liberation Sans, sans-serif">株洲市</text>
<text transform="translate(1532.4,873) rotate(-40)" text-anchor="end" font-size="12" fill="#6e7079" font-family="Liberation Sans, sans-serif">湘潭市</text>
<text transform="translate(1561.0,873) rotate(-40)" text-anchor="end" font-size="12" fill="#6e7079" font-family="Liberation Sans, sans-serif">衡阳市</text>
<text transform="translate(1589.6,873) rotate(-40)" text-anchor="end" font-size="12" fill="#6e7079" font-family="Liberation Sans, sans-serif">邵阳市</text>
<text transform="translate(1618.1,873) rotate(-40)" text-anchor="end" font-size="12" fill="#6e7079" font-family="Liberation Sans, sans-serif">岳阳市</text>
<text transform="translate(1646.7,873) rotate(-40)" text-anchor="end" font-size="12" fill="#6e7079" font-family="Liberation Sans, sans-serif">常德市</text>
<text transform="translate(1675.3,873) rotate(-40)" text-anchor="end" font-size="12" fill="#6e7079" font-family="Liberation Sans, sans-serif">张家界市</text>
<text transform="translate(1703.9,873) rotate(-40)" text-anchor="end" font-size="12" fill="#6e7079" font-family="Liberation Sans, sans-serif">益阳市</text>
<text transform="translate(1732.4,873) rotate(-40)" text-anchor="end" font-size="12" fill="#6e7079" font-family="Liberation Sans, sans-serif">郴州市</text>
<text transform="translate(1761.0,873) rotate(-40)" text-anchor="end" font-size="12" fill="#6e7079" font-family="Liberation Sans, sans-serif">永州市</text>
<text transform="translate(1789.6,873) rotate(-40)" text-anchor="end" font-size="12" fill="#6e7079" font-family="Liberation Sans, sans-serif">怀化市</text>
<text transform="translate(1818.1,873) rotate(-40)" text-anchor="end" font-size="12" fill="#6e7079" font-family="Liberation Sans, sans-serif">娄底市</text>
<text transform="translate(1846.7,873) rotate(-40)" text-anchor="end" font-size="12" fill="#6e7079" font-family="Liberation Sans, sans-serif">湘西州</text>
</svg>
</div>
</body></html>
